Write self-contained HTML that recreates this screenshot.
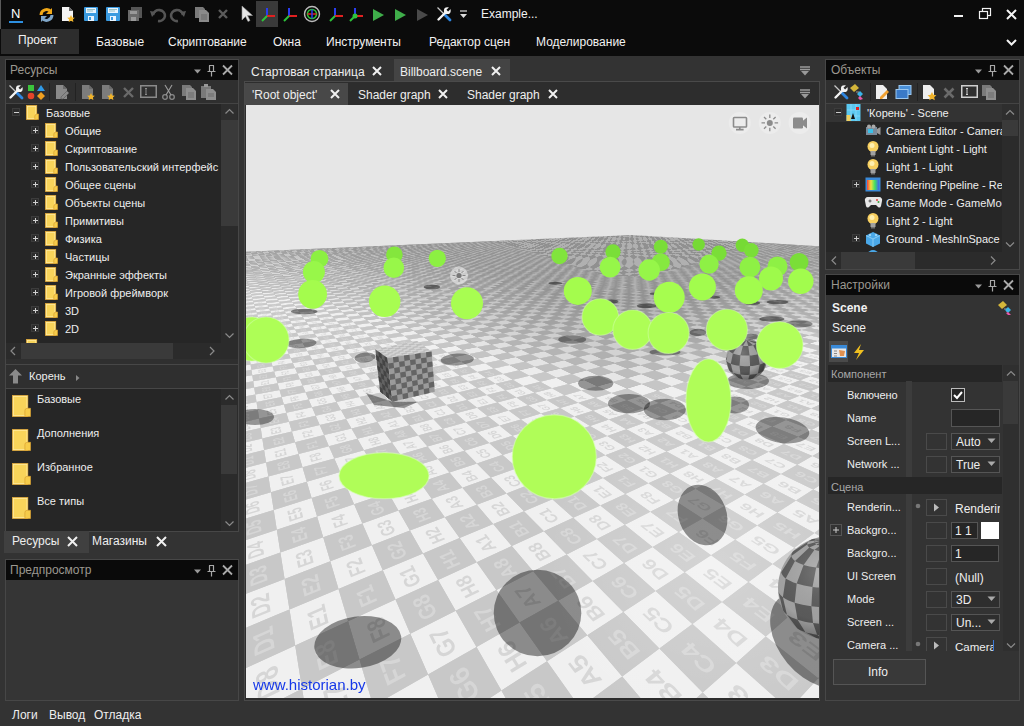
<!DOCTYPE html><html><head><meta charset="utf-8"><style>
*{margin:0;padding:0;box-sizing:border-box}
html,body{width:1024px;height:726px;overflow:hidden;background:#333;font-family:"Liberation Sans",sans-serif;font-size:12px;color:#e6e6e6}
.a{position:absolute}
.t{position:absolute;white-space:nowrap;line-height:14px}
svg{position:absolute;overflow:visible}
</style></head><body><div class="a" style="left:0;top:0;width:1024px;height:56px;background:#0b0b0b"></div><div class="a" style="left:0px;top:0px;width:1px;height:29px;background:#5a5a5a;"></div><div class="a" style="left:1px;top:29px;width:78px;height:25px;background:#2d2d2d;"></div><div class="t" style="left:96px;top:35px;font-size:12px;color:#f2f2f2;">Базовые</div><div class="t" style="left:168px;top:35px;font-size:12px;color:#f2f2f2;">Скриптование</div><div class="t" style="left:273px;top:35px;font-size:12px;color:#f2f2f2;">Окна</div><div class="t" style="left:326px;top:35px;font-size:12px;color:#f2f2f2;">Инструменты</div><div class="t" style="left:429px;top:35px;font-size:12px;color:#f2f2f2;">Редактор сцен</div><div class="t" style="left:536px;top:35px;font-size:12px;color:#f2f2f2;">Моделирование</div><div class="t" style="left:18px;top:33px;font-size:12px;color:#f2f2f2;">Проект</div><div class="t" style="left:481px;top:7px;font-size:12px;color:#f2f2f2;">Example...</div><div class="t" style="left:11px;top:7px;font-size:13px;color:#fff">N</div><div class="a" style="left:9px;top:21px;width:14px;height:2px;background:#2d8fe0;"></div><svg style="left:38px;top:6px" width="17" height="17" viewBox="0 0 17 17"><path d="M3 9a5.5 5.5 0 0 1 10-3" stroke="#f0a818" stroke-width="3" fill="none"/><path d="M14 2v6h-6z" fill="#f0a818"/><path d="M14 9a5.5 5.5 0 0 1-10 3" stroke="#7fa6c8" stroke-width="3" fill="none"/><path d="M3 16v-6h6z" fill="#7fa6c8"/></svg><svg style="left:60px;top:6px" width="16" height="16" viewBox="0 0 16 16"><path d="M2 1h7l4 4v10h-11z" fill="#f4f4f4"/><path d="M9 1v4h4" fill="#6a6a6a"/><path d="M11 9l1.2 2.4 2.6.3-1.9 1.8.5 2.5-2.4-1.3-2.4 1.3.5-2.5-1.9-1.8 2.6-.3z" fill="#f2b52b"/></svg><svg style="left:83px;top:6px" width="16" height="16" viewBox="0 0 16 16"><rect x="1" y="1" width="14" height="14" rx="1" fill="#3b9be0"/><rect x="3" y="2" width="10" height="5" fill="#e8f4ff"/><path d="M4 3.5h8M4 5h6" stroke="#7aa" stroke-width="0.7"/><rect x="5" y="10" width="6" height="5" fill="#e8f4ff"/><rect x="6" y="11" width="2" height="3" fill="#3b9be0"/></svg><svg style="left:105px;top:6px" width="16" height="16" viewBox="0 0 16 16"><rect x="1" y="1" width="14" height="14" rx="1" fill="#3b9be0"/><rect x="3" y="2" width="10" height="5" fill="#e8f4ff"/><path d="M4 3.5h8M4 5h6" stroke="#7aa" stroke-width="0.7"/><rect x="5" y="10" width="6" height="5" fill="#e8f4ff"/><rect x="6" y="11" width="2" height="3" fill="#3b9be0"/></svg><svg style="left:127px;top:6px" width="16" height="16" viewBox="0 0 16 16"><rect x="4" y="1" width="11" height="11" fill="#555"/><rect x="1" y="4" width="11" height="11" fill="#6a6a6a"/><rect x="3" y="5" width="7" height="3" fill="#999"/><rect x="4" y="11" width="5" height="4" fill="#999"/></svg><svg style="left:149px;top:6px" width="16" height="16" viewBox="0 0 16 16"><path d="M4 9a6 5.5 0 1 1 5 6" stroke="#555" stroke-width="2.6" fill="none"/><path d="M1 5l6 1-4 5z" fill="#555"/></svg><svg style="left:171px;top:6px" width="16" height="16" viewBox="0 0 16 16"><path d="M12 9a6 5.5 0 1 0 -5 6" stroke="#555" stroke-width="2.6" fill="none"/><path d="M15 5l-6 1 4 5z" fill="#555"/></svg><svg style="left:194px;top:6px" width="16" height="16" viewBox="0 0 16 16"><path d="M1 1h8l2 2v9h-10z" fill="#7a7a7a"/><path d="M5 4h7l3 3v9h-10z" fill="#8a8a8a"/><path d="M7 9h6M7 11h6M7 13h6" stroke="#666"/></svg><svg style="left:218px;top:9px" width="10" height="10" viewBox="0 0 10 10"><path d="M1 1L9 9M9 1L1 9" stroke="#5c5c5c" stroke-width="2.4"/></svg><svg style="left:240px;top:5px" width="14" height="18" viewBox="0 0 14 18"><path d="M2 1v14l3.5-3.5 2.5 5 2-1-2.5-5h5z" fill="#e6e6e6" stroke="#999" stroke-width="0.6"/></svg><div class="a" style="left:256px;top:1px;width:22px;height:26px;background:#3a3a3a;"></div><svg style="left:260px;top:6px" width="16" height="16" viewBox="0 0 16 16"><path d="M7 2v8" stroke="#2a3df0" stroke-width="2"/><path d="M7 10h8" stroke="#e02020" stroke-width="2"/><path d="M7 10l-5 5" stroke="#2ec43a" stroke-width="2"/></svg><svg style="left:282px;top:6px" width="16" height="16" viewBox="0 0 16 16"><path d="M7 2v8" stroke="#2a3df0" stroke-width="2"/><path d="M7 10h8" stroke="#e02020" stroke-width="2"/><path d="M7 10l-5 5" stroke="#2ec43a" stroke-width="2"/></svg><svg style="left:303px;top:5px" width="18" height="18" viewBox="0 0 18 18"><circle cx="9" cy="9" r="7.5" stroke="#bbb" stroke-width="1.4" fill="none"/><circle cx="9" cy="9" r="4.5" stroke="#2ec43a" stroke-width="1.6" fill="none"/><path d="M4.5 9h9" stroke="#e02020" stroke-width="1.5"/><path d="M9 4.5v9" stroke="#2a3df0" stroke-width="1.5"/></svg><svg style="left:328px;top:6px" width="16" height="16" viewBox="0 0 16 16"><path d="M7 2v8" stroke="#2a3df0" stroke-width="2"/><path d="M7 10h8" stroke="#e02020" stroke-width="2"/><path d="M7 10l-5 5" stroke="#2ec43a" stroke-width="2"/></svg><svg style="left:348px;top:6px" width="16" height="16" viewBox="0 0 16 16"><path d="M7 2v8" stroke="#2a3df0" stroke-width="2"/><path d="M7 10h8" stroke="#e02020" stroke-width="2"/><path d="M7 10l-5 5" stroke="#2ec43a" stroke-width="2"/><circle cx="7" cy="10" r="2.5" fill="#2ec43a"/></svg><svg style="left:371px;top:7px" width="14" height="16" viewBox="0 0 14 16"><path d="M2 2l11 6-11 6z" fill="#3fae4a"/></svg><svg style="left:393px;top:7px" width="14" height="16" viewBox="0 0 14 16"><path d="M2 2l11 6-11 6z" fill="#3fae4a"/></svg><svg style="left:415px;top:7px" width="14" height="16" viewBox="0 0 14 16"><path d="M2 2l11 6-11 6z" fill="#4a4a4a"/></svg><svg style="left:436px;top:6px" width="16" height="16" viewBox="0 0 16 16"><path d="M1.5 1.5L8 8" stroke="#c8c8c8" stroke-width="1.3"/><path d="M9 9L14 14" stroke="#2f86e0" stroke-width="2.8" stroke-linecap="round"/><path d="M2.5 13.5L9 7" stroke="#f4f4f4" stroke-width="2.4" stroke-linecap="round"/><circle cx="11.3" cy="4.7" r="3.4" fill="#f4f4f4"/><path d="M11.3 4.7L15.5 0.5" stroke="#0b0b0b" stroke-width="2.4"/></svg><svg style="left:459px;top:10px" width="9" height="9" viewBox="0 0 9 9"><path d="M1 1h7" stroke="#ddd" stroke-width="1.2"/><path d="M1 4h7l-3.5 4z" fill="#ddd"/></svg><div class="a" style="left:954px;top:15px;width:9px;height:2px;background:#f2f2f2;"></div><svg style="left:979px;top:8px" width="12" height="12" viewBox="0 0 12 12"><rect x="3.5" y="0.5" width="8" height="7" fill="none" stroke="#f2f2f2" stroke-width="1.2"/><rect x="0.5" y="3.5" width="8" height="7" fill="#0b0b0b" stroke="#f2f2f2" stroke-width="1.2"/></svg><svg style="left:1006px;top:9px" width="11" height="11" viewBox="0 0 11 11"><path d="M1 1L10 10M10 1L1 10" stroke="#f4f4f4" stroke-width="2"/></svg><svg style="left:1006px;top:39px" width="11" height="7" viewBox="0 0 11 7"><path d="M1 1l4.5 4.5L10 1" stroke="#f2f2f2" stroke-width="2" fill="none"/></svg><div class="a" style="left:5px;top:59px;width:234px;height:306px;border:1px solid #474747;background:#2f2f2f"></div><div class="a" style="left:6px;top:60px;width:232px;height:20px;background:#0a0a0a;"></div><div class="t" style="left:10px;top:63px;font-size:12px;color:#9c9890;">Ресурсы</div><svg style="left:192px;top:64px" width="44" height="14" viewBox="0 0 44 14"><path d="M2 5.5h7l-3.5 4z" fill="#9a9a9a"/><path d="M17 1.5h5M17.5 1.5v6M21.5 1.5v6M15.5 7.5h8M19.5 7.5v5" stroke="#a8a8a8" stroke-width="1.2" fill="none"/><path d="M31 1.5l9 9M40 1.5l-9 9" stroke="#aaaaaa" stroke-width="1.8"/></svg><div class="a" style="left:6px;top:103px;width:232px;height:1px;background:#444;"></div><svg style="left:8px;top:84px" width="16" height="16" viewBox="0 0 16 16"><path d="M1.5 1.5L8 8" stroke="#c8c8c8" stroke-width="1.3"/><path d="M9 9L14 14" stroke="#2f86e0" stroke-width="2.8" stroke-linecap="round"/><path d="M2.5 13.5L9 7" stroke="#f4f4f4" stroke-width="2.4" stroke-linecap="round"/><circle cx="11.3" cy="4.7" r="3.4" fill="#f4f4f4"/><path d="M11.3 4.7L15.5 0.5" stroke="#303030" stroke-width="2.4"/></svg><svg style="left:27px;top:84px" width="18" height="16" viewBox="0 0 18 16"><rect x="1" y="1" width="6" height="6" fill="#3cc43c"/><path d="M10 7l4-6 4 6z" fill="#2f9ae8"/><circle cx="4" cy="12" r="3.3" fill="#e5452a"/><path d="M14 8l4 4-4 4-4-4z" fill="#f0a020"/></svg><div class="a" style="left:49px;top:83px;width:1px;height:18px;background:#222;"></div><svg style="left:54px;top:84px" width="16" height="16" viewBox="0 0 16 16"><path d="M2 1h7l4 4v10h-11z" fill="#8a8a8a"/><path d="M9 1v4h4" fill="#6a6a6a"/><path d="M7 13l6-6 2 2-6 6h-2z" fill="#8a8a8a" stroke="#555" stroke-width="0.6"/></svg><div class="a" style="left:75px;top:83px;width:1px;height:18px;background:#222;"></div><svg style="left:80px;top:84px" width="16" height="16" viewBox="0 0 16 16"><path d="M2 1h7l4 4v10h-11z" fill="#7c7c7c"/><path d="M9 1v4h4" fill="#6a6a6a"/><path d="M11 9l1.2 2.4 2.6.3-1.9 1.8.5 2.5-2.4-1.3-2.4 1.3.5-2.5-1.9-1.8 2.6-.3z" fill="#f2b52b"/></svg><svg style="left:100px;top:84px" width="16" height="16" viewBox="0 0 16 16"><path d="M2 1h7l4 4v10h-11z" fill="#7c7c7c"/><path d="M9 1v4h4" fill="#6a6a6a"/><path d="M11 9l1.2 2.4 2.6.3-1.9 1.8.5 2.5-2.4-1.3-2.4 1.3.5-2.5-1.9-1.8 2.6-.3z" fill="#f2b52b"/></svg><svg style="left:123px;top:87px" width="11" height="11" viewBox="0 0 11 11"><path d="M1 1L10 10M10 1L1 10" stroke="#6a6a6a" stroke-width="2.4"/></svg><svg style="left:140px;top:85px" width="17" height="13" viewBox="0 0 17 13"><rect x="0.75" y="0.75" width="15.5" height="11.5" fill="none" stroke="#8a8a8a" stroke-width="1.5"/><path d="M5 3.5h2M6 3.5v6M5 9.5h2" stroke="#8a8a8a"/></svg><svg style="left:162px;top:84px" width="13" height="16" viewBox="0 0 13 16"><circle cx="3" cy="13" r="2.3" stroke="#888" fill="none" stroke-width="1.3"/><circle cx="10" cy="13" r="2.3" stroke="#888" fill="none" stroke-width="1.3"/><path d="M4 11L10 1M9 11L3 1" stroke="#999" stroke-width="1.2"/></svg><svg style="left:181px;top:84px" width="16" height="16" viewBox="0 0 16 16"><path d="M1 1h8l2 2v9h-10z" fill="#7a7a7a"/><path d="M5 4h7l3 3v9h-10z" fill="#8e8e8e"/><path d="M7 9h6M7 11h6M7 13h6" stroke="#6a6a6a"/></svg><svg style="left:200px;top:84px" width="16" height="16" viewBox="0 0 16 16"><rect x="1" y="2" width="10" height="12" fill="#7a7a7a"/><rect x="4" y="0" width="4" height="3" fill="#999"/><path d="M6 5h7l3 3v8h-10z" fill="#8e8e8e"/><path d="M8 10h6M8 12h6" stroke="#6a6a6a"/></svg><div class="a" style="left:6px;top:104px;width:215px;height:239px;background:#262626;"></div><div class="a" style="left:221px;top:104px;width:17px;height:239px;background:#2b2b2b;"></div><div class="a" style="left:221px;top:104px;width:16px;height:16px;background:#2e2e2e;"></div><div class="a" style="left:221px;top:120px;width:17px;height:106px;background:#3a3a3a;"></div><svg style="left:221px;top:103px" width="17" height="17" viewBox="0 0 17 17"><path d="M4.5 10.5l4-4 4 4" stroke="#8a8a8a" stroke-width="1.2" fill="none"/></svg><svg style="left:221px;top:327px" width="17" height="17" viewBox="0 0 17 17"><path d="M4.5 6.5l4 4 4-4" stroke="#8a8a8a" stroke-width="1.2" fill="none"/></svg><svg style="left:12px;top:108px" width="8" height="8" viewBox="0 0 8 8"><rect x="0.5" y="0.5" width="7" height="7" fill="#2c2c2c" stroke="#3c3c3c"/><path d="M2 4.5h5" stroke="#d0d0d0"/></svg><svg style="left:26px;top:105px" width="13" height="15" viewBox="0 0 13 15"><rect x="0.5" y="0.5" width="10.2" height="14" fill="#f8d45a" stroke="#d9a030" stroke-width="0.8"/><rect x="1.3" y="1.3" width="8.6" height="12.4" fill="none" stroke="#ffeaa0" stroke-width="0.9"/><path d="M8.8 14.5V11.3q0-2 2-2.3h1.6999999999999993V14.5z" fill="#f6cc4a" stroke="#d9a030" stroke-width="0.7"/></svg><div class="t" style="left:46px;top:106px;font-size:11px;color:#eeeeee;">Базовые</div><svg style="left:31px;top:126px" width="8" height="8" viewBox="0 0 8 8"><rect x="0.5" y="0.5" width="7" height="7" fill="#2c2c2c" stroke="#3c3c3c"/><path d="M2 4.5h5" stroke="#d0d0d0"/><path d="M4.5 2v5" stroke="#d0d0d0"/></svg><svg style="left:45px;top:123px" width="13" height="15" viewBox="0 0 13 15"><rect x="0.5" y="0.5" width="10.2" height="14" fill="#f8d45a" stroke="#d9a030" stroke-width="0.8"/><rect x="1.3" y="1.3" width="8.6" height="12.4" fill="none" stroke="#ffeaa0" stroke-width="0.9"/><path d="M8.8 14.5V11.3q0-2 2-2.3h1.6999999999999993V14.5z" fill="#f6cc4a" stroke="#d9a030" stroke-width="0.7"/></svg><div class="t" style="left:65px;top:124px;font-size:11px;color:#eeeeee;">Общие</div><svg style="left:31px;top:144px" width="8" height="8" viewBox="0 0 8 8"><rect x="0.5" y="0.5" width="7" height="7" fill="#2c2c2c" stroke="#3c3c3c"/><path d="M2 4.5h5" stroke="#d0d0d0"/><path d="M4.5 2v5" stroke="#d0d0d0"/></svg><svg style="left:45px;top:141px" width="13" height="15" viewBox="0 0 13 15"><rect x="0.5" y="0.5" width="10.2" height="14" fill="#f8d45a" stroke="#d9a030" stroke-width="0.8"/><rect x="1.3" y="1.3" width="8.6" height="12.4" fill="none" stroke="#ffeaa0" stroke-width="0.9"/><path d="M8.8 14.5V11.3q0-2 2-2.3h1.6999999999999993V14.5z" fill="#f6cc4a" stroke="#d9a030" stroke-width="0.7"/></svg><div class="t" style="left:65px;top:142px;font-size:11px;color:#eeeeee;">Скриптование</div><svg style="left:31px;top:162px" width="8" height="8" viewBox="0 0 8 8"><rect x="0.5" y="0.5" width="7" height="7" fill="#2c2c2c" stroke="#3c3c3c"/><path d="M2 4.5h5" stroke="#d0d0d0"/><path d="M4.5 2v5" stroke="#d0d0d0"/></svg><svg style="left:45px;top:159px" width="13" height="15" viewBox="0 0 13 15"><rect x="0.5" y="0.5" width="10.2" height="14" fill="#f8d45a" stroke="#d9a030" stroke-width="0.8"/><rect x="1.3" y="1.3" width="8.6" height="12.4" fill="none" stroke="#ffeaa0" stroke-width="0.9"/><path d="M8.8 14.5V11.3q0-2 2-2.3h1.6999999999999993V14.5z" fill="#f6cc4a" stroke="#d9a030" stroke-width="0.7"/></svg><div class="t" style="left:65px;top:160px;font-size:11px;color:#eeeeee;">Пользовательский интерфейс</div><svg style="left:31px;top:180px" width="8" height="8" viewBox="0 0 8 8"><rect x="0.5" y="0.5" width="7" height="7" fill="#2c2c2c" stroke="#3c3c3c"/><path d="M2 4.5h5" stroke="#d0d0d0"/><path d="M4.5 2v5" stroke="#d0d0d0"/></svg><svg style="left:45px;top:177px" width="13" height="15" viewBox="0 0 13 15"><rect x="0.5" y="0.5" width="10.2" height="14" fill="#f8d45a" stroke="#d9a030" stroke-width="0.8"/><rect x="1.3" y="1.3" width="8.6" height="12.4" fill="none" stroke="#ffeaa0" stroke-width="0.9"/><path d="M8.8 14.5V11.3q0-2 2-2.3h1.6999999999999993V14.5z" fill="#f6cc4a" stroke="#d9a030" stroke-width="0.7"/></svg><div class="t" style="left:65px;top:178px;font-size:11px;color:#eeeeee;">Общее сцены</div><svg style="left:31px;top:198px" width="8" height="8" viewBox="0 0 8 8"><rect x="0.5" y="0.5" width="7" height="7" fill="#2c2c2c" stroke="#3c3c3c"/><path d="M2 4.5h5" stroke="#d0d0d0"/><path d="M4.5 2v5" stroke="#d0d0d0"/></svg><svg style="left:45px;top:195px" width="13" height="15" viewBox="0 0 13 15"><rect x="0.5" y="0.5" width="10.2" height="14" fill="#f8d45a" stroke="#d9a030" stroke-width="0.8"/><rect x="1.3" y="1.3" width="8.6" height="12.4" fill="none" stroke="#ffeaa0" stroke-width="0.9"/><path d="M8.8 14.5V11.3q0-2 2-2.3h1.6999999999999993V14.5z" fill="#f6cc4a" stroke="#d9a030" stroke-width="0.7"/></svg><div class="t" style="left:65px;top:196px;font-size:11px;color:#eeeeee;">Объекты сцены</div><svg style="left:31px;top:216px" width="8" height="8" viewBox="0 0 8 8"><rect x="0.5" y="0.5" width="7" height="7" fill="#2c2c2c" stroke="#3c3c3c"/><path d="M2 4.5h5" stroke="#d0d0d0"/><path d="M4.5 2v5" stroke="#d0d0d0"/></svg><svg style="left:45px;top:213px" width="13" height="15" viewBox="0 0 13 15"><rect x="0.5" y="0.5" width="10.2" height="14" fill="#f8d45a" stroke="#d9a030" stroke-width="0.8"/><rect x="1.3" y="1.3" width="8.6" height="12.4" fill="none" stroke="#ffeaa0" stroke-width="0.9"/><path d="M8.8 14.5V11.3q0-2 2-2.3h1.6999999999999993V14.5z" fill="#f6cc4a" stroke="#d9a030" stroke-width="0.7"/></svg><div class="t" style="left:65px;top:214px;font-size:11px;color:#eeeeee;">Примитивы</div><svg style="left:31px;top:234px" width="8" height="8" viewBox="0 0 8 8"><rect x="0.5" y="0.5" width="7" height="7" fill="#2c2c2c" stroke="#3c3c3c"/><path d="M2 4.5h5" stroke="#d0d0d0"/><path d="M4.5 2v5" stroke="#d0d0d0"/></svg><svg style="left:45px;top:231px" width="13" height="15" viewBox="0 0 13 15"><rect x="0.5" y="0.5" width="10.2" height="14" fill="#f8d45a" stroke="#d9a030" stroke-width="0.8"/><rect x="1.3" y="1.3" width="8.6" height="12.4" fill="none" stroke="#ffeaa0" stroke-width="0.9"/><path d="M8.8 14.5V11.3q0-2 2-2.3h1.6999999999999993V14.5z" fill="#f6cc4a" stroke="#d9a030" stroke-width="0.7"/></svg><div class="t" style="left:65px;top:232px;font-size:11px;color:#eeeeee;">Физика</div><svg style="left:31px;top:252px" width="8" height="8" viewBox="0 0 8 8"><rect x="0.5" y="0.5" width="7" height="7" fill="#2c2c2c" stroke="#3c3c3c"/><path d="M2 4.5h5" stroke="#d0d0d0"/><path d="M4.5 2v5" stroke="#d0d0d0"/></svg><svg style="left:45px;top:249px" width="13" height="15" viewBox="0 0 13 15"><rect x="0.5" y="0.5" width="10.2" height="14" fill="#f8d45a" stroke="#d9a030" stroke-width="0.8"/><rect x="1.3" y="1.3" width="8.6" height="12.4" fill="none" stroke="#ffeaa0" stroke-width="0.9"/><path d="M8.8 14.5V11.3q0-2 2-2.3h1.6999999999999993V14.5z" fill="#f6cc4a" stroke="#d9a030" stroke-width="0.7"/></svg><div class="t" style="left:65px;top:250px;font-size:11px;color:#eeeeee;">Частицы</div><svg style="left:31px;top:270px" width="8" height="8" viewBox="0 0 8 8"><rect x="0.5" y="0.5" width="7" height="7" fill="#2c2c2c" stroke="#3c3c3c"/><path d="M2 4.5h5" stroke="#d0d0d0"/><path d="M4.5 2v5" stroke="#d0d0d0"/></svg><svg style="left:45px;top:267px" width="13" height="15" viewBox="0 0 13 15"><rect x="0.5" y="0.5" width="10.2" height="14" fill="#f8d45a" stroke="#d9a030" stroke-width="0.8"/><rect x="1.3" y="1.3" width="8.6" height="12.4" fill="none" stroke="#ffeaa0" stroke-width="0.9"/><path d="M8.8 14.5V11.3q0-2 2-2.3h1.6999999999999993V14.5z" fill="#f6cc4a" stroke="#d9a030" stroke-width="0.7"/></svg><div class="t" style="left:65px;top:268px;font-size:11px;color:#eeeeee;">Экранные эффекты</div><svg style="left:31px;top:288px" width="8" height="8" viewBox="0 0 8 8"><rect x="0.5" y="0.5" width="7" height="7" fill="#2c2c2c" stroke="#3c3c3c"/><path d="M2 4.5h5" stroke="#d0d0d0"/><path d="M4.5 2v5" stroke="#d0d0d0"/></svg><svg style="left:45px;top:285px" width="13" height="15" viewBox="0 0 13 15"><rect x="0.5" y="0.5" width="10.2" height="14" fill="#f8d45a" stroke="#d9a030" stroke-width="0.8"/><rect x="1.3" y="1.3" width="8.6" height="12.4" fill="none" stroke="#ffeaa0" stroke-width="0.9"/><path d="M8.8 14.5V11.3q0-2 2-2.3h1.6999999999999993V14.5z" fill="#f6cc4a" stroke="#d9a030" stroke-width="0.7"/></svg><div class="t" style="left:65px;top:286px;font-size:11px;color:#eeeeee;">Игровой фреймворк</div><svg style="left:31px;top:306px" width="8" height="8" viewBox="0 0 8 8"><rect x="0.5" y="0.5" width="7" height="7" fill="#2c2c2c" stroke="#3c3c3c"/><path d="M2 4.5h5" stroke="#d0d0d0"/><path d="M4.5 2v5" stroke="#d0d0d0"/></svg><svg style="left:45px;top:303px" width="13" height="15" viewBox="0 0 13 15"><rect x="0.5" y="0.5" width="10.2" height="14" fill="#f8d45a" stroke="#d9a030" stroke-width="0.8"/><rect x="1.3" y="1.3" width="8.6" height="12.4" fill="none" stroke="#ffeaa0" stroke-width="0.9"/><path d="M8.8 14.5V11.3q0-2 2-2.3h1.6999999999999993V14.5z" fill="#f6cc4a" stroke="#d9a030" stroke-width="0.7"/></svg><div class="t" style="left:65px;top:304px;font-size:11px;color:#eeeeee;">3D</div><svg style="left:31px;top:324px" width="8" height="8" viewBox="0 0 8 8"><rect x="0.5" y="0.5" width="7" height="7" fill="#2c2c2c" stroke="#3c3c3c"/><path d="M2 4.5h5" stroke="#d0d0d0"/><path d="M4.5 2v5" stroke="#d0d0d0"/></svg><svg style="left:45px;top:321px" width="13" height="15" viewBox="0 0 13 15"><rect x="0.5" y="0.5" width="10.2" height="14" fill="#f8d45a" stroke="#d9a030" stroke-width="0.8"/><rect x="1.3" y="1.3" width="8.6" height="12.4" fill="none" stroke="#ffeaa0" stroke-width="0.9"/><path d="M8.8 14.5V11.3q0-2 2-2.3h1.6999999999999993V14.5z" fill="#f6cc4a" stroke="#d9a030" stroke-width="0.7"/></svg><div class="t" style="left:65px;top:322px;font-size:11px;color:#eeeeee;">2D</div><svg style="left:26px;top:339px" width="13" height="15" viewBox="0 0 13 15"><rect x="0.5" y="0.5" width="10.2" height="14" fill="#f8d45a" stroke="#d9a030" stroke-width="0.8"/><rect x="1.3" y="1.3" width="8.6" height="12.4" fill="none" stroke="#ffeaa0" stroke-width="0.9"/><path d="M8.8 14.5V11.3q0-2 2-2.3h1.6999999999999993V14.5z" fill="#f6cc4a" stroke="#d9a030" stroke-width="0.7"/></svg><div class="a" style="left:6px;top:343px;width:215px;height:16px;background:#2b2b2b;"></div><div class="a" style="left:21px;top:343px;width:152px;height:16px;background:#3a3a3a;"></div><div class="a" style="left:221px;top:343px;width:17px;height:16px;background:#2b2b2b;"></div><svg style="left:5px;top:343px" width="16" height="16" viewBox="0 0 16 16"><path d="M10 4l-4 4 4 4" stroke="#8a8a8a" stroke-width="1.2" fill="none"/></svg><svg style="left:204px;top:343px" width="16" height="16" viewBox="0 0 16 16"><path d="M6 4l4 4-4 4" stroke="#8a8a8a" stroke-width="1.2" fill="none"/></svg><div class="a" style="left:6px;top:359px;width:232px;height:5px;background:#2f2f2f;"></div><div class="a" style="left:5px;top:364px;width:234px;height:168px;border:1px solid #474747;background:#262626"></div><div class="a" style="left:6px;top:365px;width:232px;height:23px;background:#2f2f2f;"></div><div class="a" style="left:6px;top:388px;width:232px;height:1px;background:#474747;"></div><svg style="left:8px;top:368px" width="15" height="16" viewBox="0 0 15 16"><path d="M7.5 1l6.5 6.5h-4v8h-5v-8h-4z" fill="#8a8a8a"/></svg><div class="t" style="left:29px;top:369px;font-size:11px;color:#eeeeee;">Корень</div><svg style="left:76px;top:375px" width="4" height="6" viewBox="0 0 4 6"><path d="M0 0l3.5 3L0 6z" fill="#888"/></svg><svg style="left:12px;top:395px" width="19" height="22" viewBox="0 0 19 22"><rect x="0.5" y="0.5" width="15.3" height="21" fill="#f8d45a" stroke="#d9a030" stroke-width="0.8"/><rect x="1.3" y="1.3" width="13.700000000000001" height="19.4" fill="none" stroke="#ffeaa0" stroke-width="0.9"/><path d="M12.9 21.5V15.6q0-2 2-2.3h3.5999999999999996V21.5z" fill="#f6cc4a" stroke="#d9a030" stroke-width="0.7"/></svg><div class="t" style="left:37px;top:392px;font-size:11px;color:#eeeeee;">Базовые</div><svg style="left:12px;top:429px" width="19" height="22" viewBox="0 0 19 22"><rect x="0.5" y="0.5" width="15.3" height="21" fill="#f8d45a" stroke="#d9a030" stroke-width="0.8"/><rect x="1.3" y="1.3" width="13.700000000000001" height="19.4" fill="none" stroke="#ffeaa0" stroke-width="0.9"/><path d="M12.9 21.5V15.6q0-2 2-2.3h3.5999999999999996V21.5z" fill="#f6cc4a" stroke="#d9a030" stroke-width="0.7"/></svg><div class="t" style="left:37px;top:426px;font-size:11px;color:#eeeeee;">Дополнения</div><svg style="left:12px;top:463px" width="19" height="22" viewBox="0 0 19 22"><rect x="0.5" y="0.5" width="15.3" height="21" fill="#f8d45a" stroke="#d9a030" stroke-width="0.8"/><rect x="1.3" y="1.3" width="13.700000000000001" height="19.4" fill="none" stroke="#ffeaa0" stroke-width="0.9"/><path d="M12.9 21.5V15.6q0-2 2-2.3h3.5999999999999996V21.5z" fill="#f6cc4a" stroke="#d9a030" stroke-width="0.7"/></svg><div class="t" style="left:37px;top:460px;font-size:11px;color:#eeeeee;">Избранное</div><svg style="left:12px;top:497px" width="19" height="22" viewBox="0 0 19 22"><rect x="0.5" y="0.5" width="15.3" height="21" fill="#f8d45a" stroke="#d9a030" stroke-width="0.8"/><rect x="1.3" y="1.3" width="13.700000000000001" height="19.4" fill="none" stroke="#ffeaa0" stroke-width="0.9"/><path d="M12.9 21.5V15.6q0-2 2-2.3h3.5999999999999996V21.5z" fill="#f6cc4a" stroke="#d9a030" stroke-width="0.7"/></svg><div class="t" style="left:37px;top:494px;font-size:11px;color:#eeeeee;">Все типы</div><div class="a" style="left:221px;top:389px;width:17px;height:142px;background:#2b2b2b;"></div><div class="a" style="left:221px;top:405px;width:16px;height:69px;background:#3a3a3a;"></div><svg style="left:221px;top:389px" width="17" height="17" viewBox="0 0 17 17"><path d="M4.5 10.5l4-4 4 4" stroke="#8a8a8a" stroke-width="1.2" fill="none"/></svg><svg style="left:221px;top:515px" width="17" height="17" viewBox="0 0 17 17"><path d="M4.5 6.5l4 4 4-4" stroke="#8a8a8a" stroke-width="1.2" fill="none"/></svg><div class="a" style="left:4px;top:531px;width:85px;height:22px;background:#404040;"></div><div class="t" style="left:12px;top:534px;font-size:12px;color:#eeeeee;">Ресурсы</div><svg style="left:67px;top:536px" width="11" height="11" viewBox="0 0 11 11"><path d="M1 1L10 10M10 1L1 10" stroke="#f0f0f0" stroke-width="2"/></svg><div class="t" style="left:92px;top:534px;font-size:12px;color:#eeeeee;">Магазины</div><svg style="left:156px;top:536px" width="11" height="11" viewBox="0 0 11 11"><path d="M1 1L10 10M10 1L1 10" stroke="#f0f0f0" stroke-width="2"/></svg><div class="a" style="left:5px;top:559px;width:234px;height:142px;border:1px solid #474747;background:#353535"></div><div class="a" style="left:6px;top:560px;width:232px;height:20px;background:#0a0a0a;"></div><div class="t" style="left:10px;top:563px;font-size:12px;color:#9c9890;">Предпросмотр</div><svg style="left:192px;top:564px" width="44" height="14" viewBox="0 0 44 14"><path d="M2 5.5h7l-3.5 4z" fill="#9a9a9a"/><path d="M17 1.5h5M17.5 1.5v6M21.5 1.5v6M15.5 7.5h8M19.5 7.5v5" stroke="#a8a8a8" stroke-width="1.2" fill="none"/><path d="M31 1.5l9 9M40 1.5l-9 9" stroke="#aaaaaa" stroke-width="1.8"/></svg><div class="t" style="left:12px;top:708px;font-size:12px;color:#eeeeee;">Логи</div><div class="t" style="left:49px;top:708px;font-size:12px;color:#eeeeee;">Вывод</div><div class="t" style="left:94px;top:708px;font-size:12px;color:#eeeeee;">Отладка</div><div class="a" style="left:244px;top:81px;width:576px;height:620px;border:1px solid #4a4a4a;background:#2d2d2d"></div><div class="a" style="left:394px;top:59px;width:116px;height:22px;background:#444"></div><div class="t" style="left:251px;top:65px;font-size:12px;color:#eee">Стартовая страница</div><div class="t" style="left:400px;top:65px;font-size:12px;color:#eee">Billboard.scene</div><div class="a" style="left:245px;top:83px;width:103px;height:22px;background:#484848"></div><div class="t" style="left:252px;top:88px;font-size:12px;color:#eee">'Root object'</div><div class="t" style="left:358px;top:88px;font-size:12px;color:#eee">Shader graph</div><div class="t" style="left:467px;top:88px;font-size:12px;color:#eee">Shader graph</div><svg style="left:372px;top:66px" width="10" height="10" viewBox="0 0 10 10"><path d="M1 1L9 9M9 1L1 9" stroke="#f0f0f0" stroke-width="2"/></svg><svg style="left:491px;top:66px" width="10" height="10" viewBox="0 0 10 10"><path d="M1 1L9 9M9 1L1 9" stroke="#f0f0f0" stroke-width="2"/></svg><svg style="left:330px;top:89px" width="10" height="10" viewBox="0 0 10 10"><path d="M1 1L9 9M9 1L1 9" stroke="#f0f0f0" stroke-width="2"/></svg><svg style="left:438px;top:89px" width="10" height="10" viewBox="0 0 10 10"><path d="M1 1L9 9M9 1L1 9" stroke="#f0f0f0" stroke-width="2"/></svg><svg style="left:548px;top:89px" width="10" height="10" viewBox="0 0 10 10"><path d="M1 1L9 9M9 1L1 9" stroke="#f0f0f0" stroke-width="2"/></svg><svg style="left:799px;top:66px" width="12" height="10" viewBox="0 0 12 10"><path d="M1 1h10M1 3.5h10" stroke="#9a9a9a" stroke-width="1.3"/><path d="M2 5h8l-4 4.5z" fill="#9a9a9a"/></svg><svg style="left:799px;top:89px" width="12" height="10" viewBox="0 0 12 10"><path d="M1 1h10M1 3.5h10" stroke="#9a9a9a" stroke-width="1.3"/><path d="M2 5h8l-4 4.5z" fill="#9a9a9a"/></svg><div class="a" style="left:246px;top:105px;width:573px;height:593px;background:#e6e6e6"></div><div class="a" style="left:0;top:0;width:1024px;height:726px;clip-path:polygon(246px 251.8px,632px 235px,819px 246.2px,819px 698px,246px 698px)"><div class="a" style="left:0;top:0;width:944px;height:864px;transform-origin:0 0;transform:matrix3d(47.1088276,7.76108809,0,0.0376315527,13.0621005,12.0627506,0,0.057860553,0,0,1,0,-343.713026,2458.35514,0,1);background:repeating-conic-gradient(#b0b0b0 0 25%,#909090 0 50%);background-size:16px 16px"></div></div><svg style="left:246px;top:105px;overflow:hidden" width="573" height="593" viewBox="246 105 573 593"><g style="font-family:'Liberation Sans';font-size:16px;font-weight:bold;fill:#d6d6d6" text-anchor="middle" dominant-baseline="central"><defs><clipPath id="fc"><polygon points="246,251.8 632,235 818,246.2 819,246.2 819,699 246,699"/></clipPath></defs><g clip-path="url(#fc)"><path fill="#c8c8c8" d="M238.1 782.6L310.5 741.5L302.1 688.7L236.8 721.9zM235.7 672.8L295.2 645.5L289.5 609.4L234.9 632.3zM234.1 598.3L284.6 578.9L280.4 552.6L233.5 569.3zM233.0 544.4L276.8 529.8L273.7 509.9L232.5 522.7zM232.1 503.6L270.9 492.3L268.4 476.6L231.7 486.7zM231.4 471.6L266.1 462.6L264.1 449.9L231.1 458.1zM230.9 445.9L262.3 438.5L260.7 428.1L230.6 434.8zM230.4 424.7L259.1 418.6L257.8 409.9L230.2 415.5zM230.0 407.1L256.5 401.9L255.3 394.5L229.9 399.3zM229.7 392.1L254.2 387.6L253.2 381.2L229.6 385.4zM229.4 379.2L252.3 375.3L251.4 369.8L229.3 373.4zM229.2 367.9L250.6 364.6L249.8 359.7L229.1 362.9zM229.0 358.1L249.1 355.1L248.4 350.8L228.9 353.7zM228.8 349.4L247.7 346.8L247.1 343.0L228.7 345.5zM228.6 341.7L246.5 339.3L246.0 335.9L228.5 338.2zM302.1 688.7L359.5 659.6L348.1 621.2L295.2 645.5zM289.5 609.4L338.5 588.9L330.3 561.2L284.6 578.9zM280.4 552.6L323.2 537.3L317.1 516.5L276.8 529.8zM273.7 509.9L311.6 498.1L306.8 481.8L270.9 492.3zM268.4 476.6L302.5 467.2L298.6 454.1L266.1 462.6zM264.1 449.9L295.1 442.3L291.9 431.6L262.3 438.5zM260.7 428.1L289.0 421.8L286.3 412.8L259.1 418.6zM257.8 409.9L283.9 404.5L281.6 396.9L256.5 401.9zM255.3 394.5L279.5 389.9L277.6 383.3L254.2 387.6zM253.2 381.2L275.8 377.3L274.1 371.6L252.3 375.3zM251.4 369.8L272.5 366.3L271.1 361.3L250.6 364.6zM249.8 359.7L269.7 356.7L268.4 352.3L249.1 355.1zM248.4 350.8L267.2 348.1L266.0 344.2L247.7 346.8zM247.1 343.0L264.9 340.5L263.9 337.0L246.5 339.3zM246.0 335.9L262.9 333.7L261.9 330.6L245.5 332.6zM245.0 329.5L261.1 327.6L260.2 324.7L244.5 326.6zM244.1 323.8L259.4 322.0L258.6 319.4L243.7 321.1zM243.2 318.6L257.9 316.9L257.2 314.6L242.9 316.1zM242.5 313.8L256.5 312.3L255.9 310.1L242.1 311.6zM241.8 309.4L255.3 308.0L254.7 306.0L241.5 307.4zM241.2 305.4L254.1 304.1L253.6 302.3L240.9 303.5zM240.6 301.7L253.0 300.5L252.5 298.8L240.3 299.9zM240.0 298.2L252.0 297.1L251.6 295.5L239.8 296.6zM239.5 295.0L251.1 294.0L250.7 292.5L239.3 293.5zM239.0 292.0L250.2 291.1L249.8 289.7L238.8 290.6zM373.2 705.8L428.1 674.6L410.3 633.7L359.5 659.6zM348.1 621.2L395.5 599.5L382.8 570.3L338.5 588.9zM330.3 561.2L371.9 545.2L362.4 523.4L323.2 537.3zM317.1 516.5L354.1 504.2L346.7 487.2L311.6 498.1zM306.8 481.8L340.2 472.1L334.3 458.5L302.5 467.2zM298.6 454.1L328.9 446.2L324.1 435.1L295.1 442.3zM291.9 431.6L319.7 425.0L315.7 415.8L289.0 421.8zM286.3 412.8L312.0 407.3L308.6 399.5L283.9 404.5zM281.6 396.9L305.5 392.2L302.6 385.5L279.5 389.9zM277.6 383.3L299.9 379.3L297.4 373.5L275.8 377.3zM274.1 371.6L295.0 368.1L292.8 363.0L272.5 366.3zM271.1 361.3L290.7 358.2L288.8 353.7L269.7 356.7zM268.4 352.3L287.0 349.5L285.2 345.5L267.2 348.1zM266.0 344.2L283.6 341.8L282.1 338.2L264.9 340.5zM263.9 337.0L280.6 334.8L279.2 331.6L262.9 333.7zM261.9 330.6L277.9 328.6L276.6 325.7L261.1 327.6zM260.2 324.7L275.4 322.9L274.3 320.3L259.4 322.0zM258.6 319.4L273.2 317.8L272.1 315.4L257.9 316.9zM257.2 314.6L271.1 313.0L270.2 310.8L256.5 312.3zM255.9 310.1L269.3 308.7L268.4 306.7L255.3 308.0zM254.7 306.0L267.5 304.8L266.7 302.9L254.1 304.1zM253.6 302.3L265.9 301.1L265.2 299.3L253.0 300.5zM252.5 298.8L264.5 297.7L263.8 296.1L252.0 297.1zM251.6 295.5L263.1 294.5L262.4 293.0L251.1 294.0zM449.6 724.1L501.4 690.6L476.5 647.1L428.1 674.6zM410.3 633.7L455.7 610.7L438.1 579.9L395.5 599.5zM382.8 570.3L423.0 553.5L409.9 530.6L371.9 545.2zM362.4 523.4L398.4 510.5L388.3 492.8L354.1 504.2zM346.7 487.2L379.3 477.1L371.3 463.0L340.2 472.1zM334.3 458.5L364.0 450.3L357.4 438.8L328.9 446.2zM324.1 435.1L351.5 428.4L346.0 418.9L319.7 425.0zM315.7 415.8L341.0 410.1L336.4 402.1L312.0 407.3zM308.6 399.5L332.2 394.6L328.2 387.8L305.5 392.2zM302.6 385.5L324.6 381.4L321.2 375.4L299.9 379.3zM297.4 373.5L318.0 369.9L315.1 364.7L295.0 368.1zM292.8 363.0L312.3 359.8L309.6 355.2L290.7 358.2zM288.8 353.7L307.2 350.9L304.9 346.9L287.0 349.5zM285.2 345.5L302.7 343.0L300.6 339.4L283.6 341.8zM282.1 338.2L298.6 335.9L296.8 332.7L280.6 334.8zM279.2 331.6L295.0 329.6L293.3 326.6L277.9 328.6zM276.6 325.7L291.7 323.8L290.2 321.1L275.4 322.9zM274.3 320.3L288.7 318.6L287.3 316.1L273.2 317.8zM272.1 315.4L286.0 313.8L284.7 311.6L271.1 313.0zM270.2 310.8L283.5 309.4L282.3 307.4L269.3 308.7zM268.4 306.7L281.2 305.4L280.1 303.5L267.5 304.8zM266.7 302.9L279.0 301.7L278.0 299.9L265.9 301.1zM265.2 299.3L277.1 298.2L276.1 296.6L264.5 297.7zM263.8 296.1L275.2 295.0L274.4 293.5L263.1 294.5zM245 252L251 252L251 252L245 252zM531.8 743.8L580.0 707.8L547.0 661.2L501.4 690.6zM476.5 647.1L519.5 622.6L496.4 590.0L455.7 610.7zM438.1 579.9L476.7 562.2L459.6 538.1L423.0 553.5zM409.9 530.6L444.8 517.2L431.7 498.7L398.4 510.5zM388.3 492.8L420.0 482.3L409.6 467.7L379.3 477.1zM371.3 463.0L400.3 454.5L391.9 442.6L364.0 450.3zM357.4 438.8L384.2 431.9L377.3 422.0L351.5 428.4zM346.0 418.9L370.9 413.0L365.0 404.7L341.0 410.1zM336.4 402.1L359.6 397.1L354.6 390.1L332.2 394.6zM328.2 387.8L349.9 383.5L345.6 377.4L324.6 381.4zM321.2 375.4L341.6 371.7L337.8 366.4L318.0 369.9zM315.1 364.7L334.3 361.4L330.9 356.7L312.3 359.8zM309.6 355.2L327.8 352.4L324.9 348.2L307.2 350.9zM304.9 346.9L322.1 344.3L319.5 340.6L302.7 343.0zM300.6 339.4L317.0 337.1L314.6 333.8L298.6 335.9zM296.8 332.7L312.4 330.6L310.3 327.6L295.0 329.6zM293.3 326.6L308.2 324.8L306.3 322.0L291.7 323.8zM290.2 321.1L304.5 319.4L302.7 317.0L288.7 318.6zM287.3 316.1L301.0 314.6L299.4 312.3L286.0 313.8zM284.7 311.6L297.9 310.1L296.4 308.0L283.5 309.4zM282.3 307.4L295.0 306.0L293.6 304.1L281.2 305.4zM280.1 303.5L292.3 302.3L291.0 300.5L279.0 301.7zM278.0 299.9L289.8 298.8L288.6 297.1L277.1 298.2zM251 253L257 253L257 253L251 253zM251 253L257 252L257 252L251 252zM251 252L256 252L256 251L250 251zM620.7 765.2L664.5 726.3L622.2 676.4L580.0 707.8zM547.0 661.2L587.3 635.2L558.1 600.7L519.5 622.6zM496.4 590.0L533.2 571.3L511.8 546.1L476.7 562.2zM459.6 538.1L493.2 524.1L476.8 504.8L444.8 517.2zM431.7 498.7L462.4 487.7L449.5 472.5L420.0 482.3zM409.6 467.7L437.9 458.9L427.5 446.6L400.3 454.5zM391.9 442.6L418.1 435.5L409.5 425.3L384.2 431.9zM377.3 422.0L401.6 416.0L394.4 407.5L370.9 413.0zM365.0 404.7L387.7 399.7L381.6 392.4L359.6 397.1zM354.6 390.1L375.9 385.7L370.6 379.4L349.9 383.5zM345.6 377.4L365.7 373.6L361.1 368.2L341.6 371.7zM337.8 366.4L356.8 363.1L352.7 358.3L334.3 361.4zM330.9 356.7L348.9 353.8L345.3 349.6L327.8 352.4zM324.9 348.2L341.9 345.6L338.7 341.8L322.1 344.3zM319.5 340.6L335.7 338.3L332.8 334.9L317.0 337.1zM314.6 333.8L330.1 331.7L327.5 328.6L312.4 330.6zM310.3 327.6L325.1 325.7L322.7 322.9L308.2 324.8zM306.3 322.0L320.5 320.3L318.4 317.8L304.5 319.4zM302.7 317.0L316.3 315.4L314.4 313.1L301.0 314.6zM299.4 312.3L312.5 310.9L310.7 308.7L297.9 310.1zM296.4 308.0L309.0 306.7L307.3 304.8L295.0 306.0zM293.6 304.1L305.7 302.9L304.2 301.1L292.3 302.3zM258 254L264 254L264 254L258 254zM258 254L264 253L263 253L257 253zM257 253L263 252L263 252L257 252zM717.0 788.3L755.6 746.3L702.7 692.6L664.5 726.3zM622.2 676.4L659.4 648.6L623.3 612.0L587.3 635.2zM558.1 600.7L592.7 581.0L566.6 554.4L533.2 571.3zM511.8 546.1L543.9 531.3L524.0 511.2L493.2 524.1zM476.8 504.8L506.5 493.4L490.9 477.6L462.4 487.7zM449.5 472.5L476.9 463.4L464.4 450.7L437.9 458.9zM427.5 446.6L453.0 439.2L442.7 428.7L418.1 435.5zM409.5 425.3L433.3 419.1L424.6 410.3L401.6 416.0zM394.4 407.5L416.7 402.3L409.3 394.8L387.7 399.7zM381.6 392.4L402.5 387.9L396.2 381.5L375.9 385.7zM370.6 379.4L390.4 375.6L384.9 370.0L365.7 373.6zM361.1 368.2L379.7 364.8L374.9 359.9L356.8 363.1zM352.7 358.3L370.4 355.3L366.2 351.0L348.9 353.8zM345.3 349.6L362.2 346.9L358.4 343.1L341.9 345.6zM338.7 341.8L354.8 339.4L351.4 336.0L335.7 338.3zM332.8 334.9L348.2 332.7L345.1 329.6L330.1 331.7zM327.5 328.6L342.2 326.7L339.4 323.9L325.1 325.7zM322.7 322.9L336.8 321.2L334.3 318.6L320.5 320.3zM318.4 317.8L331.9 316.2L329.5 313.8L316.3 315.4zM314.4 313.1L327.3 311.6L325.2 309.4L312.5 310.9zM310.7 308.7L323.2 307.4L321.2 305.4L309.0 306.7zM266 255L272 255L271 255L265 255zM265 255L271 254L270 254L264 254zM264 254L270 253L270 253L264 253zM702.7 692.6L736.2 662.9L692.4 623.9L659.4 648.6zM623.3 612.0L655.6 591.1L624.1 563.1L592.7 581.0zM566.6 554.4L596.9 538.9L573.2 517.8L543.9 531.3zM524.0 511.2L552.4 499.3L533.9 482.8L506.5 493.4zM490.9 477.6L517.4 468.1L502.6 454.9L476.9 463.4zM464.4 450.7L489.2 443.0L477.0 432.2L453.0 439.2zM442.7 428.7L465.9 422.3L455.8 413.3L433.3 419.1zM424.6 410.3L446.4 405.0L437.8 397.3L416.7 402.3zM409.3 394.8L429.9 390.2L422.5 383.7L402.5 387.9zM396.2 381.5L415.6 377.5L409.2 371.8L390.4 375.6zM384.9 370.0L403.3 366.5L397.7 361.5L379.7 364.8zM374.9 359.9L392.4 356.8L387.4 352.4L370.4 355.3zM366.2 351.0L382.8 348.3L378.4 344.4L362.2 346.9zM358.4 343.1L374.2 340.7L370.3 337.1L354.8 339.4zM351.4 336.0L366.5 333.8L363.0 330.7L348.2 332.7zM345.1 329.6L359.6 327.7L356.4 324.8L342.2 326.7zM339.4 323.9L353.3 322.1L350.4 319.5L336.8 321.2zM334.3 318.6L347.6 317.0L345.0 314.6L331.9 316.2zM329.5 313.8L342.4 312.3L340.0 310.1L327.3 311.6zM273 256L279 256L279 256L273 256zM272 256L278 255L278 255L272 255zM271 255L277 254L277 254L271 254zM789.0 709.9L818.2 678.2L765.8 636.6L736.2 662.9zM692.4 623.9L722.0 601.9L684.7 572.3L655.6 591.1zM624.1 563.1L652.6 546.9L624.8 524.8L596.9 538.9zM573.2 517.8L600.3 505.4L578.7 488.3L552.4 499.3zM533.9 482.8L559.4 473.0L542.1 459.3L517.4 468.1zM502.6 454.9L526.6 447.0L512.4 435.8L489.2 443.0zM477.0 432.2L499.6 425.6L487.8 416.3L465.9 422.3zM455.8 413.3L477.1 407.7L467.1 399.9L446.4 405.0zM437.8 397.3L458.0 392.6L449.5 385.8L429.9 390.2zM422.5 383.7L441.6 379.6L434.2 373.7L415.6 377.5zM409.2 371.8L427.3 368.3L420.9 363.2L403.3 366.5zM397.7 361.5L414.8 358.4L409.2 353.9L392.4 356.8zM387.4 352.4L403.8 349.7L398.8 345.7L382.8 348.3zM378.4 344.4L394.0 341.9L389.5 338.3L374.2 340.7zM370.3 337.1L385.2 334.9L381.2 331.7L366.5 333.8zM363.0 330.7L377.3 328.6L373.7 325.7L359.6 327.7zM356.4 324.8L370.2 323.0L366.8 320.3L353.3 322.1zM350.4 319.5L363.6 317.8L360.6 315.4L347.6 317.0zM280 257L286 256L285 256L279 256zM279 256L285 255L284 255L278 255zM881.8 728.6L905.9 694.5L843.9 650.2L818.2 678.2zM765.8 636.6L792.2 613.3L748.5 582.0L722.0 601.9zM684.7 572.3L711.1 555.3L678.7 532.1L652.6 546.9zM624.8 524.8L650.3 511.8L625.3 494.0L600.3 505.4zM578.7 488.3L603.0 478.1L583.1 463.8L559.4 473.0zM542.1 459.3L565.2 451.1L549.1 439.5L526.6 447.0zM512.4 435.8L534.3 429.0L520.9 419.4L499.6 425.6zM487.8 416.3L508.6 410.6L497.3 402.5L477.1 407.7zM467.1 399.9L486.8 395.0L477.1 388.1L458.0 392.6zM449.5 385.8L468.1 381.7L459.8 375.7L441.6 379.6zM434.2 373.7L451.9 370.1L444.6 364.9L427.3 368.3zM420.9 363.2L437.8 360.0L431.4 355.4L414.8 358.4zM409.2 353.9L425.3 351.1L419.6 347.0L403.8 349.7zM398.8 345.7L414.2 343.1L409.1 339.5L394.0 341.9zM389.5 338.3L404.3 336.0L399.7 332.8L385.2 334.9zM381.2 331.7L395.3 329.7L391.2 326.7L377.3 328.6zM288 258L294 257L294 257L287 257zM287 257L293 256L292 256L286 256zM843.9 650.2L866.7 625.3L815.9 592.3L792.2 613.3zM748.5 582.0L772.6 564.1L735.2 539.7L711.1 555.3zM678.7 532.1L702.5 518.5L673.9 499.9L650.3 511.8zM625.3 494.0L648.4 483.3L625.7 468.6L603.0 478.1zM583.1 463.8L605.3 455.3L586.9 443.3L565.2 451.1zM549.1 439.5L570.2 432.5L555.0 422.6L534.3 429.0zM520.9 419.4L541.0 413.5L528.2 405.2L508.6 410.6zM497.3 402.5L516.4 397.5L505.5 390.4L486.8 395.0zM477.1 388.1L495.4 383.8L485.9 377.7L468.1 381.7zM459.8 375.7L477.2 372.0L468.9 366.6L451.9 370.1zM444.6 364.9L461.2 361.6L454.0 356.9L437.8 360.0zM431.4 355.4L447.2 352.5L440.8 348.3L425.3 351.1zM419.6 347.0L434.8 344.4L429.1 340.7L414.2 343.1zM409.1 339.5L423.7 337.2L418.6 333.9L404.3 336.0zM296 259L303 259L302 258L296 258zM295 258L301 258L300 257L294 257zM815.9 592.3L837.3 573.3L794.4 547.8L772.6 564.1zM735.2 539.7L757.2 525.5L724.5 506.0L702.5 518.5zM673.9 499.9L695.6 488.8L669.9 473.5L648.4 483.3zM625.7 468.6L646.8 459.7L626.1 447.3L605.3 455.3zM586.9 443.3L607.2 436.1L590.1 425.9L570.2 432.5zM555.0 422.6L574.4 416.5L560.1 407.9L541.0 413.5zM528.2 405.2L546.8 400.0L534.6 392.8L516.4 397.5zM505.5 390.4L523.3 386.0L512.8 379.7L495.4 383.8zM485.9 377.7L503.0 373.9L493.8 368.4L477.2 372.0zM468.9 366.6L485.2 363.3L477.2 358.5L461.2 361.6zM454.0 356.9L469.6 354.0L462.5 349.7L447.2 352.5zM307 261L314 261L313 260L306 261zM305 260L312 260L311 259L304 260zM304 259L310 259L309 258L303 259zM794.4 547.8L814.4 532.9L777.4 512.5L757.2 525.5zM724.5 506.0L744.8 494.5L715.8 478.6L695.6 488.8zM669.9 473.5L689.9 464.3L666.6 451.4L646.8 459.7zM626.1 447.3L645.5 439.8L626.4 429.3L607.2 436.1zM590.1 425.9L608.9 419.6L592.9 410.8L574.4 416.5zM560.1 407.9L578.1 402.7L564.5 395.2L546.8 400.0zM534.6 392.8L552.0 388.2L540.3 381.8L523.3 386.0zM512.8 379.7L529.4 375.8L519.2 370.2L503.0 373.9zM493.8 368.4L509.7 365.0L500.8 360.1L485.2 363.3zM317 263L323 262L322 262L316 262zM315 262L321 261L320 261L314 261zM313 260L319 260L318 259L312 260zM856.7 556.2L874.3 540.6L832.7 519.2L814.4 532.9zM777.4 512.5L796.0 500.5L763.6 483.8L744.8 494.5zM715.8 478.6L734.6 469.0L708.6 455.7L689.9 464.3zM666.6 451.4L685.1 443.7L663.8 432.8L645.5 439.8zM626.4 429.3L644.4 422.8L626.6 413.7L608.9 419.6zM592.9 410.8L610.3 405.4L595.3 397.7L578.1 402.7zM564.5 395.2L581.4 390.6L568.5 384.0L552.0 388.2zM540.3 381.8L556.5 377.8L545.3 372.1L529.4 375.8zM327 264L334 264L332 263L326 264zM324 263L331 262L330 262L323 262zM322 262L329 261L328 261L321 261zM832.7 519.2L849.5 506.7L813.2 489.4L796.0 500.5zM763.6 483.8L781.0 473.9L752.1 460.1L734.6 469.0zM708.6 455.7L726.1 447.7L702.5 436.4L685.1 443.7zM663.8 432.8L681.0 426.1L661.4 416.8L644.4 422.8zM626.6 413.7L643.4 408.2L626.9 400.2L610.3 405.4zM595.3 397.7L611.6 392.9L597.4 386.2L581.4 390.6zM337 266L344 265L343 265L336 265zM335 264L342 264L340 263L334 264zM332 263L339 263L338 262L331 262zM813.2 489.4L829.2 479.0L797.2 464.7L781.0 473.9zM752.1 460.1L768.5 451.8L742.5 440.1L726.1 447.7zM702.5 436.4L718.8 429.6L697.3 419.9L681.0 426.1zM661.4 416.8L677.5 411.0L659.3 402.9L643.4 408.2zM626.9 400.2L642.6 395.4L627.1 388.4L611.6 392.9zM352 269L359 268L357 268L350 268zM349 267L356 267L354 266L347 267zM346 266L353 265L351 265L344 265zM797.2 464.7L812.4 456.1L783.8 444.0L768.5 451.8zM742.5 440.1L757.8 433.1L734.2 423.1L718.8 429.6zM697.3 419.9L712.6 414.0L692.7 405.6L677.5 411.0zM659.3 402.9L674.4 397.9L657.5 390.7L642.6 395.4zM368 272L375 272L373 271L366 271zM364 271L372 270L370 269L362 270zM361 269L368 269L366 268L359 268zM844.1 469.5L857.9 460.5L826.5 448.0L812.4 456.1zM783.8 444.0L798.2 436.7L772.3 426.4L757.8 433.1zM734.2 423.1L748.7 417.0L727.1 408.4L712.6 414.0zM692.7 405.6L707.2 400.4L688.8 393.1L674.4 397.9zM390 278L398 277L396 276L388 277zM386 276L394 275L391 275L384 275zM381 274L389 274L387 273L379 273zM377 272L385 272L383 271L375 272zM826.5 448.0L839.8 440.5L811.7 429.8L798.2 436.7zM772.3 426.4L786.0 420.1L762.5 411.3L748.7 417.0zM727.1 408.4L740.9 403.1L720.9 395.6L707.2 400.4zM688.8 393.1L702.4 388.6L685.3 382.1L671.7 386.3zM418 285L426 284L423 283L415 284zM412 283L420 282L417 281L409 281zM406 280L414 280L412 279L404 279zM401 278L409 278L406 277L398 277zM811.7 429.8L824.4 423.4L798.9 414.2L786.0 420.1zM762.5 411.3L775.5 405.8L753.9 398.1L740.9 403.1zM720.9 395.6L734.0 390.9L715.5 384.3L702.4 388.6zM524 321L535 320L528 317L518 319zM511 316L522 315L515 312L505 314zM499 312L509 310L503 308L493 309zM488 307L498 306L492 304L482 305zM477 304L487 302L482 301L472 302zM468 300L477 299L473 297L463 298zM459 297L468 296L464 294L455 295zM451 293L460 292L456 291L447 292zM443 291L452 290L448 288L439 289zM436 288L445 287L441 286L433 287zM798.9 414.2L811.1 408.6L787.8 400.6L775.5 405.8zM753.9 398.1L766.3 393.3L746.4 386.5L734.0 390.9zM715.5 384.3L727.9 380.1L710.6 374.2L698.3 378.1zM575 334L587 332L578 329L567 331zM836.5 417.3L847.8 411.5L822.7 403.3L811.1 408.6zM787.8 400.6L799.5 395.7L778.1 388.7L766.3 393.3zM746.4 386.5L758.2 382.3L739.7 376.2L727.9 380.1zM822.7 403.3L833.7 398.3L810.7 391.1L799.5 395.7zM778.1 388.7L789.3 384.4L769.5 378.2L758.2 382.3zM739.7 376.2L751.0 372.5L733.8 367.1L722.4 370.6zM810.7 391.1L821.3 386.6L800.1 380.3L789.3 384.4zM769.5 378.2L780.3 374.4L761.9 368.9L751.0 372.5zM800.1 380.3L810.3 376.3L790.6 370.7L780.3 374.4zM661 339L671 336L659 333L649 335zM831.4 382.4L841.0 378.4L820.1 372.6L810.3 376.3zM790.6 370.7L800.5 367.2L782.2 362.1L772.2 365.4zM820.1 372.6L829.4 369.0L810.0 363.8L800.5 367.2zM681 334L690 332L679 329L669 331zM810.0 363.8L819.0 360.6L800.9 355.9L791.7 359.0zM800.9 355.9L809.7 353.0L792.7 348.8L783.8 351.5zM699 330L708 328L697 325L688 327zM827.7 357.5L836.1 354.5L818.1 350.2L809.7 353.0zM818.1 350.2L826.3 347.5L809.4 343.6L801.2 346.1zM717 326L725 324L714 321L705 323zM834.1 344.9L841.7 342.4L825.0 338.7L817.4 341.1zM733 322L741 321L730 318L722 320zM759 312L766 310L754 308L748 310zM780 303L786 302L775 300L769 301zM792 301L797 299L787 298L781 299zM808 293L813 292L803 291L798 292zM818 291L823 291L813 289L808 290z"/><path fill="#f0f0f0" d="M236.8 721.9L302.1 688.7L295.2 645.5L235.7 672.8zM234.9 632.3L289.5 609.4L284.6 578.9L234.1 598.3zM233.5 569.3L280.4 552.6L276.8 529.8L233.0 544.4zM232.5 522.7L273.7 509.9L270.9 492.3L232.1 503.6zM231.7 486.7L268.4 476.6L266.1 462.6L231.4 471.6zM231.1 458.1L264.1 449.9L262.3 438.5L230.9 445.9zM230.6 434.8L260.7 428.1L259.1 418.6L230.4 424.7zM230.2 415.5L257.8 409.9L256.5 401.9L230.0 407.1zM229.9 399.3L255.3 394.5L254.2 387.6L229.7 392.1zM229.6 385.4L253.2 381.2L252.3 375.3L229.4 379.2zM229.3 373.4L251.4 369.8L250.6 364.6L229.2 367.9zM229.1 362.9L249.8 359.7L249.1 355.1L229.0 358.1zM228.9 353.7L248.4 350.8L247.7 346.8L228.8 349.4zM228.7 345.5L247.1 343.0L246.5 339.3L228.6 341.7zM228.5 338.2L246.0 335.9L245.5 332.6L228.5 334.8zM310.5 741.5L373.2 705.8L359.5 659.6L302.1 688.7zM295.2 645.5L348.1 621.2L338.5 588.9L289.5 609.4zM284.6 578.9L330.3 561.2L323.2 537.3L280.4 552.6zM276.8 529.8L317.1 516.5L311.6 498.1L273.7 509.9zM270.9 492.3L306.8 481.8L302.5 467.2L268.4 476.6zM266.1 462.6L298.6 454.1L295.1 442.3L264.1 449.9zM262.3 438.5L291.9 431.6L289.0 421.8L260.7 428.1zM259.1 418.6L286.3 412.8L283.9 404.5L257.8 409.9zM256.5 401.9L281.6 396.9L279.5 389.9L255.3 394.5zM254.2 387.6L277.6 383.3L275.8 377.3L253.2 381.2zM252.3 375.3L274.1 371.6L272.5 366.3L251.4 369.8zM250.6 364.6L271.1 361.3L269.7 356.7L249.8 359.7zM249.1 355.1L268.4 352.3L267.2 348.1L248.4 350.8zM247.7 346.8L266.0 344.2L264.9 340.5L247.1 343.0zM246.5 339.3L263.9 337.0L262.9 333.7L246.0 335.9zM245.5 332.6L261.9 330.6L261.1 327.6L245.0 329.5zM244.5 326.6L260.2 324.7L259.4 322.0L244.1 323.8zM243.7 321.1L258.6 319.4L257.9 316.9L243.2 318.6zM242.9 316.1L257.2 314.6L256.5 312.3L242.5 313.8zM242.1 311.6L255.9 310.1L255.3 308.0L241.8 309.4zM241.5 307.4L254.7 306.0L254.1 304.1L241.2 305.4zM240.9 303.5L253.6 302.3L253.0 300.5L240.6 301.7zM240.3 299.9L252.5 298.8L252.0 297.1L240.0 298.2zM239.8 296.6L251.6 295.5L251.1 294.0L239.5 295.0zM239.3 293.5L250.7 292.5L250.2 291.1L239.0 292.0zM390.0 762.6L449.6 724.1L428.1 674.6L373.2 705.8zM359.5 659.6L410.3 633.7L395.5 599.5L348.1 621.2zM338.5 588.9L382.8 570.3L371.9 545.2L330.3 561.2zM323.2 537.3L362.4 523.4L354.1 504.2L317.1 516.5zM311.6 498.1L346.7 487.2L340.2 472.1L306.8 481.8zM302.5 467.2L334.3 458.5L328.9 446.2L298.6 454.1zM295.1 442.3L324.1 435.1L319.7 425.0L291.9 431.6zM289.0 421.8L315.7 415.8L312.0 407.3L286.3 412.8zM283.9 404.5L308.6 399.5L305.5 392.2L281.6 396.9zM279.5 389.9L302.6 385.5L299.9 379.3L277.6 383.3zM275.8 377.3L297.4 373.5L295.0 368.1L274.1 371.6zM272.5 366.3L292.8 363.0L290.7 358.2L271.1 361.3zM269.7 356.7L288.8 353.7L287.0 349.5L268.4 352.3zM267.2 348.1L285.2 345.5L283.6 341.8L266.0 344.2zM264.9 340.5L282.1 338.2L280.6 334.8L263.9 337.0zM262.9 333.7L279.2 331.6L277.9 328.6L261.9 330.6zM261.1 327.6L276.6 325.7L275.4 322.9L260.2 324.7zM259.4 322.0L274.3 320.3L273.2 317.8L258.6 319.4zM257.9 316.9L272.1 315.4L271.1 313.0L257.2 314.6zM256.5 312.3L270.2 310.8L269.3 308.7L255.9 310.1zM255.3 308.0L268.4 306.7L267.5 304.8L254.7 306.0zM254.1 304.1L266.7 302.9L265.9 301.1L253.6 302.3zM253.0 300.5L265.2 299.3L264.5 297.7L252.5 298.8zM252.0 297.1L263.8 296.1L263.1 294.5L251.6 295.5zM251.1 294.0L262.4 293.0L261.8 291.6L250.7 292.5zM476.2 785.4L531.8 743.8L501.4 690.6L449.6 724.1zM428.1 674.6L476.5 647.1L455.7 610.7L410.3 633.7zM395.5 599.5L438.1 579.9L423.0 553.5L382.8 570.3zM371.9 545.2L409.9 530.6L398.4 510.5L362.4 523.4zM354.1 504.2L388.3 492.8L379.3 477.1L346.7 487.2zM340.2 472.1L371.3 463.0L364.0 450.3L334.3 458.5zM328.9 446.2L357.4 438.8L351.5 428.4L324.1 435.1zM319.7 425.0L346.0 418.9L341.0 410.1L315.7 415.8zM312.0 407.3L336.4 402.1L332.2 394.6L308.6 399.5zM305.5 392.2L328.2 387.8L324.6 381.4L302.6 385.5zM299.9 379.3L321.2 375.4L318.0 369.9L297.4 373.5zM295.0 368.1L315.1 364.7L312.3 359.8L292.8 363.0zM290.7 358.2L309.6 355.2L307.2 350.9L288.8 353.7zM287.0 349.5L304.9 346.9L302.7 343.0L285.2 345.5zM283.6 341.8L300.6 339.4L298.6 335.9L282.1 338.2zM280.6 334.8L296.8 332.7L295.0 329.6L279.2 331.6zM277.9 328.6L293.3 326.6L291.7 323.8L276.6 325.7zM275.4 322.9L290.2 321.1L288.7 318.6L274.3 320.3zM273.2 317.8L287.3 316.1L286.0 313.8L272.1 315.4zM271.1 313.0L284.7 311.6L283.5 309.4L270.2 310.8zM269.3 308.7L282.3 307.4L281.2 305.4L268.4 306.7zM267.5 304.8L280.1 303.5L279.0 301.7L266.7 302.9zM265.9 301.1L278.0 299.9L277.1 298.2L265.2 299.3zM264.5 297.7L276.1 296.6L275.2 295.0L263.8 296.1zM501.4 690.6L547.0 661.2L519.5 622.6L476.5 647.1zM455.7 610.7L496.4 590.0L476.7 562.2L438.1 579.9zM423.0 553.5L459.6 538.1L444.8 517.2L409.9 530.6zM398.4 510.5L431.7 498.7L420.0 482.3L388.3 492.8zM379.3 477.1L409.6 467.7L400.3 454.5L371.3 463.0zM364.0 450.3L391.9 442.6L384.2 431.9L357.4 438.8zM351.5 428.4L377.3 422.0L370.9 413.0L346.0 418.9zM341.0 410.1L365.0 404.7L359.6 397.1L336.4 402.1zM332.2 394.6L354.6 390.1L349.9 383.5L328.2 387.8zM324.6 381.4L345.6 377.4L341.6 371.7L321.2 375.4zM318.0 369.9L337.8 366.4L334.3 361.4L315.1 364.7zM312.3 359.8L330.9 356.7L327.8 352.4L309.6 355.2zM307.2 350.9L324.9 348.2L322.1 344.3L304.9 346.9zM302.7 343.0L319.5 340.6L317.0 337.1L300.6 339.4zM298.6 335.9L314.6 333.8L312.4 330.6L296.8 332.7zM295.0 329.6L310.3 327.6L308.2 324.8L293.3 326.6zM291.7 323.8L306.3 322.0L304.5 319.4L290.2 321.1zM288.7 318.6L302.7 317.0L301.0 314.6L287.3 316.1zM286.0 313.8L299.4 312.3L297.9 310.1L284.7 311.6zM283.5 309.4L296.4 308.0L295.0 306.0L282.3 307.4zM281.2 305.4L293.6 304.1L292.3 302.3L280.1 303.5zM279.0 301.7L291.0 300.5L289.8 298.8L278.0 299.9zM580.0 707.8L622.2 676.4L587.3 635.2L547.0 661.2zM519.5 622.6L558.1 600.7L533.2 571.3L496.4 590.0zM476.7 562.2L511.8 546.1L493.2 524.1L459.6 538.1zM444.8 517.2L476.8 504.8L462.4 487.7L431.7 498.7zM420.0 482.3L449.5 472.5L437.9 458.9L409.6 467.7zM400.3 454.5L427.5 446.6L418.1 435.5L391.9 442.6zM384.2 431.9L409.5 425.3L401.6 416.0L377.3 422.0zM370.9 413.0L394.4 407.5L387.7 399.7L365.0 404.7zM359.6 397.1L381.6 392.4L375.9 385.7L354.6 390.1zM349.9 383.5L370.6 379.4L365.7 373.6L345.6 377.4zM341.6 371.7L361.1 368.2L356.8 363.1L337.8 366.4zM334.3 361.4L352.7 358.3L348.9 353.8L330.9 356.7zM327.8 352.4L345.3 349.6L341.9 345.6L324.9 348.2zM322.1 344.3L338.7 341.8L335.7 338.3L319.5 340.6zM317.0 337.1L332.8 334.9L330.1 331.7L314.6 333.8zM312.4 330.6L327.5 328.6L325.1 325.7L310.3 327.6zM308.2 324.8L322.7 322.9L320.5 320.3L306.3 322.0zM304.5 319.4L318.4 317.8L316.3 315.4L302.7 317.0zM301.0 314.6L314.4 313.1L312.5 310.9L299.4 312.3zM297.9 310.1L310.7 308.7L309.0 306.7L296.4 308.0zM295.0 306.0L307.3 304.8L305.7 302.9L293.6 304.1zM664.5 726.3L702.7 692.6L659.4 648.6L622.2 676.4zM587.3 635.2L623.3 612.0L592.7 581.0L558.1 600.7zM533.2 571.3L566.6 554.4L543.9 531.3L511.8 546.1zM493.2 524.1L524.0 511.2L506.5 493.4L476.8 504.8zM462.4 487.7L490.9 477.6L476.9 463.4L449.5 472.5zM437.9 458.9L464.4 450.7L453.0 439.2L427.5 446.6zM418.1 435.5L442.7 428.7L433.3 419.1L409.5 425.3zM401.6 416.0L424.6 410.3L416.7 402.3L394.4 407.5zM387.7 399.7L409.3 394.8L402.5 387.9L381.6 392.4zM375.9 385.7L396.2 381.5L390.4 375.6L370.6 379.4zM365.7 373.6L384.9 370.0L379.7 364.8L361.1 368.2zM356.8 363.1L374.9 359.9L370.4 355.3L352.7 358.3zM348.9 353.8L366.2 351.0L362.2 346.9L345.3 349.6zM341.9 345.6L358.4 343.1L354.8 339.4L338.7 341.8zM335.7 338.3L351.4 336.0L348.2 332.7L332.8 334.9zM330.1 331.7L345.1 329.6L342.2 326.7L327.5 328.6zM325.1 325.7L339.4 323.9L336.8 321.2L322.7 322.9zM320.5 320.3L334.3 318.6L331.9 316.2L318.4 317.8zM316.3 315.4L329.5 313.8L327.3 311.6L314.4 313.1zM312.5 310.9L325.2 309.4L323.2 307.4L310.7 308.7zM309.0 306.7L321.2 305.4L319.4 303.5L307.3 304.8zM755.6 746.3L789.0 709.9L736.2 662.9L702.7 692.6zM659.4 648.6L692.4 623.9L655.6 591.1L623.3 612.0zM592.7 581.0L624.1 563.1L596.9 538.9L566.6 554.4zM543.9 531.3L573.2 517.8L552.4 499.3L524.0 511.2zM506.5 493.4L533.9 482.8L517.4 468.1L490.9 477.6zM476.9 463.4L502.6 454.9L489.2 443.0L464.4 450.7zM453.0 439.2L477.0 432.2L465.9 422.3L442.7 428.7zM433.3 419.1L455.8 413.3L446.4 405.0L424.6 410.3zM416.7 402.3L437.8 397.3L429.9 390.2L409.3 394.8zM402.5 387.9L422.5 383.7L415.6 377.5L396.2 381.5zM390.4 375.6L409.2 371.8L403.3 366.5L384.9 370.0zM379.7 364.8L397.7 361.5L392.4 356.8L374.9 359.9zM370.4 355.3L387.4 352.4L382.8 348.3L366.2 351.0zM362.2 346.9L378.4 344.4L374.2 340.7L358.4 343.1zM354.8 339.4L370.3 337.1L366.5 333.8L351.4 336.0zM348.2 332.7L363.0 330.7L359.6 327.7L345.1 329.6zM342.2 326.7L356.4 324.8L353.3 322.1L339.4 323.9zM336.8 321.2L350.4 319.5L347.6 317.0L334.3 318.6zM331.9 316.2L345.0 314.6L342.4 312.3L329.5 313.8zM854.0 767.8L881.8 728.6L818.2 678.2L789.0 709.9zM736.2 662.9L765.8 636.6L722.0 601.9L692.4 623.9zM655.6 591.1L684.7 572.3L652.6 546.9L624.1 563.1zM596.9 538.9L624.8 524.8L600.3 505.4L573.2 517.8zM552.4 499.3L578.7 488.3L559.4 473.0L533.9 482.8zM517.4 468.1L542.1 459.3L526.6 447.0L502.6 454.9zM489.2 443.0L512.4 435.8L499.6 425.6L477.0 432.2zM465.9 422.3L487.8 416.3L477.1 407.7L455.8 413.3zM446.4 405.0L467.1 399.9L458.0 392.6L437.8 397.3zM429.9 390.2L449.5 385.8L441.6 379.6L422.5 383.7zM415.6 377.5L434.2 373.7L427.3 368.3L409.2 371.8zM403.3 366.5L420.9 363.2L414.8 358.4L397.7 361.5zM392.4 356.8L409.2 353.9L403.8 349.7L387.4 352.4zM382.8 348.3L398.8 345.7L394.0 341.9L378.4 344.4zM374.2 340.7L389.5 338.3L385.2 334.9L370.3 337.1zM366.5 333.8L381.2 331.7L377.3 328.6L363.0 330.7zM359.6 327.7L373.7 325.7L370.2 323.0L356.4 324.8zM353.3 322.1L366.8 320.3L363.6 317.8L350.4 319.5zM818.2 678.2L843.9 650.2L792.2 613.3L765.8 636.6zM722.0 601.9L748.5 582.0L711.1 555.3L684.7 572.3zM652.6 546.9L678.7 532.1L650.3 511.8L624.8 524.8zM600.3 505.4L625.3 494.0L603.0 478.1L578.7 488.3zM559.4 473.0L583.1 463.8L565.2 451.1L542.1 459.3zM526.6 447.0L549.1 439.5L534.3 429.0L512.4 435.8zM499.6 425.6L520.9 419.4L508.6 410.6L487.8 416.3zM477.1 407.7L497.3 402.5L486.8 395.0L467.1 399.9zM458.0 392.6L477.1 388.1L468.1 381.7L449.5 385.8zM441.6 379.6L459.8 375.7L451.9 370.1L434.2 373.7zM427.3 368.3L444.6 364.9L437.8 360.0L420.9 363.2zM414.8 358.4L431.4 355.4L425.3 351.1L409.2 353.9zM403.8 349.7L419.6 347.0L414.2 343.1L398.8 345.7zM394.0 341.9L409.1 339.5L404.3 336.0L389.5 338.3zM385.2 334.9L399.7 332.8L395.3 329.7L381.2 331.7zM377.3 328.6L391.2 326.7L387.3 323.9L373.7 325.7zM792.2 613.3L815.9 592.3L772.6 564.1L748.5 582.0zM711.1 555.3L735.2 539.7L702.5 518.5L678.7 532.1zM650.3 511.8L673.9 499.9L648.4 483.3L625.3 494.0zM603.0 478.1L625.7 468.6L605.3 455.3L583.1 463.8zM565.2 451.1L586.9 443.3L570.2 432.5L549.1 439.5zM534.3 429.0L555.0 422.6L541.0 413.5L520.9 419.4zM508.6 410.6L528.2 405.2L516.4 397.5L497.3 402.5zM486.8 395.0L505.5 390.4L495.4 383.8L477.1 388.1zM468.1 381.7L485.9 377.7L477.2 372.0L459.8 375.7zM451.9 370.1L468.9 366.6L461.2 361.6L444.6 364.9zM437.8 360.0L454.0 356.9L447.2 352.5L431.4 355.4zM425.3 351.1L440.8 348.3L434.8 344.4L419.6 347.0zM414.2 343.1L429.1 340.7L423.7 337.2L409.1 339.5zM866.7 625.3L887.2 603.1L837.3 573.3L815.9 592.3zM772.6 564.1L794.4 547.8L757.2 525.5L735.2 539.7zM702.5 518.5L724.5 506.0L695.6 488.8L673.9 499.9zM648.4 483.3L669.9 473.5L646.8 459.7L625.7 468.6zM605.3 455.3L626.1 447.3L607.2 436.1L586.9 443.3zM570.2 432.5L590.1 425.9L574.4 416.5L555.0 422.6zM541.0 413.5L560.1 407.9L546.8 400.0L528.2 405.2zM516.4 397.5L534.6 392.8L523.3 386.0L505.5 390.4zM495.4 383.8L512.8 379.7L503.0 373.9L485.9 377.7zM477.2 372.0L493.8 368.4L485.2 363.3L468.9 366.6zM461.2 361.6L477.2 358.5L469.6 354.0L454.0 356.9zM447.2 352.5L462.5 349.7L455.8 345.7L440.8 348.3zM837.3 573.3L856.7 556.2L814.4 532.9L794.4 547.8zM757.2 525.5L777.4 512.5L744.8 494.5L724.5 506.0zM695.6 488.8L715.8 478.6L689.9 464.3L669.9 473.5zM646.8 459.7L666.6 451.4L645.5 439.8L626.1 447.3zM607.2 436.1L626.4 429.3L608.9 419.6L590.1 425.9zM574.4 416.5L592.9 410.8L578.1 402.7L560.1 407.9zM546.8 400.0L564.5 395.2L552.0 388.2L534.6 392.8zM523.3 386.0L540.3 381.8L529.4 375.8L512.8 379.7zM503.0 373.9L519.2 370.2L509.7 365.0L493.8 368.4zM814.4 532.9L832.7 519.2L796.0 500.5L777.4 512.5zM744.8 494.5L763.6 483.8L734.6 469.0L715.8 478.6zM689.9 464.3L708.6 455.7L685.1 443.7L666.6 451.4zM645.5 439.8L663.8 432.8L644.4 422.8L626.4 429.3zM608.9 419.6L626.6 413.7L610.3 405.4L592.9 410.8zM578.1 402.7L595.3 397.7L581.4 390.6L564.5 395.2zM552.0 388.2L568.5 384.0L556.5 377.8L540.3 381.8zM796.0 500.5L813.2 489.4L781.0 473.9L763.6 483.8zM734.6 469.0L752.1 460.1L726.1 447.7L708.6 455.7zM685.1 443.7L702.5 436.4L681.0 426.1L663.8 432.8zM644.4 422.8L661.4 416.8L643.4 408.2L626.6 413.7zM610.3 405.4L626.9 400.2L611.6 392.9L595.3 397.7zM581.4 390.6L597.4 386.2L584.2 379.9L568.5 384.0zM849.5 506.7L865.0 495.1L829.2 479.0L813.2 489.4zM781.0 473.9L797.2 464.7L768.5 451.8L752.1 460.1zM726.1 447.7L742.5 440.1L718.8 429.6L702.5 436.4zM681.0 426.1L697.3 419.9L677.5 411.0L661.4 416.8zM643.4 408.2L659.3 402.9L642.6 395.4L626.9 400.2zM611.6 392.9L627.1 388.4L612.7 382.0L597.4 386.2zM829.2 479.0L844.1 469.5L812.4 456.1L797.2 464.7zM768.5 451.8L783.8 444.0L757.8 433.1L742.5 440.1zM718.8 429.6L734.2 423.1L712.6 414.0L697.3 419.9zM677.5 411.0L692.7 405.6L674.4 397.9L659.3 402.9zM642.6 395.4L657.5 390.7L641.8 384.1L627.1 388.4zM812.4 456.1L826.5 448.0L798.2 436.7L783.8 444.0zM757.8 433.1L772.3 426.4L748.7 417.0L734.2 423.1zM712.6 414.0L727.1 408.4L707.2 400.4L692.7 405.6zM674.4 397.9L688.8 393.1L671.7 386.3L657.5 390.7zM798.2 436.7L811.7 429.8L786.0 420.1L772.3 426.4zM748.7 417.0L762.5 411.3L740.9 403.1L727.1 408.4zM707.2 400.4L720.9 395.6L702.4 388.6L688.8 393.1zM839.8 440.5L852.3 433.4L824.4 423.4L811.7 429.8zM786.0 420.1L798.9 414.2L775.5 405.8L762.5 411.3zM740.9 403.1L753.9 398.1L734.0 390.9L720.9 395.6zM702.4 388.6L715.5 384.3L698.3 378.1L685.3 382.1zM824.4 423.4L836.5 417.3L811.1 408.6L798.9 414.2zM775.5 405.8L787.8 400.6L766.3 393.3L753.9 398.1zM734.0 390.9L746.4 386.5L727.9 380.1L715.5 384.3zM811.1 408.6L822.7 403.3L799.5 395.7L787.8 400.6zM766.3 393.3L778.1 388.7L758.2 382.3L746.4 386.5zM727.9 380.1L739.7 376.2L722.4 370.6L710.6 374.2zM799.5 395.7L810.7 391.1L789.3 384.4L778.1 388.7zM758.2 382.3L769.5 378.2L751.0 372.5L739.7 376.2zM833.7 398.3L844.1 393.5L821.3 386.6L810.7 391.1zM789.3 384.4L800.1 380.3L780.3 374.4L769.5 378.2zM821.3 386.6L831.4 382.4L810.3 376.3L800.1 380.3zM780.3 374.4L790.6 370.7L772.2 365.4L761.9 368.9zM810.3 376.3L820.1 372.6L800.5 367.2L790.6 370.7zM800.5 367.2L810.0 363.8L791.7 359.0L782.2 362.1zM829.4 369.0L838.4 365.5L819.0 360.6L810.0 363.8zM819.0 360.6L827.7 357.5L809.7 353.0L800.9 355.9zM809.7 353.0L818.1 350.2L801.2 346.1L792.7 348.8zM836.1 354.5L844.1 351.6L826.3 347.5L818.1 350.2zM826.3 347.5L834.1 344.9L817.4 341.1L809.4 343.6z"/><path fill="#eeeeee" d="M238.8 290.6L249.8 289.7L249.4 288.4L238.6 289.3zM250.2 291.1L261.2 290.2L260.6 288.8L249.8 289.7zM263.1 294.5L274.4 293.5L273.5 292.0L262.4 293.0zM277.1 298.2L288.6 297.1L287.5 295.5L276.1 296.6zM292.3 302.3L304.2 301.1L302.7 299.3L291.0 300.5zM327.3 311.6L340.0 310.1L337.6 308.1L325.2 309.4zM347.6 317.0L360.6 315.4L357.7 313.1L345.0 314.6zM370.2 323.0L383.5 321.2L379.9 318.6L366.8 320.3zM404.3 336.0L418.6 333.9L413.7 330.7L399.7 332.8zM485.2 363.3L500.8 360.1L492.5 355.5L477.2 358.5zM751.0 372.5L761.9 368.9L744.6 363.7L733.8 367.1zM772.2 365.4L782.2 362.1L765.0 357.4L755.0 360.5zM791.7 359.0L800.9 355.9L783.8 351.5L774.6 354.4z"/><path fill="#c6c6c6" d="M238.6 289.3L249.4 288.4L249.1 287.1L238.4 287.9zM250.7 292.5L261.8 291.6L261.2 290.2L250.2 291.1zM276.1 296.6L287.5 295.5L286.4 294.0L275.2 295.0zM291.0 300.5L302.7 299.3L301.3 297.7L289.8 298.8zM257 252L262 252L262 251L256 252zM307.3 304.8L319.4 303.5L317.6 301.7L305.7 302.9zM263 253L269 253L269 252L263 252zM263 252L268 252L268 251L262 252zM262 251L268 251L267 251L262 251zM325.2 309.4L337.6 308.1L335.4 306.1L323.2 307.4zM270 254L276 253L276 253L270 253zM270 253L275 253L275 252L269 253zM269 252L274 252L274 251L268 252zM345.0 314.6L357.7 313.1L354.9 310.9L342.4 312.3zM278 255L284 254L283 254L277 254zM277 254L283 254L282 253L276 253zM276 253L282 253L281 252L275 253zM373.7 325.7L387.3 323.9L383.5 321.2L370.2 323.0zM285 256L292 256L291 255L285 255zM284 255L290 255L290 254L284 254zM283 254L289 254L289 253L283 254zM282 253L288 253L287 253L282 253zM399.7 332.8L413.7 330.7L409.1 327.7L395.3 329.7zM294 257L300 257L299 256L293 256zM292 256L298 256L298 255L292 256zM291 255L297 255L296 254L290 255zM290 254L296 254L295 253L289 254zM440.8 348.3L455.8 345.7L449.5 341.9L434.8 344.4zM302 258L308 258L307 257L301 258zM300 257L307 257L306 256L300 257zM299 256L305 256L304 255L298 256zM311 259L317 259L316 258L310 259zM309 258L315 258L315 257L308 258zM307 257L314 257L313 256L307 257zM320 261L327 260L326 260L319 260zM318 259L325 259L324 259L317 259zM316 258L323 258L322 258L315 258zM330 262L337 261L335 261L329 261zM328 261L334 260L333 260L327 260zM326 260L332 259L331 259L325 259zM343 265L350 264L348 263L342 264zM340 263L347 263L346 262L339 263zM338 262L344 262L343 261L337 261zM357 268L365 267L363 266L356 267zM354 266L361 266L360 265L353 265zM351 265L358 264L357 264L350 264zM348 263L355 263L354 262L347 263zM657.5 390.7L671.7 386.3L655.9 380.0L641.8 384.1zM373 271L381 270L379 270L372 270zM370 269L377 269L375 268L368 269zM366 268L373 267L371 267L365 267zM363 266L370 266L368 265L361 266zM396 276L404 276L401 275L394 275zM391 275L399 274L397 273L389 274zM387 273L394 272L392 271L385 272zM383 271L390 271L388 270L381 270zM379 270L386 269L384 268L377 269zM429 285L438 285L434 283L426 284zM423 283L431 282L428 281L420 282zM417 281L425 280L422 279L414 280zM412 279L419 278L417 277L409 278zM406 277L414 276L411 275L404 276zM401 275L409 274L406 273L399 274zM558 328L569 326L561 323L550 325zM542 322L553 320L546 318L535 320zM528 317L539 315L532 313L522 315zM515 312L525 311L519 309L509 310zM503 308L513 307L507 305L498 306zM492 304L502 303L497 301L487 302zM482 301L492 299L487 298L477 299zM473 297L482 296L477 294L468 296zM464 294L473 293L469 292L460 292zM456 291L465 290L461 289L452 290zM448 288L457 287L453 286L445 287zM596 335L607 333L598 330L587 332zM617 336L628 334L618 331L607 333zM639 337L649 335L638 332L628 334zM761.9 368.9L772.2 365.4L755.0 360.5L744.6 363.7zM782.2 362.1L791.7 359.0L774.6 354.4L765.0 357.4zM730 318L737 316L726 314L718 316zM745 315L752 313L741 311L733 312zM754 308L761 307L750 305L744 306zM767 305L774 304L763 302L757 304zM787 298L792 297L782 295L776 296zM798 296L803 294L793 293L787 294zM803 291L808 290L798 289L793 290zM813 289L818 288L808 287L803 288zM822 287L827 287L817 285L813 286zM826 284L830 283L821 282L817 282z"/><path fill="#ececec" d="M238.4 287.9L249.1 287.1L248.7 285.8L238.2 286.7zM261.8 291.6L272.7 290.6L271.9 289.3L261.2 290.2zM275.2 295.0L286.4 294.0L285.4 292.5L274.4 293.5zM289.8 298.8L301.3 297.7L300.0 296.1L288.6 297.1zM305.7 302.9L317.6 301.7L315.8 299.9L304.2 301.1zM323.2 307.4L335.4 306.1L333.2 304.1L321.2 305.4zM342.4 312.3L354.9 310.9L352.2 308.8L340.0 310.1zM363.6 317.8L376.5 316.2L373.2 313.8L360.6 315.4zM395.3 329.7L409.1 327.7L404.7 324.8L391.2 326.7zM434.8 344.4L449.5 341.9L443.5 338.4L429.1 340.7zM529.4 375.8L545.3 372.1L534.8 366.7L519.2 370.2zM671.7 386.3L685.3 382.1L669.4 376.1L655.9 380.0z"/><path fill="#c4c4c4" d="M238.2 286.7L248.7 285.8L248.3 284.6L238.0 285.4zM249.8 289.7L260.6 288.8L260.1 287.5L249.4 288.4zM262.4 293.0L273.5 292.0L272.7 290.6L261.8 291.6zM274.4 293.5L285.4 292.5L284.4 291.1L273.5 292.0zM288.6 297.1L300.0 296.1L298.6 294.5L287.5 295.5zM304.2 301.1L315.8 299.9L314.2 298.2L302.7 299.3zM321.2 305.4L333.2 304.1L331.1 302.3L319.4 303.5zM268 251L274 251L273 251L268 251zM340.0 310.1L352.2 308.8L349.7 306.7L337.6 308.1zM275 252L281 252L280 252L274 252zM274 251L280 251L279 251L274 251zM273 251L279 250L278 250L273 250zM366.8 320.3L379.9 318.6L376.5 316.2L363.6 317.8zM281 252L287 252L286 252L281 252zM280 252L286 251L285 251L280 251zM279 251L285 251L284 250L279 250zM391.2 326.7L404.7 324.8L400.5 322.1L387.3 323.9zM289 253L294 253L294 253L288 253zM287 253L293 252L292 252L287 252zM286 252L292 251L291 251L286 251zM429.1 340.7L443.5 338.4L437.8 335.0L423.7 337.2zM298 255L304 255L303 254L297 255zM296 254L302 254L301 254L296 254zM295 253L301 253L300 253L294 253zM294 253L299 252L299 252L293 252zM477.2 358.5L492.5 355.5L484.6 351.1L469.6 354.0zM306 256L312 256L311 255L305 256zM304 255L310 255L309 255L304 255zM303 254L309 254L308 254L302 254zM301 254L307 253L306 253L301 253zM519.2 370.2L534.8 366.7L525.0 361.7L509.7 365.0zM315 257L321 257L320 257L314 257zM313 256L319 256L318 256L312 256zM311 255L317 255L316 255L310 255zM309 255L315 254L314 254L309 254zM568.5 384.0L584.2 379.9L571.9 374.0L556.5 377.8zM324 259L330 258L329 258L323 258zM322 258L328 257L327 257L321 257zM320 257L326 256L325 256L319 256zM318 256L324 255L323 255L317 255zM597.4 386.2L612.7 382.0L599.3 375.9L584.2 379.9zM335 261L342 261L341 260L334 260zM333 260L339 259L338 259L332 259zM331 259L337 258L336 258L330 258zM329 258L335 257L334 257L328 257zM627.1 388.4L641.8 384.1L627.2 377.9L612.7 382.0zM346 262L352 262L351 261L344 262zM343 261L350 261L348 260L342 261zM341 260L347 260L346 259L339 259zM338 259L344 259L343 258L337 258zM360 265L366 265L365 264L358 264zM357 264L363 263L362 263L355 263zM354 262L360 262L359 261L352 262zM351 261L357 261L356 260L350 261zM375 268L382 268L380 267L373 267zM371 267L378 266L376 265L370 266zM368 265L375 265L373 264L366 265zM365 264L371 263L370 263L363 263zM397 273L404 272L402 272L394 272zM392 271L399 271L397 270L390 271zM388 270L395 269L393 268L386 269zM384 268L391 268L389 267L382 268zM380 267L387 266L385 266L378 266zM441 286L449 285L446 284L438 285zM434 283L443 283L439 281L431 282zM428 281L436 280L433 279L425 280zM422 279L430 278L427 277L419 278zM417 277L424 276L422 275L414 276zM411 275L419 274L416 274L409 274zM406 273L414 273L411 272L404 272zM402 272L409 271L406 270L399 271zM578 329L588 327L580 324L569 326zM561 323L571 321L564 319L553 320zM546 318L556 316L549 314L539 315zM497 301L506 300L501 298L492 299zM487 298L496 297L491 295L482 296zM477 294L486 293L482 292L473 293zM469 292L477 291L473 289L465 290zM461 289L469 288L465 287L457 287zM453 286L461 285L458 284L449 285zM446 284L454 283L451 282L443 283zM598 330L608 328L599 325L588 327zM638 332L648 330L638 327L628 329zM659 333L669 331L658 328L648 330zM679 329L688 327L677 324L668 326zM697 325L705 323L694 321L686 322zM714 321L722 320L710 317L702 319zM726 314L733 312L723 310L715 312zM741 311L748 310L737 307L730 309zM763 302L769 301L759 299L753 301zM775 300L781 299L771 297L765 298zM782 295L787 294L778 292L772 293zM793 293L798 292L788 291L783 291zM798 289L803 288L794 287L789 287zM808 287L813 286L803 285L799 286zM817 285L822 284L812 283L808 284zM821 282L825 281L816 280L812 281z"/><path fill="#eaeaea" d="M238.0 285.4L248.3 284.6L248.0 283.4L237.8 284.2zM249.4 288.4L260.1 287.5L259.5 286.2L249.1 287.1zM273.5 292.0L284.4 291.1L283.4 289.7L272.7 290.6zM287.5 295.5L298.6 294.5L297.4 293.0L286.4 294.0zM302.7 299.3L314.2 298.2L312.6 296.6L301.3 297.7zM319.4 303.5L331.1 302.3L329.1 300.5L317.6 301.7zM337.6 308.1L349.7 306.7L347.2 304.8L335.4 306.1zM387.3 323.9L400.5 322.1L396.5 319.5L383.5 321.2zM423.7 337.2L437.8 335.0L432.4 331.7L418.6 333.9zM469.6 354.0L484.6 351.1L477.2 347.1L462.5 349.7zM556.5 377.8L571.9 374.0L560.5 368.5L545.3 372.1zM832.4 336.4L839.5 334.2L823.9 331.0L816.7 333.1z"/><path fill="#c2c2c2" d="M237.8 284.2L248.0 283.4L247.6 282.3L237.6 283.1zM249.1 287.1L259.5 286.2L259.0 285.0L248.7 285.8zM261.2 290.2L271.9 289.3L271.2 287.9L260.6 288.8zM272.7 290.6L283.4 289.7L282.4 288.4L271.9 289.3zM286.4 294.0L297.4 293.0L296.1 291.6L285.4 292.5zM301.3 297.7L312.6 296.6L311.0 295.0L300.0 296.1zM317.6 301.7L329.1 300.5L327.2 298.8L315.8 299.9zM335.4 306.1L347.2 304.8L344.8 302.9L333.2 304.1zM360.6 315.4L373.2 313.8L370.1 311.6L357.7 313.1zM383.5 321.2L396.5 319.5L392.6 317.0L379.9 318.6zM285 251L291 251L290 250L285 251zM284 250L290 250L289 250L284 250zM418.6 333.9L432.4 331.7L427.2 328.7L413.7 330.7zM292 252L298 252L297 251L292 251zM291 251L297 251L296 250L291 251zM290 250L296 250L295 250L290 250zM462.5 349.7L477.2 347.1L470.2 343.2L455.8 345.7zM300 253L306 253L305 252L299 252zM299 252L304 252L304 251L298 252zM297 251L303 251L302 251L297 251zM296 250L301 250L301 250L296 250zM308 254L314 253L313 253L307 253zM306 253L312 253L311 252L306 253zM305 252L310 252L310 251L304 252zM304 251L309 251L308 251L303 251zM316 255L322 254L321 254L315 254zM314 254L320 254L319 253L314 253zM313 253L318 253L318 252L312 253zM311 252L317 252L316 252L310 252zM327 257L333 256L332 256L326 256zM325 256L331 255L330 255L324 255zM323 255L329 255L328 254L322 254zM321 254L327 254L326 253L320 254zM336 258L342 258L341 257L335 257zM334 257L340 257L339 256L333 256zM332 256L337 256L336 255L331 255zM330 255L335 255L334 254L329 255zM348 260L354 260L353 259L347 260zM346 259L352 259L350 258L344 259zM343 258L349 258L348 257L342 258zM341 257L347 257L346 256L340 257zM362 263L368 262L367 262L360 262zM359 261L365 261L363 261L357 261zM356 260L362 260L361 259L354 260zM353 259L359 259L358 258L352 259zM350 258L356 258L355 257L349 258zM685.3 382.1L698.3 378.1L682.2 372.3L669.4 376.1zM376 265L383 265L381 264L375 265zM373 264L380 264L378 263L371 263zM370 263L376 262L374 262L368 262zM367 262L373 261L371 261L365 261zM363 261L370 260L368 260L362 260zM397 270L404 269L402 269L395 269zM393 268L400 268L398 267L391 268zM389 267L396 267L394 266L387 266zM385 266L392 265L390 265L383 265zM381 264L388 264L386 263L380 264zM532 313L542 312L535 309L525 311zM519 309L529 307L523 305L513 307zM507 305L517 304L511 302L502 303zM439 281L447 281L444 280L436 280zM433 279L441 279L438 278L430 278zM427 277L435 277L432 276L424 276zM422 275L429 275L426 274L419 274zM416 274L424 273L421 272L414 273zM411 272L418 271L416 271L409 271zM406 270L413 270L411 269L404 269zM402 269L409 268L407 267L400 268zM580 324L590 322L582 320L571 321zM482 292L490 291L486 290L477 291zM473 289L482 288L477 287L469 288zM465 287L473 286L469 285L461 285zM458 284L466 283L462 282L454 283zM451 282L458 281L455 280L447 281zM444 280L452 279L448 278L441 279zM618 331L628 329L618 326L608 328zM658 328L668 326L657 323L648 325zM677 324L686 322L675 320L666 321zM694 321L702 319L692 316L683 318zM809.4 343.6L817.4 341.1L801.5 337.6L793.5 339.9zM710 317L718 316L708 313L700 315zM825.0 338.7L832.4 336.4L816.7 333.1L809.2 335.3zM737 307L744 306L733 304L726 305zM750 305L757 304L746 302L740 303zM759 299L765 298L755 297L749 298zM771 297L776 296L767 294L761 296zM778 292L783 291L773 290L768 291zM788 291L793 290L784 288L779 289zM794 287L799 286L789 284L785 285zM803 285L808 284L799 283L794 284zM812 283L817 282L808 281L803 282zM816 280L821 279L812 278L808 279zM825 278L829 278L820 277L816 277z"/><path fill="#e8e8e8" d="M237.6 283.1L247.6 282.3L247.3 281.2L237.4 281.9zM248.7 285.8L259.0 285.0L258.5 283.8L248.3 284.6zM260.6 288.8L271.2 287.9L270.4 286.7L260.1 287.5zM271.9 289.3L282.4 288.4L281.5 287.1L271.2 287.9zM285.4 292.5L296.1 291.6L295.0 290.2L284.4 291.1zM300.0 296.1L311.0 295.0L309.5 293.5L298.6 294.5zM315.8 299.9L327.2 298.8L325.3 297.1L314.2 298.2zM333.2 304.1L344.8 302.9L342.6 301.1L331.1 302.3zM357.7 313.1L370.1 311.6L367.1 309.5L354.9 310.9zM379.9 318.6L392.6 317.0L389.0 314.6L376.5 316.2zM413.7 330.7L427.2 328.7L422.3 325.8L409.1 327.7zM455.8 345.7L470.2 343.2L463.6 339.6L449.5 341.9zM509.7 365.0L525.0 361.7L515.8 357.0L500.8 360.1zM584.2 379.9L599.3 375.9L586.8 370.3L571.9 374.0zM641.8 384.1L655.9 380.0L641.2 374.1L627.2 377.9zM698.3 378.1L710.6 374.2L694.5 368.7L682.2 372.3zM722.4 370.6L733.8 367.1L717.6 362.0L706.3 365.3zM783.8 351.5L792.7 348.8L776.6 344.8L767.7 347.4zM801.2 346.1L809.4 343.6L793.5 339.9L785.2 342.3zM817.4 341.1L825.0 338.7L809.2 335.3L801.5 337.6z"/><path fill="#c0c0c0" d="M237.4 281.9L247.3 281.2L247.0 280.1L237.3 280.8zM248.3 284.6L258.5 283.8L258.0 282.7L248.0 283.4zM260.1 287.5L270.4 286.7L269.7 285.4L259.5 286.2zM271.2 287.9L281.5 287.1L280.6 285.8L270.4 286.7zM284.4 291.1L295.0 290.2L293.8 288.8L283.4 289.7zM298.6 294.5L309.5 293.5L308.1 292.0L297.4 293.0zM314.2 298.2L325.3 297.1L323.5 295.5L312.6 296.6zM331.1 302.3L342.6 301.1L340.4 299.3L329.1 300.5zM354.9 310.9L367.1 309.5L364.2 307.4L352.2 308.8zM376.5 316.2L389.0 314.6L385.5 312.3L373.2 313.8zM409.1 327.7L422.3 325.8L417.7 323.0L404.7 324.8zM449.5 341.9L463.6 339.6L457.3 336.1L443.5 338.4zM295 250L300 250L300 249L294 249zM500.8 360.1L515.8 357.0L507.2 352.6L492.5 355.5zM302 251L308 250L307 250L301 250zM301 250L306 250L305 249L300 250zM545.3 372.1L560.5 368.5L549.8 363.4L534.8 366.7zM310 251L315 251L314 251L309 251zM308 251L314 250L313 250L308 250zM307 250L312 250L311 249L306 250zM305 249L311 249L310 249L305 249zM319 253L325 253L324 252L318 253zM318 252L323 252L322 252L317 252zM316 252L321 251L320 251L315 251zM314 251L320 251L319 250L314 250zM313 250L318 250L317 249L312 250zM328 254L333 254L332 253L327 254zM326 253L331 253L330 253L325 253zM324 252L329 252L328 252L323 252zM322 252L328 251L327 251L321 251zM320 251L326 251L325 250L320 251zM339 256L344 256L343 255L337 256zM336 255L342 255L341 254L335 255zM334 254L340 254L339 254L333 254zM332 253L338 253L337 253L331 253zM330 253L336 252L335 252L329 252zM348 257L354 257L353 256L347 257zM346 256L351 256L350 255L344 256zM343 255L349 255L348 255L342 255zM341 254L347 254L345 254L340 254zM339 254L344 253L343 253L338 253zM361 259L367 259L365 259L359 259zM358 258L364 258L362 258L356 258zM355 257L361 257L360 257L354 257zM353 256L358 256L357 256L351 256zM350 255L356 255L355 255L349 255zM378 263L384 263L382 262L376 262zM374 262L381 261L379 261L373 261zM371 261L377 260L376 260L370 260zM368 260L374 259L373 259L367 259zM365 259L371 258L370 258L364 258zM362 258L368 257L367 257L361 257zM710.6 374.2L722.4 370.6L706.3 365.3L694.5 368.7zM398 267L404 267L402 266L396 267zM394 266L400 265L398 265L392 265zM390 265L396 264L394 263L388 264zM386 263L392 263L390 262L384 263zM382 262L389 262L387 261L381 261zM379 261L385 260L383 260L377 260zM376 260L382 259L380 259L374 259zM564 319L574 317L566 315L556 316zM549 314L559 312L552 310L542 312zM535 309L545 308L538 306L529 307zM523 305L532 304L526 302L517 304zM511 302L521 301L515 299L506 300zM501 298L510 297L505 296L496 297zM491 295L500 294L495 292L486 293zM438 278L445 277L442 276L435 277zM432 276L439 275L436 274L429 275zM426 274L433 273L431 272L424 273zM421 272L428 272L425 271L418 271zM416 271L423 270L420 269L413 270zM411 269L418 268L416 268L409 268zM407 267L413 267L411 266L404 267zM402 266L409 266L407 265L400 265zM398 265L405 264L403 264L396 264zM394 263L401 263L399 262L392 263zM733.8 367.1L744.6 363.7L728.4 358.9L717.6 362.0zM599 325L609 323L600 320L590 322zM582 320L592 318L583 315L574 317zM486 290L494 289L490 287L482 288zM477 287L485 286L481 285L473 286zM469 285L477 284L473 283L466 283zM462 282L470 281L466 280L458 281zM455 280L463 279L459 278L452 279zM448 278L456 277L453 276L445 277zM442 276L449 275L446 274L439 275zM436 274L443 274L440 273L433 273zM431 272L438 272L435 271L428 272zM425 271L432 270L430 269L423 270zM618 326L628 324L619 321L609 323zM755.0 360.5L765.0 357.4L748.8 352.9L738.8 355.8zM638 327L648 325L638 322L628 324zM774.6 354.4L783.8 351.5L767.7 347.4L758.4 350.1zM657 323L666 321L656 319L647 320zM792.7 348.8L801.2 346.1L785.2 342.3L776.6 344.8zM708 313L715 312L705 310L697 311zM723 310L730 309L719 307L712 308zM733 304L740 303L730 301L723 302zM746 302L753 301L743 299L736 300zM755 297L761 296L751 294L745 295zM767 294L772 293L763 292L757 293zM773 290L779 289L770 288L764 289zM784 288L789 287L780 286L775 287zM789 284L794 284L785 282L781 283zM799 283L803 282L795 281L790 282zM808 281L812 281L803 280L799 280zM803 280L808 279L799 278L795 278zM812 278L816 277L808 276L804 277zM820 277L824 276L816 275L812 276zM824 274L827 273L819 272L815 273z"/><path fill="#e6e6e6" d="M237.3 280.8L247.0 280.1L246.7 279.1L237.1 279.8zM248.0 283.4L258.0 282.7L257.5 281.6L247.6 282.3zM259.5 286.2L269.7 285.4L269.1 284.2L259.0 285.0zM270.4 286.7L280.6 285.8L279.8 284.6L269.7 285.4zM283.4 289.7L293.8 288.8L292.7 287.5L282.4 288.4zM297.4 293.0L308.1 292.0L306.7 290.6L296.1 291.6zM312.6 296.6L323.5 295.5L321.8 294.0L311.0 295.0zM329.1 300.5L340.4 299.3L338.3 297.7L327.2 298.8zM352.2 308.8L364.2 307.4L361.4 305.4L349.7 306.7zM373.2 313.8L385.5 312.3L382.1 310.2L370.1 311.6zM404.7 324.8L417.7 323.0L413.3 320.4L400.5 322.1zM443.5 338.4L457.3 336.1L451.4 332.8L437.8 335.0zM492.5 355.5L507.2 352.6L499.1 348.4L484.6 351.1zM612.7 382.0L627.2 377.9L613.6 372.2L599.3 375.9zM744.6 363.7L755.0 360.5L738.8 355.8L728.4 358.9zM765.0 357.4L774.6 354.4L758.4 350.1L748.8 352.9z"/><path fill="#bebebe" d="M237.1 279.8L246.7 279.1L246.4 278.1L236.9 278.7zM247.6 282.3L257.5 281.6L257.0 280.5L247.3 281.2zM259.0 285.0L269.1 284.2L268.4 283.1L258.5 283.8zM269.7 285.4L279.8 284.6L278.9 283.4L269.1 284.2zM282.4 288.4L292.7 287.5L291.6 286.2L281.5 287.1zM296.1 291.6L306.7 290.6L305.3 289.3L295.0 290.2zM311.0 295.0L321.8 294.0L320.1 292.5L309.5 293.5zM327.2 298.8L338.3 297.7L336.2 296.1L325.3 297.1zM349.7 306.7L361.4 305.4L358.7 303.5L347.2 304.8zM344.8 302.9L356.2 301.7L353.7 299.9L342.6 301.1zM370.1 311.6L382.1 310.2L378.9 308.1L367.1 309.5zM400.5 322.1L413.3 320.4L409.0 317.8L396.5 319.5zM437.8 335.0L451.4 332.8L445.7 329.7L432.4 331.7zM484.6 351.1L499.1 348.4L491.4 344.5L477.2 347.1zM571.9 374.0L586.8 370.3L575.1 365.1L560.5 368.5zM311 249L316 249L316 249L311 249zM319 250L324 250L323 250L318 250zM317 249L322 249L322 249L316 249zM316 249L321 249L320 248L315 248zM328 252L334 252L333 251L328 251zM327 251L332 251L331 250L326 251zM325 250L330 250L329 250L324 250zM323 250L328 249L327 249L322 249zM322 249L327 249L326 248L321 249zM655.9 380.0L669.4 376.1L654.5 370.5L641.2 374.1zM337 253L342 252L341 252L336 252zM335 252L340 252L339 251L334 252zM333 251L338 251L337 251L332 251zM331 250L336 250L335 250L330 250zM329 250L334 249L333 249L328 249zM348 255L353 254L352 254L347 254zM345 254L351 253L350 253L344 253zM343 253L349 253L348 252L342 252zM341 252L346 252L345 251L340 252zM339 251L344 251L343 251L338 251zM360 257L365 256L364 256L358 256zM357 256L363 255L361 255L356 255zM355 255L360 254L359 254L353 254zM352 254L358 254L356 253L351 253zM350 253L355 253L354 252L349 253zM348 252L353 252L352 252L346 252zM373 259L379 258L377 258L371 258zM370 258L375 257L374 257L368 257zM367 257L372 256L371 256L365 256zM364 256L370 255L368 255L363 255zM361 255L367 255L366 254L360 254zM359 254L364 254L363 253L358 254zM390 262L397 262L395 261L389 262zM387 261L393 261L391 260L385 260zM383 260L389 260L388 259L382 259zM380 259L386 259L384 258L379 258zM377 258L383 257L381 257L375 257zM374 257L380 257L378 256L372 256zM371 256L377 256L375 255L370 255zM566 315L576 313L568 311L559 312zM552 310L561 309L554 307L545 308zM538 306L548 305L541 303L532 304zM526 302L535 301L530 299L521 301zM515 299L524 298L518 296L510 297zM505 296L513 294L508 293L500 294zM495 292L503 292L499 290L490 291zM420 269L427 269L425 268L418 268zM416 268L422 267L420 267L413 267zM411 266L418 266L415 265L409 266zM407 265L413 265L411 264L405 264zM403 264L409 263L407 263L401 263zM399 262L405 262L403 261L397 262zM395 261L401 261L399 260L393 261zM391 260L397 260L395 259L389 260zM388 259L394 259L392 258L386 259zM600 320L610 319L601 316L592 318zM499 290L507 289L502 288L494 289zM490 287L498 287L493 285L485 286zM481 285L489 284L485 283L477 284zM473 283L481 282L477 281L470 281zM466 280L474 280L470 279L463 279zM459 278L467 278L463 277L456 277zM453 276L460 276L457 275L449 275zM446 274L453 274L450 273L443 274zM440 273L447 272L445 271L438 272zM435 271L442 271L439 270L432 270zM430 269L436 269L434 268L427 269zM425 268L431 267L429 267L422 267zM420 267L426 266L424 265L418 266zM415 265L422 265L419 264L413 265zM411 264L417 263L415 263L409 263zM619 321L628 320L619 317L610 319zM638 322L647 320L637 318L628 320zM675 320L683 318L673 316L665 317zM692 316L700 315L690 312L681 314zM705 310L712 308L702 306L695 307zM719 307L726 305L717 304L710 305zM730 301L736 300L727 298L720 299zM743 299L749 298L739 296L733 297zM751 294L757 293L748 291L742 292zM763 292L768 291L759 290L753 291zM770 288L775 287L766 286L761 287zM780 286L785 285L776 284L771 285zM785 282L790 282L782 281L777 281zM795 281L799 280L791 279L786 280zM799 278L804 277L795 276L791 277zM808 276L812 276L804 275L799 276zM816 275L820 275L812 274L808 274zM812 274L815 273L808 272L804 273zM819 272L823 272L815 271L811 272zM827 271L830 271L823 270L819 271zM823 270L826 269L818 269L815 269z"/><path fill="#e4e4e4" d="M236.9 278.7L246.4 278.1L246.1 277.1L236.8 277.7zM247.3 281.2L257.0 280.5L256.5 279.4L247.0 280.1zM258.5 283.8L268.4 283.1L267.7 281.9L258.0 282.7zM269.1 284.2L278.9 283.4L278.1 282.3L268.4 283.1zM281.5 287.1L291.6 286.2L290.6 285.0L280.6 285.8zM295.0 290.2L305.3 289.3L304.0 287.9L293.8 288.8zM309.5 293.5L320.1 292.5L318.5 291.1L308.1 292.0zM325.3 297.1L336.2 296.1L334.3 294.5L323.5 295.5zM347.2 304.8L358.7 303.5L356.2 301.7L344.8 302.9zM367.1 309.5L378.9 308.1L375.8 306.1L364.2 307.4zM396.5 319.5L409.0 317.8L405.0 315.4L392.6 317.0zM432.4 331.7L445.7 329.7L440.3 326.7L427.2 328.7zM477.2 347.1L491.4 344.5L484.1 340.8L470.2 343.2zM534.8 366.7L549.8 363.4L539.7 358.6L525.0 361.7zM669.4 376.1L682.2 372.3L667.2 367.0L654.5 370.5zM823.9 331.0L830.9 329.0L816.1 326.0L809.0 328.0z"/><path fill="#bcbcbc" d="M236.8 277.7L246.1 277.1L245.8 276.1L236.6 276.8zM247.0 280.1L256.5 279.4L256.1 278.4L246.7 279.1zM258.0 282.7L267.7 281.9L267.1 280.8L257.5 281.6zM257.0 280.5L266.5 279.8L265.9 278.7L256.5 279.4zM268.4 283.1L278.1 282.3L277.3 281.2L267.7 281.9zM280.6 285.8L290.6 285.0L289.6 283.8L279.8 284.6zM293.8 288.8L304.0 287.9L302.8 286.6L292.7 287.5zM308.1 292.0L318.5 291.1L317.0 289.7L306.7 290.6zM323.5 295.5L334.3 294.5L332.4 293.0L321.8 294.0zM340.4 299.3L351.4 298.2L349.1 296.6L338.3 297.7zM364.2 307.4L375.8 306.1L372.8 304.1L361.4 305.4zM392.6 317.0L405.0 315.4L401.1 313.1L389.0 314.6zM385.5 312.3L397.4 310.9L393.8 308.8L382.1 310.2zM427.2 328.7L440.3 326.7L435.2 323.9L422.3 325.8zM417.7 323.0L430.3 321.2L425.7 318.7L413.3 320.4zM470.2 343.2L484.1 340.8L477.2 337.2L463.6 339.6zM525.0 361.7L539.7 358.6L530.3 354.1L515.8 357.0zM599.3 375.9L613.6 372.2L600.9 366.8L586.8 370.3zM627.2 377.9L641.2 374.1L627.4 368.6L613.6 372.2zM327 249L332 249L332 248L327 249zM326 248L331 248L330 248L325 248zM337 251L342 250L341 250L336 250zM335 250L340 250L339 249L334 249zM333 249L338 249L337 249L332 249zM332 248L336 248L336 248L331 248zM682.2 372.3L694.5 368.7L679.5 363.6L667.2 367.0zM345 251L351 251L349 251L344 251zM343 251L348 250L347 250L342 250zM341 250L346 250L345 249L340 250zM339 249L344 249L343 249L338 249zM337 249L342 248L341 248L336 248zM336 248L340 248L340 247L335 248zM356 253L362 253L360 252L355 253zM354 252L359 252L358 252L353 252zM352 252L357 251L356 251L351 251zM349 251L355 251L353 250L348 250zM347 250L352 250L351 249L346 250zM345 249L350 249L349 249L344 249zM368 255L374 255L372 254L367 255zM366 254L371 254L370 253L364 254zM363 253L368 253L367 253L362 253zM360 252L366 252L364 252L359 252zM358 252L363 251L362 251L357 251zM356 251L361 251L360 250L355 251zM353 250L358 250L357 250L352 250zM384 258L390 258L388 257L383 257zM381 257L387 257L385 256L380 257zM378 256L384 256L382 255L377 256zM375 255L381 255L379 254L374 255zM372 254L378 254L376 254L371 254zM370 253L375 253L374 253L368 253zM367 253L372 252L371 252L366 252zM583 315L593 314L585 312L576 313zM568 311L578 310L570 307L561 309zM554 307L563 305L557 304L548 305zM541 303L550 302L544 300L535 301zM530 299L538 298L533 297L524 298zM518 296L527 295L522 293L513 294zM508 293L517 292L512 291L503 292zM407 263L413 262L411 262L405 262zM403 261L409 261L407 260L401 261zM399 260L405 260L403 259L397 260zM395 259L401 259L399 258L394 259zM392 258L398 258L396 257L390 258zM388 257L394 257L392 256L387 257zM385 256L391 256L389 255L384 256zM382 255L388 255L386 255L381 255zM379 254L385 254L383 254L378 254zM601 316L610 315L602 312L593 314zM512 291L520 290L515 288L507 289zM502 288L510 287L506 286L498 287zM493 285L501 285L497 283L489 284zM485 283L493 282L489 281L481 282zM477 281L485 280L481 279L474 280zM470 279L477 278L474 277L467 278zM463 277L470 276L467 275L460 276zM457 275L464 274L460 273L453 274zM450 273L457 272L454 272L447 272zM445 271L451 271L448 270L442 271zM439 270L446 269L443 268L436 269zM434 268L440 268L438 267L431 267zM429 267L435 266L433 266L426 266zM424 265L430 265L428 264L422 265zM419 264L426 264L423 263L417 263zM415 263L421 262L419 262L413 262zM411 262L417 261L415 261L409 261zM407 260L413 260L411 260L405 260zM403 259L409 259L407 258L401 259zM399 258L405 258L403 257L398 258zM396 257L401 257L400 256L394 257zM619 317L628 316L620 313L610 315zM467 275L474 274L471 274L464 274zM460 273L467 273L464 272L457 272zM454 272L461 271L458 270L451 271zM448 270L455 269L452 269L446 269zM443 268L449 268L447 267L440 268zM438 267L444 267L441 266L435 266zM433 266L439 265L436 264L430 265zM428 264L434 264L432 263L426 264zM637 318L646 316L637 314L628 316zM656 319L665 317L655 315L646 316zM673 316L681 314L672 312L664 313zM801.5 337.6L809.2 335.3L794.2 332.0L786.4 334.2zM690 312L697 311L687 309L680 310zM816.7 333.1L823.9 331.0L809.0 328.0L801.7 330.0zM702 306L710 305L700 303L693 304zM830.9 329.0L837.6 327.0L822.9 324.2L816.1 326.0zM717 304L723 302L714 301L707 302zM727 298L733 297L724 296L718 297zM739 296L745 295L736 293L730 294zM748 291L753 291L745 289L739 290zM759 290L764 289L755 287L750 288zM766 286L771 285L762 284L757 284zM776 284L781 283L772 282L767 283zM772 282L777 281L769 280L764 281zM782 281L786 280L778 279L773 280zM791 279L795 278L787 277L782 278zM787 277L791 277L783 276L779 276zM795 276L799 276L792 275L787 275zM804 275L808 274L800 273L796 274zM800 273L804 273L796 272L792 273zM808 272L811 272L804 271L800 271zM815 271L819 271L811 270L808 270zM811 270L815 269L807 268L804 269zM818 269L822 268L815 267L811 268zM826 268L829 267L822 266L818 267zM822 266L825 266L818 265L814 266z"/><path fill="#e2e2e2" d="M246.7 279.1L256.1 278.4L255.7 277.4L246.4 278.1zM257.5 281.6L267.1 280.8L266.5 279.8L257.0 280.5zM267.7 281.9L277.3 281.2L276.6 280.1L267.1 280.8zM279.8 284.6L289.6 283.8L288.6 282.7L278.9 283.4zM292.7 287.5L302.8 286.6L301.5 285.4L291.6 286.2zM306.7 290.6L317.0 289.7L315.5 288.4L305.3 289.3zM321.8 294.0L332.4 293.0L330.5 291.6L320.1 292.5zM342.6 301.1L353.7 299.9L351.4 298.2L340.4 299.3zM338.3 297.7L349.1 296.6L346.9 295.0L336.2 296.1zM361.4 305.4L372.8 304.1L370.0 302.3L358.7 303.5zM389.0 314.6L401.1 313.1L397.4 310.9L385.5 312.3zM422.3 325.8L435.2 323.9L430.3 321.2L417.7 323.0zM463.6 339.6L477.2 337.2L470.7 333.9L457.3 336.1zM515.8 357.0L530.3 354.1L521.4 349.8L507.2 352.6zM560.5 368.5L575.1 365.1L564.1 360.2L549.8 363.4zM694.5 368.7L706.3 365.3L691.2 360.4L679.5 363.6zM793.5 339.9L801.5 337.6L786.4 334.2L778.4 336.4zM809.2 335.3L816.7 333.1L801.7 330.0L794.2 332.0z"/><path fill="#bababa" d="M246.4 278.1L255.7 277.4L255.2 276.4L246.1 277.1zM256.1 278.4L265.3 277.7L264.8 276.8L255.7 277.4zM267.1 280.8L276.6 280.1L275.8 279.1L266.5 279.8zM278.9 283.4L288.6 282.7L287.7 281.5L278.1 282.3zM291.6 286.2L301.5 285.4L300.4 284.2L290.6 285.0zM305.3 289.3L315.5 288.4L314.0 287.1L304.0 287.9zM320.1 292.5L330.5 291.6L328.8 290.2L318.5 291.1zM336.2 296.1L346.9 295.0L344.7 293.5L334.3 294.5zM358.7 303.5L370.0 302.3L367.3 300.5L356.2 301.7zM353.7 299.9L364.6 298.8L362.1 297.1L351.4 298.2zM378.9 308.1L390.4 306.7L387.1 304.8L375.8 306.1zM409.0 317.8L421.2 316.2L417.0 313.9L405.0 315.4zM457.3 336.1L470.7 333.9L464.5 330.7L451.4 332.8zM445.7 329.7L458.6 327.7L453.0 324.9L440.3 326.7zM507.2 352.6L521.4 349.8L513.0 345.8L499.1 348.4zM549.8 363.4L564.1 360.2L553.8 355.6L539.7 358.6zM343 249L348 248L347 248L342 248zM341 248L346 248L345 247L340 248zM706.3 365.3L717.6 362.0L702.4 357.3L691.2 360.4zM351 249L356 249L355 249L350 249zM349 249L354 249L353 248L348 248zM347 248L352 248L351 248L346 248zM345 247L350 247L349 247L344 247zM364 252L370 252L368 251L363 251zM362 251L367 251L366 250L361 251zM360 250L365 250L363 250L358 250zM357 250L362 249L361 249L356 249zM355 249L360 249L359 248L354 249zM353 248L358 248L357 248L352 248zM351 248L356 247L355 247L350 247zM728.4 358.9L738.8 355.8L723.6 351.5L713.2 354.3zM376 254L382 253L380 253L375 253zM374 253L379 252L377 252L372 252zM371 252L376 252L375 251L370 252zM368 251L373 251L372 251L367 251zM366 250L371 250L370 250L365 250zM363 250L368 249L367 249L362 249zM361 249L366 249L365 248L360 249zM359 248L364 248L363 248L358 248zM585 312L594 310L587 308L578 310zM570 307L579 306L572 304L563 305zM557 304L566 302L559 301L550 302zM544 300L553 299L547 297L538 298zM533 297L541 296L535 294L527 295zM522 293L530 292L525 291L517 292zM392 256L398 256L396 256L391 256zM389 255L395 255L393 255L388 255zM386 255L391 254L390 254L385 254zM383 254L388 253L387 253L382 253zM380 253L385 253L384 252L379 252zM377 252L382 252L381 251L376 252zM375 251L380 251L378 251L373 251zM372 251L377 250L376 250L371 250zM370 250L374 250L373 249L368 249zM748.8 352.9L758.4 350.1L743.2 346.1L733.6 348.7zM602 312L611 311L603 309L594 310zM525 291L533 290L528 289L520 290zM515 288L523 287L518 286L510 287zM506 286L513 285L509 284L501 285zM497 283L504 283L500 281L493 282zM489 281L496 280L492 279L485 280zM481 279L488 278L485 277L477 278zM474 277L481 276L477 275L470 276zM423 263L429 263L427 262L421 262zM419 262L425 261L423 261L417 261zM415 261L421 260L419 260L413 260zM411 260L416 259L414 259L409 259zM407 258L413 258L411 258L405 258zM403 257L409 257L407 257L401 257zM400 256L405 256L403 256L398 256zM396 256L402 255L400 255L395 255zM393 255L398 254L397 254L391 254zM390 254L395 254L394 253L388 253zM387 253L392 253L390 252L385 253zM384 252L389 252L388 251L382 252zM620 313L628 312L620 310L611 311zM492 279L499 279L495 278L488 278zM485 277L492 277L488 276L481 276zM477 275L484 275L481 274L474 274zM471 274L477 273L474 272L467 273zM464 272L471 271L468 270L461 271zM458 270L465 270L462 269L455 269zM452 269L459 268L456 267L449 268zM447 267L453 267L450 266L444 267zM441 266L448 265L445 265L439 265zM436 264L443 264L440 263L434 264zM432 263L438 263L435 262L429 263zM427 262L433 262L431 261L425 261zM423 261L429 260L426 260L421 260zM419 260L424 259L422 259L416 259zM414 259L420 258L418 258L413 258zM411 258L416 257L414 257L409 257zM407 257L412 256L411 256L405 256zM403 256L409 255L407 255L402 255zM400 255L405 254L404 254L398 254zM767.7 347.4L776.6 344.8L761.4 341.1L752.5 343.5zM637 314L646 312L637 310L628 312zM655 315L664 313L654 311L646 312zM785.2 342.3L793.5 339.9L778.4 336.4L770.1 338.7zM672 312L680 310L670 308L662 310zM687 309L695 307L686 305L678 307zM700 303L707 302L698 300L691 301zM714 301L720 299L711 298L705 299zM724 296L730 294L721 293L715 294zM736 293L742 292L733 291L727 292zM745 289L750 288L741 287L736 288zM755 287L761 287L752 285L747 286zM752 285L757 284L749 283L744 284zM762 284L767 283L759 282L754 282zM769 280L773 280L765 278L761 279zM778 279L782 278L774 277L770 278zM774 277L779 276L771 276L767 276zM783 276L787 275L780 274L775 275zM792 275L796 274L788 273L784 274zM788 273L792 273L784 272L780 272zM796 272L800 271L792 271L788 271zM804 271L808 270L800 269L796 270zM800 269L804 269L797 268L793 269zM807 268L811 268L804 267L800 268zM804 267L807 267L800 266L797 266zM815 267L818 267L811 266L807 267zM811 266L814 266L807 265L804 266zM818 265L821 265L814 264L811 265zM824 264L828 264L821 263L817 264zM821 263L824 263L817 262L814 263z"/><path fill="#e0e0e0" d="M246.1 277.1L255.2 276.4L254.8 275.5L245.8 276.1zM256.5 279.4L265.9 278.7L265.3 277.7L256.1 278.4zM266.5 279.8L275.8 279.1L275.1 278.1L265.9 278.7zM278.1 282.3L287.7 281.5L286.7 280.5L277.3 281.2zM290.6 285.0L300.4 284.2L299.2 283.0L289.6 283.8zM304.0 287.9L314.0 287.1L312.6 285.8L302.8 286.6zM318.5 291.1L328.8 290.2L327.1 288.8L317.0 289.7zM334.3 294.5L344.7 293.5L342.7 292.0L332.4 293.0zM356.2 301.7L367.3 300.5L364.6 298.8L353.7 299.9zM382.1 310.2L393.8 308.8L390.4 306.7L378.9 308.1zM375.8 306.1L387.1 304.8L384.0 302.9L372.8 304.1zM413.3 320.4L425.7 318.7L421.2 316.2L409.0 317.8zM405.0 315.4L417.0 313.9L412.9 311.6L401.1 313.1zM451.4 332.8L464.5 330.7L458.6 327.7L445.7 329.7zM499.1 348.4L513.0 345.8L505.0 342.0L491.4 344.5zM586.8 370.3L600.9 366.8L589.0 361.8L575.1 365.1zM613.6 372.2L627.4 368.6L614.5 363.5L600.9 366.8zM641.2 374.1L654.5 370.5L640.6 365.2L627.4 368.6zM717.6 362.0L728.4 358.9L713.2 354.3L702.4 357.3zM738.8 355.8L748.8 352.9L733.6 348.7L723.6 351.5zM758.4 350.1L767.7 347.4L752.5 343.5L743.2 346.1zM776.6 344.8L785.2 342.3L770.1 338.7L761.4 341.1z"/><path fill="#b8b8b8" d="M245.8 276.1L254.8 275.5L254.4 274.6L245.5 275.2zM245.3 274.3L254.1 273.7L253.7 272.8L245.0 273.4zM255.2 276.4L264.2 275.8L263.7 274.9L254.8 275.5zM265.9 278.7L275.1 278.1L274.4 277.1L265.3 277.7zM277.3 281.2L286.7 280.5L285.9 279.4L276.6 280.1zM289.6 283.8L299.2 283.0L298.1 281.9L288.6 282.7zM287.7 281.5L297.0 280.8L296.0 279.8L286.7 280.5zM302.8 286.6L312.6 285.8L311.3 284.6L301.5 285.4zM300.4 284.2L309.9 283.4L308.6 282.3L299.2 283.0zM317.0 289.7L327.1 288.8L325.4 287.5L315.5 288.4zM314.0 287.1L323.8 286.2L322.3 285.0L312.6 285.8zM332.4 293.0L342.7 292.0L340.7 290.6L330.5 291.6zM349.1 296.6L359.6 295.5L357.3 294.0L346.9 295.0zM372.8 304.1L384.0 302.9L381.0 301.1L370.0 302.3zM401.1 313.1L412.9 311.6L409.0 309.5L397.4 310.9zM393.8 308.8L405.2 307.4L401.6 305.4L390.4 306.7zM435.2 323.9L447.7 322.1L442.6 319.5L430.3 321.2zM491.4 344.5L505.0 342.0L497.5 338.4L484.1 340.8zM654.5 370.5L667.2 367.0L653.2 361.9L640.6 365.2zM357 248L361 247L360 247L356 247zM355 247L359 247L358 247L354 247zM367 249L372 249L371 249L366 249zM365 248L370 248L368 248L364 248zM363 248L367 248L366 247L361 247zM360 247L365 247L364 247L359 247zM587 308L595 307L588 305L579 306zM572 304L581 303L574 301L566 302zM559 301L568 299L561 298L553 299zM547 297L555 296L549 294L541 296zM535 294L544 293L538 292L530 292zM381 251L386 251L385 251L380 251zM378 251L383 250L382 250L377 250zM376 250L381 250L379 249L374 250zM373 249L378 249L377 249L372 249zM371 249L376 248L374 248L370 248zM368 248L373 248L372 247L367 248zM366 247L371 247L370 247L365 247zM364 247L368 246L367 246L363 246zM603 309L612 307L604 305L595 307zM538 292L546 291L541 289L533 290zM528 289L535 288L530 287L523 287zM518 286L526 285L521 284L513 285zM509 284L516 283L512 282L504 283zM500 281L508 281L503 280L496 280zM397 254L402 254L400 253L395 254zM394 253L399 253L397 252L392 253zM390 252L396 252L394 252L389 252zM388 251L393 251L391 251L386 251zM385 251L390 250L388 250L383 250zM382 250L387 250L385 249L381 250zM379 249L384 249L383 249L378 249zM377 249L381 248L380 248L376 248zM374 248L379 248L378 247L373 248zM372 247L376 247L375 247L371 247zM370 247L374 247L373 246L368 246zM620 310L628 308L620 306L612 307zM512 282L519 281L515 280L508 281zM503 280L511 279L506 278L499 279zM495 278L502 277L499 276L492 277zM488 276L495 275L491 274L484 275zM481 274L488 273L484 272L477 273zM474 272L481 272L477 271L471 271zM468 270L474 270L471 269L465 270zM462 269L468 268L465 268L459 268zM456 267L462 267L459 266L453 267zM450 266L457 266L454 265L448 265zM445 265L451 264L449 264L443 264zM440 263L446 263L444 262L438 263zM435 262L441 262L439 261L433 262zM431 261L437 261L434 260L429 260zM426 260L432 260L430 259L424 259zM422 259L428 258L426 258L420 258zM418 258L424 257L422 257L416 257zM414 257L420 256L418 256L412 256zM411 256L416 256L414 255L409 255zM407 255L412 255L410 254L405 254zM404 254L409 254L407 253L402 254zM400 253L405 253L404 253L399 253zM397 252L402 252L401 252L396 252zM394 252L399 251L397 251L393 251zM391 251L396 251L394 250L390 250zM388 250L393 250L392 250L387 250zM385 249L390 249L389 249L384 249zM383 249L387 249L386 248L381 248zM637 310L645 309L637 307L628 308zM484 272L491 272L487 271L481 272zM477 271L484 270L481 269L474 270zM471 269L477 269L474 268L468 268zM465 268L471 267L468 266L462 267zM459 266L465 266L463 265L457 266zM454 265L460 264L457 264L451 264zM449 264L455 263L452 263L446 263zM444 262L449 262L447 261L441 262zM439 261L445 261L442 260L437 261zM434 260L440 260L438 259L432 260zM430 259L435 259L433 258L428 258zM426 258L431 258L429 257L424 257zM422 257L427 257L425 256L420 256zM418 256L423 256L421 255L416 256zM414 255L419 255L417 254L412 255zM410 254L416 254L414 253L409 254zM407 253L412 253L410 253L405 253zM404 253L409 252L407 252L402 252zM401 252L405 251L404 251L399 251zM654 311L662 310L653 307L645 309zM447 261L453 261L450 260L445 261zM442 260L448 260L445 259L440 260zM438 259L443 259L441 258L435 259zM433 258L439 258L437 257L431 258zM670 308L678 307L669 305L661 306zM686 305L693 304L684 302L676 304zM809.0 328.0L816.1 326.0L802.0 323.2L794.9 325.1zM822.9 324.2L829.5 322.3L815.5 319.7L808.9 321.4zM698 300L705 299L696 297L689 298zM711 298L718 297L709 295L702 296zM721 293L727 292L719 291L713 291zM733 291L739 290L730 289L725 290zM730 289L736 288L728 287L722 287zM741 287L747 286L738 285L733 286zM738 285L744 284L736 283L730 284zM749 283L754 282L746 281L741 282zM759 282L764 281L756 280L751 281zM756 280L761 279L753 278L748 279zM765 278L770 278L762 277L757 277zM762 277L767 276L759 275L754 276zM771 276L775 275L768 274L763 275zM780 274L784 274L776 273L772 273zM776 273L780 272L773 271L769 272zM784 272L788 271L781 270L777 271zM781 270L785 270L778 269L774 269zM792 271L796 270L789 269L785 270zM789 269L793 269L786 268L782 268zM797 268L800 268L793 267L789 267zM793 267L797 266L790 266L786 266zM800 266L804 266L797 265L794 265zM807 265L811 265L804 264L801 264zM804 264L807 264L801 263L797 263zM814 264L817 264L811 263L807 264zM811 263L814 263L807 262L804 262zM817 262L820 262L814 261L811 262zM814 261L817 261L810 260L807 261zM823 261L827 261L820 260L817 261zM820 260L823 260L817 260L814 260zM823 259L826 258L819 258L816 258z"/><path fill="#dedede" d="M245.5 275.2L254.4 274.6L254.1 273.7L245.3 274.3zM255.7 277.4L264.8 276.8L264.2 275.8L255.2 276.4zM254.8 275.5L263.7 274.9L263.2 274.0L254.4 274.6zM265.3 277.7L274.4 277.1L273.7 276.1L264.8 276.8zM276.6 280.1L285.9 279.4L285.0 278.4L275.8 279.1zM288.6 282.7L298.1 281.9L297.0 280.8L287.7 281.5zM301.5 285.4L311.3 284.6L309.9 283.4L300.4 284.2zM315.5 288.4L325.4 287.5L323.8 286.2L314.0 287.1zM330.5 291.6L340.7 290.6L338.8 289.2L328.8 290.2zM351.4 298.2L362.1 297.1L359.6 295.5L349.1 296.6zM346.9 295.0L357.3 294.0L355.0 292.5L344.7 293.5zM370.0 302.3L381.0 301.1L378.1 299.3L367.3 300.5zM397.4 310.9L409.0 309.5L405.2 307.4L393.8 308.8zM440.3 326.7L453.0 324.9L447.7 322.1L435.2 323.9zM430.3 321.2L442.6 319.5L437.7 317.0L425.7 318.7zM484.1 340.8L497.5 338.4L490.4 335.0L477.2 337.2zM539.7 358.6L553.8 355.6L544.1 351.2L530.3 354.1zM816.1 326.0L822.9 324.2L808.9 321.4L802.0 323.2zM829.5 322.3L835.9 320.6L822.0 318.0L815.5 319.7z"/><path fill="#dcdcdc" d="M245.0 273.4L253.7 272.8L253.3 272.0L244.7 272.6zM244.5 271.7L253.0 271.2L252.6 270.4L244.3 270.9zM254.1 273.7L262.7 273.1L262.2 272.3L253.7 272.8zM264.2 275.8L273.1 275.2L272.4 274.3L263.7 274.9zM275.1 278.1L284.1 277.4L283.3 276.4L274.4 277.1zM286.7 280.5L296.0 279.8L295.0 278.7L285.9 279.4zM299.2 283.0L308.6 282.3L307.4 281.2L298.1 281.9zM312.6 285.8L322.3 285.0L320.8 283.8L311.3 284.6zM327.1 288.8L336.9 287.9L335.1 286.6L325.4 287.5zM342.7 292.0L352.8 291.1L350.6 289.7L340.7 290.6zM364.6 298.8L375.3 297.7L372.5 296.1L362.1 297.1zM390.4 306.7L401.6 305.4L398.2 303.5L387.1 304.8zM384.0 302.9L394.9 301.7L391.7 299.9L381.0 301.1zM421.2 316.2L433.1 314.6L428.6 312.4L417.0 313.9zM470.7 333.9L483.7 331.8L477.3 328.7L464.5 330.7zM521.4 349.8L535.0 347.1L526.4 343.3L513.0 345.8zM667.2 367.0L679.5 363.6L665.3 358.8L653.2 361.9zM786.4 334.2L794.2 332.0L780.0 328.9L772.2 331.0zM801.7 330.0L809.0 328.0L794.9 325.1L787.5 327.0z"/><path fill="#b6b6b6" d="M244.7 272.6L253.3 272.0L253.0 271.2L244.5 271.7zM254.4 274.6L263.2 274.0L262.7 273.1L254.1 273.7zM264.8 276.8L273.7 276.1L273.1 275.2L264.2 275.8zM263.7 274.9L272.4 274.3L271.8 273.4L263.2 274.0zM275.8 279.1L285.0 278.4L284.1 277.4L275.1 278.1zM274.4 277.1L283.3 276.4L282.5 275.5L273.7 276.1zM285.9 279.4L295.0 278.7L294.0 277.7L285.0 278.4zM298.1 281.9L307.4 281.2L306.2 280.1L297.0 280.8zM311.3 284.6L320.8 283.8L319.3 282.7L309.9 283.4zM328.8 290.2L338.8 289.2L336.9 287.9L327.1 288.8zM325.4 287.5L335.1 286.6L333.4 285.4L323.8 286.2zM344.7 293.5L355.0 292.5L352.8 291.1L342.7 292.0zM340.7 290.6L350.6 289.7L348.6 288.4L338.8 289.2zM367.3 300.5L378.1 299.3L375.3 297.7L364.6 298.8zM362.1 297.1L372.5 296.1L369.9 294.5L359.6 295.5zM387.1 304.8L398.2 303.5L394.9 301.7L384.0 302.9zM425.7 318.7L437.7 317.0L433.1 314.6L421.2 316.2zM417.0 313.9L428.6 312.4L424.4 310.2L412.9 311.6zM477.2 337.2L490.4 335.0L483.7 331.8L470.7 333.9zM464.5 330.7L477.3 328.7L471.2 325.8L458.6 327.7zM530.3 354.1L544.1 351.2L535.0 347.1L521.4 349.8zM575.1 365.1L589.0 361.8L577.9 357.1L564.1 360.2zM600.9 366.8L614.5 363.5L602.4 358.7L589.0 361.8zM627.4 368.6L640.6 365.2L627.5 360.3L614.5 363.5zM679.5 363.6L691.2 360.4L677.0 355.7L665.3 358.8zM588 305L597 304L589 302L581 303zM574 301L582 300L576 298L568 299zM561 298L569 297L563 295L555 296zM549 294L557 293L552 292L544 293zM604 305L612 304L605 302L597 304zM589 302L598 301L591 299L582 300zM576 298L584 297L577 296L569 297zM563 295L571 294L565 292L557 293zM552 292L559 291L554 290L546 291zM541 289L548 288L543 287L535 288zM530 287L538 286L533 285L526 285zM521 284L528 283L524 282L516 283zM380 248L385 248L384 248L379 248zM378 247L382 247L381 247L376 247zM375 247L380 247L379 246L374 247zM373 246L377 246L376 246L372 246zM620 306L628 305L621 303L612 304zM533 285L540 284L535 283L528 283zM524 282L531 281L526 280L519 281zM515 280L522 279L518 278L511 279zM506 278L513 277L509 276L502 277zM499 276L505 275L502 274L495 275zM491 274L498 274L494 273L488 273zM397 251L402 251L401 250L396 251zM394 250L399 250L398 250L393 250zM392 250L396 249L395 249L390 249zM389 249L393 249L392 248L387 249zM386 248L391 248L389 248L385 248zM384 248L388 247L387 247L382 247zM381 247L386 247L384 246L380 247zM379 246L383 246L382 246L377 246zM637 307L645 305L636 304L628 305zM509 276L516 276L512 275L505 275zM502 274L508 274L504 273L498 274zM494 273L501 272L497 271L491 272zM487 271L494 270L490 270L484 270zM481 269L487 269L484 268L477 269zM474 268L480 267L477 267L471 267zM468 266L474 266L471 265L465 266zM463 265L469 265L466 264L460 264zM457 264L463 263L460 263L455 263zM452 263L458 262L455 262L449 262zM429 257L434 257L432 256L427 257zM425 256L430 256L428 255L423 256zM421 255L426 255L424 254L419 255zM417 254L423 254L421 254L416 254zM414 253L419 253L417 253L412 253zM410 253L415 252L414 252L409 252zM407 252L412 252L410 251L405 251zM404 251L409 251L407 250L402 251zM401 250L406 250L404 250L399 250zM398 250L403 249L401 249L396 249zM395 249L400 249L398 248L393 249zM392 248L397 248L395 248L391 248zM389 248L394 247L393 247L388 247zM387 247L391 247L390 246L386 247zM384 246L389 246L387 246L383 246zM382 246L386 246L385 245L381 246zM778.4 336.4L786.4 334.2L772.2 331.0L764.1 333.1zM653 307L661 306L653 304L645 305zM490 270L496 269L493 268L487 269zM484 268L490 268L487 267L480 267zM477 267L483 266L480 266L474 266zM471 265L477 265L474 264L469 265zM466 264L472 264L469 263L463 263zM460 263L466 262L463 262L458 262zM455 262L461 261L458 261L453 261zM450 260L456 260L453 260L448 260zM445 259L451 259L449 258L443 259zM441 258L446 258L444 257L439 258zM437 257L442 257L440 256L434 257zM432 256L438 256L436 256L430 256zM428 255L434 255L432 255L426 255zM424 254L430 254L428 254L423 254zM421 254L426 253L424 253L419 253zM417 253L422 253L420 252L415 252zM414 252L419 252L417 251L412 252zM410 251L415 251L414 251L409 251zM407 250L412 250L410 250L406 250zM404 250L409 250L407 249L403 249zM401 249L406 249L404 248L400 249zM398 248L403 248L401 248L397 248zM395 248L400 248L398 247L394 247zM393 247L397 247L396 247L391 247zM653 304L660 303L652 301L644 302zM463 262L469 261L466 261L461 261zM458 261L464 260L461 260L456 260zM453 260L459 259L456 259L451 259zM449 258L454 258L452 258L446 258zM444 257L449 257L447 257L442 257zM440 256L445 256L443 256L438 256zM436 256L441 255L439 255L434 255zM432 255L437 254L435 254L430 254zM428 254L433 253L431 253L426 253zM424 253L429 253L427 252L422 253zM420 252L425 252L423 251L419 252zM417 251L422 251L420 251L415 251zM414 251L418 250L417 250L412 250zM794.2 332.0L801.7 330.0L787.5 327.0L780.0 328.9zM669 305L676 304L668 302L660 303zM668 302L675 301L667 299L659 300zM684 302L691 301L682 299L675 301zM682 299L689 298L681 297L674 298zM696 297L702 296L694 294L687 296zM709 295L715 294L707 292L700 293zM707 292L713 291L704 290L698 291zM719 291L725 290L716 288L710 289zM716 288L722 287L714 286L708 287zM728 287L733 286L725 284L720 285zM736 283L741 282L733 281L728 282zM746 281L751 281L743 280L738 280zM743 280L748 279L740 278L736 279zM753 278L757 277L750 277L745 277zM750 277L754 276L747 275L742 276zM759 275L763 275L756 274L752 274zM756 274L760 273L753 272L749 273zM768 274L772 273L765 273L760 273zM765 273L769 272L762 271L758 272zM773 271L777 271L770 270L766 271zM770 270L774 269L767 269L763 269zM778 269L782 268L775 268L771 268zM775 268L779 267L772 267L768 267zM786 268L789 267L783 267L779 267zM783 267L786 266L780 266L776 266zM790 266L794 265L787 265L783 265zM787 265L790 264L784 264L780 264zM797 265L801 264L794 264L790 264zM794 264L797 263L791 263L787 263zM791 263L794 262L788 262L784 262zM801 263L804 262L798 262L794 262zM798 262L801 261L794 261L791 261zM807 262L811 262L804 261L801 261zM804 261L807 261L801 260L798 261zM801 260L804 260L798 259L795 260zM810 260L814 260L807 259L804 260zM807 259L810 259L804 258L801 259zM817 260L820 259L813 259L810 259zM813 259L816 258L810 258L807 258zM810 258L813 257L807 257L804 257zM819 258L822 258L816 257L813 257zM816 257L819 257L813 256L810 257zM825 257L828 257L822 256L819 257zM822 256L825 256L819 256L816 256zM819 256L821 255L816 255L813 255zM824 255L827 255L821 254L818 255z"/><path fill="#b4b4b4" d="M244.3 270.9L252.6 270.4L252.3 269.6L244.0 270.1zM244 269L252 269L252 268L244 269zM253.7 272.8L262.2 272.3L261.7 271.4L253.3 272.0zM253 271L261 271L261 270L253 270zM262.7 273.1L271.2 272.5L270.6 271.7L262.2 272.3zM273.1 275.2L281.8 274.6L281.0 273.7L272.4 274.3zM284.1 277.4L293.0 276.7L292.1 275.8L283.3 276.4zM283 275L291 275L290 274L282 275zM296.0 279.8L305.0 279.1L303.9 278.0L295.0 278.7zM294 278L303 277L302 276L293 277zM308.6 282.3L317.9 281.5L316.5 280.4L307.4 281.2zM306 280L315 279L314 278L305 279zM322.3 285.0L331.7 284.2L330.1 283.0L320.8 283.8zM336.9 287.9L346.6 287.1L344.7 285.8L335.1 286.6zM357.3 294.0L367.4 293.0L365.0 291.5L355.0 292.5zM353 291L363 290L360 289L351 290zM381.0 301.1L391.7 299.9L388.6 298.2L378.1 299.3zM375 298L386 297L383 295L373 296zM409.0 309.5L420.3 308.1L416.4 306.1L405.2 307.4zM402 305L413 304L409 302L398 304zM453.0 324.9L465.3 323.0L459.8 320.4L447.7 322.1zM443 320L455 318L449 315L438 317zM513.0 345.8L526.4 343.3L518.2 339.6L505.0 342.0zM498 338L510 336L503 333L490 335zM554 356L567 353L557 348L544 351zM702.4 357.3L713.2 354.3L698.9 350.0L688.2 352.8zM723.6 351.5L733.6 348.7L719.3 344.7L709.3 347.3zM743.2 346.1L752.5 343.5L738.1 339.8L728.9 342.2zM761.4 341.1L770.1 338.7L755.7 335.3L747.1 337.5zM605 302L613 301L606 299L598 301zM591 299L599 298L592 296L584 297zM577 296L585 294L579 293L571 294zM565 292L573 292L567 290L559 291zM554 290L561 289L556 287L548 288zM543 287L550 286L545 285L538 286zM621 303L629 302L621 300L613 301zM606 299L614 298L606 297L599 298zM592 296L600 295L593 293L585 294zM579 293L587 292L580 291L573 292zM567 290L574 289L569 288L561 289zM556 287L563 287L558 285L550 286zM545 285L553 284L548 283L540 284zM535 283L543 282L538 281L531 281zM526 280L533 280L529 279L522 279zM518 278L524 278L520 277L513 277zM636 304L644 302L636 301L629 302zM621 300L629 299L621 297L614 298zM606 297L614 296L607 294L600 295zM593 293L600 292L594 291L587 292zM580 291L588 290L582 288L574 289zM569 288L576 287L570 286L563 287zM558 285L565 285L560 283L553 284zM548 283L555 282L550 281L543 282zM538 281L545 280L540 279L533 280zM529 279L536 278L531 277L524 278zM520 277L527 276L523 275L516 276zM512 275L519 274L515 273L508 274zM504 273L511 272L507 272L501 272zM497 271L503 271L500 270L494 270zM390 246L394 246L393 246L389 246zM387 246L392 246L390 245L386 246zM636 301L644 299L636 298L629 299zM621 297L629 296L621 294L614 296zM607 294L614 293L608 292L600 292zM594 291L601 290L595 289L588 290zM582 288L589 287L583 286L576 287zM570 286L577 285L572 284L565 285zM560 283L567 283L561 281L555 282zM550 281L556 280L552 279L545 280zM540 279L547 278L542 277L536 278zM531 277L538 276L533 275L527 276zM523 275L529 274L525 274L519 274zM515 273L521 273L517 272L511 272zM507 272L513 271L510 270L503 271zM500 270L506 269L503 269L496 269zM493 268L499 268L496 267L490 268zM487 267L493 266L489 266L483 266zM480 266L486 265L483 264L477 265zM474 264L480 264L477 263L472 264zM469 263L475 263L472 262L466 262zM410 250L415 250L413 249L409 250zM407 249L412 249L410 249L406 249zM404 248L409 248L407 248L403 248zM401 248L406 248L404 247L400 248zM398 247L403 247L401 247L397 247zM396 247L400 246L399 246L394 246zM393 246L397 246L396 245L392 246zM390 245L395 245L393 245L389 245zM652 301L659 300L651 298L644 299zM636 298L643 297L636 295L629 296zM621 294L629 293L622 292L614 293zM608 292L615 291L608 289L601 290zM595 289L602 288L596 287L589 287zM583 286L590 285L584 284L577 285zM572 284L579 283L573 282L567 283zM561 281L568 281L563 280L556 280zM552 279L558 279L553 278L547 278zM542 277L549 277L544 276L538 276zM533 275L540 275L536 274L529 274zM525 274L531 273L527 272L521 273zM517 272L523 271L520 270L513 271zM510 270L516 270L512 269L506 269zM503 269L509 268L505 267L499 268zM496 267L502 267L498 266L493 266zM489 266L495 265L492 265L486 265zM483 264L489 264L486 263L480 264zM477 263L483 263L480 262L475 263zM472 262L477 262L475 261L469 261zM466 261L472 260L469 260L464 260zM461 260L467 259L464 259L459 259zM456 259L462 258L459 258L454 258zM452 258L457 257L455 257L449 257zM447 257L452 256L450 256L445 256zM443 256L448 255L446 255L441 255zM439 255L444 254L442 254L437 254zM435 254L440 254L438 253L433 253zM431 253L436 253L434 252L429 253zM427 252L432 252L430 252L425 252zM423 251L428 251L426 251L422 251zM420 251L425 250L423 250L418 250zM417 250L421 250L420 249L415 250zM413 249L418 249L416 249L412 249zM410 249L415 248L413 248L409 248zM407 248L412 248L410 247L406 248zM404 247L409 247L407 247L403 247zM401 247L406 246L404 246L400 246zM399 246L403 246L402 246L397 246zM396 245L400 245L399 245L395 245zM651 298L658 297L651 296L643 297zM636 295L643 294L636 292L629 293zM622 292L629 291L622 290L615 291zM608 289L615 288L609 287L602 288zM596 287L603 286L597 285L590 285zM584 284L591 283L585 282L579 283zM573 282L580 281L575 280L568 281zM563 280L570 279L565 278L558 279zM553 278L560 277L555 276L549 277zM544 276L551 275L546 274L540 275zM536 274L542 273L538 272L531 273zM527 272L534 272L530 271L523 271zM520 270L526 270L522 269L516 270zM512 269L518 268L515 268L509 268zM505 267L511 267L508 266L502 267zM498 266L504 266L501 265L495 265zM492 265L498 264L495 264L489 264zM486 263L492 263L489 262L483 263zM480 262L486 262L483 261L477 262zM475 261L480 261L477 260L472 260zM469 260L475 259L472 259L467 259zM464 259L470 258L467 258L462 258zM459 258L465 257L462 257L457 257zM455 257L460 256L458 256L452 256zM450 256L455 256L453 255L448 255zM446 255L451 255L449 254L444 254zM442 254L447 254L445 253L440 254zM438 253L443 253L441 252L436 253zM434 252L439 252L437 252L432 252zM430 252L435 251L433 251L428 251zM426 251L431 251L429 250L425 250zM423 250L428 250L426 249L421 250zM420 249L424 249L423 249L418 249zM416 249L421 248L419 248L415 248zM413 248L418 248L416 247L412 248zM410 247L415 247L413 247L409 247zM407 247L412 247L410 246L406 246zM404 246L409 246L407 246L403 246zM402 246L406 245L405 245L400 245zM399 245L403 245L402 245L398 245zM667 299L674 298L665 296L658 297zM651 296L658 294L650 293L643 294zM636 292L643 292L636 290L629 291zM622 290L629 289L622 287L615 288zM609 287L616 286L610 285L603 286zM597 285L604 284L598 283L591 283zM585 282L592 281L587 280L580 281zM575 280L581 279L576 278L570 279zM565 278L571 277L566 276L560 277zM555 276L561 275L557 274L551 275zM546 274L552 274L548 273L542 273zM538 272L544 272L540 271L534 272zM530 271L536 270L532 269L526 270zM522 269L528 269L524 268L518 268zM515 268L520 267L517 266L511 267zM508 266L513 266L510 265L504 266zM501 265L507 264L503 264L498 264zM495 264L500 263L497 263L492 263zM489 262L494 262L491 261L486 262zM483 261L488 261L486 260L480 261zM477 260L483 260L480 259L475 259zM472 259L477 259L475 258L470 258zM467 258L472 258L470 257L465 257zM462 257L467 257L465 256L460 256zM458 256L463 256L460 255L455 256zM453 255L458 255L456 254L451 255zM449 254L454 254L452 253L447 254zM445 253L449 253L447 253L443 253zM441 252L445 252L443 252L439 252zM437 252L441 251L440 251L435 251zM433 251L438 251L436 250L431 251zM429 250L434 250L432 250L428 250zM426 249L430 249L429 249L424 249zM423 249L427 249L425 248L421 248zM419 248L424 248L422 248L418 248zM416 247L421 247L419 247L415 247zM413 247L417 247L416 246L412 247zM410 246L414 246L413 246L409 246zM407 246L412 245L410 245L406 245zM405 245L409 245L407 245L403 245zM665 296L672 295L664 293L658 294zM650 293L657 292L649 291L643 292zM636 290L642 289L635 288L629 289zM622 287L629 287L622 285L616 286zM610 285L616 284L610 283L604 284zM598 283L604 282L598 281L592 281zM587 280L593 280L588 279L581 279zM576 278L582 278L577 277L571 277zM566 276L572 276L568 275L561 275zM557 274L563 274L558 273L552 274zM548 273L554 272L550 271L544 272zM540 271L546 270L542 270L536 270zM532 269L538 269L534 268L528 269zM524 268L530 267L526 267L520 267zM517 266L523 266L519 265L513 266zM510 265L516 265L512 264L507 264zM503 264L509 263L506 263L500 263zM497 263L503 262L500 262L494 262zM491 261L497 261L494 260L488 261zM486 260L491 260L488 259L483 260zM480 259L485 259L483 258L477 259zM475 258L480 258L477 257L472 258zM470 257L475 257L472 256L467 257zM465 256L470 256L468 255L463 256zM460 255L465 255L463 254L458 255zM456 254L461 254L459 254L454 254zM452 253L456 253L454 253L449 253zM447 253L452 252L450 252L445 252zM443 252L448 252L446 251L441 251zM440 251L444 251L442 250L438 251zM436 250L440 250L439 250L434 250zM432 250L437 249L435 249L430 249zM429 249L433 249L431 248L427 249zM425 248L430 248L428 248L424 248zM422 248L426 247L425 247L421 247zM419 247L423 247L422 246L417 247zM416 246L420 246L419 246L414 246zM413 246L417 246L416 245L412 245zM410 245L414 245L413 245L409 245zM407 245L411 244L410 244L406 244zM681 297L687 296L679 294L672 295zM664 293L671 292L663 291L657 292zM649 291L656 290L649 288L642 289zM635 288L642 287L635 286L629 287zM622 285L629 284L623 283L616 284zM610 283L616 282L611 281L604 282zM598 281L605 280L599 279L593 280zM588 279L594 278L589 277L582 278zM577 277L584 276L579 275L572 276zM568 275L574 274L569 273L563 274zM558 273L564 272L560 272L554 272zM550 271L556 271L551 270L546 270zM542 270L547 269L543 268L538 269zM534 268L539 268L536 267L530 267zM526 267L532 266L528 266L523 266zM519 265L525 265L521 264L516 265zM512 264L518 264L515 263L509 263zM506 263L511 262L508 262L503 262zM500 262L505 261L502 261L497 261zM494 260L499 260L496 259L491 260zM488 259L493 259L491 258L485 259zM483 258L488 258L485 257L480 258zM477 257L483 257L480 256L475 257zM472 256L477 256L475 255L470 256zM468 255L473 255L470 255L465 255zM463 254L468 254L466 254L461 254zM459 254L463 253L461 253L456 253zM454 253L459 252L457 252L452 252zM450 252L455 252L453 251L448 252zM446 251L451 251L449 251L444 251zM442 250L447 250L445 250L440 250zM439 250L443 249L441 249L437 249zM435 249L439 249L438 248L433 249zM431 248L436 248L434 248L430 248zM428 248L432 247L431 247L426 247zM425 247L429 247L428 247L423 247zM422 246L426 246L424 246L420 246zM419 246L423 246L421 245L417 246zM416 245L420 245L418 245L414 245zM413 245L417 245L416 244L411 244zM816 320L822 318L809 316L802 317zM679 294L686 293L678 292L671 292zM663 291L670 290L663 289L656 290zM649 288L655 287L648 286L642 287zM635 286L642 285L635 284L629 284zM623 283L629 283L623 281L616 282zM611 281L617 280L611 279L605 280zM599 279L605 278L600 277L594 278zM589 277L595 276L590 275L584 276zM579 275L585 274L580 274L574 274zM569 273L575 273L570 272L564 272zM560 272L566 271L562 270L556 271zM551 270L557 269L553 269L547 269zM543 268L549 268L545 267L539 268zM536 267L541 266L537 266L532 266zM528 266L534 265L530 264L525 265zM521 264L527 264L523 263L518 264zM515 263L520 263L517 262L511 262zM508 262L513 261L510 261L505 261zM502 261L507 260L504 260L499 260zM496 259L501 259L498 259L493 259zM491 258L496 258L493 258L488 258zM485 257L490 257L488 257L483 257zM480 256L485 256L482 256L477 256zM475 255L480 255L477 255L473 255zM470 255L475 254L473 254L468 254zM466 254L470 253L468 253L463 253zM461 253L466 253L464 252L459 252zM457 252L462 252L459 251L455 252zM453 251L457 251L455 251L451 251zM449 251L453 250L451 250L447 250zM445 250L449 250L448 249L443 249zM441 249L446 249L444 249L439 249zM438 248L442 248L440 248L436 248zM434 248L439 248L437 247L432 247zM431 247L435 247L433 247L429 247zM428 247L432 246L430 246L426 246zM424 246L429 246L427 245L423 246zM421 245L425 245L424 245L420 245zM418 245L422 245L421 244L417 245zM416 244L420 244L418 244L414 244zM694 294L700 293L692 292L686 293zM678 292L684 291L676 289L670 290zM663 289L669 288L662 287L655 287zM648 286L655 285L648 284L642 285zM635 284L641 283L635 282L629 283zM623 281L629 281L623 280L617 280zM611 279L617 279L611 278L605 278zM600 277L606 277L601 276L595 276zM590 275L596 275L590 274L585 274zM580 274L586 273L581 272L575 273zM570 272L576 271L572 270L566 271zM562 270L567 270L563 269L557 269zM553 269L559 268L555 267L549 268zM545 267L551 267L547 266L541 266zM537 266L543 265L539 265L534 265zM530 264L536 264L532 263L527 264zM523 263L529 263L525 262L520 263zM517 262L522 262L519 261L513 261zM510 261L516 260L512 260L507 260zM504 260L509 259L506 259L501 259zM498 259L504 258L501 258L496 258zM493 258L498 257L495 257L490 257zM488 257L492 256L490 256L485 256zM482 256L487 255L485 255L480 255zM477 255L482 254L480 254L475 254zM473 254L477 254L475 253L470 253zM468 253L473 253L471 252L466 253zM464 252L468 252L466 252L462 252zM459 251L464 251L462 251L457 251zM455 251L460 250L458 250L453 250zM451 250L456 250L454 249L449 250zM448 249L452 249L450 249L446 249zM444 249L448 248L446 248L442 248zM440 248L445 248L443 247L439 248zM437 247L441 247L439 247L435 247zM433 247L438 246L436 246L432 246zM430 246L434 246L433 246L429 246zM427 245L431 245L430 245L425 245zM424 245L428 245L427 244L422 245zM421 244L425 244L424 244L420 244zM828.3 316.4L834.4 314.8L821.2 312.5L815.0 314.0zM692 292L698 291L690 290L684 291zM676 289L683 288L675 287L669 288zM662 287L668 286L661 284L655 285zM648 284L654 283L647 282L641 283zM635 282L641 281L635 280L629 281zM623 280L629 279L623 278L617 279zM611 278L617 277L612 276L606 277zM601 276L607 275L601 274L596 275zM590 274L596 273L591 272L586 273zM581 272L587 272L582 271L576 271zM572 270L577 270L573 269L567 270zM563 269L569 268L564 268L559 268zM555 267L560 267L556 266L551 267zM547 266L552 266L548 265L543 265zM539 265L545 264L541 264L536 264zM532 263L537 263L534 262L529 263zM525 262L530 262L527 261L522 262zM519 261L524 261L521 260L516 260zM512 260L518 259L514 259L509 259zM506 259L511 258L509 258L504 258zM501 258L506 257L503 257L498 257zM495 257L500 256L497 256L492 256zM490 256L495 255L492 255L487 255zM485 255L490 255L487 254L482 254zM480 254L485 254L482 253L477 254zM475 253L480 253L477 252L473 253zM471 252L475 252L473 252L468 252zM466 252L471 251L469 251L464 251zM462 251L466 251L464 250L460 250zM458 250L462 250L460 249L456 250zM454 249L458 249L456 249L452 249zM450 249L454 248L453 248L448 248zM446 248L451 248L449 247L445 248zM443 247L447 247L445 247L441 247zM439 247L444 247L442 246L438 246zM436 246L440 246L438 246L434 246zM433 246L437 245L435 245L431 245zM430 245L434 245L432 245L428 245zM427 244L431 244L429 244L425 244zM424 244L428 244L426 243L422 244zM690 290L696 289L689 287L683 288zM675 287L681 286L674 285L668 286zM661 284L667 284L660 283L654 283zM647 282L653 281L647 280L641 281zM635 280L641 279L635 278L629 279zM623 278L629 277L623 276L617 277zM612 276L618 275L612 274L607 275zM591 272L597 272L592 271L587 272zM582 271L587 270L583 269L577 270zM573 269L578 269L574 268L569 268zM564 268L570 267L566 266L560 267zM556 266L562 266L558 265L552 266zM548 265L554 264L550 264L545 264zM541 264L546 263L543 263L537 263zM534 262L539 262L536 261L530 262zM527 261L532 261L529 260L524 261zM521 260L526 260L523 259L518 259zM514 259L519 259L516 258L511 258zM509 258L513 258L511 257L506 257zM503 257L508 257L505 256L500 256zM497 256L502 256L499 255L495 255zM492 255L497 255L494 254L490 255zM487 254L492 254L489 253L485 254zM482 253L487 253L484 253L480 253zM477 252L482 252L480 252L475 252zM473 252L477 251L475 251L471 251zM469 251L473 251L471 250L466 251zM464 250L469 250L467 250L462 250zM460 249L465 249L463 249L458 249zM456 249L461 249L459 248L454 248zM453 248L457 248L455 248L451 248zM449 247L453 247L451 247L447 247zM445 247L449 247L448 246L444 247zM442 246L446 246L444 246L440 246zM438 246L443 245L441 245L437 245zM435 245L439 245L438 245L434 245zM432 245L436 244L434 244L431 244zM429 244L433 244L431 244L428 244zM704 290L710 289L702 288L696 289zM689 287L695 287L687 285L681 286zM674 285L680 284L673 283L667 284zM660 283L666 282L659 281L653 281zM647 280L653 280L647 279L641 279zM635 278L641 278L635 277L629 277zM574 268L579 267L575 267L570 267zM566 266L571 266L567 265L562 266zM558 265L563 265L559 264L554 264zM550 264L555 263L551 263L546 263zM543 263L548 262L544 262L539 262zM536 261L541 261L537 260L532 261zM529 260L534 260L531 259L526 260zM523 259L528 259L524 258L519 259zM516 258L521 258L518 257L513 258zM511 257L515 257L513 256L508 257zM505 256L510 256L507 255L502 256zM499 255L504 255L502 254L497 255zM494 254L499 254L496 254L492 254zM489 253L494 253L491 253L487 253zM484 253L489 252L487 252L482 252zM480 252L484 252L482 251L477 251zM475 251L480 251L477 250L473 251zM471 250L475 250L473 250L469 250zM467 250L471 249L469 249L465 249zM463 249L467 249L465 248L461 249zM459 248L463 248L461 248L457 248zM455 248L459 247L457 247L453 247zM451 247L455 247L454 246L449 247zM448 246L452 246L450 246L446 246zM444 246L448 246L447 245L443 245zM441 245L445 245L443 245L439 245zM438 245L442 244L440 244L436 244zM434 244L438 244L437 244L433 244zM431 244L435 243L434 243L430 243zM702 288L708 287L700 286L695 287zM687 285L693 284L686 283L680 284zM673 283L679 282L672 281L666 282zM659 281L665 280L659 279L653 280zM647 279L652 278L646 277L641 278zM567 265L572 265L568 264L563 265zM559 264L564 264L560 263L555 263zM551 263L557 262L553 262L548 262zM544 262L549 261L546 261L541 261zM537 260L542 260L539 259L534 260zM531 259L536 259L532 258L528 259zM524 258L529 258L526 257L521 258zM518 257L523 257L520 256L515 257zM513 256L517 256L514 255L510 256zM507 255L512 255L509 255L504 255zM502 254L506 254L504 254L499 254zM496 254L501 253L498 253L494 253zM491 253L496 252L493 252L489 252zM487 252L491 252L489 251L484 252zM482 251L486 251L484 250L480 251zM477 250L482 250L480 250L475 250zM473 250L477 249L475 249L471 249zM469 249L473 249L471 248L467 249zM465 248L469 248L467 248L463 248zM461 248L465 247L463 247L459 247zM457 247L461 247L459 246L455 247zM454 246L458 246L456 246L452 246zM450 246L454 246L452 245L448 246zM447 245L451 245L449 245L445 245zM443 245L447 245L446 244L442 244zM440 244L444 244L442 244L438 244zM437 244L441 243L439 243L435 243zM700 286L706 285L699 284L693 284zM686 283L691 283L684 281L679 282zM672 281L677 280L671 279L665 280zM659 279L664 278L658 277L652 278zM646 277L652 276L646 275L640 276zM560 263L565 262L562 262L557 262zM553 262L558 261L554 261L549 261zM546 261L551 260L547 260L542 260zM539 259L544 259L541 259L536 259zM532 258L537 258L534 258L529 258zM526 257L531 257L528 257L523 257zM520 256L525 256L522 256L517 256zM514 255L519 255L516 255L512 255zM509 255L513 254L511 254L506 254zM504 254L508 253L505 253L501 253zM498 253L503 253L500 252L496 252zM493 252L498 252L495 251L491 252zM489 251L493 251L491 251L486 251zM484 250L488 250L486 250L482 250zM480 250L484 250L482 249L477 249zM475 249L480 249L477 249L473 249zM471 248L475 248L473 248L469 248zM467 248L471 248L469 247L465 247zM463 247L467 247L465 247L461 247zM459 246L464 246L462 246L458 246zM456 246L460 246L458 245L454 246zM452 245L456 245L455 245L451 245zM449 245L453 245L451 244L447 245zM446 244L449 244L448 244L444 244zM442 244L446 244L445 243L441 243zM439 243L443 243L441 243L438 243zM714 286L720 285L712 284L706 285zM699 284L704 283L697 282L691 283zM684 281L690 281L683 280L677 280zM671 279L676 279L670 278L664 278zM658 277L663 277L657 276L652 276zM554 261L559 260L556 260L551 260zM547 260L552 259L549 259L544 259zM541 259L545 258L542 258L537 258zM534 258L539 257L536 257L531 257zM528 257L533 256L530 256L525 256zM522 256L527 255L524 255L519 255zM516 255L521 254L518 254L513 254zM511 254L515 254L513 253L508 253zM505 253L510 253L507 252L503 253zM500 252L505 252L502 251L498 252zM495 251L500 251L497 251L493 251zM491 251L495 250L493 250L488 250zM486 250L490 250L488 249L484 250zM482 249L486 249L484 249L480 249zM477 249L482 248L480 248L475 248zM473 248L477 248L475 247L471 248zM469 247L473 247L471 247L467 247zM465 247L469 246L468 246L464 246zM462 246L466 246L464 246L460 246zM458 245L462 245L460 245L456 245zM455 245L458 245L457 244L453 245zM451 244L455 244L453 244L449 244zM448 244L452 244L450 243L446 244zM445 243L448 243L447 243L443 243zM712 284L717 283L710 282L704 283zM697 282L702 281L695 280L690 281zM683 280L688 279L682 278L676 279zM670 278L675 277L669 276L663 277zM657 276L663 275L657 274L651 275zM549 259L553 258L550 258L545 258zM542 258L547 257L544 257L539 257zM536 257L540 256L537 256L533 256zM530 256L534 255L531 255L527 255zM524 255L528 255L525 254L521 254zM518 254L523 254L520 253L515 254zM513 253L517 253L514 252L510 253zM507 252L512 252L509 252L505 252zM502 251L507 251L504 251L500 251zM497 251L502 250L499 250L495 250zM493 250L497 250L495 249L490 250zM488 249L492 249L490 249L486 249zM484 249L488 248L486 248L482 248zM480 248L484 248L482 247L477 248zM475 247L479 247L477 247L473 247zM471 247L475 246L473 246L469 246zM468 246L472 246L470 246L466 246zM464 246L468 245L466 245L462 245zM460 245L464 245L462 244L458 245zM457 244L461 244L459 244L455 244zM453 244L457 244L455 243L452 244zM450 243L454 243L452 243L448 243zM447 243L450 243L449 242L445 243zM725 284L730 284L723 283L717 283zM710 282L715 281L708 280L702 281zM695 280L701 279L694 278L688 279zM682 278L687 277L680 276L675 277zM669 276L674 275L668 274L663 275zM544 257L548 257L545 256L540 256zM537 256L542 256L539 255L534 255zM531 255L536 255L533 254L528 255zM525 254L530 254L527 253L523 254zM520 253L524 253L521 253L517 253zM514 252L519 252L516 252L512 252zM509 252L514 251L511 251L507 251zM504 251L508 251L506 250L502 250zM499 250L504 250L501 250L497 250zM495 249L499 249L497 249L492 249zM490 249L494 248L492 248L488 248zM486 248L490 248L488 248L484 248zM482 247L486 247L484 247L479 247zM477 247L481 247L479 246L475 246zM473 246L477 246L475 246L472 246zM470 246L474 245L472 245L468 245zM466 245L470 245L468 245L464 245zM462 244L466 244L464 244L461 244zM459 244L463 244L461 244L457 244zM455 243L459 243L457 243L454 243zM452 243L456 243L454 243L450 243zM723 283L728 282L720 281L715 281zM708 280L713 280L706 279L701 279zM694 278L699 278L692 277L687 277zM680 276L686 276L679 275L674 275zM668 274L673 274L667 273L662 273zM539 255L543 255L540 254L536 255zM533 254L537 254L534 253L530 254zM527 253L531 253L529 253L524 253zM521 253L526 252L523 252L519 252zM516 252L520 251L518 251L514 251zM511 251L515 251L513 250L508 251zM506 250L510 250L508 250L504 250zM501 250L505 249L503 249L499 249zM497 249L501 249L498 248L494 248zM492 248L496 248L494 248L490 248zM488 248L492 247L490 247L486 247zM484 247L487 247L485 246L481 247zM479 246L483 246L481 246L477 246zM475 246L479 245L477 245L474 245zM472 245L476 245L474 245L470 245zM468 245L472 244L470 244L466 244zM464 244L468 244L466 244L463 244zM461 244L465 243L463 243L459 243zM457 243L461 243L460 243L456 243zM454 243L458 242L456 242L453 242zM720 281L725 280L718 279L713 280zM706 279L711 278L704 277L699 278zM692 277L697 276L691 275L686 276zM679 275L684 274L678 273L673 274zM667 273L672 272L666 271L661 272zM534 253L539 253L536 253L531 253zM529 253L533 252L530 252L526 252zM523 252L527 252L525 251L520 251zM518 251L522 251L519 250L515 251zM513 250L517 250L514 250L510 250zM508 250L512 249L509 249L505 249zM503 249L507 249L505 248L501 249zM498 248L502 248L500 248L496 248zM494 248L498 247L496 247L492 247zM490 247L494 247L491 246L487 247zM485 246L489 246L487 246L483 246zM481 246L485 246L483 245L479 245zM477 245L481 245L479 245L476 245zM474 245L477 244L476 244L472 244zM470 244L474 244L472 244L468 244zM466 244L470 243L468 243L465 243zM463 243L467 243L465 243L461 243zM460 243L463 242L462 242L458 242zM733 281L738 280L731 279L725 280zM718 279L723 278L716 277L711 278zM704 277L709 276L702 275L697 276zM691 275L696 274L689 273L684 274zM678 273L683 273L677 272L672 272zM530 252L534 252L532 251L527 252zM525 251L529 251L526 251L522 251zM519 250L524 250L521 250L517 250zM514 250L518 249L516 249L512 249zM509 249L514 249L511 248L507 249zM505 248L509 248L506 248L502 248zM500 248L504 247L502 247L498 247zM496 247L500 247L497 247L494 247zM491 246L495 246L493 246L489 246zM487 246L491 246L489 245L485 246zM483 245L487 245L485 245L481 245zM479 245L483 245L481 244L477 244zM476 244L479 244L477 244L474 244zM472 244L476 243L474 243L470 243zM468 243L472 243L470 243L467 243zM465 243L469 242L467 242L463 242zM462 242L465 242L463 242L460 242zM731 279L736 279L728 278L723 278zM716 277L721 277L714 276L709 276zM702 275L707 275L701 274L696 274zM689 273L694 273L688 272L683 273zM677 272L682 271L676 270L671 271zM526 251L530 250L528 250L524 250zM521 250L525 250L523 249L518 249zM516 249L520 249L518 249L514 249zM511 248L515 248L513 248L509 248zM506 248L510 248L508 247L504 247zM502 247L506 247L504 247L500 247zM497 247L501 246L499 246L495 246zM493 246L497 246L495 245L491 246zM489 245L493 245L491 245L487 245zM485 245L489 245L487 244L483 245zM481 244L485 244L483 244L479 244zM477 244L481 244L479 243L476 243zM474 243L477 243L476 243L472 243zM470 243L474 243L472 242L469 242zM467 242L470 242L469 242L465 242zM728 278L733 277L726 276L721 277zM714 276L719 275L712 274L707 275zM701 274L706 273L699 272L694 273zM688 272L693 271L687 271L682 271zM676 270L681 270L675 269L670 270zM523 249L527 249L524 249L520 249zM518 249L522 248L519 248L515 248zM513 248L517 248L514 247L510 248zM508 247L512 247L510 247L506 247zM504 247L507 246L505 246L501 246zM499 246L503 246L501 246L497 246zM495 245L499 245L497 245L493 245zM491 245L495 245L493 244L489 245zM487 244L491 244L489 244L485 244zM483 244L487 244L485 243L481 244zM479 243L483 243L481 243L477 243zM476 243L479 243L477 242L474 243zM472 242L476 242L474 242L470 242zM469 242L472 242L471 241L467 242zM740 278L745 277L738 276L733 277zM726 276L731 275L724 274L719 275zM712 274L717 273L710 273L706 273zM699 272L704 272L698 271L693 271zM687 271L692 270L686 269L681 270zM514 247L518 247L516 247L512 247zM510 247L514 247L511 246L507 246zM505 246L509 246L507 246L503 246zM501 246L505 245L503 245L499 245zM497 245L500 245L498 245L495 245zM493 244L496 244L494 244L491 244zM489 244L492 244L490 243L487 244zM485 243L488 243L487 243L483 243zM481 243L485 243L483 242L479 243zM477 242L481 242L479 242L476 242zM474 242L477 242L476 242L472 242zM738 276L742 276L735 275L731 275zM724 274L728 274L722 273L717 273zM710 273L715 272L709 271L704 272zM698 271L702 270L696 270L692 270zM686 269L690 269L685 268L680 269zM511 246L515 246L513 246L509 246zM507 246L511 245L508 245L505 245zM503 245L506 245L504 245L500 245zM498 245L502 244L500 244L496 244zM494 244L498 244L496 244L492 244zM490 243L494 243L492 243L488 243zM487 243L490 243L488 243L485 243zM483 242L486 242L485 242L481 242zM479 242L483 242L481 242L477 242zM476 242L479 241L477 241L474 241zM735 275L740 274L733 273L728 274zM722 273L726 272L720 271L715 272zM709 271L713 271L707 270L702 270zM696 270L701 269L695 268L690 269zM685 268L689 268L683 267L679 267zM504 245L508 244L506 244L502 244zM500 244L504 244L502 244L498 244zM496 244L500 243L498 243L494 243zM492 243L496 243L494 243L490 243zM488 243L492 242L490 242L486 242zM485 242L488 242L486 242L483 242zM481 242L484 241L483 241L479 241zM747 275L752 274L744 273L740 274zM733 273L738 273L731 272L726 272zM720 271L724 271L718 270L713 271zM707 270L711 269L705 269L701 269zM695 268L699 268L694 267L689 268zM502 244L505 243L503 243L500 243zM498 243L501 243L499 243L496 243zM494 243L497 242L495 242L492 242zM490 242L493 242L491 242L488 242zM486 242L490 242L488 241L484 241zM483 241L486 241L484 241L481 241zM744 273L749 273L742 272L738 273zM731 272L735 271L729 270L724 271zM718 270L722 270L716 269L711 269zM705 269L710 268L704 267L699 268zM694 267L698 267L692 266L688 266zM495 242L499 242L497 242L493 242zM491 242L495 242L493 241L490 242zM488 241L491 241L489 241L486 241zM742 272L746 271L740 271L735 271zM729 270L733 270L727 269L722 270zM716 269L720 268L714 268L710 268zM704 267L708 267L702 266L698 267zM692 266L697 265L691 265L687 265zM489 241L493 241L491 241L488 241zM753 272L758 272L751 271L746 271zM740 271L744 270L737 269L733 270zM727 269L731 268L725 268L720 268zM714 268L718 267L712 266L708 267zM702 266L707 266L701 265L697 265zM751 271L755 270L748 270L744 270zM737 269L741 269L735 268L731 268zM725 268L729 267L723 267L718 267zM712 266L717 266L711 265L707 266zM701 265L705 264L700 264L695 264zM762 271L766 271L759 270L755 270zM748 270L752 269L746 268L741 269zM735 268L739 267L733 267L729 267zM723 267L727 266L721 265L717 266zM711 265L715 265L709 264L705 264zM700 264L704 263L698 263L694 263zM759 270L763 269L756 268L752 269zM746 268L750 268L743 267L739 267zM733 267L737 266L731 266L727 266zM721 265L725 265L719 264L715 265zM709 264L713 264L708 263L704 263zM698 263L702 262L697 262L693 262zM756 268L760 268L754 267L750 268zM743 267L747 267L741 266L737 266zM731 266L735 265L729 264L725 265zM719 264L723 264L717 263L713 264zM708 263L712 263L706 262L702 262zM767 269L771 268L764 267L760 268zM754 267L758 267L751 266L747 267zM741 266L745 265L739 265L735 265zM729 264L733 264L727 263L723 264zM717 263L721 263L716 262L712 263zM706 262L710 262L705 261L701 261zM764 267L768 267L762 266L758 267zM751 266L755 266L749 265L745 265zM739 265L743 264L737 264L733 264zM727 263L731 263L725 262L721 263zM716 262L720 262L714 261L710 262zM705 261L709 261L704 260L700 260zM762 266L765 266L759 265L755 266zM749 265L753 264L747 264L743 264zM737 264L741 263L735 263L731 263zM725 262L729 262L724 261L720 262zM714 261L718 261L713 260L709 261zM772 267L776 266L769 265L765 266zM759 265L763 265L757 264L753 264zM747 264L750 263L744 263L741 263zM735 263L739 262L733 262L729 262zM724 261L727 261L722 260L718 261zM713 260L716 260L711 259L707 260zM769 265L773 265L767 264L763 265zM757 264L760 264L754 263L750 263zM744 263L748 262L742 262L739 262zM733 262L737 261L731 261L727 261zM722 260L726 260L720 259L716 260zM711 259L715 259L710 258L706 259zM780 266L783 265L777 264L773 265zM767 264L770 264L764 263L760 264zM754 263L758 263L752 262L748 262zM742 262L746 261L740 261L737 261zM731 261L735 260L729 260L726 260zM720 259L724 259L719 259L715 259zM710 258L714 258L708 258L705 258zM777 264L780 264L774 263L770 264zM764 263L768 263L761 262L758 263zM752 262L756 262L750 261L746 261zM740 261L744 260L738 260L735 260zM729 260L733 259L728 259L724 259zM719 259L722 258L717 258L714 258zM774 263L777 263L771 262L768 263zM761 262L765 262L759 261L756 262zM750 261L753 261L748 260L744 260zM738 260L742 259L736 259L733 259zM728 259L731 258L726 258L722 258zM717 258L721 257L716 257L712 257zM784 264L787 263L781 263L777 263zM771 262L775 262L769 261L765 262zM759 261L763 261L757 260L753 261zM748 260L751 260L745 259L742 259zM736 259L740 259L735 258L731 258zM726 258L729 257L724 257L721 257zM716 257L719 257L714 256L711 256zM781 263L784 262L778 261L775 262zM769 261L772 261L766 260L763 261zM757 260L760 260L755 259L751 260zM745 259L749 259L743 258L740 259zM735 258L738 258L733 257L729 257zM724 257L728 257L723 256L719 257zM778 261L782 261L775 261L772 261zM766 260L770 260L764 259L760 260zM755 259L758 259L752 258L749 259zM743 258L747 258L742 257L738 258zM733 257L736 257L731 256L728 257zM723 256L726 256L721 255L718 256zM788 262L791 261L785 261L782 261zM775 261L779 260L773 260L770 260zM764 259L767 259L761 259L758 259zM752 258L756 258L750 257L747 258zM742 257L745 257L740 256L736 257zM731 256L735 256L729 256L726 256zM721 255L725 255L720 255L716 255zM785 261L788 260L782 260L779 260zM773 260L776 259L770 259L767 259zM761 259L765 258L759 258L756 258zM750 257L754 257L748 257L745 257zM740 256L743 256L738 256L735 256zM729 256L733 255L728 255L725 255zM794 261L798 261L792 260L788 260zM782 260L785 259L779 259L776 259zM770 259L774 258L768 258L765 258zM759 258L762 257L757 257L754 257zM748 257L752 256L746 256L743 256zM738 256L741 255L736 255L733 255zM728 255L731 254L726 254L723 254zM792 260L795 260L789 259L785 259zM779 259L783 258L777 258L774 258zM768 258L771 257L766 257L762 257zM757 257L760 256L755 256L752 256zM746 256L750 256L744 255L741 255zM736 255L739 255L734 254L731 254zM726 254L730 254L725 253L722 254zM789 259L792 259L786 258L783 258zM777 258L780 258L774 257L771 257zM766 257L769 257L763 256L760 256zM755 256L758 256L753 255L750 256zM744 255L748 255L743 254L739 255zM734 254L738 254L733 253L730 254zM725 253L728 253L723 253L720 253zM798 259L801 259L795 258L792 259zM786 258L789 258L783 257L780 258zM774 257L778 257L772 256L769 257zM763 256L767 256L761 255L758 256zM753 255L756 255L751 254L748 255zM743 254L746 254L741 254L738 254zM733 253L736 253L731 253L728 253zM795 258L798 258L792 257L789 258zM783 257L786 257L781 256L778 257zM772 256L775 256L770 255L767 256zM761 255L764 255L759 255L756 255zM751 254L754 254L749 254L746 254zM741 254L744 253L739 253L736 253zM731 253L734 252L730 252L727 252zM804 258L807 258L801 258L798 258zM792 257L795 257L789 257L786 257zM781 256L784 256L778 256L775 256zM770 255L773 255L767 255L764 255zM759 255L762 254L757 254L754 254zM749 254L752 253L747 253L744 253zM739 253L742 253L737 252L734 252zM730 252L733 252L728 251L725 252zM801 258L804 257L798 257L795 257zM789 257L793 256L787 256L784 256zM778 256L781 255L776 255L773 255zM767 255L771 254L765 254L762 254zM757 254L760 254L755 253L752 253zM747 253L750 253L745 252L742 253zM737 252L741 252L736 251L733 252zM798 257L801 256L796 256L793 256zM787 256L790 255L784 255L781 255zM776 255L779 255L774 254L771 254zM765 254L768 254L763 253L760 254zM755 253L758 253L753 252L750 253zM745 252L748 252L744 252L741 252zM736 251L739 251L734 251L731 251zM807 257L810 257L804 256L801 256zM796 256L798 256L793 255L790 255zM784 255L787 255L782 254L779 255zM774 254L777 254L771 253L768 254zM763 253L766 253L761 253L758 253zM753 252L756 252L751 252L748 252zM744 252L747 251L742 251L739 251zM734 251L737 251L733 250L730 250zM804 256L807 256L801 255L798 256zM793 255L796 255L790 254L787 255zM782 254L785 254L779 254L777 254zM771 253L774 253L769 253L766 253zM761 253L764 252L759 252L756 252zM751 252L754 251L750 251L747 251zM742 251L745 251L740 250L737 251zM813 256L816 256L810 255L807 256zM801 255L804 255L799 255L796 255zM790 254L793 254L788 254L785 254zM779 254L782 253L777 253L774 253zM769 253L772 252L767 252L764 252zM759 252L762 252L757 251L754 251zM750 251L752 251L748 250L745 251zM740 250L743 250L739 250L736 250zM810 255L813 255L807 255L804 255zM799 255L801 254L796 254L793 254zM788 254L791 253L785 253L782 253zM777 253L780 253L775 252L772 252zM767 252L770 252L765 251L762 252zM757 251L760 251L755 251L752 251zM748 250L751 250L746 250L743 250zM739 250L742 249L737 249L734 249zM807 255L810 254L804 254L801 254zM796 254L799 253L793 253L791 253zM785 253L788 253L783 252L780 253zM775 252L778 252L773 251L770 252zM765 251L768 251L763 251L760 251zM755 251L758 250L754 250L751 250zM746 250L749 250L744 249L742 249zM737 249L740 249L736 249L733 249zM816 255L818 255L813 254L810 254zM804 254L807 254L802 253L799 253zM793 253L796 253L791 252L788 253zM783 252L786 252L781 252L778 252zM773 251L776 251L771 251L768 251zM763 251L766 250L761 250L758 250zM754 250L756 250L752 249L749 250zM744 249L747 249L743 249L740 249zM813 254L815 254L810 253L807 254zM802 253L804 253L799 253L796 253zM791 252L794 252L788 252L786 252zM781 252L783 251L778 251L776 251zM771 251L773 251L769 250L766 250zM761 250L764 250L759 249L756 250zM752 249L755 249L750 249L747 249zM743 249L746 248L741 248L738 248zM821 254L824 254L818 253L815 254zM810 253L813 253L807 253L804 253zM799 253L802 252L796 252L794 252zM788 252L791 251L786 251L783 251zM778 251L781 251L776 250L773 251zM769 250L771 250L767 250L764 250zM759 249L762 249L757 249L755 249zM750 249L753 249L748 248L746 248zM741 248L744 248L740 248L737 248zM818 253L821 253L815 253L813 253zM807 253L810 252L804 252L802 252zM796 252L799 252L794 251L791 251zM786 251L789 251L784 250L781 251zM776 250L779 250L774 250L771 250zM767 250L769 249L765 249L762 249zM757 249L760 249L756 248L753 249zM748 248L751 248L747 248L744 248zM815 253L818 252L812 252L810 252zM804 252L807 252L802 251L799 252zM794 251L797 251L791 251L789 251zM784 250L786 250L782 250L779 250zM774 250L777 249L772 249L769 249zM765 249L767 249L763 248L760 249zM756 248L758 248L754 248L751 248zM747 248L749 247L745 247L743 247zM823 253L826 253L820 252L818 252zM812 252L815 252L810 251L807 252zM802 251L804 251L799 251L797 251zM791 251L794 250L789 250L786 250zM782 250L784 250L779 249L777 249zM772 249L775 249L770 248L767 249zM763 248L765 248L761 248L758 248zM754 248L757 248L752 247L749 247zM745 247L748 247L744 247L741 247zM820 252L823 252L818 252L815 252zM810 251L812 251L807 251L804 251zM799 251L802 250L797 250L794 250zM789 250L792 250L787 249L784 250zM779 249L782 249L777 249L775 249zM770 248L773 248L768 248L765 248zM761 248L764 248L759 247L757 248zM752 247L755 247L751 247L748 247zM818 252L820 251L815 251L812 251zM807 251L810 251L804 250L802 250zM797 250L799 250L794 249L792 250zM787 249L789 249L785 249L782 249zM777 249L780 248L775 248L773 248zM768 248L771 248L766 247L764 248zM759 247L762 247L757 247L755 247zM751 247L753 246L749 246L746 246zM815 251L817 251L812 250L810 251zM804 250L807 250L802 250L799 250zM794 249L797 249L792 249L789 249zM785 249L787 248L783 248L780 248zM775 248L778 248L773 247L771 248zM766 247L769 247L764 247L762 247zM757 247L760 247L756 246L753 246zM749 246L752 246L747 246L745 246zM823 251L825 251L820 250L817 251zM812 250L815 250L810 250L807 250zM802 250L804 249L799 249L797 249zM792 249L795 249L790 248L787 248zM783 248L785 248L780 248L778 248zM773 247L776 247L771 247L769 247zM764 247L767 247L763 246L760 247zM756 246L758 246L754 246L752 246zM820 250L822 250L817 250L815 250zM810 250L812 249L807 249L804 249zM799 249L802 249L797 248L795 249zM790 248L792 248L788 248L785 248zM780 248L783 247L778 247L776 247zM771 247L774 247L770 246L767 247zM763 246L765 246L761 246L758 246zM754 246L757 246L753 245L750 245zM817 250L820 249L814 249L812 249zM807 249L809 249L804 248L802 249zM797 248L800 248L795 248L792 248zM788 248L790 247L785 247L783 247zM778 247L781 247L776 247L774 247zM770 246L772 246L768 246L765 246zM761 246L763 246L759 245L757 246zM753 245L755 245L751 245L748 245zM814 249L817 249L812 249L809 249zM804 248L807 248L802 248L800 248zM795 248L797 248L793 247L790 247zM785 247L788 247L783 247L781 247zM776 247L779 246L775 246L772 246zM768 246L770 246L766 245L763 246zM759 245L762 245L758 245L755 245zM822 249L824 249L819 249L817 249zM812 249L814 248L809 248L807 248zM802 248L805 248L800 247L797 248zM793 247L795 247L790 247L788 247zM783 247L786 246L781 246L779 246zM775 246L777 246L773 246L770 246zM766 245L768 245L764 245L762 245zM758 245L760 245L756 244L753 245zM819 249L822 248L817 248L814 248zM809 248L812 248L807 247L805 248zM800 247L802 247L797 247L795 247zM790 247L793 246L788 246L786 246zM781 246L784 246L779 246L777 246zM773 246L775 245L771 245L768 245zM764 245L767 245L762 244L760 245zM756 244L758 244L754 244L752 244zM817 248L819 248L814 248L812 248zM807 247L809 247L805 247L802 247zM797 247L800 247L795 246L793 246zM788 246L791 246L786 246L784 246zM779 246L782 245L777 245L775 245zM771 245L773 245L769 245L767 245zM762 244L765 244L761 244L758 244zM814 248L816 247L812 247L809 247zM805 247L807 247L802 246L800 247zM795 246L798 246L793 246L791 246zM786 246L789 245L784 245L782 245zM777 245L780 245L776 245L773 245zM769 245L771 244L767 244L765 244zM761 244L763 244L759 244L757 244zM821 248L824 247L819 247L816 247zM812 247L814 247L809 246L807 247zM802 246L805 246L800 246L798 246zM793 246L795 246L791 245L789 245zM784 245L787 245L782 245L780 245zM776 245L778 244L774 244L771 244zM767 244L770 244L766 244L763 244zM759 244L762 243L758 243L755 243zM819 247L821 247L816 247L814 247zM809 246L812 246L807 246L805 246zM800 246L802 246L798 245L795 246zM791 245L793 245L789 245L787 245zM782 245L785 245L780 244L778 244zM774 244L776 244L772 244L770 244zM766 244L768 243L764 243L762 243zM816 247L819 246L814 246L812 246zM807 246L809 246L805 245L802 246zM798 245L800 245L796 245L793 245zM789 245L791 245L787 244L785 245zM780 244L783 244L778 244L776 244zM772 244L774 244L770 243L768 243zM764 243L766 243L762 243L760 243zM823 247L826 246L821 246L819 246zM814 246L816 246L811 246L809 246zM805 245L807 245L802 245L800 245zM796 245L798 245L794 244L791 245zM787 244L789 244L785 244L783 244zM778 244L781 244L777 243L774 244zM770 243L773 243L769 243L766 243zM762 243L765 243L761 242L758 243zM821 246L823 246L818 246L816 246zM811 246L814 245L809 245L807 245zM802 245L805 245L800 245L798 245zM794 244L796 244L791 244L789 244zM785 244L787 244L783 243L781 244zM777 243L779 243L775 243L773 243zM769 243L771 243L767 242L765 243zM818 246L821 245L816 245L814 245zM809 245L811 245L807 245L805 245zM800 245L802 244L798 244L796 244zM791 244L794 244L789 244L787 244zM783 243L785 243L781 243L779 243zM775 243L777 243L773 242L771 243zM767 242L769 242L765 242L763 242zM816 245L818 245L814 245L811 245zM807 245L809 244L805 244L802 244zM798 244L800 244L796 244L794 244zM789 244L792 243L788 243L785 243zM781 243L783 243L779 243L777 243zM773 242L775 242L771 242L769 242zM765 242L768 242L764 242L761 242zM823 245L825 245L820 245L818 245zM814 245L816 244L811 244L809 244zM805 244L807 244L802 244L800 244zM796 244L798 243L794 243L792 243zM788 243L790 243L786 243L783 243zM779 243L782 242L778 242L775 242zM771 242L774 242L770 242L768 242z"/><path fill="#dadada" d="M244.0 270.1L252.3 269.6L251.9 268.8L243.8 269.3zM253.3 272.0L261.7 271.4L261.3 270.6L253.0 271.2zM263.2 274.0L271.8 273.4L271.2 272.5L262.7 273.1zM273.7 276.1L282.5 275.5L281.8 274.6L273.1 275.2zM272 274L281 274L280 273L272 273zM285.0 278.4L294.0 277.7L293.0 276.7L284.1 277.4zM283 276L292 276L291 275L283 275zM297.0 280.8L306.2 280.1L305.0 279.1L296.0 279.8zM295.0 278.7L303.9 278.0L302.8 277.1L294.0 277.7zM309.9 283.4L319.3 282.7L317.9 281.5L308.6 282.3zM307 281L317 280L315 279L306 280zM323.8 286.2L333.4 285.4L331.7 284.2L322.3 285.0zM321 284L330 283L329 282L319 283zM338.8 289.2L348.6 288.4L346.6 287.1L336.9 287.9zM359.6 295.5L369.9 294.5L367.4 293.0L357.3 294.0zM355.0 292.5L365.0 291.5L362.6 290.1L352.8 291.1zM378.1 299.3L388.6 298.2L385.6 296.6L375.3 297.7zM412.9 311.6L424.4 310.2L420.3 308.1L409.0 309.5zM405.2 307.4L416.4 306.1L412.6 304.1L401.6 305.4zM458.6 327.7L471.2 325.8L465.3 323.0L453.0 324.9zM447.7 322.1L459.8 320.4L454.5 317.8L442.6 319.5zM505.0 342.0L518.2 339.6L510.5 336.1L497.5 338.4zM564.1 360.2L577.9 357.1L567.3 352.7L553.8 355.6zM589 362L602 359L591 354L578 357zM640.6 365.2L653.2 361.9L640.0 357.2L627.5 360.3zM691.2 360.4L702.4 357.3L688.2 352.8L677.0 355.7zM713.2 354.3L723.6 351.5L709.3 347.3L698.9 350.0zM733.6 348.7L743.2 346.1L728.9 342.2L719.3 344.7zM752.5 343.5L761.4 341.1L747.1 337.5L738.1 339.8zM770.1 338.7L778.4 336.4L764.1 333.1L755.7 335.3zM822.0 318.0L828.3 316.4L815.0 314.0L808.7 315.6z"/><path fill="#d8d8d8" d="M244 269L252 268L251 267L243 268zM253 270L261 270L260 269L252 270zM252 269L260 268L260 268L252 268zM262 272L271 272L270 271L262 271zM261 271L269 270L269 269L261 270zM271 273L280 272L279 271L271 272zM282 275L290 274L289 273L281 274zM293 277L302 276L301 275L292 276zM305 279L314 278L313 277L304 278zM318 282L327 281L325 280L317 280zM335 287L345 286L343 285L333 285zM332 284L341 283L339 282L330 283zM351 290L360 289L358 287L349 288zM347 287L356 286L354 285L345 286zM373 296L383 295L380 293L370 295zM367 293L377 292L375 291L365 292zM398 304L409 302L405 301L395 302zM392 300L402 299L399 297L389 298zM438 317L449 315L445 313L433 315zM429 312L440 311L436 309L424 310zM490 335L503 333L496 330L484 332zM477 329L490 327L483 324L471 326zM544 351L557 348L548 345L535 347zM615 363L628 360L615 356L602 359zM795 325L802 323L789 321L781 322zM809 321L816 320L802 317L795 319z"/><path fill="#b2b2b2" d="M243 268L251 267L251 267L243 267zM252 270L260 269L260 268L252 269zM252 268L260 268L259 267L251 267zM262 271L270 271L269 270L261 271zM261 270L269 269L268 269L260 269zM272 273L280 273L280 272L271 273zM271 272L279 271L278 270L270 271zM281 274L289 273L289 272L280 273zM292 276L301 275L300 274L291 275zM304 278L313 277L311 276L303 277zM319 283L329 282L327 281L318 282zM317 280L325 280L324 279L315 279zM333 285L343 285L341 283L332 284zM330 283L339 282L338 281L329 282zM349 288L358 287L356 286L347 287zM345 286L354 285L352 284L343 285zM370 295L380 293L377 292L367 293zM365 292L375 291L372 289L363 290zM395 302L405 301L402 299L392 300zM389 298L399 297L396 296L386 297zM433 315L445 313L440 311L429 312zM424 310L436 309L431 307L420 308zM484 332L496 330L490 327L477 329zM471 326L483 324L477 321L465 323zM535 347L548 345L539 341L526 343zM578 357L591 354L580 350L567 353zM653 362L665 359L652 354L640 357zM788 327L795 325L781 322L774 324zM802 323L809 321L795 319L789 321z"/><path fill="#d6d6d6" d="M243 267L251 267L251 266L243 266zM243 266L250 265L250 265L243 265zM251 267L259 267L259 266L251 267zM260 269L268 269L268 268L260 268zM260 268L267 267L267 266L259 267zM270 271L278 270L278 270L269 270zM269 269L277 269L276 268L268 269zM280 273L289 272L288 271L280 272zM279 271L287 271L286 270L278 270zM291 275L300 274L299 273L290 274zM289 273L298 273L297 272L289 272zM303 277L311 276L310 275L302 276zM301 275L309 275L308 274L300 274zM315 279L324 279L323 278L314 278zM313 277L321 277L320 276L311 276zM329 282L338 281L336 280L327 281zM325 280L334 279L333 278L324 279zM343 285L352 284L350 283L341 283zM363 290L372 289L370 288L360 289zM358 287L368 287L365 285L356 286zM386 297L396 296L393 294L383 295zM380 293L390 293L387 291L377 292zM420 308L431 307L427 305L416 306zM413 304L423 303L419 301L409 302zM465 323L477 321L472 319L460 320zM455 318L466 316L461 314L449 315zM526 343L539 341L531 337L518 340zM567 353L580 350L570 346L557 348zM665 359L677 356L664 351L652 354zM747 338L756 335L742 332L733 334zM764 333L772 331L759 328L751 330zM780 329L788 327L774 324L766 326zM815 314L821 312L809 310L802 312zM827 311L833 310L820 307L815 309z"/><path fill="#b0b0b0" d="M243 266L251 266L250 265L243 266zM243 265L250 265L250 264L242 264zM251 267L259 266L258 266L251 266zM260 268L268 268L267 267L260 268zM259 267L267 266L266 266L259 266zM269 270L278 270L277 269L269 269zM268 269L276 268L276 267L268 268zM280 272L288 271L287 271L279 271zM278 270L286 270L285 269L278 270zM290 274L299 273L298 273L289 273zM289 272L297 272L296 271L288 271zM302 276L310 275L309 275L301 275zM300 274L308 274L307 273L299 273zM314 278L323 278L321 277L313 277zM311 276L320 276L319 275L310 275zM327 281L336 280L334 279L325 280zM324 279L333 278L331 277L323 278zM341 283L350 283L348 282L339 282zM360 289L370 288L368 287L358 287zM356 286L365 285L363 284L354 285zM383 295L393 294L390 293L380 293zM377 292L387 291L384 290L375 291zM416 306L427 305L423 303L413 304zM409 302L419 301L416 299L405 301zM402 299L412 298L409 296L399 297zM460 320L472 319L466 316L455 318zM449 315L461 314L456 312L445 313zM440 311L451 309L446 307L436 309zM518 340L531 337L523 334L510 336zM602 359L615 356L604 351L591 354zM628 360L640 357L628 353L615 356zM677 356L688 353L675 349L664 351zM699 350L709 347L696 343L685 346zM738 340L747 338L733 334L725 336zM756 335L764 333L751 330L742 332zM772 331L780 329L766 326L759 328zM809 316L815 314L802 312L796 313zM821 312L827 311L815 309L809 310z"/><path fill="#d4d4d4" d="M242 264L250 264L250 263L242 264zM242 263L249 263L249 262L242 263zM251 266L258 266L258 265L250 265zM250 265L258 264L257 264L250 264zM259 266L266 266L266 265L258 266zM268 268L276 267L275 267L267 267zM278 270L285 269L285 268L277 269zM276 268L284 268L283 267L276 267zM288 271L296 271L295 270L287 271zM286 270L294 269L293 269L285 269zM299 273L307 273L306 272L298 273zM297 272L305 271L304 270L296 271zM310 275L319 275L317 274L309 275zM308 274L316 273L315 272L307 273zM323 278L331 277L330 276L321 277zM339 282L348 282L346 280L338 281zM336 280L345 279L343 278L334 279zM354 285L363 284L361 283L352 284zM350 283L359 282L357 281L348 282zM375 291L384 290L382 288L372 289zM370 288L379 287L377 286L368 287zM405 301L416 299L412 298L402 299zM399 297L409 296L406 294L396 296zM393 294L403 293L399 292L390 293zM445 313L456 312L451 309L440 311zM436 309L446 307L442 305L431 307zM427 305L438 304L434 302L423 303zM510 336L523 334L515 331L503 333zM496 330L508 328L502 325L490 327zM591 354L604 351L593 347L580 350zM640 357L652 354L640 350L628 353zM688 353L699 350L685 346L675 349zM709 347L719 345L706 341L696 343zM729 342L738 340L725 336L715 339zM789 321L795 319L783 316L776 318zM802 317L809 316L796 313L789 315z"/><path fill="#aeaeae" d="M242 264L250 263L249 263L242 263zM242 263L249 262L249 262L242 262zM250 265L258 265L258 264L250 265zM250 264L257 264L257 263L250 263zM258 266L266 265L265 264L258 265zM258 264L265 264L265 263L257 264zM267 267L275 267L274 266L267 266zM266 266L274 265L273 265L266 265zM277 269L285 268L284 268L276 268zM276 267L283 267L283 266L275 267zM287 271L295 270L294 269L286 270zM285 269L293 269L292 268L285 268zM298 273L306 272L305 271L297 272zM296 271L304 270L303 270L295 270zM309 275L317 274L316 273L308 274zM307 273L315 272L314 271L306 272zM321 277L330 276L328 275L320 276zM319 275L327 274L326 273L317 274zM338 281L346 280L345 279L336 280zM334 279L343 278L341 277L333 278zM331 277L340 276L338 275L330 276zM352 284L361 283L359 282L350 283zM348 282L357 281L355 280L346 280zM372 289L382 288L379 287L370 288zM368 287L377 286L374 285L365 285zM396 296L406 294L403 293L393 294zM390 293L399 292L397 290L387 291zM431 307L442 305L438 304L427 305zM423 303L434 302L430 300L419 301zM416 299L426 298L422 297L412 298zM503 333L515 331L508 328L496 330zM490 327L502 325L495 322L483 324zM477 321L489 320L483 317L472 319zM557 348L570 346L561 342L548 345zM652 354L664 351L651 347L640 350zM719 345L729 342L715 339L706 341zM781 322L789 321L776 318L769 320zM795 319L802 317L789 315L783 316zM815 309L820 307L808 305L803 307zM826 306L832 305L820 303L814 304z"/><path fill="#d2d2d2" d="M242 262L249 262L249 261L241 261zM250 263L257 263L257 262L249 263zM249 262L256 262L256 261L249 262zM258 265L265 264L265 264L258 264zM257 264L265 263L264 263L257 263zM267 266L274 266L274 265L266 266zM266 265L273 265L273 264L265 264zM275 267L283 266L282 265L274 266zM285 268L292 268L292 267L284 268zM295 270L303 270L302 269L294 269zM306 272L314 271L313 271L305 271zM320 276L328 275L327 274L319 275zM317 274L326 273L324 273L316 273zM333 278L341 277L340 276L331 277zM330 276L338 275L336 275L328 275zM346 280L355 280L353 279L345 279zM343 278L351 278L350 277L341 277zM365 285L374 285L372 283L363 284zM361 283L370 282L368 281L359 282zM387 291L397 290L394 289L384 290zM382 288L391 287L388 286L379 287zM419 301L430 300L426 298L416 299zM412 298L422 297L419 295L409 296zM483 324L495 322L489 320L477 321zM472 319L483 317L477 315L466 316zM461 314L472 312L467 310L456 312zM451 309L462 308L457 306L446 307zM548 345L561 342L552 338L539 341zM531 337L543 335L535 332L523 334zM615 356L628 353L616 349L604 351zM664 351L675 349L662 345L651 347zM759 328L766 326L754 323L746 325zM774 324L781 322L769 320L761 321zM809 310L815 309L803 307L796 308zM820 307L826 306L814 304L808 305z"/><path fill="#acacac" d="M241 261L249 261L248 260L241 261zM241 260L248 260L248 259L241 260zM249 263L257 262L256 262L249 262zM249 262L256 261L256 261L249 261zM257 263L264 263L264 262L257 262zM256 262L263 261L263 261L256 261zM265 264L273 264L272 263L265 264zM265 263L272 263L271 262L264 263zM274 266L282 265L281 265L274 265zM273 265L281 264L280 264L273 264zM284 268L292 267L291 266L283 267zM283 266L290 266L289 265L282 265zM294 269L302 269L301 268L293 269zM292 268L300 267L299 267L292 267zM305 271L313 271L312 270L304 270zM303 270L311 269L309 268L302 269zM316 273L324 273L323 272L315 272zM314 271L322 271L320 270L313 271zM328 275L336 275L335 274L327 274zM326 273L334 273L332 272L324 273zM345 279L353 279L351 278L343 278zM341 277L350 277L348 276L340 276zM363 284L372 283L370 282L361 283zM359 282L368 281L366 280L357 281zM355 280L364 279L362 278L353 279zM384 290L394 289L391 287L382 288zM379 287L388 286L386 285L377 286zM374 285L383 284L381 283L372 283zM409 296L419 295L415 293L406 294zM403 293L412 292L409 291L399 292zM397 290L406 289L403 288L394 289zM466 316L477 315L472 312L461 314zM456 312L467 310L462 308L451 309zM446 307L457 306L452 304L442 305zM438 304L448 302L444 301L434 302zM539 341L552 338L543 335L531 337zM523 334L535 332L527 329L515 331zM580 350L593 347L583 343L570 346zM604 351L616 349L605 345L593 347zM628 353L640 350L628 346L616 349zM675 349L685 346L673 342L662 345zM733 334L742 332L729 329L721 331zM751 330L759 328L746 325L738 327zM766 326L774 324L761 321L754 323zM789 315L796 313L784 311L777 312zM802 312L809 310L796 308L790 310z"/><path fill="#d0d0d0" d="M241 261L248 260L248 260L241 260zM241 260L248 259L248 259L241 259zM249 261L256 261L255 260L248 260zM248 260L255 260L255 259L248 259zM257 262L264 262L263 261L256 262zM256 261L263 261L262 260L256 261zM265 264L272 263L272 263L265 263zM264 263L271 262L271 262L264 262zM274 265L281 265L281 264L273 265zM273 264L280 264L279 263L272 263zM283 267L291 266L290 266L283 266zM282 265L289 265L289 264L281 265zM293 269L301 268L300 267L292 268zM292 267L299 267L298 266L291 266zM304 270L312 270L311 269L303 270zM302 269L309 268L308 268L301 268zM315 272L323 272L322 271L314 271zM313 271L320 270L319 269L312 270zM327 274L335 274L334 273L326 273zM324 273L332 272L331 271L323 272zM340 276L348 276L346 275L338 275zM336 275L345 274L343 273L335 274zM357 281L366 280L364 279L355 280zM353 279L362 278L360 277L351 278zM377 286L386 285L383 284L374 285zM372 283L381 283L379 282L370 282zM406 294L415 293L412 292L403 293zM399 292L409 291L406 289L397 290zM394 289L403 288L400 287L391 287zM442 305L452 304L448 302L438 304zM434 302L444 301L440 299L430 300zM426 298L436 297L432 296L422 297zM515 331L527 329L520 326L508 328zM502 325L513 323L506 320L495 322zM570 346L583 343L573 340L561 342zM685 346L696 343L683 340L673 342zM706 341L715 339L702 335L693 337zM725 336L733 334L721 331L712 333zM742 332L751 330L738 327L729 329zM783 316L789 315L777 312L770 314zM796 313L802 312L790 310L784 311zM814 304L820 303L808 301L803 302zM825 302L831 301L819 299L814 300z"/><path fill="#aaaaaa" d="M241 259L248 259L247 258L241 259zM240 258L247 258L247 257L240 258zM248 260L255 260L255 260L248 260zM248 259L255 259L254 258L248 259zM247 258L254 258L254 257L247 258zM256 261L262 260L262 260L255 260zM255 260L262 259L261 259L255 259zM264 262L271 262L270 261L263 261zM263 261L270 260L269 260L262 260zM272 263L279 263L279 262L272 263zM271 262L278 262L278 261L271 262zM281 265L289 264L288 264L281 264zM280 264L287 263L286 263L279 263zM291 266L298 266L297 265L290 266zM289 265L297 265L296 264L289 264zM288 264L295 263L294 263L287 263zM301 268L308 268L307 267L300 267zM299 267L306 266L306 265L298 266zM297 265L305 265L304 264L297 265zM312 270L319 269L318 269L311 269zM309 268L317 268L316 267L308 268zM323 272L331 271L329 270L322 271zM320 270L328 270L327 269L319 269zM338 275L346 275L345 274L336 275zM335 274L343 273L341 272L334 273zM332 272L340 271L338 271L331 271zM351 278L360 277L358 276L350 277zM348 276L356 275L354 274L346 275zM370 282L379 282L376 280L368 281zM366 280L374 279L372 278L364 279zM362 278L370 277L368 276L360 277zM391 287L400 287L397 285L388 286zM386 285L395 284L392 283L383 284zM381 283L389 282L387 281L379 282zM430 300L440 299L436 297L426 298zM422 297L432 296L428 294L419 295zM415 293L425 293L421 291L412 292zM409 291L418 290L415 288L406 289zM508 328L520 326L513 323L502 325zM495 322L506 320L500 318L489 320zM483 317L494 315L488 313L477 315zM472 312L483 311L477 309L467 310zM462 308L472 307L467 305L457 306zM561 342L573 340L564 336L552 338zM696 343L706 341L693 337L683 340zM715 339L725 336L712 333L702 335zM761 321L769 320L756 317L749 319zM776 318L783 316L770 314L763 316zM796 308L803 307L791 305L785 306zM808 305L814 304L803 302L797 304zM820 303L825 302L814 300L808 301z"/><path fill="#cecece" d="M241 259L247 258L247 258L240 258zM240 258L247 257L247 257L240 257zM240 257L247 256L246 256L240 256zM248 259L254 258L254 258L247 258zM247 258L254 257L253 257L247 257zM255 260L262 260L262 259L255 260zM255 259L261 259L261 258L254 258zM263 261L270 261L270 260L263 261zM262 260L269 260L269 259L262 260zM272 263L279 262L278 262L271 262zM271 262L278 261L277 261L270 261zM281 264L288 264L287 263L280 264zM279 263L286 263L286 262L279 262zM278 262L285 261L284 261L278 261zM290 266L297 265L297 265L289 265zM289 264L296 264L295 263L288 264zM287 263L294 263L293 262L286 263zM300 267L307 267L306 266L299 267zM298 266L306 265L305 265L297 265zM297 265L304 264L303 264L296 264zM311 269L318 269L317 268L309 268zM308 268L316 267L315 266L307 267zM306 266L314 266L313 265L306 265zM322 271L329 270L328 270L320 270zM319 269L327 269L326 268L318 269zM334 273L341 272L340 271L332 272zM331 271L338 271L337 270L329 270zM350 277L358 276L356 275L348 276zM346 275L354 274L352 273L345 274zM343 273L351 272L349 272L341 272zM368 281L376 280L374 279L366 280zM364 279L372 278L370 277L362 278zM360 277L368 276L366 275L358 276zM388 286L397 285L395 284L386 285zM383 284L392 283L389 282L381 283zM379 282L387 281L385 280L376 280zM419 295L428 294L425 293L415 293zM412 292L421 291L418 290L409 291zM406 289L415 288L412 287L403 288zM489 320L500 318L494 315L483 317zM477 315L488 313L483 311L472 312zM467 310L477 309L472 307L462 308zM457 306L467 305L463 303L452 304zM448 302L458 301L454 299L444 301zM552 338L564 336L555 333L543 335zM593 347L605 345L595 341L583 343zM616 349L628 346L617 342L605 345zM640 350L651 347L639 343L628 346zM754 323L761 321L749 319L741 321zM769 320L776 318L763 316L756 317zM790 310L796 308L785 306L779 307zM803 307L808 305L797 304L791 305zM819 299L824 298L813 296L808 297zM830 297L835 296L824 294L819 295z"/><path fill="#a8a8a8" d="M240 257L247 257L247 256L240 257zM240 256L246 256L246 255L240 256zM247 257L253 257L253 256L247 257zM247 256L253 256L253 256L246 256zM254 258L261 258L261 258L254 258zM254 257L260 257L260 257L253 257zM262 260L269 259L268 259L262 259zM261 259L268 258L268 258L261 258zM261 258L267 257L267 257L260 257zM270 261L277 261L277 260L270 260zM269 260L276 259L275 259L269 259zM268 259L275 258L274 258L268 258zM279 262L286 262L285 261L278 262zM278 261L284 261L284 260L277 261zM277 260L283 260L283 259L276 259zM286 263L293 262L293 262L286 262zM285 261L292 261L291 260L284 261zM296 264L303 264L302 263L295 263zM294 263L301 262L300 262L293 262zM307 267L315 266L314 266L306 266zM306 265L313 265L312 264L305 265zM304 264L311 264L310 263L303 264zM318 269L326 268L324 267L317 268zM316 267L323 267L322 266L315 266zM314 266L321 265L320 265L313 265zM329 270L337 270L336 269L328 270zM327 269L334 268L333 268L326 268zM324 267L332 267L330 266L323 267zM345 274L352 273L351 272L343 273zM341 272L349 272L348 271L340 271zM338 271L346 270L344 269L337 270zM358 276L366 275L364 275L356 275zM354 274L362 274L360 273L352 273zM351 272L358 272L357 271L349 272zM376 280L385 280L382 279L374 279zM372 278L380 278L378 277L370 277zM368 276L376 276L374 275L366 275zM403 288L412 287L409 286L400 287zM397 285L406 285L403 283L395 284zM392 283L401 282L398 281L389 282zM387 281L395 280L393 279L385 280zM452 304L463 303L458 301L448 302zM444 301L454 299L449 298L440 299zM436 297L445 296L441 294L432 296zM428 294L438 293L434 292L425 293zM421 291L431 290L427 289L418 290zM543 335L555 333L547 330L535 332zM527 329L539 327L531 324L520 326zM513 323L524 321L518 319L506 320zM500 318L511 316L505 314L494 315zM583 343L595 341L585 337L573 340zM605 345L617 342L606 339L595 341zM628 346L639 343L628 340L617 342zM651 347L662 345L650 341L639 343zM673 342L683 340L671 336L661 339zM712 333L721 331L708 328L699 330zM729 329L738 327L725 324L717 326zM746 325L754 323L741 321L733 322zM770 314L777 312L766 310L759 312zM784 311L790 310L779 307L772 309zM803 302L808 301L797 299L792 301zM814 300L819 299L808 297L803 298zM824 298L830 297L819 295L813 296zM829 293L833 292L823 291L818 291z"/><path fill="#cccccc" d="M240 256L246 255L246 255L240 255zM247 257L253 256L253 256L247 256zM246 256L253 256L252 255L246 255zM254 258L261 258L260 257L254 257zM253 257L260 257L260 256L253 256zM262 259L268 259L268 258L261 259zM261 258L268 258L267 257L261 258zM260 257L267 257L266 256L260 257zM270 260L277 260L276 259L269 260zM269 259L275 259L275 258L268 259zM268 258L274 258L274 257L268 258zM277 261L284 260L283 260L277 260zM276 259L283 259L282 259L275 259zM286 262L293 262L292 261L285 261zM284 261L291 260L291 260L284 260zM295 263L302 263L301 262L294 263zM293 262L300 262L299 261L293 262zM305 265L312 264L311 264L304 264zM303 264L310 263L309 263L302 263zM317 268L324 267L323 267L316 267zM315 266L322 266L321 265L314 266zM313 265L320 265L319 264L312 264zM328 270L336 269L334 268L327 269zM326 268L333 268L332 267L324 267zM323 267L330 266L329 265L322 266zM340 271L348 271L346 270L338 271zM337 270L344 269L343 269L336 269zM356 275L364 275L362 274L354 274zM352 273L360 273L358 272L351 272zM349 272L357 271L355 270L348 271zM374 279L382 279L380 278L372 278zM370 277L378 277L376 276L368 276zM366 275L374 275L372 274L364 275zM400 287L409 286L406 285L397 285zM395 284L403 283L401 282L392 283zM389 282L398 281L395 280L387 281zM385 280L393 279L390 278L382 279zM440 299L449 298L445 296L436 297zM432 296L441 294L438 293L428 294zM425 293L434 292L431 290L421 291zM418 290L427 289L424 287L415 288zM412 287L421 286L418 285L409 286zM535 332L547 330L539 327L527 329zM520 326L531 324L524 321L513 323zM506 320L518 319L511 316L500 318zM494 315L505 314L499 312L488 313zM483 311L493 309L488 307L477 309zM573 340L585 337L575 334L564 336zM662 345L673 342L661 339L650 341zM683 340L693 337L681 334L671 336zM702 335L712 333L699 330L690 332zM721 331L729 329L717 326L708 328zM738 327L746 325L733 322L725 324zM763 316L770 314L759 312L752 313zM777 312L784 311L772 309L766 310zM797 304L803 302L792 301L786 302zM808 301L814 300L803 298L797 299zM824 294L829 293L818 291L813 292z"/><path fill="#a6a6a6" d="M246 255L252 255L252 255L246 255zM246 255L252 254L252 254L246 254zM245 254L251 253L251 253L245 253zM253 256L260 256L259 256L253 256zM253 256L259 255L259 255L252 255zM252 255L258 254L258 254L252 254zM260 257L266 256L266 256L260 256zM259 256L266 255L265 255L259 255zM268 258L274 257L274 257L267 257zM267 257L273 256L273 256L266 256zM266 256L272 256L272 255L266 255zM275 259L282 259L281 258L275 258zM274 258L281 258L280 257L274 257zM274 257L280 257L279 256L273 256zM284 260L291 260L290 259L283 260zM283 259L289 259L289 258L282 259zM281 258L288 258L287 257L281 258zM293 262L299 261L299 261L292 261zM291 260L298 260L297 259L291 260zM290 259L296 259L296 258L289 259zM302 263L309 263L308 262L301 262zM300 262L307 261L306 261L299 261zM299 261L305 260L304 260L298 260zM312 264L319 264L318 263L311 264zM310 263L317 263L316 262L309 263zM308 262L315 262L314 261L307 261zM322 266L329 265L328 265L321 265zM320 265L327 264L326 264L319 264zM318 263L324 263L323 262L317 263zM336 269L343 269L342 268L334 268zM333 268L340 267L339 266L332 267zM330 266L337 266L336 265L329 265zM348 271L355 270L353 270L346 270zM344 269L352 269L350 268L343 269zM342 268L349 267L347 267L340 267zM364 275L372 274L370 273L362 274zM360 273L368 272L366 271L358 272zM357 271L364 271L362 270L355 270zM382 279L390 278L388 277L380 278zM378 277L386 276L384 275L376 276zM374 275L381 274L379 273L372 274zM415 288L424 287L421 286L412 287zM409 286L418 285L415 284L406 285zM403 283L412 283L409 281L401 282zM398 281L406 280L404 279L395 280zM393 279L401 278L398 277L390 278zM488 313L499 312L493 309L483 311zM477 309L488 307L482 305L472 307zM467 305L477 304L472 302L463 303zM458 301L468 300L463 298L454 299zM449 298L459 297L455 295L445 296zM441 294L451 293L447 292L438 293zM434 292L443 291L439 289L431 290zM427 289L436 288L433 287L424 287zM564 336L575 334L567 331L555 333zM547 330L558 328L550 325L539 327zM650 341L661 339L649 335L639 337zM693 337L702 335L690 332L681 334zM741 321L749 319L737 316L730 318zM756 317L763 316L752 313L745 315zM779 307L785 306L774 304L767 305zM791 305L797 304L786 302L780 303zM808 297L813 296L803 294L798 296zM819 295L824 294L813 292L808 293z"/><path fill="#cacaca" d="M246 255L252 255L252 254L246 255zM246 254L252 254L251 253L245 254zM245 253L251 253L251 253L245 253zM253 256L259 256L259 255L253 256zM252 255L259 255L258 254L252 255zM252 254L258 254L258 254L252 254zM260 256L266 256L266 255L259 256zM259 255L265 255L265 255L259 255zM267 257L274 257L273 256L267 257zM266 256L273 256L272 256L266 256zM275 258L281 258L281 258L274 258zM274 257L280 257L280 257L274 257zM283 260L290 259L289 259L283 259zM282 259L289 258L288 258L281 258zM281 258L287 257L287 257L280 257zM292 261L299 261L298 260L291 260zM291 260L297 259L296 259L290 259zM289 259L296 258L295 258L289 258zM301 262L308 262L307 261L300 262zM299 261L306 261L305 260L299 261zM298 260L304 260L304 259L297 259zM311 264L318 263L317 263L310 263zM309 263L316 262L315 262L308 262zM321 265L328 265L327 264L320 265zM319 264L326 264L324 263L318 263zM334 268L342 268L340 267L333 268zM332 267L339 266L337 266L330 266zM329 265L336 265L335 264L328 265zM346 270L353 270L352 269L344 269zM343 269L350 268L349 267L342 268zM340 267L347 267L346 266L339 266zM362 274L370 273L368 272L360 273zM358 272L366 271L364 271L357 271zM355 270L362 270L361 269L353 270zM380 278L388 277L386 276L378 277zM376 276L384 275L381 274L374 275zM372 274L379 273L377 272L370 273zM406 285L415 284L412 283L403 283zM401 282L409 281L406 280L398 281zM395 280L404 279L401 278L393 279zM472 307L482 305L477 304L467 305zM463 303L472 302L468 300L458 301zM454 299L463 298L459 297L449 298zM445 296L455 295L451 293L441 294zM438 293L447 292L443 291L434 292zM431 290L439 289L436 288L427 289zM424 287L433 287L429 285L421 286zM555 333L567 331L558 328L547 330zM539 327L550 325L542 322L531 324zM595 341L606 339L596 335L585 337zM617 342L628 340L617 336L606 339zM639 343L650 341L639 337L628 340zM749 319L756 317L745 315L737 316zM772 309L779 307L767 305L761 307zM785 306L791 305L780 303L774 304zM803 298L808 297L798 296L792 297zM813 296L819 295L808 293L803 294zM828 290L832 289L822 287L818 288z"/><path fill="#a4a4a4" d="M245 253L251 253L251 252L245 252zM245 252L251 252L250 251L244 252zM252 254L258 254L257 253L251 253zM251 253L257 253L257 252L251 253zM251 252L257 252L256 252L251 252zM259 255L265 255L264 254L258 254zM258 254L264 254L264 253L258 254zM257 253L263 253L263 252L257 253zM257 252L263 252L262 252L257 252zM265 255L271 255L271 254L265 255zM264 254L270 254L270 253L264 254zM264 253L270 253L269 253L263 253zM273 256L279 256L278 255L272 256zM272 255L278 255L277 254L271 255zM271 254L277 254L276 253L270 254zM280 257L287 257L286 256L280 257zM279 256L285 256L285 255L279 256zM278 255L284 255L284 254L278 255zM289 258L295 258L294 257L288 258zM287 257L294 257L293 256L287 257zM286 256L292 256L292 256L285 256zM297 259L304 259L303 259L296 259zM296 258L302 258L301 258L295 258zM294 257L300 257L300 257L294 257zM306 261L313 260L312 260L305 260zM304 260L311 259L310 259L304 259zM303 259L309 258L308 258L302 258zM316 262L322 262L321 261L315 262zM314 261L320 261L319 260L313 260zM312 260L318 259L317 259L311 259zM328 265L335 264L334 264L327 264zM326 264L332 263L331 262L324 263zM323 262L330 262L329 261L322 262zM321 261L328 261L327 260L320 261zM339 266L346 266L344 265L337 266zM336 265L343 265L342 264L335 264zM334 264L340 263L339 263L332 263zM353 270L361 269L359 268L352 269zM350 268L357 268L356 267L349 267zM347 267L354 266L353 265L346 266zM344 265L351 265L350 264L343 265zM370 273L377 272L375 272L368 272zM366 271L373 271L372 270L364 271zM362 270L370 269L368 269L361 269zM359 268L366 268L365 267L357 268zM388 277L396 276L394 275L386 276zM384 275L391 275L389 274L381 274zM379 273L387 273L385 272L377 272zM375 272L383 271L381 270L373 271zM421 286L429 285L426 284L418 285zM415 284L423 283L420 282L412 283zM409 281L417 281L414 280L406 280zM404 279L412 279L409 278L401 278zM398 277L406 277L404 276L396 276zM531 324L542 322L535 320L524 321zM518 319L528 317L522 315L511 316zM505 314L515 312L509 310L499 312zM493 309L503 308L498 306L488 307zM482 305L492 304L487 302L477 304zM472 302L482 301L477 299L468 300zM463 298L473 297L468 296L459 297zM455 295L464 294L460 292L451 293zM447 292L456 291L452 290L443 291zM439 289L448 288L445 287L436 288zM433 287L441 286L438 285L429 285zM585 337L596 335L587 332L575 334zM567 331L578 329L569 326L558 328zM606 339L617 336L607 333L596 335zM628 340L639 337L628 334L617 336zM671 336L681 334L669 331L659 333zM690 332L699 330L688 327L679 329zM708 328L717 326L705 323L697 325zM725 324L733 322L722 320L714 321zM752 313L759 312L748 310L741 311zM766 310L772 309L761 307L754 308zM786 302L792 301L781 299L775 300zM797 299L803 298L792 297L787 298zM803 294L808 293L798 292L793 293zM813 292L818 291L808 290L803 291zM823 291L828 290L818 288L813 289zM827 287L831 286L822 284L817 285z"/><path fill="#a2a2a2" d="M256 252L262 251L262 251L256 251zM263 252L269 252L268 252L263 252zM262 252L268 251L268 251L262 251zM270 253L276 253L275 253L270 253zM269 253L275 252L274 252L269 252zM268 252L274 251L274 251L268 251zM277 254L283 254L283 254L277 254zM276 253L282 253L282 253L276 253zM275 253L281 252L281 252L275 252zM285 255L291 255L290 255L284 255zM284 254L290 254L289 254L283 254zM283 254L289 253L288 253L282 253zM282 253L287 253L287 252L281 252zM293 256L299 256L298 256L292 256zM292 256L298 255L297 255L291 255zM290 255L296 254L296 254L290 254zM289 254L295 253L294 253L289 253zM301 258L307 257L307 257L300 257zM300 257L306 256L305 256L299 256zM298 256L304 255L304 255L298 255zM297 255L303 254L302 254L296 254zM310 259L316 258L315 258L309 258zM308 258L315 257L314 257L307 257zM307 257L313 256L312 256L306 256zM319 260L326 260L325 259L318 259zM317 259L324 259L323 258L316 258zM315 258L322 258L321 257L315 257zM331 262L338 262L337 261L330 262zM329 261L335 261L334 260L328 261zM327 260L333 260L332 259L326 260zM325 259L331 259L330 258L324 259zM342 264L348 263L347 263L340 263zM339 263L346 262L344 262L338 262zM337 261L343 261L342 261L335 261zM334 260L341 260L339 259L333 260zM356 267L363 266L361 266L354 266zM353 265L360 265L358 264L351 265zM350 264L357 264L355 263L348 263zM347 263L354 262L352 262L346 262zM372 270L379 270L377 269L370 269zM368 269L375 268L373 267L366 268zM365 267L371 267L370 266L363 266zM361 266L368 265L366 265L360 265zM394 275L401 275L399 274L391 275zM389 274L397 273L394 272L387 273zM385 272L392 271L390 271L383 271zM381 270L388 270L386 269L379 270zM377 269L384 268L382 268L375 268zM426 284L434 283L431 282L423 283zM420 282L428 281L425 280L417 281zM414 280L422 279L419 278L412 279zM409 278L417 277L414 276L406 277zM404 276L411 275L409 274L401 275zM399 274L406 273L404 272L397 273zM550 325L561 323L553 320L542 322zM535 320L546 318L539 315L528 317zM522 315L532 313L525 311L515 312zM509 310L519 309L513 307L503 308zM498 306L507 305L502 303L492 304zM487 302L497 301L492 299L482 301zM477 299L487 298L482 296L473 297zM468 296L477 294L473 293L464 294zM460 292L469 292L465 290L456 291zM452 290L461 289L457 287L448 288zM445 287L453 286L449 285L441 286zM438 285L446 284L443 283L434 283zM431 282L439 281L436 280L428 281zM587 332L598 330L588 327L578 329zM649 335L659 333L648 330L638 332zM722 320L730 318L718 316L710 317zM737 316L745 315L733 312L726 314zM761 307L767 305L757 304L750 305zM774 304L780 303L769 301L763 302zM781 299L787 298L776 296L771 297zM792 297L798 296L787 294L782 295zM798 292L803 291L793 290L788 291zM808 290L813 289L803 288L798 289zM818 288L822 287L813 286L808 287zM822 284L826 284L817 282L812 283z"/><path fill="#a0a0a0" d="M268 251L273 251L273 250L267 251zM274 252L280 252L280 251L274 251zM274 251L279 251L279 250L273 251zM281 252L286 252L286 251L280 252zM280 251L285 251L285 251L279 251zM279 250L284 250L284 250L278 250zM288 253L294 253L293 252L287 253zM287 252L292 252L292 251L286 252zM286 251L291 251L291 251L285 251zM285 251L290 250L290 250L284 250zM296 254L301 254L301 253L295 253zM294 253L300 253L299 252L294 253zM293 252L299 252L298 252L292 252zM292 251L297 251L297 251L291 251zM305 256L311 255L310 255L304 255zM304 255L309 255L309 254L303 254zM302 254L308 254L307 253L301 254zM301 253L306 253L306 253L300 253zM314 257L320 257L319 256L313 256zM312 256L318 256L317 255L311 255zM310 255L316 255L315 254L309 255zM309 254L314 254L314 253L308 254zM323 258L329 258L328 257L322 258zM321 257L327 257L326 256L320 257zM319 256L325 256L324 255L318 256zM317 255L323 255L322 254L316 255zM332 259L338 259L337 258L331 259zM330 258L336 258L335 257L329 258zM328 257L334 257L333 256L327 257zM326 256L332 256L331 255L325 256zM344 262L351 261L350 261L343 261zM342 261L348 260L347 260L341 260zM339 259L346 259L344 259L338 259zM337 258L343 258L342 258L336 258zM358 264L365 264L363 263L357 264zM355 263L362 263L360 262L354 262zM352 262L359 261L357 261L351 261zM350 261L356 260L354 260L348 260zM347 260L353 259L352 259L346 259zM373 267L380 267L378 266L371 267zM370 266L376 265L375 265L368 265zM366 265L373 264L371 263L365 264zM363 263L370 263L368 262L362 263zM360 262L367 262L365 261L359 261zM394 272L402 272L399 271L392 271zM390 271L397 270L395 269L388 270zM386 269L393 268L391 268L384 268zM382 268L389 267L387 266L380 267zM378 266L385 266L383 265L376 265zM375 265L381 264L380 264L373 264zM425 280L433 279L430 278L422 279zM419 278L427 277L424 276L417 277zM414 276L422 275L419 274L411 275zM409 274L416 274L414 273L406 273zM404 272L411 272L409 271L402 272zM399 271L406 270L404 269L397 270zM395 269L402 269L400 268L393 268zM569 326L580 324L571 321L561 323zM553 320L564 319L556 316L546 318zM539 315L549 314L542 312L532 313zM525 311L535 309L529 307L519 309zM513 307L523 305L517 304L507 305zM502 303L511 302L506 300L497 301zM492 299L501 298L496 297L487 298zM482 296L491 295L486 293L477 294zM473 293L482 292L477 291L469 292zM465 290L473 289L469 288L461 289zM457 287L465 287L461 285L453 286zM449 285L458 284L454 283L446 284zM443 283L451 282L447 281L439 281zM436 280L444 280L441 279L433 279zM430 278L438 278L435 277L427 277zM607 333L618 331L608 328L598 330zM628 334L638 332L628 329L618 331zM648 330L658 328L648 325L638 327zM669 331L679 329L668 326L658 328zM688 327L697 325L686 322L677 324zM705 323L714 321L702 319L694 321zM718 316L726 314L715 312L708 313zM733 312L741 311L730 309L723 310zM748 310L754 308L744 306L737 307zM757 304L763 302L753 301L746 302zM769 301L775 300L765 298L759 299zM776 296L782 295L772 293L767 294zM787 294L793 293L783 291L778 292zM793 290L798 289L789 287L784 288zM803 288L808 287L799 286L794 287zM813 286L817 285L808 284L803 285zM817 282L821 282L812 281L808 281zM825 281L830 280L821 279L816 280z"/><path fill="#9e9e9e" d="M291 251L296 250L296 250L290 250zM290 250L295 250L294 249L289 250zM299 252L305 252L304 252L299 252zM298 252L304 251L303 251L297 251zM297 251L302 251L301 250L296 250zM296 250L301 250L300 250L295 250zM307 253L313 253L312 253L306 253zM306 253L311 252L310 252L305 252zM304 252L310 251L309 251L304 251zM303 251L308 251L308 250L302 251zM301 250L307 250L306 250L301 250zM315 254L321 254L320 254L314 254zM314 253L319 253L318 253L313 253zM312 253L318 252L317 252L311 252zM310 252L316 252L315 251L310 251zM309 251L314 251L314 250L308 251zM324 255L330 255L329 255L323 255zM322 254L328 254L327 254L321 254zM320 254L326 253L325 253L319 253zM318 253L324 252L323 252L318 252zM335 257L341 257L340 257L334 257zM333 256L339 256L337 256L332 256zM331 255L336 255L335 255L330 255zM329 255L334 254L333 254L328 254zM327 254L332 253L331 253L326 253zM344 259L350 258L349 258L343 258zM342 258L348 257L347 257L341 257zM340 257L346 256L344 256L339 256zM337 256L343 255L342 255L336 255zM335 255L341 254L340 254L334 254zM357 261L363 261L362 260L356 260zM354 260L361 259L359 259L353 259zM352 259L358 258L356 258L350 258zM349 258L355 257L354 257L348 257zM347 257L353 256L351 256L346 256zM371 263L378 263L376 262L370 263zM368 262L374 262L373 261L367 262zM365 261L371 261L370 260L363 261zM362 260L368 260L367 259L361 259zM359 259L365 259L364 258L358 258zM391 268L398 267L396 267L389 267zM387 266L394 266L392 265L385 266zM383 265L390 265L388 264L381 264zM380 264L386 263L384 263L378 263zM376 262L382 262L381 261L374 262zM373 261L379 261L377 260L371 261zM424 276L432 276L429 275L422 275zM419 274L426 274L424 273L416 274zM414 273L421 272L418 271L411 272zM409 271L416 271L413 270L406 270zM404 269L411 269L409 268L402 269zM400 268L407 267L404 267L398 267zM396 267L402 266L400 265L394 266zM392 265L398 265L396 264L390 265zM588 327L599 325L590 322L580 324zM571 321L582 320L574 317L564 319zM556 316L566 315L559 312L549 314zM542 312L552 310L545 308L535 309zM529 307L538 306L532 304L523 305zM517 304L526 302L521 301L511 302zM506 300L515 299L510 297L501 298zM496 297L505 296L500 294L491 295zM486 293L495 292L490 291L482 292zM477 291L486 290L482 288L473 289zM469 288L477 287L473 286L465 287zM461 285L469 285L466 283L458 284zM454 283L462 282L458 281L451 282zM447 281L455 280L452 279L444 280zM441 279L448 278L445 277L438 278zM435 277L442 276L439 275L432 276zM429 275L436 274L433 273L426 274zM424 273L431 272L428 272L421 272zM418 271L425 271L423 270L416 271zM608 328L618 326L609 323L599 325zM628 329L638 327L628 324L618 326zM668 326L677 324L666 321L657 323zM686 322L694 321L683 318L675 320zM702 319L710 317L700 315L692 316zM730 309L737 307L726 305L719 307zM744 306L750 305L740 303L733 304zM753 301L759 299L749 298L743 299zM765 298L771 297L761 296L755 297zM772 293L778 292L768 291L763 292zM783 291L788 291L779 289L773 290zM789 287L794 287L785 285L780 286zM799 286L803 285L794 284L789 284zM808 284L812 283L803 282L799 283zM803 282L808 281L799 280L795 281zM812 281L816 280L808 279L803 280zM821 279L825 278L816 277L812 278zM816 277L820 277L812 276L808 276zM824 276L828 276L820 275L816 275z"/><path fill="#9c9c9c" d="M300 250L305 249L305 249L300 249zM308 250L313 250L312 250L307 250zM306 250L311 249L311 249L305 249zM317 252L322 252L321 251L316 252zM315 251L320 251L320 251L314 251zM314 250L319 250L318 250L313 250zM312 250L317 249L316 249L311 249zM311 249L316 249L315 248L310 249zM325 253L330 253L329 252L324 252zM323 252L328 252L328 251L322 252zM321 251L327 251L326 251L320 251zM320 251L325 250L324 250L319 250zM318 250L323 250L322 249L317 249zM333 254L339 254L338 253L332 253zM331 253L337 253L336 252L330 253zM329 252L335 252L334 252L328 252zM328 251L333 251L332 251L327 251zM326 251L331 250L330 250L325 250zM344 256L350 255L349 255L343 255zM342 255L348 255L347 254L341 254zM340 254L345 254L344 253L339 254zM338 253L343 253L342 252L337 253zM336 252L341 252L340 252L335 252zM334 252L339 251L338 251L333 251zM356 258L362 258L361 257L355 257zM354 257L360 257L358 256L353 256zM351 256L357 256L356 255L350 255zM349 255L355 255L353 254L348 255zM347 254L352 254L351 253L345 254zM344 253L350 253L349 253L343 253zM370 260L376 260L374 259L368 260zM367 259L373 259L371 258L365 259zM364 258L370 258L368 257L362 258zM361 257L367 257L365 256L360 257zM358 256L364 256L363 255L357 256zM356 255L361 255L360 254L355 255zM388 264L394 263L392 263L386 263zM384 263L390 262L389 262L382 262zM381 261L387 261L385 260L379 261zM377 260L383 260L382 259L376 260zM374 259L380 259L379 258L373 259zM371 258L377 258L375 257L370 258zM368 257L374 257L372 256L367 257zM413 270L420 269L418 268L411 269zM409 268L416 268L413 267L407 267zM404 267L411 266L409 266L402 266zM400 265L407 265L405 264L398 265zM396 264L403 264L401 263L394 263zM392 263L399 262L397 262L390 262zM389 262L395 261L393 261L387 261zM385 260L391 260L389 260L383 260zM382 259L388 259L386 259L380 259zM590 322L600 320L592 318L582 320zM574 317L583 315L576 313L566 315zM559 312L568 311L561 309L552 310zM545 308L554 307L548 305L538 306zM532 304L541 303L535 301L526 302zM521 301L530 299L524 298L515 299zM510 297L518 296L513 294L505 296zM500 294L508 293L503 292L495 292zM490 291L499 290L494 289L486 290zM482 288L490 287L485 286L477 287zM473 286L481 285L477 284L469 285zM466 283L473 283L470 281L462 282zM458 281L466 280L463 279L455 280zM452 279L459 278L456 277L448 278zM445 277L453 276L449 275L442 276zM439 275L446 274L443 274L436 274zM433 273L440 273L438 272L431 272zM428 272L435 271L432 270L425 271zM423 270L430 269L427 269L420 269zM418 268L425 268L422 267L416 268zM413 267L420 267L418 266L411 266zM409 266L415 265L413 265L407 265zM405 264L411 264L409 263L403 264zM609 323L619 321L610 319L600 320zM628 324L638 322L628 320L619 321zM648 325L657 323L647 320L638 322zM666 321L675 320L665 317L656 319zM683 318L692 316L681 314L673 316zM700 315L708 313L697 311L690 312zM715 312L723 310L712 308L705 310zM726 305L733 304L723 302L717 304zM740 303L746 302L736 300L730 301zM749 298L755 297L745 295L739 296zM761 296L767 294L757 293L751 294zM768 291L773 290L764 289L759 290zM779 289L784 288L775 287L770 288zM775 287L780 286L771 285L766 286zM785 285L789 284L781 283L776 284zM794 284L799 283L790 282L785 282zM790 282L795 281L786 280L782 281zM799 280L803 280L795 278L791 279zM808 279L812 278L804 277L799 278zM804 277L808 276L799 276L795 276zM812 276L816 275L808 274L804 275zM820 275L824 274L815 273L812 274zM823 272L827 271L819 271L815 271z"/><path fill="#9a9a9a" d="M316 249L322 249L321 249L316 249zM324 250L329 250L328 249L323 250zM322 249L327 249L327 249L322 249zM321 249L326 248L325 248L320 248zM332 251L337 251L336 250L331 250zM330 250L335 250L334 249L329 250zM328 249L333 249L332 249L327 249zM327 249L332 248L331 248L326 248zM342 252L348 252L346 252L341 252zM340 252L345 251L344 251L339 251zM338 251L343 251L342 250L337 251zM336 250L341 250L340 250L335 250zM334 249L339 249L338 249L333 249zM332 249L337 249L336 248L332 248zM331 248L336 248L335 248L330 248zM353 254L359 254L358 254L352 254zM351 253L356 253L355 253L350 253zM349 253L354 252L353 252L348 252zM346 252L352 252L351 251L345 251zM344 251L349 251L348 250L343 251zM342 250L347 250L346 250L341 250zM340 250L345 249L344 249L339 249zM365 256L371 256L370 255L364 256zM363 255L368 255L367 255L361 255zM360 254L366 254L364 254L359 254zM358 254L363 253L362 253L356 253zM355 253L360 252L359 252L354 252zM353 252L358 252L357 251L352 252zM351 251L356 251L355 251L349 251zM379 258L384 258L383 257L377 258zM375 257L381 257L380 257L374 257zM372 256L378 256L377 256L371 256zM370 255L375 255L374 255L368 255zM367 255L372 254L371 254L366 254zM364 254L370 253L368 253L363 253zM362 253L367 253L366 252L360 252zM401 263L407 263L405 262L399 262zM397 262L403 261L401 261L395 261zM393 261L399 260L397 260L391 260zM389 260L395 259L394 259L388 259zM386 259L392 258L390 258L384 258zM383 257L388 257L387 257L381 257zM380 257L385 256L384 256L378 256zM377 256L382 255L381 255L375 255zM374 255L379 254L378 254L372 254zM592 318L601 316L593 314L583 315zM576 313L585 312L578 310L568 311zM561 309L570 307L563 305L554 307zM548 305L557 304L550 302L541 303zM535 301L544 300L538 298L530 299zM524 298L533 297L527 295L518 296zM513 294L522 293L517 292L508 293zM503 292L512 291L507 289L499 290zM494 289L502 288L498 287L490 287zM485 286L493 285L489 284L481 285zM477 284L485 283L481 282L473 283zM470 281L477 281L474 280L466 280zM463 279L470 279L467 278L459 278zM456 277L463 277L460 276L453 276zM449 275L457 275L453 274L446 274zM443 274L450 273L447 272L440 273zM438 272L445 271L442 271L435 271zM432 270L439 270L436 269L430 269zM427 269L434 268L431 267L425 268zM422 267L429 267L426 266L420 267zM418 266L424 265L422 265L415 265zM413 265L419 264L417 263L411 264zM409 263L415 263L413 262L407 263zM405 262L411 262L409 261L403 261zM401 261L407 260L405 260L399 260zM397 260L403 259L401 259L395 259zM394 259L399 258L398 258L392 258zM390 258L396 257L394 257L388 257zM610 319L619 317L610 315L601 316zM489 284L497 283L493 282L485 283zM481 282L489 281L485 280L477 281zM474 280L481 279L477 278L470 279zM467 278L474 277L470 276L463 277zM460 276L467 275L464 274L457 275zM453 274L460 273L457 272L450 273zM447 272L454 272L451 271L445 271zM442 271L448 270L446 269L439 270zM436 269L443 268L440 268L434 268zM431 267L438 267L435 266L429 267zM426 266L433 266L430 265L424 265zM422 265L428 264L426 264L419 264zM417 263L423 263L421 262L415 263zM413 262L419 262L417 261L411 262zM628 320L637 318L628 316L619 317zM647 320L656 319L646 316L637 318zM665 317L673 316L664 313L655 315zM681 314L690 312L680 310L672 312zM697 311L705 310L695 307L687 309zM712 308L719 307L710 305L702 306zM723 302L730 301L720 299L714 301zM736 300L743 299L733 297L727 298zM733 297L739 296L730 294L724 296zM745 295L751 294L742 292L736 293zM757 293L763 292L753 291L748 291zM753 291L759 290L750 288L745 289zM764 289L770 288L761 287L755 287zM771 285L776 284L767 283L762 284zM781 283L785 282L777 281L772 282zM786 280L791 279L782 278L778 279zM795 278L799 278L791 277L787 277zM791 277L795 276L787 275L783 276zM799 276L804 275L796 274L792 275zM808 274L812 274L804 273L800 273zM804 273L808 272L800 271L796 272zM815 273L819 272L811 272L808 272zM811 272L815 271L808 270L804 271zM819 271L823 270L815 269L811 270zM826 269L830 269L822 268L818 269zM822 268L826 268L818 267L815 267z"/><path fill="#989898" d="M338 249L343 249L342 248L337 249zM336 248L341 248L340 248L336 248zM348 250L353 250L352 250L347 250zM346 250L351 249L350 249L345 249zM344 249L349 249L348 248L343 249zM342 248L347 248L346 248L341 248zM340 248L345 247L344 247L340 247zM359 252L364 252L363 251L358 252zM357 251L362 251L361 251L356 251zM355 251L360 250L358 250L353 250zM352 250L357 250L356 249L351 249zM350 249L355 249L354 249L349 249zM348 248L353 248L352 248L347 248zM346 248L351 248L350 247L345 247zM371 254L376 254L375 253L370 253zM368 253L374 253L372 252L367 253zM366 252L371 252L370 252L364 252zM363 251L368 251L367 251L362 251zM361 251L366 250L365 250L360 250zM358 250L363 250L362 249L357 250zM356 249L361 249L360 249L355 249zM354 249L359 248L358 248L353 248zM387 257L392 256L391 256L385 256zM384 256L389 255L388 255L382 255zM381 255L386 255L385 254L379 254zM378 254L383 254L382 253L376 254zM375 253L380 253L379 252L374 253zM372 252L377 252L376 252L371 252zM370 252L375 251L373 251L368 251zM367 251L372 251L371 250L366 250zM365 250L370 250L368 249L363 250zM593 314L602 312L594 310L585 312zM578 310L587 308L579 306L570 307zM563 305L572 304L566 302L557 304zM550 302L559 301L553 299L544 300zM538 298L547 297L541 296L533 297zM527 295L535 294L530 292L522 293zM517 292L525 291L520 290L512 291zM507 289L515 288L510 287L502 288zM498 287L506 286L501 285L493 285zM409 261L415 261L413 260L407 260zM405 260L411 260L409 259L403 259zM401 259L407 258L405 258L399 258zM398 258L403 257L401 257L396 257zM394 257L400 256L398 256L392 256zM391 256L396 256L395 255L389 255zM388 255L393 255L391 254L386 255zM385 254L390 254L388 253L383 254zM382 253L387 253L385 253L380 253zM379 252L384 252L382 252L377 252zM376 252L381 251L380 251L375 251zM610 315L620 313L611 311L602 312zM510 287L518 286L513 285L506 286zM501 285L509 284L504 283L497 283zM493 282L500 281L496 280L489 281zM485 280L492 279L488 278L481 279zM477 278L485 277L481 276L474 277zM470 276L477 275L474 274L467 275zM464 274L471 274L467 273L460 273zM457 272L464 272L461 271L454 272zM451 271L458 270L455 269L448 270zM446 269L452 269L449 268L443 268zM440 268L447 267L444 267L438 267zM435 266L441 266L439 265L433 266zM430 265L436 264L434 264L428 264zM426 264L432 263L429 263L423 263zM421 262L427 262L425 261L419 262zM417 261L423 261L421 260L415 261zM413 260L419 260L416 259L411 260zM409 259L414 259L413 258L407 258zM405 258L411 258L409 257L403 257zM401 257L407 257L405 256L400 256zM398 256L403 256L402 255L396 256zM395 255L400 255L398 254L393 255zM391 254L397 254L395 254L390 254zM628 316L637 314L628 312L620 313zM474 274L481 274L477 273L471 274zM467 273L474 272L471 271L464 272zM461 271L468 270L465 270L458 270zM455 269L462 269L459 268L452 269zM449 268L456 267L453 267L447 267zM444 267L450 266L448 265L441 266zM439 265L445 265L443 264L436 264zM434 264L440 263L438 263L432 263zM429 263L435 262L433 262L427 262zM425 261L431 261L429 260L423 261zM421 260L426 260L424 259L419 260zM416 259L422 259L420 258L414 259zM646 316L655 315L646 312L637 314zM664 313L672 312L662 310L654 311zM680 310L687 309L678 307L670 308zM695 307L702 306L693 304L686 305zM710 305L717 304L707 302L700 303zM707 302L714 301L705 299L698 300zM720 299L727 298L718 297L711 298zM730 294L736 293L727 292L721 293zM742 292L748 291L739 290L733 291zM750 288L755 287L747 286L741 287zM761 287L766 286L757 284L752 285zM757 284L762 284L754 282L749 283zM767 283L772 282L764 281L759 282zM777 281L782 281L773 280L769 280zM773 280L778 279L770 278L765 278zM782 278L787 277L779 276L774 277zM779 276L783 276L775 275L771 276zM787 275L792 275L784 274L780 274zM796 274L800 273L792 273L788 273zM792 273L796 272L788 271L784 272zM800 271L804 271L796 270L792 271zM808 270L811 270L804 269L800 269zM804 269L807 268L800 268L797 268zM815 269L818 269L811 268L807 268zM811 268L815 267L807 267L804 267zM818 267L822 266L814 266L811 266zM814 266L818 265L811 265L807 265zM825 266L828 266L821 265L818 265zM821 265L824 264L817 264L814 264zM824 263L827 262L820 262L817 262z"/><path fill="#969696" d="M352 248L357 248L356 247L351 248zM350 247L355 247L354 247L349 247zM362 249L367 249L366 249L361 249zM360 249L365 248L364 248L359 248zM358 248L363 248L361 247L357 248zM356 247L360 247L359 247L355 247zM373 251L378 251L377 250L372 251zM371 250L376 250L374 250L370 250zM368 249L373 249L372 249L367 249zM366 249L371 249L370 248L365 248zM364 248L368 248L367 248L363 248zM361 247L366 247L365 247L360 247zM359 247L364 247L363 246L358 247zM594 310L603 309L595 307L587 308zM579 306L588 305L581 303L572 304zM566 302L574 301L568 299L559 301zM553 299L561 298L555 296L547 297zM541 296L549 294L544 293L535 294zM530 292L538 292L533 290L525 291zM520 290L528 289L523 287L515 288zM388 253L394 253L392 253L387 253zM385 253L390 252L389 252L384 252zM382 252L388 251L386 251L381 251zM380 251L385 251L383 250L378 251zM377 250L382 250L381 250L376 250zM374 250L379 249L378 249L373 249zM372 249L377 249L376 248L371 249zM370 248L374 248L373 248L368 248zM367 248L372 247L371 247L366 247zM365 247L370 247L368 246L364 247zM611 311L620 310L612 307L603 309zM533 290L541 289L535 288L528 289zM523 287L530 287L526 285L518 286zM513 285L521 284L516 283L509 284zM504 283L512 282L508 281L500 281zM496 280L503 280L499 279L492 279zM488 278L495 278L492 277L485 277zM481 276L488 276L484 275L477 275zM413 258L418 258L416 257L411 258zM409 257L414 257L412 256L407 257zM405 256L411 256L409 255L403 256zM402 255L407 255L405 254L400 255zM398 254L404 254L402 254L397 254zM395 254L400 253L399 253L394 253zM392 253L397 252L396 252L390 252zM389 252L394 252L393 251L388 251zM386 251L391 251L390 250L385 251zM383 250L388 250L387 250L382 250zM381 250L385 249L384 249L379 249zM378 249L383 249L381 248L377 249zM376 248L380 248L379 248L374 248zM628 312L637 310L628 308L620 310zM508 281L515 280L511 279L503 280zM499 279L506 278L502 277L495 278zM492 277L499 276L495 275L488 276zM484 275L491 274L488 273L481 274zM477 273L484 272L481 272L474 272zM471 271L477 271L474 270L468 270zM465 270L471 269L468 268L462 269zM459 268L465 268L462 267L456 267zM453 267L459 266L457 266L450 266zM448 265L454 265L451 264L445 265zM443 264L449 264L446 263L440 263zM438 263L444 262L441 262L435 262zM433 262L439 261L437 261L431 261zM429 260L434 260L432 260L426 260zM424 259L430 259L428 258L422 259zM420 258L426 258L424 257L418 258zM416 257L422 257L420 256L414 257zM412 256L418 256L416 256L411 256zM409 255L414 255L412 255L407 255zM405 254L410 254L409 254L404 254zM402 254L407 253L405 253L400 253zM399 253L404 253L402 252L397 252zM396 252L401 252L399 251L394 252zM393 251L397 251L396 251L391 251zM390 250L394 250L393 250L388 250zM646 312L654 311L645 309L637 310zM474 270L481 269L477 269L471 269zM468 268L474 268L471 267L465 268zM462 267L468 266L465 266L459 266zM457 266L463 265L460 264L454 265zM451 264L457 264L455 263L449 264zM446 263L452 263L449 262L444 262zM441 262L447 261L445 261L439 261zM437 261L442 260L440 260L434 260zM432 260L438 259L435 259L430 259zM428 258L433 258L431 258L426 258zM424 257L429 257L427 257L422 257zM420 256L425 256L423 256L418 256zM416 256L421 255L419 255L414 255zM412 255L417 254L416 254L410 254zM409 254L414 253L412 253L407 253zM662 310L670 308L661 306L653 307zM678 307L686 305L676 304L669 305zM693 304L700 303L691 301L684 302zM705 299L711 298L702 296L696 297zM718 297L724 296L715 294L709 295zM715 294L721 293L713 291L707 292zM727 292L733 291L725 290L719 291zM739 290L745 289L736 288L730 289zM736 288L741 287L733 286L728 287zM747 286L752 285L744 284L738 285zM744 284L749 283L741 282L736 283zM754 282L759 282L751 281L746 281zM764 281L769 280L761 279L756 280zM761 279L765 278L757 277L753 278zM770 278L774 277L767 276L762 277zM767 276L771 276L763 275L759 275zM775 275L780 274L772 273L768 274zM784 274L788 273L780 272L776 273zM780 272L784 272L777 271L773 271zM788 271L792 271L785 270L781 270zM785 270L789 269L782 268L778 269zM796 270L800 269L793 269L789 269zM793 269L797 268L789 267L786 268zM800 268L804 267L797 266L793 267zM797 266L800 266L794 265L790 266zM807 267L811 266L804 266L800 266zM804 266L807 265L801 264L797 265zM811 265L814 264L807 264L804 264zM807 264L811 263L804 262L801 263zM817 264L821 263L814 263L811 263zM814 263L817 262L811 262L807 262zM820 262L823 261L817 261L814 261zM817 261L820 260L814 260L810 260zM823 260L826 260L820 259L817 260z"/><path fill="#949494" d="M595 307L604 305L597 304L588 305zM581 303L589 302L582 300L574 301zM568 299L576 298L569 297L561 298zM555 296L563 295L557 293L549 294zM544 293L552 292L546 291L538 292zM373 248L378 247L376 247L372 247zM371 247L375 247L374 247L370 247zM368 246L373 246L372 246L367 246zM612 307L620 306L612 304L604 305zM597 304L605 302L598 301L589 302zM582 300L591 299L584 297L576 298zM569 297L577 296L571 294L563 295zM557 293L565 292L559 291L552 292zM546 291L554 290L548 288L541 289zM535 288L543 287L538 286L530 287zM526 285L533 285L528 283L521 284zM516 283L524 282L519 281L512 282zM387 250L392 250L390 249L385 249zM384 249L389 249L387 249L383 249zM381 248L386 248L385 248L380 248zM379 248L384 248L382 247L378 247zM376 247L381 247L380 247L375 247zM374 247L379 246L377 246L373 246zM628 308L637 307L628 305L620 306zM528 283L535 283L531 281L524 282zM519 281L526 280L522 279L515 280zM511 279L518 278L513 277L506 278zM502 277L509 276L505 275L499 276zM495 275L502 274L498 274L491 274zM488 273L494 273L491 272L484 272zM481 272L487 271L484 270L477 271zM405 253L410 253L409 252L404 253zM402 252L407 252L405 251L401 252zM399 251L404 251L402 251L397 251zM396 251L401 250L399 250L394 250zM393 250L398 250L396 249L392 250zM390 249L395 249L393 249L389 249zM387 249L392 248L391 248L386 248zM385 248L389 248L388 247L384 248zM382 247L387 247L386 247L381 247zM380 247L384 246L383 246L379 246zM377 246L382 246L381 246L376 246zM645 309L653 307L645 305L637 307zM505 275L512 275L508 274L502 274zM498 274L504 273L501 272L494 273zM491 272L497 271L494 270L487 271zM484 270L490 270L487 269L481 269zM477 269L484 268L480 267L474 268zM471 267L477 267L474 266L468 266zM465 266L471 265L469 265L463 265zM460 264L466 264L463 263L457 264zM455 263L460 263L458 262L452 263zM449 262L455 262L453 261L447 261zM445 261L450 260L448 260L442 260zM440 260L445 259L443 259L438 259zM435 259L441 258L439 258L433 258zM431 258L437 257L434 257L429 257zM427 257L432 256L430 256L425 256zM423 256L428 255L426 255L421 255zM419 255L424 254L423 254L417 254zM416 254L421 254L419 253L414 253zM412 253L417 253L415 252L410 253zM409 252L414 252L412 252L407 252zM405 251L410 251L409 251L404 251zM402 251L407 250L406 250L401 250zM399 250L404 250L403 249L398 250zM396 249L401 249L400 249L395 249zM393 249L398 248L397 248L392 248zM391 248L395 248L394 247L389 248zM388 247L393 247L391 247L387 247zM386 247L390 246L389 246L384 246zM383 246L387 246L386 246L382 246zM645 305L653 304L644 302L636 304zM487 269L493 268L490 268L484 268zM480 267L487 267L483 266L477 267zM474 266L480 266L477 265L471 265zM469 265L474 264L472 264L466 264zM463 263L469 263L466 262L460 263zM458 262L463 262L461 261L455 262zM453 261L458 261L456 260L450 260zM448 260L453 260L451 259L445 259zM443 259L449 258L446 258L441 258zM439 258L444 257L442 257L437 257zM434 257L440 256L438 256L432 256zM430 256L436 256L434 255L428 255zM426 255L432 255L430 254L424 254zM423 254L428 254L426 253L421 254zM419 253L424 253L422 253L417 253zM415 252L420 252L419 252L414 252zM412 252L417 251L415 251L410 251zM409 251L414 251L412 250L407 250zM406 250L410 250L409 250L404 250zM403 249L407 249L406 249L401 249zM400 249L404 248L403 248L398 248zM397 248L401 248L400 248L395 248zM394 247L398 247L397 247L393 247zM661 306L669 305L660 303L653 304zM461 261L466 261L464 260L458 261zM456 260L461 260L459 259L453 260zM451 259L456 259L454 258L449 258zM446 258L452 258L449 257L444 257zM442 257L447 257L445 256L440 256zM438 256L443 256L441 255L436 256zM434 255L439 255L437 254L432 255zM430 254L435 254L433 253L428 254zM426 253L431 253L429 253L424 253zM422 253L427 252L425 252L420 252zM419 252L423 251L422 251L417 251zM415 251L420 251L418 250L414 251zM676 304L684 302L675 301L668 302zM675 301L682 299L674 298L667 299zM691 301L698 300L689 298L682 299zM689 298L696 297L687 296L681 297zM702 296L709 295L700 293L694 294zM713 291L719 291L710 289L704 290zM725 290L730 289L722 287L716 288zM722 287L728 287L720 285L714 286zM733 286L738 285L730 284L725 284zM730 284L736 283L728 282L723 283zM741 282L746 281L738 280L733 281zM751 281L756 280L748 279L743 280zM748 279L753 278L745 277L740 278zM757 277L762 277L754 276L750 277zM754 276L759 275L752 274L747 275zM763 275L768 274L760 273L756 274zM760 273L765 273L758 272L753 272zM772 273L776 273L769 272L765 273zM769 272L773 271L766 271L762 271zM766 271L770 270L763 269L759 270zM777 271L781 270L774 269L770 270zM774 269L778 269L771 268L767 269zM782 268L786 268L779 267L775 268zM779 267L783 267L776 266L772 267zM789 267L793 267L786 266L783 267zM786 266L790 266L783 265L780 266zM783 265L787 265L780 264L777 264zM794 265L797 265L790 264L787 265zM790 264L794 264L787 263L784 264zM801 264L804 264L797 263L794 264zM797 263L801 263L794 262L791 263zM794 262L798 262L791 261L788 262zM804 262L807 262L801 261L798 262zM801 261L804 261L798 261L794 261zM811 262L814 261L807 261L804 261zM807 261L810 260L804 260L801 260zM804 260L807 259L801 259L798 259zM814 260L817 260L810 259L807 259zM810 259L813 259L807 258L804 258zM820 259L823 259L816 258L813 259zM816 258L819 258L813 257L810 258zM813 257L816 257L810 257L807 257zM822 258L825 257L819 257L816 257zM819 257L822 256L816 256L813 256zM825 256L827 256L821 255L819 256zM821 255L824 255L818 255L816 255z"/><path fill="#929292" d="M612 304L621 303L613 301L605 302zM598 301L606 299L599 298L591 299zM584 297L592 296L585 294L577 296zM571 294L579 293L573 292L565 292zM559 291L567 290L561 289L554 290zM548 288L556 287L550 286L543 287zM538 286L545 285L540 284L533 285zM628 305L636 304L629 302L621 303zM613 301L621 300L614 298L606 299zM599 298L606 297L600 295L592 296zM585 294L593 293L587 292L579 293zM573 292L580 291L574 289L567 290zM561 289L569 288L563 287L556 287zM550 286L558 285L553 284L545 285zM540 284L548 283L543 282L535 283zM531 281L538 281L533 280L526 280zM522 279L529 279L524 278L518 278zM513 277L520 277L516 276L509 276zM629 302L636 301L629 299L621 300zM614 298L621 297L614 296L606 297zM600 295L607 294L600 292L593 293zM587 292L594 291L588 290L580 291zM574 289L582 288L576 287L569 288zM563 287L570 286L565 285L558 285zM553 284L560 283L555 282L548 283zM543 282L550 281L545 280L538 281zM533 280L540 279L536 278L529 279zM524 278L531 277L527 276L520 277zM516 276L523 275L519 274L512 275zM508 274L515 273L511 272L504 273zM501 272L507 272L503 271L497 271zM494 270L500 270L496 269L490 270zM391 247L396 247L394 246L390 246zM389 246L393 246L392 246L387 246zM386 246L390 245L389 245L385 245zM644 302L652 301L644 299L636 301zM629 299L636 298L629 296L621 297zM614 296L621 294L614 293L607 294zM600 292L608 292L601 290L594 291zM588 290L595 289L589 287L582 288zM576 287L583 286L577 285L570 286zM565 285L572 284L567 283L560 283zM555 282L561 281L556 280L550 281zM545 280L552 279L547 278L540 279zM536 278L542 277L538 276L531 277zM527 276L533 275L529 274L523 275zM519 274L525 274L521 273L515 273zM511 272L517 272L513 271L507 272zM503 271L510 270L506 269L500 270zM496 269L503 269L499 268L493 268zM490 268L496 267L493 266L487 267zM483 266L489 266L486 265L480 266zM477 265L483 264L480 264L474 264zM472 264L477 263L475 263L469 263zM466 262L472 262L469 261L463 262zM412 250L417 250L415 250L410 250zM409 250L413 249L412 249L407 249zM406 249L410 249L409 248L404 248zM403 248L407 248L406 248L401 248zM400 248L404 247L403 247L398 247zM397 247L401 247L400 246L396 247zM394 246L399 246L397 246L393 246zM392 246L396 245L395 245L390 245zM660 303L668 302L659 300L652 301zM644 299L651 298L643 297L636 298zM629 296L636 295L629 293L621 294zM614 293L622 292L615 291L608 292zM601 290L608 289L602 288L595 289zM589 287L596 287L590 285L583 286zM577 285L584 284L579 283L572 284zM567 283L573 282L568 281L561 281zM556 280L563 280L558 279L552 279zM547 278L553 278L549 277L542 277zM538 276L544 276L540 275L533 275zM529 274L536 274L531 273L525 274zM521 273L527 272L523 271L517 272zM513 271L520 270L516 270L510 270zM506 269L512 269L509 268L503 269zM499 268L505 267L502 267L496 267zM493 266L498 266L495 265L489 266zM486 265L492 265L489 264L483 264zM480 264L486 263L483 263L477 263zM475 263L480 262L477 262L472 262zM469 261L475 261L472 260L466 261zM464 260L469 260L467 259L461 260zM459 259L464 259L462 258L456 259zM454 258L459 258L457 257L452 258zM449 257L455 257L452 256L447 257zM445 256L450 256L448 255L443 256zM441 255L446 255L444 254L439 255zM437 254L442 254L440 254L435 254zM433 253L438 253L436 253L431 253zM429 253L434 252L432 252L427 252zM425 252L430 252L428 251L423 251zM422 251L426 251L425 250L420 251zM418 250L423 250L421 250L417 250zM415 250L420 249L418 249L413 249zM412 249L416 249L415 248L410 249zM409 248L413 248L412 248L407 248zM406 248L410 247L409 247L404 247zM403 247L407 247L406 246L401 247zM400 246L404 246L403 246L399 246zM397 246L402 246L400 245L396 245zM395 245L399 245L398 245L393 245zM659 300L667 299L658 297L651 298zM643 297L651 296L643 294L636 295zM629 293L636 292L629 291L622 292zM615 291L622 290L615 288L608 289zM602 288L609 287L603 286L596 287zM590 285L597 285L591 283L584 284zM579 283L585 282L580 281L573 282zM568 281L575 280L570 279L563 280zM558 279L565 278L560 277L553 278zM549 277L555 276L551 275L544 276zM540 275L546 274L542 273L536 274zM531 273L538 272L534 272L527 272zM523 271L530 271L526 270L520 270zM516 270L522 269L518 268L512 269zM509 268L515 268L511 267L505 267zM502 267L508 266L504 266L498 266zM495 265L501 265L498 264L492 265zM489 264L495 264L492 263L486 263zM483 263L489 262L486 262L480 262zM477 262L483 261L480 261L475 261zM472 260L477 260L475 259L469 260zM467 259L472 259L470 258L464 259zM462 258L467 258L465 257L459 258zM457 257L462 257L460 256L455 257zM452 256L458 256L455 256L450 256zM448 255L453 255L451 255L446 255zM444 254L449 254L447 254L442 254zM440 254L445 253L443 253L438 253zM436 253L441 252L439 252L434 252zM432 252L437 252L435 251L430 252zM428 251L433 251L431 251L426 251zM425 250L429 250L428 250L423 250zM421 250L426 249L424 249L420 249zM418 249L423 249L421 248L416 249zM415 248L419 248L418 248L413 248zM412 248L416 247L415 247L410 247zM409 247L413 247L412 247L407 247zM406 246L410 246L409 246L404 246zM403 246L407 246L406 245L402 246zM400 245L405 245L403 245L399 245zM658 297L665 296L658 294L651 296zM643 294L650 293L643 292L636 292zM629 291L636 290L629 289L622 290zM615 288L622 287L616 286L609 287zM603 286L610 285L604 284L597 285zM591 283L598 283L592 281L585 282zM580 281L587 280L581 279L575 280zM570 279L576 278L571 277L565 278zM560 277L566 276L561 275L555 276zM551 275L557 274L552 274L546 274zM542 273L548 273L544 272L538 272zM534 272L540 271L536 270L530 271zM526 270L532 269L528 269L522 269zM518 268L524 268L520 267L515 268zM511 267L517 266L513 266L508 266zM504 266L510 265L507 264L501 265zM498 264L503 264L500 263L495 264zM492 263L497 263L494 262L489 262zM486 262L491 261L488 261L483 261zM480 261L486 260L483 260L477 260zM475 259L480 259L477 259L472 259zM470 258L475 258L472 258L467 258zM465 257L470 257L467 257L462 257zM460 256L465 256L463 256L458 256zM455 256L460 255L458 255L453 255zM451 255L456 254L454 254L449 254zM447 254L452 253L449 253L445 253zM443 253L447 253L445 252L441 252zM439 252L443 252L441 251L437 252zM435 251L440 251L438 251L433 251zM431 251L436 250L434 250L429 250zM428 250L432 250L430 249L426 249zM424 249L429 249L427 249L423 249zM421 248L425 248L424 248L419 248zM418 248L422 248L421 247L416 247zM415 247L419 247L417 247L413 247zM412 247L416 246L414 246L410 246zM409 246L413 246L412 245L407 246zM406 245L410 245L409 245L405 245zM403 245L407 245L406 244L402 245zM674 298L681 297L672 295L665 296zM658 294L664 293L657 292L650 293zM643 292L649 291L642 289L636 290zM629 289L635 288L629 287L622 287zM616 286L622 285L616 284L610 285zM604 284L610 283L604 282L598 283zM592 281L598 281L593 280L587 280zM581 279L588 279L582 278L576 278zM571 277L577 277L572 276L566 276zM561 275L568 275L563 274L557 274zM552 274L558 273L554 272L548 273zM544 272L550 271L546 270L540 271zM536 270L542 270L538 269L532 269zM528 269L534 268L530 267L524 268zM520 267L526 267L523 266L517 266zM513 266L519 265L516 265L510 265zM507 264L512 264L509 263L503 264zM500 263L506 263L503 262L497 263zM494 262L500 262L497 261L491 261zM488 261L494 260L491 260L486 260zM483 260L488 259L485 259L480 259zM477 259L483 258L480 258L475 258zM472 258L477 257L475 257L470 257zM467 257L472 256L470 256L465 256zM463 256L468 255L465 255L460 255zM458 255L463 254L461 254L456 254zM454 254L459 254L456 253L452 253zM449 253L454 253L452 252L447 253zM445 252L450 252L448 252L443 252zM441 251L446 251L444 251L440 251zM438 251L442 250L440 250L436 250zM434 250L439 250L437 249L432 250zM430 249L435 249L433 249L429 249zM427 249L431 248L430 248L425 248zM424 248L428 248L426 247L422 248zM421 247L425 247L423 247L419 247zM417 247L422 246L420 246L416 246zM414 246L419 246L417 246L413 246zM412 245L416 245L414 245L410 245zM409 245L413 245L411 244L407 245zM672 295L679 294L671 292L664 293zM657 292L663 291L656 290L649 291zM642 289L649 288L642 287L635 288zM629 287L635 286L629 284L622 285zM616 284L623 283L616 282L610 283zM604 282L611 281L605 280L598 281zM593 280L599 279L594 278L588 279zM582 278L589 277L584 276L577 277zM572 276L579 275L574 274L568 275zM563 274L569 273L564 272L558 273zM554 272L560 272L556 271L550 271zM546 270L551 270L547 269L542 270zM538 269L543 268L539 268L534 268zM530 267L536 267L532 266L526 267zM523 266L528 266L525 265L519 265zM516 265L521 264L518 264L512 264zM509 263L515 263L511 262L506 263zM503 262L508 262L505 261L500 262zM497 261L502 261L499 260L494 260zM491 260L496 259L493 259L488 259zM485 259L491 258L488 258L483 258zM480 258L485 257L483 257L477 257zM475 257L480 256L477 256L472 256zM470 256L475 255L473 255L468 255zM465 255L470 255L468 254L463 254zM461 254L466 254L463 253L459 254zM456 253L461 253L459 252L454 253zM452 252L457 252L455 252L450 252zM448 252L453 251L451 251L446 251zM444 251L449 251L447 250L442 250zM440 250L445 250L443 249L439 250zM437 249L441 249L439 249L435 249zM433 249L438 248L436 248L431 248zM430 248L434 248L432 247L428 248zM426 247L431 247L429 247L425 247zM423 247L428 247L426 246L422 246zM420 246L424 246L423 246L419 246zM417 246L421 245L420 245L416 245zM414 245L418 245L417 245L413 245zM411 244L416 244L414 244L410 244zM687 296L694 294L686 293L679 294zM671 292L678 292L670 290L663 291zM656 290L663 289L655 287L649 288zM642 287L648 286L642 285L635 286zM629 284L635 284L629 283L623 283zM616 282L623 281L617 280L611 281zM605 280L611 279L605 278L599 279zM594 278L600 277L595 276L589 277zM584 276L590 275L585 274L579 275zM574 274L580 274L575 273L569 273zM564 272L570 272L566 271L560 272zM556 271L562 270L557 269L551 270zM547 269L553 269L549 268L543 268zM539 268L545 267L541 266L536 267zM532 266L537 266L534 265L528 266zM525 265L530 264L527 264L521 264zM518 264L523 263L520 263L515 263zM511 262L517 262L513 261L508 262zM505 261L510 261L507 260L502 261zM499 260L504 260L501 259L496 259zM493 259L498 259L496 258L491 258zM488 258L493 258L490 257L485 257zM483 257L488 257L485 256L480 256zM477 256L482 256L480 255L475 255zM473 255L477 255L475 254L470 255zM468 254L473 254L470 253L466 254zM463 253L468 253L466 253L461 253zM459 252L464 252L462 252L457 252zM455 252L459 251L457 251L453 251zM451 251L455 251L453 250L449 251zM447 250L451 250L449 250L445 250zM443 249L448 249L446 249L441 249zM439 249L444 249L442 248L438 248zM436 248L440 248L439 248L434 248zM432 247L437 247L435 247L431 247zM429 247L433 247L432 246L428 247zM426 246L430 246L429 246L424 246zM423 246L427 245L425 245L421 245zM420 245L424 245L422 245L418 245zM417 245L421 244L420 244L416 244zM686 293L692 292L684 291L678 292zM670 290L676 289L669 288L663 289zM655 287L662 287L655 285L648 286zM642 285L648 284L641 283L635 284zM629 283L635 282L629 281L623 281zM617 280L623 280L617 279L611 279zM605 278L611 278L606 277L600 277zM595 276L601 276L596 275L590 275zM585 274L590 274L586 273L580 274zM575 273L581 272L576 271L570 272zM566 271L572 270L567 270L562 270zM557 269L563 269L559 268L553 269zM549 268L555 267L551 267L545 267zM541 266L547 266L543 265L537 266zM534 265L539 265L536 264L530 264zM527 264L532 263L529 263L523 263zM520 263L525 262L522 262L517 262zM513 261L519 261L516 260L510 261zM507 260L512 260L509 259L504 260zM501 259L506 259L504 258L498 259zM496 258L501 258L498 257L493 258zM490 257L495 257L492 256L488 257zM485 256L490 256L487 255L482 256zM480 255L485 255L482 254L477 255zM475 254L480 254L477 254L473 254zM470 253L475 253L473 253L468 253zM466 253L471 252L468 252L464 252zM462 252L466 252L464 251L459 251zM457 251L462 251L460 250L455 251zM453 250L458 250L456 250L451 250zM449 250L454 249L452 249L448 249zM446 249L450 249L448 248L444 249zM442 248L446 248L445 248L440 248zM439 248L443 247L441 247L437 247zM435 247L439 247L438 246L433 247zM432 246L436 246L434 246L430 246zM429 246L433 246L431 245L427 245zM425 245L430 245L428 245L424 245zM422 245L427 244L425 244L421 244zM420 244L424 244L422 244L418 244zM700 293L707 292L698 291L692 292zM684 291L690 290L683 288L676 289zM669 288L675 287L668 286L662 287zM655 285L661 284L654 283L648 284zM641 283L647 282L641 281L635 282zM629 281L635 280L629 279L623 280zM617 279L623 278L617 277L611 278zM606 277L612 276L607 275L601 276zM596 275L601 274L596 273L590 274zM586 273L591 272L587 272L581 272zM576 271L582 271L577 270L572 270zM567 270L573 269L569 268L563 269zM559 268L564 268L560 267L555 267zM551 267L556 266L552 266L547 266zM543 265L548 265L545 264L539 265zM536 264L541 264L537 263L532 263zM529 263L534 262L530 262L525 262zM522 262L527 261L524 261L519 261zM516 260L521 260L518 259L512 260zM509 259L514 259L511 258L506 259zM504 258L509 258L506 257L501 258zM498 257L503 257L500 256L495 257zM492 256L497 256L495 255L490 256zM487 255L492 255L490 255L485 255zM482 254L487 254L485 254L480 254zM477 254L482 253L480 253L475 253zM473 253L477 252L475 252L471 252zM468 252L473 252L471 251L466 252zM464 251L469 251L466 251L462 251zM460 250L464 250L462 250L458 250zM456 250L460 249L458 249L454 249zM452 249L456 249L454 248L450 249zM448 248L453 248L451 248L446 248zM445 248L449 247L447 247L443 247zM441 247L445 247L444 247L439 247zM438 246L442 246L440 246L436 246zM434 246L438 246L437 245L433 246zM431 245L435 245L434 245L430 245zM428 245L432 245L431 244L427 244zM425 244L429 244L428 244L424 244zM698 291L704 290L696 289L690 290zM683 288L689 287L681 286L675 287zM668 286L674 285L667 284L661 284zM654 283L660 283L653 281L647 282zM641 281L647 280L641 279L635 280zM629 279L635 278L629 277L623 278zM617 277L623 276L618 275L612 276zM596 273L602 273L597 272L591 272zM587 272L592 271L587 270L582 271zM577 270L583 269L578 269L573 269zM569 268L574 268L570 267L564 268zM560 267L566 266L562 266L556 266zM552 266L558 265L554 264L548 265zM545 264L550 264L546 263L541 264zM537 263L543 263L539 262L534 262zM530 262L536 261L532 261L527 261zM524 261L529 260L526 260L521 260zM518 259L523 259L519 259L514 259zM511 258L516 258L513 258L509 258zM506 257L511 257L508 257L503 257zM500 256L505 256L502 256L497 256zM495 255L499 255L497 255L492 255zM490 255L494 254L492 254L487 254zM485 254L489 253L487 253L482 253zM480 253L484 253L482 252L477 252zM475 252L480 252L477 251L473 252zM471 251L475 251L473 251L469 251zM466 251L471 250L469 250L464 250zM462 250L467 250L465 249L460 249zM458 249L463 249L461 249L456 249zM454 248L459 248L457 248L453 248zM451 248L455 248L453 247L449 247zM447 247L451 247L449 247L445 247zM444 247L448 246L446 246L442 246zM440 246L444 246L443 245L438 246zM437 245L441 245L439 245L435 245zM434 245L438 245L436 244L432 245zM431 244L434 244L433 244L429 244zM428 244L431 244L430 243L426 243zM696 289L702 288L695 287L689 287zM681 286L687 285L680 284L674 285zM667 284L673 283L666 282L660 283zM653 281L659 281L653 280L647 280zM641 279L647 279L641 278L635 278zM629 277L635 277L629 276L623 276zM578 269L584 268L579 267L574 268zM570 267L575 267L571 266L566 266zM562 266L567 265L563 265L558 265zM554 264L559 264L555 263L550 264zM546 263L551 263L548 262L543 263zM539 262L544 262L541 261L536 261zM532 261L537 260L534 260L529 260zM526 260L531 259L528 259L523 259zM519 259L524 258L521 258L516 258zM513 258L518 257L515 257L511 257zM508 257L513 256L510 256L505 256zM502 256L507 255L504 255L499 255zM497 255L502 254L499 254L494 254zM492 254L496 254L494 253L489 253zM487 253L491 253L489 252L484 253zM482 252L487 252L484 252L480 252zM477 251L482 251L480 251L475 251zM473 251L477 250L475 250L471 250zM469 250L473 250L471 249L467 250zM465 249L469 249L467 249L463 249zM461 249L465 248L463 248L459 248zM457 248L461 248L459 247L455 248zM453 247L457 247L455 247L451 247zM449 247L454 246L452 246L448 246zM446 246L450 246L448 246L444 246zM443 245L447 245L445 245L441 245zM439 245L443 245L442 244L438 245zM436 244L440 244L438 244L434 244zM433 244L437 244L435 243L431 244zM710 289L716 288L708 287L702 288zM695 287L700 286L693 284L687 285zM680 284L686 283L679 282L673 283zM666 282L672 281L665 280L659 281zM653 280L659 279L652 278L647 279zM641 278L646 277L640 276L635 277zM571 266L576 265L572 265L567 265zM563 265L568 264L564 264L559 264zM555 263L560 263L557 262L551 263zM548 262L553 262L549 261L544 262zM541 261L546 261L542 260L537 260zM534 260L539 259L536 259L531 259zM528 259L532 258L529 258L524 258zM521 258L526 257L523 257L518 257zM515 257L520 256L517 256L513 256zM510 256L514 255L512 255L507 255zM504 255L509 255L506 254L502 254zM499 254L504 254L501 253L496 254zM494 253L498 253L496 252L491 253zM489 252L493 252L491 252L487 252zM484 252L489 251L486 251L482 251zM480 251L484 250L482 250L477 250zM475 250L480 250L477 249L473 250zM471 249L475 249L473 249L469 249zM467 249L471 248L469 248L465 248zM463 248L467 248L465 247L461 248zM459 247L463 247L461 247L457 247zM455 247L459 246L458 246L454 246zM452 246L456 246L454 246L450 246zM448 246L452 245L451 245L447 245zM445 245L449 245L447 245L443 245zM442 244L446 244L444 244L440 244zM438 244L442 244L441 243L437 244zM435 243L439 243L438 243L434 243zM708 287L714 286L706 285L700 286zM693 284L699 284L691 283L686 283zM679 282L684 281L677 280L672 281zM665 280L671 279L664 278L659 279zM652 278L658 277L652 276L646 277zM564 264L569 263L565 262L560 263zM557 262L562 262L558 261L553 262zM549 261L554 261L551 260L546 261zM542 260L547 260L544 259L539 259zM536 259L541 259L537 258L532 258zM529 258L534 258L531 257L526 257zM523 257L528 257L525 256L520 256zM517 256L522 256L519 255L514 255zM512 255L516 255L513 254L509 255zM506 254L511 254L508 253L504 254zM501 253L505 253L503 253L498 253zM496 252L500 252L498 252L493 252zM491 252L495 251L493 251L489 251zM486 251L491 251L488 250L484 250zM482 250L486 250L484 250L480 250zM477 249L482 249L480 249L475 249zM473 249L477 249L475 248L471 248zM469 248L473 248L471 248L467 248zM465 247L469 247L467 247L463 247zM461 247L465 247L464 246L459 246zM458 246L462 246L460 246L456 246zM454 246L458 245L456 245L452 245zM451 245L455 245L453 245L449 245zM447 245L451 244L449 244L446 244zM444 244L448 244L446 244L442 244zM441 243L445 243L443 243L439 243zM706 285L712 284L704 283L699 284zM691 283L697 282L690 281L684 281zM677 280L683 280L676 279L671 279zM664 278L670 278L663 277L658 277zM652 276L657 276L651 275L646 275zM558 261L563 261L559 260L554 261zM551 260L556 260L552 259L547 260zM544 259L549 259L545 258L541 259zM537 258L542 258L539 257L534 258zM531 257L536 257L533 256L528 257zM525 256L530 256L527 255L522 256zM519 255L524 255L521 254L516 255zM513 254L518 254L515 254L511 254zM508 253L513 253L510 253L505 253zM503 253L507 252L505 252L500 252zM498 252L502 251L500 251L495 251zM493 251L497 251L495 250L491 251zM488 250L493 250L490 250L486 250zM484 250L488 249L486 249L482 249zM480 249L484 249L482 248L477 249zM475 248L480 248L477 248L473 248zM471 248L475 247L473 247L469 247zM467 247L471 247L469 246L465 247zM464 246L468 246L466 246L462 246zM460 246L464 246L462 245L458 245zM456 245L460 245L458 245L455 245zM453 245L457 244L455 244L451 244zM449 244L453 244L452 244L448 244zM446 244L450 243L448 243L445 243zM443 243L447 243L445 243L441 243zM720 285L725 284L717 283L712 284zM704 283L710 282L702 281L697 282zM690 281L695 280L688 279L683 280zM676 279L682 278L675 277L670 278zM663 277L669 276L663 275L657 276zM552 259L557 259L553 258L549 259zM545 258L550 258L547 257L542 258zM539 257L544 257L540 256L536 257zM533 256L537 256L534 255L530 256zM527 255L531 255L528 255L524 255zM521 254L525 254L523 254L518 254zM515 254L520 253L517 253L513 253zM510 253L514 252L512 252L507 252zM505 252L509 252L507 251L502 251zM500 251L504 251L502 250L497 251zM495 250L499 250L497 250L493 250zM490 250L495 249L492 249L488 249zM486 249L490 249L488 248L484 249zM482 248L486 248L484 248L480 248zM477 248L482 247L479 247L475 247zM473 247L477 247L475 246L471 247zM469 246L473 246L472 246L468 246zM466 246L470 246L468 245L464 246zM462 245L466 245L464 245L460 245zM458 245L462 244L461 244L457 244zM455 244L459 244L457 244L453 244zM452 244L455 243L454 243L450 243zM448 243L452 243L450 243L447 243zM717 283L723 283L715 281L710 282zM702 281L708 280L701 279L695 280zM688 279L694 278L687 277L682 278zM675 277L680 276L674 275L669 276zM663 275L668 274L662 273L657 274zM547 257L551 257L548 257L544 257zM540 256L545 256L542 256L537 256zM534 255L539 255L536 255L531 255zM528 255L533 254L530 254L525 254zM523 254L527 253L524 253L520 253zM517 253L521 253L519 252L514 252zM512 252L516 252L514 251L509 252zM507 251L511 251L508 251L504 251zM502 250L506 250L504 250L499 250zM497 250L501 250L499 249L495 249zM492 249L497 249L494 248L490 249zM488 248L492 248L490 248L486 248zM484 248L488 248L486 247L482 247zM479 247L484 247L481 247L477 247zM475 246L479 246L477 246L473 246zM472 246L475 246L474 245L470 246zM468 245L472 245L470 245L466 245zM464 245L468 245L466 244L462 244zM461 244L464 244L463 244L459 244zM457 244L461 244L459 243L455 243zM454 243L457 243L456 243L452 243zM450 243L454 243L453 242L449 242zM715 281L720 281L713 280L708 280zM701 279L706 279L699 278L694 278zM687 277L692 277L686 276L680 276zM674 275L679 275L673 274L668 274zM662 273L667 273L661 272L656 273zM542 256L546 255L543 255L539 255zM536 255L540 254L537 254L533 254zM530 254L534 253L531 253L527 253zM524 253L529 253L526 252L521 253zM519 252L523 252L520 251L516 252zM514 251L518 251L515 251L511 251zM508 251L513 250L510 250L506 250zM504 250L508 250L505 249L501 250zM499 249L503 249L501 249L497 249zM494 248L498 248L496 248L492 248zM490 248L494 248L492 247L488 248zM486 247L490 247L487 247L484 247zM481 247L485 246L483 246L479 246zM477 246L481 246L479 245L475 246zM474 245L477 245L476 245L472 245zM470 245L474 245L472 244L468 245zM466 244L470 244L468 244L464 244zM463 244L466 244L465 243L461 244zM459 243L463 243L461 243L457 243zM456 243L460 243L458 242L454 243zM728 282L733 281L725 280L720 281zM713 280L718 279L711 278L706 279zM699 278L704 277L697 276L692 277zM686 276L691 275L684 274L679 275zM673 274L678 273L672 272L667 273zM537 254L542 254L539 253L534 253zM531 253L536 253L533 252L529 253zM526 252L530 252L527 252L523 252zM520 251L525 251L522 251L518 251zM515 251L519 250L517 250L513 250zM510 250L514 250L512 249L508 250zM505 249L509 249L507 249L503 249zM501 249L505 248L502 248L498 248zM496 248L500 248L498 247L494 248zM492 247L496 247L494 247L490 247zM487 247L491 246L489 246L485 246zM483 246L487 246L485 246L481 246zM479 245L483 245L481 245L477 245zM476 245L479 245L477 244L474 245zM472 244L476 244L474 244L470 244zM468 244L472 244L470 243L466 244zM465 243L468 243L467 243L463 243zM461 243L465 243L463 242L460 243zM458 242L462 242L460 242L456 242zM725 280L731 279L723 278L718 279zM711 278L716 277L709 276L704 277zM697 276L702 275L696 274L691 275zM684 274L689 273L683 273L678 273zM672 272L677 272L671 271L666 271zM527 252L532 251L529 251L525 251zM522 251L526 251L524 250L519 250zM517 250L521 250L518 249L514 250zM512 249L516 249L514 249L509 249zM507 249L511 248L509 248L505 248zM502 248L506 248L504 247L500 248zM498 247L502 247L500 247L496 247zM494 247L497 247L495 246L491 246zM489 246L493 246L491 246L487 246zM485 246L489 245L487 245L483 245zM481 245L485 245L483 245L479 245zM477 244L481 244L479 244L476 244zM474 244L477 244L476 243L472 244zM470 243L474 243L472 243L468 243zM467 243L470 243L469 242L465 243zM463 242L467 242L465 242L462 242zM738 280L743 280L736 279L731 279zM723 278L728 278L721 277L716 277zM709 276L714 276L707 275L702 275zM696 274L701 274L694 273L689 273zM683 273L688 272L682 271L677 272zM524 250L528 250L525 250L521 250zM518 249L523 249L520 249L516 249zM514 249L518 249L515 248L511 248zM509 248L513 248L510 248L506 248zM504 247L508 247L506 247L502 247zM500 247L504 247L501 246L497 247zM495 246L499 246L497 246L493 246zM491 246L495 245L493 245L489 245zM487 245L491 245L489 245L485 245zM483 245L487 244L485 244L481 244zM479 244L483 244L481 244L477 244zM476 243L479 243L477 243L474 243zM472 243L476 243L474 243L470 243zM469 242L472 242L470 242L467 242zM465 242L469 242L467 242L463 242zM736 279L740 278L733 277L728 278zM721 277L726 276L719 275L714 276zM707 275L712 274L706 273L701 274zM694 273L699 272L693 271L688 272zM682 271L687 271L681 270L676 270zM520 249L524 249L522 248L518 249zM515 248L519 248L517 248L513 248zM510 248L514 247L512 247L508 247zM506 247L510 247L507 246L504 247zM501 246L505 246L503 246L499 246zM497 246L501 246L499 245L495 245zM493 245L497 245L495 245L491 245zM489 245L493 244L491 244L487 244zM485 244L489 244L487 244L483 244zM481 244L485 243L483 243L479 243zM477 243L481 243L479 243L476 243zM474 243L477 242L476 242L472 242zM470 242L474 242L472 242L469 242zM733 277L738 276L731 275L726 276zM719 275L724 274L717 273L712 274zM706 273L710 273L704 272L699 272zM693 271L698 271L692 270L687 271zM681 270L686 269L680 269L675 269zM517 248L521 247L518 247L514 247zM512 247L516 247L514 247L510 247zM507 246L511 246L509 246L505 246zM503 246L507 246L505 245L501 246zM499 245L503 245L500 245L497 245zM495 245L498 245L496 244L493 244zM491 244L494 244L492 244L489 244zM487 244L490 243L488 243L485 243zM483 243L487 243L485 243L481 243zM479 243L483 242L481 242L477 242zM476 242L479 242L477 242L474 242zM472 242L476 242L474 241L471 241zM745 277L750 277L742 276L738 276zM731 275L735 275L728 274L724 274zM717 273L722 273L715 272L710 273zM704 272L709 271L702 270L698 271zM692 270L696 270L690 269L686 269zM509 246L513 246L511 245L507 246zM505 245L508 245L506 245L503 245zM500 245L504 245L502 244L498 245zM496 244L500 244L498 244L494 244zM492 244L496 244L494 243L490 243zM488 243L492 243L490 243L487 243zM485 243L488 243L486 242L483 242zM481 242L485 242L483 242L479 242zM477 242L481 242L479 241L476 242zM742 276L747 275L740 274L735 275zM728 274L733 273L726 272L722 273zM715 272L720 271L713 271L709 271zM702 270L707 270L701 269L696 270zM690 269L695 268L689 268L685 268zM506 245L510 245L508 244L504 245zM502 244L506 244L504 244L500 244zM498 244L502 244L500 243L496 244zM494 243L498 243L496 243L492 243zM490 243L494 243L492 242L488 243zM486 242L490 242L488 242L485 242zM483 242L486 242L484 241L481 242zM479 241L483 241L481 241L477 241zM740 274L744 273L738 273L733 273zM726 272L731 272L724 271L720 271zM713 271L718 270L711 269L707 270zM701 269L705 269L699 268L695 268zM689 268L694 267L688 266L683 267zM500 243L503 243L501 243L498 243zM496 243L499 243L497 242L494 243zM492 242L495 242L493 242L490 242zM488 242L491 242L490 242L486 242zM484 241L488 241L486 241L483 241zM752 274L756 274L749 273L744 273zM738 273L742 272L735 271L731 272zM724 271L729 270L722 270L718 270zM711 269L716 269L710 268L705 269zM699 268L704 267L698 267L694 267zM688 266L692 266L687 265L682 266zM493 242L497 242L495 242L491 242zM490 242L493 241L491 241L488 241zM486 241L489 241L488 241L484 241zM749 273L753 272L746 271L742 272zM735 271L740 271L733 270L729 270zM722 270L727 269L720 268L716 269zM710 268L714 268L708 267L704 267zM698 267L702 266L697 265L692 266zM746 271L751 271L744 270L740 271zM733 270L737 269L731 268L727 269zM720 268L725 268L718 267L714 268zM708 267L712 266L707 266L702 266zM697 265L701 265L695 264L691 265zM758 272L762 271L755 270L751 271zM744 270L748 270L741 269L737 269zM731 268L735 268L729 267L725 268zM718 267L723 267L717 266L712 266zM707 266L711 265L705 264L701 265zM695 264L700 264L694 263L690 264zM755 270L759 270L752 269L748 270zM741 269L746 268L739 267L735 268zM729 267L733 267L727 266L723 267zM717 266L721 265L715 265L711 265zM705 264L709 264L704 263L700 264zM752 269L756 268L750 268L746 268zM739 267L743 267L737 266L733 267zM727 266L731 266L725 265L721 265zM715 265L719 264L713 264L709 264zM704 263L708 263L702 262L698 263zM763 269L767 269L760 268L756 268zM750 268L754 267L747 267L743 267zM737 266L741 266L735 265L731 266zM725 265L729 264L723 264L719 264zM713 264L717 263L712 263L708 263zM702 262L706 262L701 261L697 262zM760 268L764 267L758 267L754 267zM747 267L751 266L745 265L741 266zM735 265L739 265L733 264L729 264zM723 264L727 263L721 263L717 263zM712 263L716 262L710 262L706 262zM701 261L705 261L700 260L696 261zM771 268L775 268L768 267L764 267zM758 267L762 266L755 266L751 266zM745 265L749 265L743 264L739 265zM733 264L737 264L731 263L727 263zM721 263L725 262L720 262L716 262zM710 262L714 261L709 261L705 261zM768 267L772 267L765 266L762 266zM755 266L759 265L753 264L749 265zM743 264L747 264L741 263L737 264zM731 263L735 263L729 262L725 262zM720 262L724 261L718 261L714 261zM709 261L713 260L707 260L704 260zM765 266L769 265L763 265L759 265zM753 264L757 264L750 263L747 264zM741 263L744 263L739 262L735 263zM729 262L733 262L727 261L724 261zM718 261L722 260L716 260L713 260zM707 260L711 259L706 259L702 259zM776 266L780 266L773 265L769 265zM763 265L767 264L760 264L757 264zM750 263L754 263L748 262L744 263zM739 262L742 262L737 261L733 262zM727 261L731 261L726 260L722 260zM716 260L720 259L715 259L711 259zM773 265L777 264L770 264L767 264zM760 264L764 263L758 263L754 263zM748 262L752 262L746 261L742 262zM737 261L740 261L735 260L731 261zM726 260L729 260L724 259L720 259zM715 259L719 259L714 258L710 258zM770 264L774 263L768 263L764 263zM758 263L761 262L756 262L752 262zM746 261L750 261L744 260L740 261zM735 260L738 260L733 259L729 260zM724 259L728 259L722 258L719 259zM714 258L717 258L712 257L708 258zM780 264L784 264L777 263L774 263zM768 263L771 262L765 262L761 262zM756 262L759 261L753 261L750 261zM744 260L748 260L742 259L738 260zM733 259L736 259L731 258L728 259zM722 258L726 258L721 257L717 258zM777 263L781 263L775 262L771 262zM765 262L769 261L763 261L759 261zM753 261L757 260L751 260L748 260zM742 259L745 259L740 259L736 259zM731 258L735 258L729 257L726 258zM721 257L724 257L719 257L716 257zM787 263L791 263L784 262L781 263zM775 262L778 261L772 261L769 261zM763 261L766 260L760 260L757 260zM751 260L755 259L749 259L745 259zM740 259L743 258L738 258L735 258zM729 257L733 257L728 257L724 257zM719 257L723 256L718 256L714 256zM784 262L788 262L782 261L778 261zM772 261L775 261L770 260L766 260zM760 260L764 259L758 259L755 259zM749 259L752 258L747 258L743 258zM738 258L742 257L736 257L733 257zM728 257L731 256L726 256L723 256zM718 256L721 255L716 255L713 255zM782 261L785 261L779 260L775 261zM770 260L773 260L767 259L764 259zM758 259L761 259L756 258L752 258zM747 258L750 257L745 257L742 257zM736 257L740 256L735 256L731 256zM726 256L729 256L725 255L721 255zM791 261L794 261L788 260L785 261zM779 260L782 260L776 259L773 260zM767 259L770 259L765 258L761 259zM756 258L759 258L754 257L750 257zM745 257L748 257L743 256L740 256zM735 256L738 256L733 255L729 256zM725 255L728 255L723 254L720 255zM788 260L792 260L785 259L782 260zM776 259L779 259L774 258L770 259zM765 258L768 258L762 257L759 258zM754 257L757 257L752 256L748 257zM743 256L746 256L741 255L738 256zM733 255L736 255L731 254L728 255zM723 254L726 254L722 254L718 254zM798 261L801 260L795 260L792 260zM785 259L789 259L783 258L779 259zM774 258L777 258L771 257L768 258zM762 257L766 257L760 256L757 257zM752 256L755 256L750 256L746 256zM741 255L744 255L739 255L736 255zM731 254L734 254L730 254L726 254zM795 260L798 259L792 259L789 259zM783 258L786 258L780 258L777 258zM771 257L774 257L769 257L766 257zM760 256L763 256L758 256L755 256zM750 256L753 255L748 255L744 255zM739 255L743 254L738 254L734 254zM730 254L733 253L728 253L725 253zM792 259L795 258L789 258L786 258zM780 258L783 257L778 257L774 257zM769 257L772 256L767 256L763 256zM758 256L761 255L756 255L753 255zM748 255L751 254L746 254L743 254zM738 254L741 254L736 253L733 253zM728 253L731 253L727 252L723 253zM801 259L804 258L798 258L795 258zM789 258L792 257L786 257L783 257zM778 257L781 256L775 256L772 256zM767 256L770 255L764 255L761 255zM756 255L759 255L754 254L751 254zM746 254L749 254L744 253L741 254zM736 253L739 253L734 252L731 253zM798 258L801 258L795 257L792 257zM786 257L789 257L784 256L781 256zM775 256L778 256L773 255L770 255zM764 255L767 255L762 254L759 255zM754 254L757 254L752 253L749 254zM744 253L747 253L742 253L739 253zM734 252L737 252L733 252L730 252zM807 258L810 258L804 257L801 258zM795 257L798 257L793 256L789 257zM784 256L787 256L781 255L778 256zM773 255L776 255L771 254L767 255zM762 254L765 254L760 254L757 254zM752 253L755 253L750 253L747 253zM742 253L745 252L741 252L737 252zM733 252L736 251L731 251L728 251zM804 257L807 257L801 256L798 257zM793 256L796 256L790 255L787 256zM781 255L784 255L779 255L776 255zM771 254L774 254L768 254L765 254zM760 254L763 253L758 253L755 253zM750 253L753 252L748 252L745 252zM741 252L744 252L739 251L736 251zM731 251L734 251L730 250L727 251zM801 256L804 256L798 256L796 256zM790 255L793 255L787 255L784 255zM779 255L782 254L777 254L774 254zM768 254L771 253L766 253L763 253zM758 253L761 253L756 252L753 252zM748 252L751 252L747 251L744 252zM739 251L742 251L737 251L734 251zM810 257L813 256L807 256L804 256zM798 256L801 255L796 255L793 255zM787 255L790 254L785 254L782 254zM777 254L779 254L774 253L771 253zM766 253L769 253L764 252L761 253zM756 252L759 252L754 251L751 252zM747 251L750 251L745 251L742 251zM737 251L740 250L736 250L733 250zM807 256L810 255L804 255L801 255zM796 255L799 255L793 254L790 254zM785 254L788 254L782 253L779 254zM774 253L777 253L772 252L769 253zM764 252L767 252L762 252L759 252zM754 251L757 251L752 251L750 251zM745 251L748 250L743 250L740 250zM736 250L739 250L734 249L731 250zM816 256L819 256L813 255L810 255zM804 255L807 255L801 254L799 255zM793 254L796 254L791 253L788 254zM782 253L785 253L780 253L777 253zM772 252L775 252L770 252L767 252zM762 252L765 251L760 251L757 251zM752 251L755 251L751 250L748 250zM743 250L746 250L742 249L739 250zM813 255L816 255L810 254L807 255zM801 254L804 254L799 253L796 254zM791 253L793 253L788 253L785 253zM780 253L783 252L778 252L775 252zM770 252L773 251L768 251L765 251zM760 251L763 251L758 250L755 251zM751 250L754 250L749 250L746 250zM742 249L744 249L740 249L737 249zM810 254L813 254L807 254L804 254zM799 253L802 253L796 253L793 253zM788 253L791 252L786 252L783 252zM778 252L781 252L776 251L773 251zM768 251L771 251L766 250L763 251zM758 250L761 250L756 250L754 250zM749 250L752 249L747 249L744 249zM740 249L743 249L738 248L736 249zM818 255L821 254L815 254L813 254zM807 254L810 253L804 253L802 253zM796 253L799 253L794 252L791 252zM786 252L788 252L783 251L781 252zM776 251L778 251L773 251L771 251zM766 250L769 250L764 250L761 250zM756 250L759 249L755 249L752 249zM747 249L750 249L746 248L743 249zM815 254L818 253L813 253L810 253zM804 253L807 253L802 252L799 253zM794 252L796 252L791 251L788 252zM783 251L786 251L781 251L778 251zM773 251L776 250L771 250L769 250zM764 250L767 250L762 249L759 249zM755 249L757 249L753 249L750 249zM746 248L748 248L744 248L741 248zM824 254L826 254L821 253L818 253zM813 253L815 253L810 252L807 253zM802 252L804 252L799 252L796 252zM791 251L794 251L789 251L786 251zM781 251L784 250L779 250L776 250zM771 250L774 250L769 249L767 250zM762 249L765 249L760 249L757 249zM753 249L756 248L751 248L748 248zM744 248L747 248L743 247L740 248zM821 253L823 253L818 252L815 253zM810 252L812 252L807 252L804 252zM799 252L802 251L797 251L794 251zM789 251L791 251L786 250L784 250zM779 250L782 250L777 249L774 250zM769 249L772 249L767 249L765 249zM760 249L763 248L758 248L756 248zM751 248L754 248L749 247L747 248zM818 252L820 252L815 252L812 252zM807 252L810 251L804 251L802 251zM797 251L799 251L794 250L791 251zM786 250L789 250L784 250L782 250zM777 249L779 249L775 249L772 249zM767 249L770 248L765 248L763 248zM758 248L761 248L757 248L754 248zM749 247L752 247L748 247L745 247zM815 252L818 252L812 251L810 251zM804 251L807 251L802 250L799 251zM794 250L797 250L792 250L789 250zM784 250L787 249L782 249L779 249zM775 249L777 249L773 248L770 248zM765 248L768 248L764 248L761 248zM757 248L759 247L755 247L752 247zM748 247L751 247L746 246L744 247zM823 252L826 252L820 251L818 252zM812 251L815 251L810 251L807 251zM802 250L804 250L799 250L797 250zM792 250L794 249L789 249L787 249zM782 249L785 249L780 248L777 249zM773 248L775 248L771 248L768 248zM764 248L766 247L762 247L759 247zM755 247L757 247L753 246L751 247zM746 246L749 246L745 246L742 246zM820 251L823 251L817 251L815 251zM810 251L812 250L807 250L804 250zM799 250L802 250L797 249L794 249zM789 249L792 249L787 248L785 249zM780 248L783 248L778 248L775 248zM771 248L773 247L769 247L766 247zM762 247L764 247L760 247L757 247zM753 246L756 246L752 246L749 246zM817 251L820 250L815 250L812 250zM807 250L810 250L804 249L802 250zM797 249L799 249L795 249L792 249zM787 248L790 248L785 248L783 248zM778 248L780 248L776 247L773 247zM769 247L771 247L767 247L764 247zM760 247L763 246L758 246L756 246zM752 246L754 246L750 245L747 246zM815 250L817 250L812 249L810 250zM804 249L807 249L802 249L799 249zM795 249L797 248L792 248L790 248zM785 248L788 248L783 247L780 248zM776 247L778 247L774 247L771 247zM767 247L770 246L765 246L763 246zM758 246L761 246L757 246L754 246zM750 245L753 245L748 245L746 245zM822 250L825 250L820 249L817 250zM812 249L814 249L809 249L807 249zM802 249L804 248L800 248L797 248zM792 248L795 248L790 247L788 248zM783 247L785 247L781 247L778 247zM774 247L776 247L772 246L770 246zM765 246L768 246L763 246L761 246zM757 246L759 245L755 245L753 245zM820 249L822 249L817 249L814 249zM809 249L812 249L807 248L804 248zM800 248L802 248L797 248L795 248zM790 247L793 247L788 247L785 247zM781 247L783 247L779 246L776 247zM772 246L775 246L770 246L768 246zM763 246L766 245L762 245L759 245zM755 245L758 245L753 245L751 245zM817 249L819 249L814 248L812 249zM807 248L809 248L805 248L802 248zM797 248L800 247L795 247L793 247zM788 247L790 247L786 246L783 247zM779 246L781 246L777 246L775 246zM770 246L773 246L768 245L766 245zM762 245L764 245L760 245L758 245zM753 245L756 244L752 244L749 244zM814 248L817 248L812 248L809 248zM805 248L807 247L802 247L800 247zM795 247L797 247L793 246L790 247zM786 246L788 246L784 246L781 246zM777 246L779 246L775 245L773 246zM768 245L771 245L767 245L764 245zM760 245L762 244L758 244L756 244zM822 248L824 248L819 248L817 248zM812 248L814 248L809 247L807 247zM802 247L805 247L800 247L797 247zM793 246L795 246L791 246L788 246zM784 246L786 246L782 245L779 246zM775 245L777 245L773 245L771 245zM767 245L769 245L765 244L762 244zM758 244L761 244L757 244L754 244zM819 248L821 248L816 247L814 248zM809 247L812 247L807 247L805 247zM800 247L802 246L798 246L795 246zM791 246L793 246L789 245L786 246zM782 245L784 245L780 245L777 245zM773 245L776 245L771 244L769 245zM765 244L767 244L763 244L761 244zM757 244L759 244L755 243L753 243zM816 247L819 247L814 247L812 247zM807 247L809 246L805 246L802 246zM798 246L800 246L795 246L793 246zM789 245L791 245L787 245L784 245zM780 245L782 245L778 244L776 245zM771 244L774 244L770 244L767 244zM763 244L766 244L762 243L759 244zM824 247L826 247L821 247L819 247zM814 247L816 247L812 246L809 246zM805 246L807 246L802 246L800 246zM795 246L798 245L793 245L791 245zM787 245L789 245L785 245L782 245zM778 244L780 244L776 244L774 244zM770 244L772 244L768 243L766 244zM762 243L764 243L760 243L758 243zM821 247L823 247L819 246L816 247zM812 246L814 246L809 246L807 246zM802 246L805 245L800 245L798 245zM793 245L796 245L791 245L789 245zM785 245L787 244L783 244L780 244zM776 244L778 244L774 244L772 244zM768 243L770 243L766 243L764 243zM760 243L762 243L758 243L756 243zM819 246L821 246L816 246L814 246zM809 246L811 246L807 245L805 245zM800 245L802 245L798 245L796 245zM791 245L794 244L789 244L787 244zM783 244L785 244L781 244L778 244zM774 244L777 243L773 243L770 243zM766 243L769 243L765 243L762 243zM816 246L818 246L814 245L811 246zM807 245L809 245L805 245L802 245zM798 245L800 245L796 244L794 244zM789 244L791 244L787 244L785 244zM781 244L783 243L779 243L777 243zM773 243L775 243L771 243L769 243zM765 243L767 242L763 242L761 242zM823 246L825 246L821 245L818 246zM814 245L816 245L811 245L809 245zM805 245L807 245L802 244L800 245zM796 244L798 244L794 244L791 244zM787 244L789 244L785 243L783 243zM779 243L781 243L777 243L775 243zM771 243L773 242L769 242L767 242zM763 242L765 242L761 242L759 242zM821 245L823 245L818 245L816 245zM811 245L814 245L809 244L807 245zM802 244L805 244L800 244L798 244zM794 244L796 244L792 243L789 244zM785 243L788 243L783 243L781 243zM777 243L779 243L775 242L773 242zM769 242L771 242L768 242L765 242zM818 245L820 245L816 244L814 245zM809 244L811 244L807 244L805 244zM800 244L802 244L798 243L796 244zM792 243L794 243L790 243L788 243zM783 243L786 243L782 242L779 243zM775 242L778 242L774 242L771 242zM768 242L770 242L766 241L764 242z"/><text transform="matrix(-0.155 -1.770 2.142 -1.156 271.8 735.1)">D7</text><text transform="matrix(-0.126 -1.440 1.942 -0.941 267.3 683.6)">D8</text><text transform="matrix(-0.105 -1.195 1.775 -0.781 263.6 641.2)">D1</text><text transform="matrix(-0.088 -1.008 1.635 -0.659 260.5 605.8)">D2</text><text transform="matrix(-0.075 -0.861 1.515 -0.563 257.9 575.8)">D3</text><text transform="matrix(-0.065 -0.744 1.412 -0.487 255.6 550.0)">D4</text><text transform="matrix(-0.057 -0.650 1.322 -0.425 253.7 527.5)">D5</text><text transform="matrix(-0.050 -0.572 1.243 -0.375 251.9 507.9)">D6</text><text transform="matrix(-0.044 -0.508 1.172 -0.333 250.4 490.5)">D7</text><text transform="matrix(-0.040 -0.453 1.109 -0.297 249.1 475.0)">D8</text><text transform="matrix(-0.036 -0.407 1.053 -0.267 247.8 461.1)">D1</text><text transform="matrix(-0.032 -0.368 1.002 -0.242 246.8 448.6)">D2</text><text transform="matrix(-0.029 -0.334 0.956 -0.220 245.8 437.3)">D3</text><text transform="matrix(-0.027 -0.305 0.914 -0.200 244.9 427.0)">D4</text><text transform="matrix(-0.024 -0.279 0.875 -0.184 244.0 417.6)">D5</text><text transform="matrix(-0.022 -0.257 0.839 -0.169 243.3 409.0)">D6</text><text transform="matrix(-0.021 -0.237 0.807 -0.156 242.6 401.0)">D7</text><text transform="matrix(-0.019 -0.219 0.776 -0.144 242.0 393.7)">D8</text><text transform="matrix(-0.018 -0.203 0.748 -0.134 241.4 386.9)">D1</text><text transform="matrix(-0.017 -0.189 0.722 -0.125 240.8 380.6)">D2</text><text transform="matrix(-0.015 -0.176 0.698 -0.116 240.3 374.7)">D3</text><text transform="matrix(-0.014 -0.165 0.675 -0.109 239.8 369.2)">D4</text><text transform="matrix(-0.014 -0.154 0.654 -0.102 239.4 364.0)">D5</text><text transform="matrix(-0.013 -0.145 0.634 -0.096 238.9 359.2)">D6</text><text transform="matrix(-0.012 -0.136 0.615 -0.090 238.5 354.7)">D7</text><text transform="matrix(-0.011 -0.129 0.597 -0.085 238.2 350.4)">D8</text><text transform="matrix(-0.011 -0.121 0.580 -0.080 237.8 346.4)">D1</text><text transform="matrix(-0.010 -0.115 0.565 -0.076 237.5 342.6)">D2</text><text transform="matrix(-0.010 -0.109 0.550 -0.072 237.2 339.0)">D3</text><text transform="matrix(-0.009 -0.103 0.535 -0.068 236.9 335.5)">D4</text><text transform="matrix(-0.347 -1.544 1.869 -1.009 336.4 700.2)">E7</text><text transform="matrix(-0.286 -1.273 1.716 -0.832 326.2 655.0)">E8</text><text transform="matrix(-0.240 -1.068 1.586 -0.698 317.7 617.4)">E1</text><text transform="matrix(-0.204 -0.908 1.474 -0.594 310.6 585.6)">E2</text><text transform="matrix(-0.176 -0.782 1.377 -0.512 304.5 558.5)">E3</text><text transform="matrix(-0.153 -0.680 1.291 -0.446 299.2 534.9)">E4</text><text transform="matrix(-0.134 -0.597 1.216 -0.391 294.6 514.4)">E5</text><text transform="matrix(-0.119 -0.529 1.149 -0.346 290.5 496.2)">E6</text><text transform="matrix(-0.106 -0.471 1.088 -0.309 286.9 480.1)">E7</text><text transform="matrix(-0.095 -0.423 1.034 -0.277 283.6 465.7)">E8</text><text transform="matrix(-0.086 -0.381 0.985 -0.250 280.7 452.8)">E1</text><text transform="matrix(-0.078 -0.345 0.941 -0.227 278.1 441.1)">E2</text><text transform="matrix(-0.071 -0.315 0.900 -0.207 275.7 430.5)">E3</text><text transform="matrix(-0.065 -0.288 0.862 -0.189 273.5 420.8)">E4</text><text transform="matrix(-0.059 -0.264 0.828 -0.174 271.5 411.9)">E5</text><text transform="matrix(-0.055 -0.243 0.796 -0.160 269.7 403.7)">E6</text><text transform="matrix(-0.051 -0.225 0.767 -0.148 268.0 396.1)">E7</text><text transform="matrix(-0.047 -0.208 0.739 -0.137 266.4 389.2)">E8</text><text transform="matrix(-0.044 -0.194 0.714 -0.128 264.9 382.7)">E1</text><text transform="matrix(-0.041 -0.181 0.690 -0.119 263.6 376.6)">E2</text><text transform="matrix(-0.038 -0.169 0.668 -0.111 262.3 371.0)">E3</text><text transform="matrix(-0.036 -0.158 0.647 -0.104 261.1 365.7)">E4</text><text transform="matrix(-0.033 -0.148 0.627 -0.098 260.0 360.8)">E5</text><text transform="matrix(-0.031 -0.139 0.609 -0.092 259.0 356.2)">E6</text><text transform="matrix(-0.030 -0.131 0.592 -0.087 258.0 351.8)">E7</text><text transform="matrix(-0.028 -0.124 0.575 -0.082 257.1 347.7)">E8</text><text transform="matrix(-0.026 -0.117 0.560 -0.077 256.2 343.8)">E1</text><text transform="matrix(-0.025 -0.111 0.545 -0.073 255.4 340.2)">E2</text><text transform="matrix(-0.024 -0.105 0.531 -0.069 254.6 336.7)">E3</text><text transform="matrix(-0.022 -0.100 0.518 -0.066 253.8 333.4)">E4</text><text transform="matrix(-0.021 -0.095 0.505 -0.063 253.1 330.3)">E5</text><text transform="matrix(-0.020 -0.090 0.493 -0.060 252.5 327.3)">E6</text><text transform="matrix(-0.019 -0.086 0.481 -0.057 251.8 324.4)">E7</text><text transform="matrix(-0.018 -0.082 0.471 -0.054 251.2 321.7)">E8</text><text transform="matrix(-0.018 -0.078 0.460 -0.052 250.6 319.1)">E1</text><text transform="matrix(-0.017 -0.075 0.450 -0.050 250.1 316.7)">E2</text><text transform="matrix(-0.016 -0.072 0.441 -0.048 249.6 314.3)">E3</text><text transform="matrix(-0.015 -0.069 0.431 -0.046 249.1 312.1)">E4</text><text transform="matrix(-0.015 -0.066 0.423 -0.044 248.6 309.9)">E5</text><text transform="matrix(-0.014 -0.063 0.414 -0.042 248.1 307.8)">E6</text><text transform="matrix(-0.014 -0.061 0.406 -0.040 247.6 305.8)">E7</text><text transform="matrix(-0.013 -0.058 0.398 -0.039 247.2 303.9)">E8</text><text transform="matrix(-0.013 -0.056 0.391 -0.037 246.8 302.1)">E1</text><text transform="matrix(-0.012 -0.054 0.383 -0.036 246.4 300.3)">E2</text><text transform="matrix(-0.012 -0.052 0.376 -0.035 246.0 298.6)">E3</text><text transform="matrix(-0.601 -1.659 1.781 -1.084 410.5 718.1)">F6</text><text transform="matrix(-0.492 -1.358 1.645 -0.888 392.9 669.7)">F7</text><text transform="matrix(-0.411 -1.133 1.528 -0.741 378.4 629.7)">F8</text><text transform="matrix(-0.348 -0.959 1.426 -0.628 366.2 596.1)">F1</text><text transform="matrix(-0.298 -0.823 1.336 -0.538 355.9 567.4)">F2</text><text transform="matrix(-0.259 -0.713 1.256 -0.467 346.9 542.7)">F3</text><text transform="matrix(-0.226 -0.624 1.185 -0.409 339.1 521.2)">F4</text><text transform="matrix(-0.200 -0.551 1.122 -0.361 332.2 502.2)">F5</text><text transform="matrix(-0.178 -0.490 1.065 -0.321 326.2 485.5)">F6</text><text transform="matrix(-0.159 -0.438 1.013 -0.288 320.7 470.5)">F7</text><text transform="matrix(-0.143 -0.395 0.967 -0.259 315.9 457.1)">F8</text><text transform="matrix(-0.129 -0.357 0.924 -0.235 311.5 445.0)">F1</text><text transform="matrix(-0.118 -0.325 0.885 -0.213 307.5 434.0)">F2</text><text transform="matrix(-0.108 -0.297 0.849 -0.195 303.9 424.0)">F3</text><text transform="matrix(-0.099 -0.272 0.815 -0.179 300.5 414.8)">F4</text><text transform="matrix(-0.091 -0.250 0.785 -0.165 297.5 406.4)">F5</text><text transform="matrix(-0.084 -0.231 0.756 -0.152 294.7 398.7)">F6</text><text transform="matrix(-0.078 -0.214 0.730 -0.141 292.1 391.5)">F7</text><text transform="matrix(-0.072 -0.199 0.705 -0.131 289.7 384.8)">F8</text><text transform="matrix(-0.067 -0.185 0.682 -0.122 287.4 378.7)">F1</text><text transform="matrix(-0.063 -0.173 0.660 -0.114 285.3 372.9)">F2</text><text transform="matrix(-0.059 -0.161 0.640 -0.107 283.4 367.5)">F3</text><text transform="matrix(-0.055 -0.151 0.621 -0.100 281.6 362.5)">F4</text><text transform="matrix(-0.052 -0.142 0.603 -0.094 279.8 357.7)">F5</text><text transform="matrix(-0.049 -0.134 0.586 -0.088 278.2 353.3)">F6</text><text transform="matrix(-0.046 -0.126 0.569 -0.083 276.7 349.1)">F7</text><text transform="matrix(-0.043 -0.119 0.554 -0.079 275.3 345.1)">F8</text><text transform="matrix(-0.041 -0.113 0.540 -0.075 273.9 341.4)">F1</text><text transform="matrix(-0.039 -0.107 0.526 -0.071 272.6 337.8)">F2</text><text transform="matrix(-0.037 -0.101 0.513 -0.067 271.4 334.5)">F3</text><text transform="matrix(-0.035 -0.096 0.501 -0.064 270.3 331.3)">F4</text><text transform="matrix(-0.033 -0.092 0.489 -0.061 269.2 328.3)">F5</text><text transform="matrix(-0.032 -0.087 0.478 -0.058 268.1 325.4)">F6</text><text transform="matrix(-0.030 -0.083 0.467 -0.055 267.1 322.6)">F7</text><text transform="matrix(-0.029 -0.079 0.457 -0.053 266.2 320.0)">F8</text><text transform="matrix(-0.028 -0.076 0.447 -0.050 265.3 317.5)">F1</text><text transform="matrix(-0.026 -0.073 0.437 -0.048 264.4 315.1)">F2</text><text transform="matrix(-0.025 -0.070 0.428 -0.046 263.6 312.8)">F3</text><text transform="matrix(-0.024 -0.067 0.420 -0.044 262.8 310.6)">F4</text><text transform="matrix(-0.023 -0.064 0.411 -0.042 262.0 308.5)">F5</text><text transform="matrix(-0.022 -0.061 0.403 -0.041 261.3 306.5)">F6</text><text transform="matrix(-0.021 -0.059 0.396 -0.039 260.6 304.6)">F7</text><text transform="matrix(-0.021 -0.057 0.388 -0.038 259.9 302.7)">F8</text><text transform="matrix(-0.894 -1.787 1.674 -1.167 490.3 737.4)">G5</text><text transform="matrix(-0.727 -1.453 1.561 -0.949 464.3 685.4)">G6</text><text transform="matrix(-0.602 -1.205 1.459 -0.788 442.9 642.7)">G7</text><text transform="matrix(-0.508 -1.015 1.369 -0.664 425.1 607.1)">G8</text><text transform="matrix(-0.433 -0.867 1.288 -0.567 410.0 576.8)">G1</text><text transform="matrix(-0.374 -0.749 1.216 -0.490 397.0 550.8)">G2</text><text transform="matrix(-0.327 -0.653 1.151 -0.428 385.7 528.3)">G3</text><text transform="matrix(-0.288 -0.575 1.092 -0.377 375.8 508.5)">G4</text><text transform="matrix(-0.255 -0.510 1.039 -0.334 367.1 491.0)">G5</text><text transform="matrix(-0.228 -0.455 0.990 -0.299 359.3 475.5)">G6</text><text transform="matrix(-0.205 -0.409 0.946 -0.268 352.3 461.6)">G7</text><text transform="matrix(-0.185 -0.370 0.905 -0.243 346.0 449.0)">G8</text><text transform="matrix(-0.168 -0.335 0.868 -0.220 340.4 437.7)">G1</text><text transform="matrix(-0.153 -0.306 0.833 -0.201 335.2 427.3)">G2</text><text transform="matrix(-0.140 -0.280 0.802 -0.184 330.5 417.9)">G3</text><text transform="matrix(-0.129 -0.257 0.772 -0.169 326.1 409.2)">G4</text><text transform="matrix(-0.119 -0.237 0.745 -0.156 322.2 401.2)">G5</text><text transform="matrix(-0.110 -0.220 0.719 -0.145 318.5 393.9)">G6</text><text transform="matrix(-0.102 -0.204 0.695 -0.134 315.1 387.1)">G7</text><text transform="matrix(-0.095 -0.189 0.673 -0.125 311.9 380.7)">G8</text><text transform="matrix(-0.088 -0.177 0.652 -0.116 308.9 374.8)">G1</text><text transform="matrix(-0.083 -0.165 0.632 -0.109 306.2 369.3)">G2</text><text transform="matrix(-0.077 -0.155 0.613 -0.102 303.6 364.1)">G3</text><text transform="matrix(-0.073 -0.145 0.596 -0.096 301.2 359.3)">G4</text><text transform="matrix(-0.068 -0.137 0.579 -0.090 298.9 354.8)">G5</text><text transform="matrix(-0.064 -0.129 0.563 -0.085 296.8 350.5)">G6</text><text transform="matrix(-0.061 -0.122 0.549 -0.080 294.7 346.4)">G7</text><text transform="matrix(-0.057 -0.115 0.534 -0.076 292.8 342.6)">G8</text><text transform="matrix(-0.054 -0.109 0.521 -0.072 291.0 339.0)">G1</text><text transform="matrix(-0.052 -0.103 0.508 -0.068 289.3 335.6)">G2</text><text transform="matrix(-0.049 -0.098 0.496 -0.065 287.7 332.4)">G3</text><text transform="matrix(-0.047 -0.093 0.485 -0.062 286.2 329.3)">G4</text><text transform="matrix(-0.044 -0.089 0.474 -0.059 284.7 326.3)">G5</text><text transform="matrix(-0.042 -0.085 0.463 -0.056 283.3 323.5)">G6</text><text transform="matrix(-0.040 -0.081 0.453 -0.054 282.0 320.9)">G7</text><text transform="matrix(-0.039 -0.077 0.443 -0.051 280.7 318.3)">G8</text><text transform="matrix(-0.037 -0.074 0.434 -0.049 279.5 315.9)">G1</text><text transform="matrix(-0.035 -0.071 0.425 -0.047 278.3 313.6)">G2</text><text transform="matrix(-0.034 -0.068 0.417 -0.045 277.2 311.3)">G3</text><text transform="matrix(-0.032 -0.065 0.408 -0.043 276.1 309.2)">G4</text><text transform="matrix(-0.031 -0.062 0.400 -0.041 275.1 307.2)">G5</text><text transform="matrix(-0.030 -0.060 0.393 -0.040 274.1 305.2)">G6</text><text transform="matrix(-0.994 -1.558 1.459 -1.018 540.7 702.2)">H5</text><text transform="matrix(-0.819 -1.283 1.379 -0.839 511.6 656.6)">H6</text><text transform="matrix(-0.686 -1.075 1.303 -0.703 487.4 618.7)">H7</text><text transform="matrix(-0.583 -0.914 1.234 -0.598 467.0 586.7)">H8</text><text transform="matrix(-0.502 -0.787 1.170 -0.515 449.6 559.4)">H1</text><text transform="matrix(-0.436 -0.684 1.112 -0.448 434.5 535.7)">H2</text><text transform="matrix(-0.383 -0.600 1.058 -0.393 421.3 515.0)">H3</text><text transform="matrix(-0.339 -0.531 1.009 -0.348 409.7 496.8)">H4</text><text transform="matrix(-0.302 -0.473 0.964 -0.310 399.3 480.6)">H5</text><text transform="matrix(-0.271 -0.424 0.923 -0.278 390.1 466.2)">H6</text><text transform="matrix(-0.244 -0.383 0.885 -0.251 381.8 453.2)">H7</text><text transform="matrix(-0.221 -0.347 0.850 -0.228 374.3 441.4)">H8</text><text transform="matrix(-0.201 -0.316 0.817 -0.207 367.5 430.8)">H1</text><text transform="matrix(-0.184 -0.289 0.787 -0.190 361.3 421.0)">H2</text><text transform="matrix(-0.169 -0.265 0.758 -0.174 355.6 412.1)">H3</text><text transform="matrix(-0.156 -0.244 0.732 -0.161 350.4 403.9)">H4</text><text transform="matrix(-0.144 -0.225 0.708 -0.148 345.6 396.3)">H5</text><text transform="matrix(-0.133 -0.209 0.685 -0.138 341.1 389.3)">H6</text><text transform="matrix(-0.124 -0.194 0.663 -0.128 337.0 382.8)">H7</text><text transform="matrix(-0.115 -0.181 0.643 -0.119 333.1 376.8)">H8</text><text transform="matrix(-0.108 -0.169 0.624 -0.111 329.5 371.1)">H1</text><text transform="matrix(-0.101 -0.158 0.605 -0.104 326.1 365.9)">H2</text><text transform="matrix(-0.095 -0.148 0.588 -0.098 323.0 360.9)">H3</text><text transform="matrix(-0.089 -0.140 0.572 -0.092 320.0 356.3)">H4</text><text transform="matrix(-0.084 -0.131 0.557 -0.087 317.2 351.9)">H5</text><text transform="matrix(-0.079 -0.124 0.543 -0.082 314.6 347.8)">H6</text><text transform="matrix(-0.075 -0.117 0.529 -0.077 312.1 343.9)">H7</text><text transform="matrix(-0.071 -0.111 0.516 -0.073 309.8 340.2)">H8</text><text transform="matrix(-0.067 -0.105 0.503 -0.070 307.6 336.7)">H1</text><text transform="matrix(-0.064 -0.100 0.491 -0.066 305.4 333.4)">H2</text><text transform="matrix(-0.060 -0.095 0.480 -0.063 303.4 330.3)">H3</text><text transform="matrix(-0.058 -0.090 0.469 -0.060 301.5 327.3)">H4</text><text transform="matrix(-0.055 -0.086 0.459 -0.057 299.7 324.5)">H5</text><text transform="matrix(-0.052 -0.082 0.449 -0.054 298.0 321.8)">H6</text><text transform="matrix(-0.050 -0.078 0.440 -0.052 296.4 319.2)">H7</text><text transform="matrix(-0.048 -0.075 0.430 -0.050 294.8 316.7)">H8</text><text transform="matrix(-0.046 -0.072 0.422 -0.048 293.3 314.3)">H1</text><text transform="matrix(-0.044 -0.069 0.413 -0.046 291.8 312.1)">H2</text><text transform="matrix(-0.042 -0.066 0.405 -0.044 290.4 309.9)">H3</text><text transform="matrix(-1.299 -1.674 1.339 -1.094 622.7 720.3)">A4</text><text transform="matrix(-1.063 -1.370 1.284 -0.895 584.8 671.4)">A5</text><text transform="matrix(-0.885 -1.142 1.227 -0.746 553.5 631.1)">A6</text><text transform="matrix(-0.749 -0.966 1.171 -0.632 527.3 597.2)">A7</text><text transform="matrix(-0.642 -0.828 1.118 -0.542 504.9 568.4)">A8</text><text transform="matrix(-0.556 -0.717 1.067 -0.470 485.6 543.5)">A1</text><text transform="matrix(-0.487 -0.628 1.020 -0.411 468.8 521.9)">A2</text><text transform="matrix(-0.430 -0.554 0.976 -0.363 454.1 502.8)">A3</text><text transform="matrix(-0.382 -0.492 0.935 -0.323 441.0 486.0)">A4</text><text transform="matrix(-0.342 -0.440 0.898 -0.289 429.4 471.0)">A5</text><text transform="matrix(-0.307 -0.396 0.862 -0.260 418.9 457.5)">A6</text><text transform="matrix(-0.278 -0.359 0.829 -0.235 409.5 445.3)">A7</text><text transform="matrix(-0.253 -0.326 0.799 -0.214 400.9 434.3)">A8</text><text transform="matrix(-0.231 -0.298 0.770 -0.196 393.1 424.3)">A1</text><text transform="matrix(-0.212 -0.273 0.744 -0.179 386.0 415.1)">A2</text><text transform="matrix(-0.195 -0.251 0.719 -0.165 379.4 406.6)">A3</text><text transform="matrix(-0.180 -0.232 0.695 -0.152 373.4 398.8)">A4</text><text transform="matrix(-0.166 -0.214 0.673 -0.141 367.8 391.7)">A5</text><text transform="matrix(-0.154 -0.199 0.652 -0.131 362.7 385.0)">A6</text><text transform="matrix(-0.144 -0.185 0.633 -0.122 357.9 378.8)">A7</text><text transform="matrix(-0.134 -0.173 0.615 -0.114 353.4 373.0)">A8</text><text transform="matrix(-0.126 -0.162 0.597 -0.107 349.2 367.6)">A1</text><text transform="matrix(-0.118 -0.152 0.581 -0.100 345.3 362.6)">A2</text><text transform="matrix(-0.111 -0.143 0.565 -0.094 341.6 357.8)">A3</text><text transform="matrix(-0.104 -0.134 0.550 -0.089 338.1 353.4)">A4</text><text transform="matrix(-0.098 -0.126 0.536 -0.084 334.9 349.2)">A5</text><text transform="matrix(-0.093 -0.119 0.523 -0.079 331.8 345.2)">A6</text><text transform="matrix(-0.088 -0.113 0.510 -0.075 328.9 341.4)">A7</text><text transform="matrix(-0.083 -0.107 0.498 -0.071 326.1 337.9)">A8</text><text transform="matrix(-0.079 -0.102 0.486 -0.067 323.5 334.5)">A1</text><text transform="matrix(-0.075 -0.096 0.475 -0.064 321.0 331.3)">A2</text><text transform="matrix(-0.071 -0.092 0.465 -0.061 318.7 328.3)">A3</text><text transform="matrix(-0.068 -0.087 0.455 -0.058 316.4 325.4)">A4</text><text transform="matrix(-0.065 -0.083 0.445 -0.055 314.3 322.7)">A5</text><text transform="matrix(-0.062 -0.080 0.436 -0.053 312.3 320.0)">A6</text><text transform="matrix(-0.059 -0.076 0.427 -0.050 310.3 317.5)">A7</text><text transform="matrix(-0.056 -0.073 0.418 -0.048 308.5 315.1)">A8</text><text transform="matrix(-0.054 -0.070 0.410 -0.046 306.7 312.8)">A1</text><text transform="matrix(-1.648 -1.805 1.195 -1.179 711.1 739.8)">B3</text><text transform="matrix(-1.339 -1.466 1.172 -0.958 663.1 687.3)">B4</text><text transform="matrix(-1.109 -1.214 1.138 -0.794 623.8 644.2)">B5</text><text transform="matrix(-0.934 -1.022 1.099 -0.669 591.0 608.3)">B6</text><text transform="matrix(-0.797 -0.872 1.058 -0.571 563.2 577.8)">B7</text><text transform="matrix(-0.688 -0.753 1.017 -0.493 539.3 551.7)">B8</text><text transform="matrix(-0.600 -0.657 0.977 -0.430 518.6 529.0)">B1</text><text transform="matrix(-0.528 -0.578 0.939 -0.379 500.4 509.1)">B2</text><text transform="matrix(-0.468 -0.512 0.904 -0.336 484.4 491.6)">B3</text><text transform="matrix(-0.418 -0.457 0.870 -0.300 470.1 476.0)">B4</text><text transform="matrix(-0.375 -0.411 0.838 -0.270 457.3 462.0)">B5</text><text transform="matrix(-0.339 -0.371 0.807 -0.244 445.8 449.4)">B6</text><text transform="matrix(-0.308 -0.337 0.779 -0.221 435.4 438.0)">B7</text><text transform="matrix(-0.280 -0.307 0.753 -0.202 425.9 427.6)">B8</text><text transform="matrix(-0.257 -0.281 0.728 -0.185 417.3 418.1)">B1</text><text transform="matrix(-0.236 -0.258 0.704 -0.170 409.3 409.4)">B2</text><text transform="matrix(-0.217 -0.238 0.682 -0.157 402.0 401.4)">B3</text><text transform="matrix(-0.201 -0.220 0.661 -0.145 395.3 394.1)">B4</text><text transform="matrix(-0.187 -0.204 0.641 -0.135 389.0 387.2)">B5</text><text transform="matrix(-0.174 -0.190 0.623 -0.125 383.2 380.9)">B6</text><text transform="matrix(-0.162 -0.177 0.605 -0.117 377.8 374.9)">B7</text><text transform="matrix(-0.151 -0.166 0.588 -0.109 372.8 369.4)">B8</text><text transform="matrix(-0.142 -0.155 0.572 -0.102 368.0 364.2)">B1</text><text transform="matrix(-0.133 -0.146 0.557 -0.096 363.6 359.4)">B2</text><text transform="matrix(-0.125 -0.137 0.543 -0.090 359.5 354.8)">B3</text><text transform="matrix(-0.118 -0.129 0.530 -0.085 355.5 350.5)">B4</text><text transform="matrix(-0.111 -0.122 0.517 -0.081 351.8 346.5)">B5</text><text transform="matrix(-0.105 -0.115 0.504 -0.076 348.3 342.7)">B6</text><text transform="matrix(-0.100 -0.109 0.492 -0.072 345.0 339.1)">B7</text><text transform="matrix(-0.094 -0.103 0.481 -0.068 341.9 335.6)">B8</text><text transform="matrix(-0.090 -0.098 0.470 -0.065 338.9 332.4)">B1</text><text transform="matrix(-0.085 -0.093 0.460 -0.062 336.1 329.3)">B2</text><text transform="matrix(-0.081 -0.089 0.450 -0.059 333.4 326.4)">B3</text><text transform="matrix(-0.077 -0.085 0.441 -0.056 330.9 323.6)">B4</text><text transform="matrix(-0.074 -0.081 0.432 -0.054 328.4 320.9)">B5</text><text transform="matrix(-0.071 -0.077 0.423 -0.051 326.1 318.4)">B6</text><text transform="matrix(-1.653 -1.572 1.041 -1.027 747.1 704.3)">C3</text><text transform="matrix(-1.360 -1.294 1.035 -0.846 698.7 658.3)">C4</text><text transform="matrix(-1.139 -1.083 1.016 -0.708 658.5 620.1)">C5</text><text transform="matrix(-0.968 -0.920 0.990 -0.602 624.6 587.8)">C6</text><text transform="matrix(-0.832 -0.792 0.960 -0.518 595.7 560.3)">C7</text><text transform="matrix(-0.724 -0.688 0.929 -0.451 570.7 536.5)">C8</text><text transform="matrix(-0.635 -0.604 0.898 -0.395 548.8 515.7)">C1</text><text transform="matrix(-0.561 -0.534 0.868 -0.350 529.5 497.4)">C2</text><text transform="matrix(-0.500 -0.475 0.839 -0.312 512.4 481.1)">C3</text><text transform="matrix(-0.448 -0.426 0.810 -0.280 497.2 466.6)">C4</text><text transform="matrix(-0.404 -0.384 0.783 -0.252 483.5 453.6)">C5</text><text transform="matrix(-0.366 -0.348 0.758 -0.229 471.0 441.8)">C6</text><text transform="matrix(-0.333 -0.317 0.733 -0.208 459.8 431.1)">C7</text><text transform="matrix(-0.305 -0.290 0.710 -0.190 449.5 421.3)">C8</text><text transform="matrix(-0.279 -0.266 0.688 -0.175 440.1 412.3)">C1</text><text transform="matrix(-0.257 -0.245 0.668 -0.161 431.4 404.1)">C2</text><text transform="matrix(-0.238 -0.226 0.648 -0.149 423.5 396.5)">C3</text><text transform="matrix(-0.220 -0.210 0.629 -0.138 416.1 389.5)">C4</text><text transform="matrix(-0.205 -0.195 0.612 -0.128 409.2 383.0)">C5</text><text transform="matrix(-0.191 -0.181 0.595 -0.120 402.9 376.9)">C6</text><text transform="matrix(-0.178 -0.169 0.579 -0.112 396.9 371.3)">C7</text><text transform="matrix(-0.167 -0.159 0.564 -0.105 391.3 366.0)">C8</text><text transform="matrix(-0.156 -0.149 0.549 -0.098 386.1 361.0)">C1</text><text transform="matrix(-0.147 -0.140 0.536 -0.092 381.2 356.4)">C2</text><text transform="matrix(-0.138 -0.132 0.522 -0.087 376.6 352.0)">C3</text><text transform="matrix(-0.131 -0.124 0.510 -0.082 372.3 347.8)">C4</text><text transform="matrix(-0.123 -0.117 0.498 -0.078 368.2 344.0)">C5</text><text transform="matrix(-0.117 -0.111 0.487 -0.073 364.3 340.3)">C6</text><text transform="matrix(-0.111 -0.105 0.476 -0.070 360.7 336.8)">C7</text><text transform="matrix(-0.105 -0.100 0.465 -0.066 357.2 333.5)">C8</text><text transform="matrix(-0.100 -0.095 0.455 -0.063 353.9 330.3)">C1</text><text transform="matrix(-0.095 -0.090 0.446 -0.060 350.7 327.3)">C2</text><text transform="matrix(-0.091 -0.086 0.436 -0.057 347.7 324.5)">C3</text><text transform="matrix(-2.011 -1.690 0.887 -1.104 837.2 722.5)">D2</text><text transform="matrix(-1.643 -1.382 0.915 -0.903 778.5 673.2)">D3</text><text transform="matrix(-1.368 -1.150 0.920 -0.752 730.2 632.5)">D4</text><text transform="matrix(-1.157 -0.973 0.912 -0.636 689.6 598.4)">D5</text><text transform="matrix(-0.991 -0.833 0.896 -0.545 655.0 569.4)">D6</text><text transform="matrix(-0.858 -0.722 0.876 -0.473 625.3 544.3)">D7</text><text transform="matrix(-0.751 -0.631 0.853 -0.413 599.4 522.6)">D8</text><text transform="matrix(-0.662 -0.557 0.829 -0.365 576.6 503.4)">D1</text><text transform="matrix(-0.588 -0.495 0.804 -0.324 556.5 486.5)">D2</text><text transform="matrix(-0.526 -0.442 0.780 -0.290 538.5 471.4)">D3</text><text transform="matrix(-0.473 -0.398 0.757 -0.261 522.4 457.9)">D4</text><text transform="matrix(-0.428 -0.360 0.734 -0.236 507.9 445.7)">D5</text><text transform="matrix(-0.389 -0.327 0.712 -0.215 494.7 434.6)">D6</text><text transform="matrix(-0.355 -0.299 0.691 -0.196 482.8 424.5)">D7</text><text transform="matrix(-0.326 -0.274 0.671 -0.180 471.8 415.3)">D8</text><text transform="matrix(-0.299 -0.252 0.652 -0.166 461.7 406.8)">D1</text><text transform="matrix(-0.276 -0.232 0.634 -0.153 452.4 399.0)">D2</text><text transform="matrix(-0.256 -0.215 0.616 -0.142 443.9 391.8)">D3</text><text transform="matrix(-0.238 -0.200 0.600 -0.132 435.9 385.1)">D4</text><text transform="matrix(-0.221 -0.186 0.584 -0.122 428.5 378.9)">D5</text><text transform="matrix(-0.206 -0.173 0.569 -0.114 421.6 373.1)">D6</text><text transform="matrix(-0.193 -0.162 0.554 -0.107 415.2 367.7)">D7</text><text transform="matrix(-0.181 -0.152 0.541 -0.100 409.2 362.7)">D8</text><text transform="matrix(-0.170 -0.143 0.527 -0.094 403.5 357.9)">D1</text><text transform="matrix(-0.160 -0.134 0.515 -0.089 398.2 353.4)">D2</text><text transform="matrix(-0.151 -0.127 0.503 -0.084 393.2 349.2)">D3</text><text transform="matrix(-0.142 -0.120 0.491 -0.079 388.4 345.3)">D4</text><text transform="matrix(-0.135 -0.113 0.480 -0.075 384.0 341.5)">D5</text><text transform="matrix(-0.128 -0.107 0.470 -0.071 379.8 337.9)">D6</text><text transform="matrix(-0.121 -0.102 0.460 -0.067 375.7 334.6)">D7</text><text transform="matrix(-1.963 -1.479 0.776 -0.966 863.9 689.2)">E2</text><text transform="matrix(-1.625 -1.224 0.811 -0.800 806.3 645.8)">E3</text><text transform="matrix(-1.367 -1.029 0.824 -0.673 758.3 609.6)">E4</text><text transform="matrix(-1.166 -0.878 0.824 -0.575 717.5 578.9)">E5</text><text transform="matrix(-1.006 -0.758 0.815 -0.496 682.6 552.6)">E6</text><text transform="matrix(-0.877 -0.661 0.802 -0.433 652.3 529.8)">E7</text><text transform="matrix(-0.771 -0.581 0.785 -0.381 625.8 509.8)">E8</text><text transform="matrix(-0.684 -0.515 0.767 -0.338 602.3 492.1)">E1</text><text transform="matrix(-0.610 -0.459 0.748 -0.301 581.5 476.4)">E2</text><text transform="matrix(-0.548 -0.413 0.728 -0.271 562.9 462.4)">E3</text><text transform="matrix(-0.495 -0.373 0.709 -0.245 546.1 449.7)">E4</text><text transform="matrix(-0.449 -0.338 0.690 -0.222 530.9 438.3)">E5</text><text transform="matrix(-0.409 -0.308 0.671 -0.202 517.1 427.9)">E6</text><text transform="matrix(-0.374 -0.282 0.653 -0.185 504.4 418.4)">E7</text><text transform="matrix(-0.344 -0.259 0.636 -0.170 492.9 409.7)">E8</text><text transform="matrix(-0.317 -0.239 0.619 -0.157 482.2 401.6)">E1</text><text transform="matrix(-0.293 -0.221 0.603 -0.145 472.4 394.2)">E2</text><text transform="matrix(-0.272 -0.205 0.587 -0.135 463.3 387.4)">E3</text><text transform="matrix(-0.253 -0.190 0.572 -0.125 454.8 381.0)">E4</text><text transform="matrix(-0.236 -0.178 0.558 -0.117 446.9 375.1)">E5</text><text transform="matrix(-0.220 -0.166 0.544 -0.109 439.6 369.5)">E6</text><text transform="matrix(-0.206 -0.155 0.531 -0.103 432.7 364.3)">E7</text><text transform="matrix(-0.194 -0.146 0.519 -0.096 426.2 359.5)">E8</text><text transform="matrix(-0.182 -0.137 0.507 -0.091 420.2 354.9)">E1</text><text transform="matrix(-0.172 -0.129 0.495 -0.085 414.5 350.6)">E2</text><text transform="matrix(-0.162 -0.122 0.484 -0.081 409.1 346.6)">E3</text><text transform="matrix(-0.153 -0.115 0.474 -0.076 404.0 342.7)">E4</text><text transform="matrix(-1.600 -1.091 0.723 -0.714 831.0 621.4)">F3</text><text transform="matrix(-1.358 -0.927 0.742 -0.606 783.5 589.0)">F4</text><text transform="matrix(-1.168 -0.797 0.748 -0.521 742.9 561.2)">F5</text><text transform="matrix(-1.014 -0.692 0.745 -0.453 707.7 537.3)">F6</text><text transform="matrix(-0.890 -0.607 0.737 -0.398 677.1 516.4)">F7</text><text transform="matrix(-0.786 -0.536 0.725 -0.352 650.1 498.0)">F8</text><text transform="matrix(-0.700 -0.478 0.712 -0.313 626.2 481.6)">F1</text><text transform="matrix(-0.627 -0.428 0.697 -0.281 604.8 467.1)">F2</text><text transform="matrix(-0.565 -0.386 0.681 -0.253 585.6 453.9)">F3</text><text transform="matrix(-0.512 -0.349 0.665 -0.229 568.2 442.1)">F4</text><text transform="matrix(-0.466 -0.318 0.649 -0.209 552.5 431.4)">F5</text><text transform="matrix(-0.426 -0.291 0.633 -0.191 538.1 421.5)">F6</text><text transform="matrix(-0.391 -0.267 0.618 -0.175 524.9 412.6)">F7</text><text transform="matrix(-0.360 -0.246 0.603 -0.161 512.8 404.3)">F8</text><text transform="matrix(-0.332 -0.227 0.588 -0.149 501.7 396.7)">F1</text><text transform="matrix(-0.308 -0.210 0.574 -0.138 491.3 389.7)">F2</text><text transform="matrix(-0.286 -0.195 0.560 -0.129 481.8 383.1)">F3</text><text transform="matrix(-0.267 -0.182 0.547 -0.120 472.8 377.0)">F4</text><text transform="matrix(-0.249 -0.170 0.534 -0.112 464.5 371.4)">F5</text><text transform="matrix(-0.233 -0.159 0.522 -0.105 456.8 366.1)">F6</text><text transform="matrix(-0.219 -0.149 0.510 -0.098 449.5 361.1)">F7</text><text transform="matrix(-0.205 -0.140 0.499 -0.093 442.6 356.4)">F8</text><text transform="matrix(-1.571 -0.979 0.649 -0.641 853.2 599.6)">G3</text><text transform="matrix(-1.345 -0.839 0.672 -0.549 806.3 570.3)">G4</text><text transform="matrix(-1.165 -0.726 0.681 -0.475 765.9 545.2)">G5</text><text transform="matrix(-1.018 -0.635 0.683 -0.416 730.8 523.3)">G6</text><text transform="matrix(-0.897 -0.559 0.679 -0.367 699.9 504.1)">G7</text><text transform="matrix(-0.797 -0.497 0.672 -0.326 672.6 487.1)">G8</text><text transform="matrix(-0.713 -0.444 0.662 -0.291 648.3 471.9)">G1</text><text transform="matrix(-0.641 -0.400 0.651 -0.262 626.5 458.3)">G2</text><text transform="matrix(-0.580 -0.361 0.638 -0.237 606.8 446.0)">G3</text><text transform="matrix(-0.527 -0.328 0.625 -0.216 589.0 434.9)">G4</text><text transform="matrix(-0.481 -0.300 0.612 -0.197 572.8 424.8)">G5</text><text transform="matrix(-0.440 -0.275 0.598 -0.181 557.9 415.6)">G6</text><text transform="matrix(-0.405 -0.253 0.585 -0.166 544.3 407.1)">G7</text><text transform="matrix(-0.374 -0.233 0.572 -0.153 531.8 399.2)">G8</text><text transform="matrix(-0.346 -0.216 0.559 -0.142 520.2 392.0)">G1</text><text transform="matrix(-0.321 -0.200 0.547 -0.132 509.4 385.3)">G2</text><text transform="matrix(-0.299 -0.186 0.535 -0.123 499.4 379.1)">G3</text><text transform="matrix(-0.279 -0.174 0.523 -0.115 490.1 373.3)">G4</text><text transform="matrix(-1.328 -0.762 0.611 -0.499 826.9 553.5)">H4</text><text transform="matrix(-1.157 -0.664 0.624 -0.435 786.9 530.5)">H5</text><text transform="matrix(-1.018 -0.584 0.629 -0.383 751.9 510.4)">H6</text><text transform="matrix(-0.902 -0.517 0.629 -0.339 721.0 492.7)">H7</text><text transform="matrix(-0.804 -0.462 0.624 -0.303 693.5 476.9)">H8</text><text transform="matrix(-0.722 -0.414 0.618 -0.272 668.9 462.8)">H1</text><text transform="matrix(-0.652 -0.374 0.609 -0.245 646.8 450.1)">H2</text><text transform="matrix(-0.591 -0.339 0.599 -0.223 626.8 438.6)">H3</text><text transform="matrix(-0.539 -0.309 0.589 -0.203 608.6 428.2)">H4</text><text transform="matrix(-0.493 -0.283 0.578 -0.186 592.0 418.6)">H5</text><text transform="matrix(-0.453 -0.260 0.566 -0.171 576.7 409.9)">H6</text><text transform="matrix(-0.417 -0.239 0.555 -0.158 562.7 401.8)">H7</text><text transform="matrix(-0.386 -0.221 0.544 -0.146 549.8 394.4)">H8</text><text transform="matrix(-0.358 -0.205 0.533 -0.135 537.8 387.5)">H1</text><text transform="matrix(-1.309 -0.696 0.558 -0.456 845.7 538.1)">A4</text><text transform="matrix(-1.148 -0.610 0.573 -0.400 806.2 517.1)">A5</text><text transform="matrix(-1.014 -0.539 0.581 -0.353 771.4 498.6)">A6</text><text transform="matrix(-0.903 -0.480 0.583 -0.315 740.5 482.1)">A7</text><text transform="matrix(-0.809 -0.430 0.582 -0.282 713.0 467.5)">A8</text><text transform="matrix(-0.728 -0.387 0.577 -0.254 688.2 454.3)">A1</text><text transform="matrix(-0.660 -0.351 0.571 -0.230 665.8 442.4)">A2</text><text transform="matrix(-0.600 -0.319 0.564 -0.210 645.5 431.7)">A3</text><text transform="matrix(-0.549 -0.292 0.555 -0.192 627.0 421.8)">A4</text><text transform="matrix(-0.503 -0.267 0.546 -0.176 610.1 412.8)">A5</text><text transform="matrix(-0.463 -0.246 0.537 -0.162 594.5 404.5)">A6</text><text transform="matrix(-0.428 -0.227 0.527 -0.150 580.2 396.9)">A7</text><text transform="matrix(-1.136 -0.562 0.528 -0.368 823.9 504.7)">B5</text><text transform="matrix(-1.008 -0.499 0.538 -0.327 789.4 487.6)">B6</text><text transform="matrix(-0.901 -0.446 0.542 -0.293 758.7 472.4)">B7</text><text transform="matrix(-0.810 -0.401 0.543 -0.263 731.1 458.7)">B8</text><text transform="matrix(-0.733 -0.363 0.541 -0.238 706.2 446.4)">B1</text><text transform="matrix(-0.666 -0.330 0.537 -0.216 683.7 435.2)">B2</text><text transform="matrix(-0.607 -0.301 0.532 -0.198 663.2 425.1)">B3</text><text transform="matrix(-0.556 -0.275 0.525 -0.181 644.5 415.8)">B4</text><text transform="matrix(-0.512 -0.253 0.518 -0.167 627.2 407.3)">B5</text><text transform="matrix(-0.472 -0.234 0.510 -0.154 611.4 399.4)">B6</text><text transform="matrix(-1.122 -0.520 0.489 -0.341 840.3 493.2)">C5</text><text transform="matrix(-1.001 -0.464 0.500 -0.304 806.2 477.4)">C6</text><text transform="matrix(-0.898 -0.416 0.506 -0.273 775.6 463.2)">C7</text><text transform="matrix(-0.810 -0.375 0.508 -0.246 748.1 450.5)">C8</text><text transform="matrix(-0.735 -0.341 0.508 -0.224 723.2 439.0)">C1</text><text transform="matrix(-0.670 -0.310 0.506 -0.204 700.5 428.5)">C2</text><text transform="matrix(-0.613 -0.284 0.502 -0.187 679.9 418.9)">C3</text><text transform="matrix(-0.563 -0.261 0.497 -0.171 660.9 410.1)">C4</text><text transform="matrix(-0.518 -0.240 0.491 -0.158 643.5 402.0)">C5</text><text transform="matrix(-0.992 -0.432 0.465 -0.283 821.7 467.9)">D6</text><text transform="matrix(-0.893 -0.389 0.473 -0.255 791.4 454.7)">D7</text><text transform="matrix(-0.809 -0.352 0.477 -0.231 763.9 442.8)">D8</text><text transform="matrix(-0.736 -0.320 0.478 -0.210 739.1 432.0)">D1</text><text transform="matrix(-0.672 -0.293 0.477 -0.192 716.4 422.1)">D2</text><text transform="matrix(-0.616 -0.268 0.475 -0.176 695.6 413.0)">D3</text><text transform="matrix(-0.567 -0.247 0.471 -0.162 676.5 404.7)">D4</text><text transform="matrix(-0.524 -0.228 0.466 -0.150 658.9 397.1)">D5</text><text transform="matrix(-0.982 -0.403 0.435 -0.264 836.2 459.1)">E6</text><text transform="matrix(-0.887 -0.364 0.443 -0.239 806.1 446.8)">E7</text><text transform="matrix(-0.806 -0.331 0.448 -0.217 778.8 435.6)">E8</text><text transform="matrix(-0.735 -0.302 0.450 -0.198 754.0 425.4)">E1</text><text transform="matrix(-0.673 -0.276 0.451 -0.182 731.3 416.0)">E2</text><text transform="matrix(-0.619 -0.254 0.450 -0.167 710.5 407.5)">E3</text><text transform="matrix(-0.571 -0.234 0.447 -0.154 691.3 399.6)">E4</text><text transform="matrix(-0.880 -0.342 0.416 -0.224 820.0 439.3)">F7</text><text transform="matrix(-0.802 -0.311 0.422 -0.205 792.9 428.8)">F8</text><text transform="matrix(-0.733 -0.285 0.425 -0.187 768.1 419.1)">F1</text><text transform="matrix(-0.673 -0.261 0.427 -0.172 745.5 410.3)">F2</text><text transform="matrix(-0.620 -0.241 0.426 -0.159 724.6 402.2)">F3</text><text transform="matrix(-0.573 -0.223 0.425 -0.147 705.4 394.8)">F4</text><text transform="matrix(-0.872 -0.321 0.391 -0.211 833.0 432.3)">G7</text><text transform="matrix(-0.797 -0.294 0.398 -0.193 806.1 422.3)">G8</text><text transform="matrix(-0.731 -0.269 0.402 -0.177 781.5 413.3)">G1</text><text transform="matrix(-0.672 -0.248 0.404 -0.163 758.9 404.9)">G2</text><text transform="matrix(-0.621 -0.229 0.405 -0.151 738.0 397.3)">G3</text><text transform="matrix(-0.575 -0.212 0.404 -0.140 718.8 390.2)">G4</text><text transform="matrix(-0.791 -0.277 0.376 -0.182 818.6 416.3)">H8</text><text transform="matrix(-0.727 -0.255 0.381 -0.168 794.1 407.7)">H1</text><text transform="matrix(-0.671 -0.235 0.384 -0.155 771.6 399.8)">H2</text><text transform="matrix(-0.620 -0.218 0.385 -0.143 750.8 392.5)">H3</text><text transform="matrix(-0.576 -0.202 0.385 -0.133 731.5 385.8)">H4</text><text transform="matrix(-0.785 -0.262 0.356 -0.173 830.4 410.6)">A8</text><text transform="matrix(-0.723 -0.242 0.361 -0.159 806.1 402.5)">A1</text><text transform="matrix(-0.668 -0.223 0.365 -0.147 783.7 395.0)">A2</text><text transform="matrix(-0.619 -0.207 0.367 -0.136 762.9 388.0)">A3</text><text transform="matrix(-0.576 -0.192 0.367 -0.127 743.6 381.6)">A4</text><text transform="matrix(-0.718 -0.229 0.343 -0.151 817.4 397.5)">B1</text><text transform="matrix(-0.665 -0.212 0.347 -0.140 795.1 390.3)">B2</text><text transform="matrix(-0.618 -0.197 0.350 -0.130 774.4 383.7)">B3</text><text transform="matrix(-0.575 -0.184 0.351 -0.121 755.2 377.6)">B4</text><text transform="matrix(-0.713 -0.218 0.326 -0.144 828.2 392.7)">C1</text><text transform="matrix(-0.662 -0.202 0.331 -0.133 806.1 385.9)">C2</text><text transform="matrix(-0.616 -0.188 0.334 -0.124 785.5 379.6)">C3</text><text transform="matrix(-0.574 -0.176 0.335 -0.116 766.3 373.8)">C4</text><text transform="matrix(-0.658 -0.193 0.315 -0.127 816.5 381.7)">D2</text><text transform="matrix(-0.613 -0.180 0.319 -0.119 796.0 375.7)">D3</text><text transform="matrix(-0.573 -0.168 0.321 -0.111 776.9 370.1)">D4</text><text transform="matrix(-0.654 -0.184 0.301 -0.121 826.4 377.7)">E2</text><text transform="matrix(-0.610 -0.172 0.305 -0.113 806.0 372.0)">E3</text><text transform="matrix(-0.571 -0.161 0.307 -0.106 787.0 366.6)">E4</text><text transform="matrix(-0.607 -0.165 0.292 -0.109 815.7 368.4)">F3</text><text transform="matrix(-0.569 -0.154 0.295 -0.102 796.7 363.3)">F4</text><text transform="matrix(-0.603 -0.158 0.280 -0.104 824.9 365.0)">G3</text><text transform="matrix(-0.566 -0.148 0.283 -0.098 806.0 360.1)">G4</text><text transform="matrix(-0.563 -0.142 0.272 -0.094 815.0 357.0)">H4</text><text transform="matrix(-0.560 -0.136 0.261 -0.090 823.6 354.0)">A4</text><text transform="matrix(-0.557 -0.131 0.251 -0.087 831.8 351.2)">B4</text><radialGradient id="spec" cx="720" cy="560" r="190" gradientUnits="userSpaceOnUse"><stop offset="0" stop-color="#fff" stop-opacity="0.22"/><stop offset="1" stop-color="#fff" stop-opacity="0"/></radialGradient><rect x="520" y="360" width="300" height="340" fill="url(#spec)"/></g></g><defs><filter id="soft" x="-10%" y="-10%" width="120%" height="120%"><feGaussianBlur stdDeviation="0.6"/></filter><pattern id="chk" width="8" height="8" patternUnits="userSpaceOnUse"><rect width="8" height="8" fill="#9a9a9a"/><rect width="4" height="4" fill="#6a6a6a"/><rect x="4" y="4" width="4" height="4" fill="#6a6a6a"/></pattern><pattern id="chk2" width="6" height="6" patternUnits="userSpaceOnUse" patternTransform="rotate(-8)"><rect width="6" height="6" fill="#8c8c8c"/><rect width="3" height="3" fill="#5c5c5c"/><rect x="3" y="3" width="3" height="3" fill="#5c5c5c"/></pattern><radialGradient id="sph" cx="0.4" cy="0.35" r="0.75"><stop offset="0" stop-color="#fff" stop-opacity="0.15"/><stop offset="0.6" stop-color="#000" stop-opacity="0.05"/><stop offset="1" stop-color="#000" stop-opacity="0.5"/></radialGradient></defs><g fill="#000"><ellipse cx="304.2" cy="311.5" rx="13.3" ry="2.8" fill-opacity="0.45"/><ellipse cx="365" cy="357.5" rx="10.5" ry="5" fill-opacity="0.38" transform="rotate(-5 365 357.5)"/><ellipse cx="301.5" cy="343.4" rx="15" ry="4.7" fill-opacity="0.38" transform="rotate(-3 301.5 343.4)"/><ellipse cx="431.8" cy="287.1" rx="8.3" ry="2.5" fill-opacity="0.45"/><ellipse cx="457.3" cy="359.5" rx="16.6" ry="6" fill-opacity="0.38" transform="rotate(-3 457.3 359.5)"/><ellipse cx="555.3" cy="283.3" rx="7" ry="1.5" fill-opacity="0.45"/><ellipse cx="611.5" cy="301.5" rx="7" ry="2" fill-opacity="0.45"/><ellipse cx="646.7" cy="305.8" rx="10" ry="2.3" fill-opacity="0.45"/><ellipse cx="653.7" cy="293.7" rx="4" ry="1.2" fill-opacity="0.45"/><ellipse cx="714.2" cy="297.3" rx="6" ry="1.5" fill-opacity="0.45"/><ellipse cx="752.2" cy="303" rx="8" ry="2" fill-opacity="0.45"/><ellipse cx="777.5" cy="302.1" rx="11" ry="2.2" fill-opacity="0.45"/><ellipse cx="771.8" cy="319" rx="12.6" ry="2.8" fill-opacity="0.45"/><ellipse cx="798.6" cy="324" rx="14" ry="3.4" fill-opacity="0.38"/><ellipse cx="697.9" cy="332.5" rx="8.4" ry="3.7" fill-opacity="0.38"/><ellipse cx="572.2" cy="339.5" rx="14" ry="4.2" fill-opacity="0.38"/><ellipse cx="665" cy="352.2" rx="15.5" ry="3.4" fill-opacity="0.38"/><ellipse cx="595.7" cy="383.3" rx="17.6" ry="7.5" fill-opacity="0.38"/><ellipse cx="748" cy="381" rx="21" ry="8" fill-opacity="0.38"/><ellipse cx="750.8" cy="336.7" rx="8" ry="3" fill-opacity="0.38"/><ellipse cx="629" cy="403.6" rx="21" ry="9.6" fill-opacity="0.38"/><ellipse cx="664.8" cy="409.5" rx="21" ry="10.8" fill-opacity="0.38"/><ellipse cx="735" cy="405" rx="14" ry="8.5" fill-opacity="0.38"/><ellipse cx="782.4" cy="430.2" rx="27" ry="12.8" fill-opacity="0.38" transform="rotate(8 782.4 430.2)"/><ellipse cx="702.5" cy="515" rx="24" ry="31" fill-opacity="0.42" transform="rotate(-20 702.5 515)"/><ellipse cx="815" cy="640" rx="55" ry="36" fill-opacity="0.42" transform="rotate(50 815 640)"/><ellipse cx="255" cy="417" rx="19" ry="8" fill-opacity="0.38"/><ellipse cx="357.8" cy="642.3" rx="43.8" ry="25.8" fill-opacity="0.42" transform="rotate(-8 357.8 642.3)"/><ellipse cx="537.5" cy="613" rx="43.8" ry="43.3" fill-opacity="0.42"/></g><polygon points="375.3,349.3 417,341 431.5,351.5 387.4,358.1" fill="#d6d6d6"/><path fill="#bdbdbd" d="M376.8 350.4L382.1 349.4L383.6 350.5L378.3 351.5zM379.8 352.6L385.2 351.6L386.7 352.8L381.4 353.7zM382.9 354.8L388.3 353.9L389.8 355.0L384.4 355.9zM385.9 357.0L391.4 356.1L392.9 357.3L387.4 358.1zM380.5 348.3L385.7 347.2L387.3 348.4L382.1 349.4zM383.6 350.5L388.9 349.5L390.5 350.7L385.2 351.6zM386.7 352.8L392.1 351.8L393.7 353.0L388.3 353.9zM389.8 355.0L395.2 354.1L396.8 355.3L391.4 356.1zM387.3 348.4L392.6 347.4L394.2 348.5L388.9 349.5zM390.5 350.7L395.8 349.7L397.4 350.9L392.1 351.8zM393.7 353.0L399.1 352.1L400.7 353.3L395.2 354.1zM396.8 355.3L402.3 354.4L403.9 355.6L398.4 356.5zM390.9 346.2L396.1 345.1L397.8 346.4L392.6 347.4zM394.2 348.5L399.5 347.6L401.1 348.8L395.8 349.7zM397.4 350.9L402.8 350.0L404.5 351.2L399.1 352.1zM400.7 353.3L406.1 352.4L407.8 353.6L402.3 354.4zM397.8 346.4L403.1 345.3L404.8 346.6L399.5 347.6zM401.1 348.8L406.5 347.8L408.2 349.0L402.8 350.0zM404.5 351.2L409.9 350.3L411.6 351.5L406.1 352.4zM407.8 353.6L413.3 352.7L415.0 354.0L409.4 354.8zM401.4 344.1L406.6 343.1L408.3 344.3L403.1 345.3zM404.8 346.6L410.0 345.6L411.8 346.9L406.5 347.8zM408.2 349.0L413.5 348.1L415.3 349.4L409.9 350.3zM411.6 351.5L417.0 350.6L418.7 351.9L413.3 352.7zM408.3 344.3L413.6 343.3L415.3 344.6L410.0 345.6zM411.8 346.9L417.1 345.9L418.9 347.2L413.5 348.1zM415.3 349.4L420.7 348.5L422.4 349.8L417.0 350.6zM418.7 351.9L424.2 351.0L426.0 352.3L420.5 353.1zM411.8 342.0L417.0 341.0L418.8 342.3L413.6 343.3zM415.3 344.6L420.6 343.6L422.4 344.9L417.1 345.9zM418.9 347.2L424.2 346.2L426.1 347.6L420.7 348.5zM422.4 349.8L427.9 348.9L429.7 350.2L424.2 351.0z"/><polygon points="375.3,349.3 387.4,358.1 392.4,401.7 380.2,391.7" fill="#626262"/><path fill="#444444" d="M375.9 354.6L378.9 356.8L379.6 362.2L376.5 359.9zM377.1 365.2L380.2 367.5L380.8 372.9L377.8 370.5zM378.4 375.8L381.4 378.2L382.0 383.5L379.0 381.1zM379.6 386.4L382.6 388.9L383.2 394.2L380.2 391.7zM378.3 351.5L381.4 353.7L382.0 359.1L378.9 356.8zM379.6 362.2L382.6 364.5L383.2 369.8L380.2 367.5zM380.8 372.9L383.8 375.2L384.4 380.6L381.4 378.2zM382.0 383.5L385.1 385.9L385.7 391.3L382.6 388.9zM382.0 359.1L385.0 361.3L385.6 366.7L382.6 364.5zM383.2 369.8L386.2 372.1L386.9 377.6L383.8 375.2zM384.4 380.6L387.5 383.0L388.1 388.4L385.1 385.9zM385.7 391.3L388.7 393.8L389.3 399.2L386.3 396.7zM384.4 355.9L387.4 358.1L388.0 363.6L385.0 361.3zM385.6 366.7L388.6 369.0L389.3 374.4L386.2 372.1zM386.9 377.6L389.9 379.9L390.5 385.4L387.5 383.0zM388.1 388.4L391.1 390.8L391.8 396.2L388.7 393.8z"/><polygon points="387.4,358.1 431.5,351.5 434.8,391.7 392.4,401.7" fill="#9a9a9a"/><path fill="#646464" d="M388.0 363.6L393.5 362.7L394.1 368.1L388.6 369.0zM389.3 374.4L394.7 373.5L395.3 378.9L389.9 379.9zM390.5 385.4L395.9 384.3L396.5 389.7L391.1 390.8zM391.8 396.2L397.1 395.1L397.7 400.4L392.4 401.7zM392.9 357.3L398.4 356.5L399.0 361.8L393.5 362.7zM394.1 368.1L399.6 367.1L400.1 372.5L394.7 373.5zM395.3 378.9L400.7 377.8L401.3 383.2L395.9 384.3zM396.5 389.7L401.9 388.5L402.4 393.9L397.1 395.1zM399.0 361.8L404.5 360.9L405.0 366.2L399.6 367.1zM400.1 372.5L405.6 371.5L406.1 376.8L400.7 377.8zM401.3 383.2L406.7 382.1L407.2 387.4L401.9 388.5zM402.4 393.9L407.8 392.7L408.3 397.9L403.0 399.2zM403.9 355.6L409.4 354.8L410.0 360.0L404.5 360.9zM405.0 366.2L410.5 365.3L411.0 370.5L405.6 371.5zM406.1 376.8L411.5 375.8L412.0 381.0L406.7 382.1zM407.2 387.4L412.6 386.2L413.1 391.5L407.8 392.7zM410.0 360.0L415.5 359.2L415.9 364.3L410.5 365.3zM411.0 370.5L416.4 369.5L416.9 374.7L411.5 375.8zM412.0 381.0L417.4 379.9L417.9 385.1L412.6 386.2zM413.1 391.5L418.4 390.3L418.9 395.4L413.6 396.7zM415.0 354.0L420.5 353.1L420.9 358.3L415.5 359.2zM415.9 364.3L421.4 363.4L421.9 368.5L416.4 369.5zM416.9 374.7L422.3 373.7L422.8 378.8L417.4 379.9zM417.9 385.1L423.3 383.9L423.7 389.1L418.4 390.3zM420.9 358.3L426.4 357.4L426.9 362.5L421.4 363.4zM421.9 368.5L427.3 367.6L427.7 372.6L422.3 373.7zM422.8 378.8L428.2 377.7L428.6 382.8L423.3 383.9zM423.7 389.1L429.1 387.9L429.5 392.9L424.2 394.2zM426.0 352.3L431.5 351.5L431.9 356.5L426.4 357.4zM426.9 362.5L432.3 361.6L432.7 366.6L427.3 367.6zM427.7 372.6L433.1 371.6L433.6 376.6L428.2 377.7zM428.6 382.8L434.0 381.6L434.4 386.7L429.1 387.9z"/><polygon points="366,393 392.4,401.7 418.3,401.7 404,408 374,405" fill="#000" fill-opacity="0.4"/><circle cx="746.5" cy="359.2" r="20.5" fill="#a4a4a4"/><path fill="#5c5c5c" d="M738.6 378.1L739.6 378.5L740.6 378.8L741.8 379.0L743.0 379.2L740.4 374.5L738.3 374.2L736.3 373.8L734.5 373.3L732.9 372.7zM748.3 379.3L749.6 379.2L750.8 379.1L752.0 378.8L753.1 378.6L757.9 373.5L756.0 374.0L754.0 374.3L751.8 374.6L749.6 374.8zM729.0 369.9L729.6 370.7L730.4 371.4L731.5 372.1L732.9 372.7L730.8 363.7L729.2 363.0L727.9 362.2L726.9 361.3L726.3 360.4zM740.4 374.5L742.7 374.8L745.0 374.9L747.3 374.9L749.6 374.8L750.1 366.1L747.4 366.2L744.7 366.2L742.1 366.0L739.5 365.8zM757.9 373.5L759.6 372.9L761.0 372.3L762.2 371.6L763.2 370.9L765.8 361.6L764.7 362.4L763.3 363.2L761.6 363.9L759.7 364.6zM727.2 356.8L726.5 357.7L726.1 358.6L726.0 359.5L726.3 360.4L729.0 350.6L728.8 349.8L728.8 349.0L729.2 348.3L729.8 347.5zM730.8 363.7L732.7 364.4L734.7 364.9L737.0 365.4L739.5 365.8L740.4 355.3L738.3 355.0L736.3 354.5L734.5 354.0L732.9 353.5zM750.1 366.1L752.7 365.9L755.2 365.6L757.5 365.1L759.7 364.6L757.9 354.2L756.0 354.7L754.0 355.1L751.8 355.4L749.6 355.5zM765.8 361.6L766.5 360.7L766.9 359.8L767.0 358.9L766.7 358.0L764.0 348.5L764.2 349.3L764.2 350.1L763.8 350.9L763.2 351.6zM729.0 350.6L729.6 351.4L730.4 352.1L731.5 352.8L732.9 353.5L738.6 344.8L737.9 344.4L737.2 344.0L736.7 343.6L736.4 343.1zM740.4 355.3L742.7 355.5L745.0 355.6L747.3 355.6L749.6 355.5L748.3 346.0L746.9 346.0L745.6 346.0L744.3 345.9L743.0 345.8zM757.9 354.2L759.6 353.7L761.0 353.1L762.2 352.4L763.2 351.6L756.1 343.7L755.6 344.1L754.9 344.5L754.1 344.9L753.1 345.2zM744.7 339.1L743.4 339.2L742.2 339.3L741.0 339.6L739.9 339.8L746.5 339.9L746.5 339.9L746.5 339.9L746.5 339.9L746.5 339.9zM736.9 341.3L736.5 341.8L736.3 342.2L736.3 342.7L736.4 343.1L746.5 339.9L746.5 339.9L746.5 339.9L746.5 339.9L746.5 339.9zM738.6 344.8L739.6 345.1L740.6 345.4L741.8 345.6L743.0 345.8L746.5 339.9L746.5 339.9L746.5 339.9L746.5 339.9L746.5 339.9zM748.3 346.0L749.6 345.9L750.8 345.7L752.0 345.5L753.1 345.2L746.5 339.9L746.5 339.9L746.5 339.9L746.5 339.9L746.5 339.9zM756.1 343.7L756.5 343.3L756.7 342.8L756.7 342.4L756.6 341.9L746.5 339.9L746.5 339.9L746.5 339.9L746.5 339.9L746.5 339.9zM754.4 340.3L753.4 339.9L752.4 339.6L751.2 339.4L750.0 339.2L746.5 339.9L746.5 339.9L746.5 339.9L746.5 339.9L746.5 339.9z"/><circle cx="746.5" cy="359.2" r="20.5" fill="url(#sph)"/><circle cx="830" cy="588" r="52" fill="#a8a8a8"/><path fill="#5e5e5e" d="M816.7 638.2L818.1 638.6L819.7 639.0L821.3 639.3L823.0 639.5L817.1 634.7L813.9 634.2L810.9 633.6L808.0 633.0L805.4 632.2zM830.3 640.0L832.2 639.9L834.1 639.8L835.9 639.7L837.6 639.4L844.1 634.5L840.9 634.9L837.5 635.2L834.1 635.4L830.6 635.5zM797.3 628.4L798.9 629.4L800.8 630.4L802.9 631.3L805.4 632.2L797.6 619.8L794.4 618.6L791.6 617.4L789.1 616.1L786.9 614.7zM817.1 634.7L820.3 635.1L823.7 635.3L827.2 635.5L830.6 635.5L830.8 624.1L826.3 624.1L821.8 623.9L817.3 623.5L813.0 623.0zM844.1 634.5L847.2 634.0L850.2 633.4L853.0 632.7L855.5 631.9L863.6 619.4L860.2 620.4L856.6 621.3L852.7 622.2L848.6 622.8zM782.6 608.7L783.0 610.3L783.9 611.8L785.2 613.3L786.9 614.7L782.9 597.2L781.0 595.6L779.6 594.0L778.6 592.3L778.1 590.6zM797.6 619.8L801.1 620.8L804.8 621.7L808.8 622.4L813.0 623.0L811.4 606.3L806.8 605.6L802.5 604.8L798.4 603.8L794.6 602.7zM830.8 624.1L835.4 624.0L839.9 623.8L844.3 623.4L848.6 622.8L850.3 606.1L845.6 606.7L840.8 607.1L835.9 607.4L830.9 607.5zM863.6 619.4L866.7 618.2L869.4 617.0L871.7 615.6L873.7 614.2L877.8 596.7L875.7 598.2L873.1 599.6L870.1 601.0L866.7 602.3zM782.9 597.2L785.2 598.7L788.0 600.2L791.1 601.5L794.6 602.7L796.7 583.5L793.4 582.4L790.5 581.1L787.9 579.8L785.7 578.4zM811.4 606.3L816.1 606.8L821.0 607.2L825.9 607.4L830.9 607.5L830.9 588.0L826.2 587.9L821.5 587.7L816.9 587.4L812.5 586.9zM850.3 606.1L854.8 605.3L859.1 604.4L863.1 603.4L866.7 602.3L864.6 583.1L861.1 584.2L857.3 585.1L853.3 586.0L849.1 586.7zM877.8 596.7L879.6 595.1L880.8 593.4L881.6 591.7L882.0 590.0L878.9 571.6L878.5 573.2L877.8 574.8L876.6 576.3L875.0 577.8zM781.2 572.2L781.7 573.8L782.6 575.3L783.9 576.9L785.7 578.4L795.0 560.9L793.6 559.7L792.5 558.5L791.8 557.3L791.4 556.0zM796.7 583.5L800.3 584.5L804.1 585.5L808.2 586.2L812.5 586.9L816.2 567.6L812.8 567.1L809.5 566.5L806.5 565.8L803.6 565.0zM830.9 588.0L835.5 587.9L840.2 587.6L844.7 587.2L849.1 586.7L845.1 567.5L841.6 567.9L838.0 568.2L834.4 568.4L830.7 568.5zM864.6 583.1L867.7 581.9L870.5 580.6L872.9 579.3L875.0 577.8L865.6 560.5L864.0 561.6L862.0 562.7L859.8 563.7L857.3 564.6zM878.9 571.6L878.7 570.0L878.1 568.4L877.1 566.8L875.6 565.3L866.1 550.6L867.2 551.8L868.1 553.0L868.5 554.3L868.6 555.5zM793.5 551.0L792.4 552.2L791.7 553.5L791.4 554.7L791.4 556.0L807.2 544.5L807.2 543.7L807.4 543.0L807.8 542.3L808.4 541.5zM795.0 560.9L796.7 562.0L798.7 563.1L801.1 564.1L803.6 565.0L814.5 549.8L812.9 549.2L811.6 548.7L810.4 548.0L809.3 547.4zM816.2 567.6L819.7 568.0L823.3 568.3L827.0 568.5L830.7 568.5L830.4 551.9L828.2 551.9L826.0 551.8L823.9 551.6L821.8 551.4zM845.1 567.5L848.4 566.9L851.6 566.3L854.6 565.5L857.3 564.6L846.1 549.6L844.5 550.1L842.7 550.5L840.9 550.9L838.9 551.3zM865.6 560.5L866.9 559.3L867.8 558.1L868.4 556.8L868.6 555.5L852.8 544.2L852.6 545.0L852.3 545.7L851.7 546.4L851.0 547.1zM828.0 536.3L825.8 536.4L823.7 536.6L821.6 536.8L819.7 537.1L828.4 538.1L828.7 538.1L829.0 538.1L829.3 538.0L829.7 538.0zM812.8 539.0L811.4 539.6L810.3 540.2L809.3 540.8L808.4 541.5L826.6 538.9L826.7 538.7L826.9 538.6L827.0 538.5L827.3 538.4zM807.2 544.5L807.5 545.2L807.9 546.0L808.5 546.7L809.3 547.4L826.7 539.8L826.6 539.7L826.5 539.6L826.4 539.4L826.4 539.3zM814.5 549.8L816.1 550.3L817.9 550.7L819.8 551.1L821.8 551.4L828.7 540.4L828.4 540.4L828.1 540.3L827.8 540.2L827.5 540.2zM830.4 551.9L832.6 551.8L834.7 551.7L836.9 551.5L838.9 551.3L831.4 540.4L831.1 540.4L830.8 540.5L830.4 540.5L830.1 540.5zM846.1 549.6L847.6 549.0L848.9 548.4L850.0 547.8L851.0 547.1L833.3 539.7L833.2 539.8L833.0 539.9L832.8 540.0L832.6 540.1zM852.8 544.2L852.7 543.5L852.4 542.7L852.0 542.0L851.3 541.3L833.4 538.8L833.5 538.9L833.6 539.0L833.6 539.2L833.6 539.3zM846.7 538.8L845.1 538.2L843.4 537.8L841.6 537.4L839.6 537.0L831.5 538.1L831.8 538.2L832.1 538.3L832.4 538.3L832.7 538.4zM831.2 536.3L829.0 536.3L826.8 536.4L824.7 536.5L822.6 536.7L828.8 538.1L829.2 538.0L829.5 538.0L829.8 538.0L830.2 538.0zM828.4 538.1L828.1 538.2L827.8 538.3L827.5 538.4L827.3 538.4L842.1 545.1L841.1 545.5L839.9 545.9L838.6 546.2L837.3 546.4zM826.6 538.9L826.5 539.0L826.4 539.1L826.4 539.2L826.4 539.3L846.0 541.2L846.1 541.8L845.9 542.3L845.6 542.8L845.2 543.3zM826.7 539.8L826.9 539.9L827.1 540.0L827.3 540.1L827.5 540.2L841.0 537.5L842.0 537.9L843.0 538.3L843.8 538.7L844.6 539.2zM828.7 540.4L829.0 540.5L829.4 540.5L829.7 540.5L830.1 540.5L829.7 536.0L831.3 536.0L832.8 536.1L834.3 536.2L835.8 536.4zM831.4 540.4L831.7 540.3L832.0 540.3L832.3 540.2L832.6 540.1L818.6 537.6L819.8 537.3L821.0 537.0L822.3 536.7L823.7 536.5zM833.3 539.7L833.5 539.6L833.5 539.5L833.6 539.4L833.6 539.3L813.9 541.4L814.0 540.9L814.3 540.4L814.7 539.9L815.2 539.4zM833.4 538.8L833.2 538.7L833.1 538.6L832.9 538.5L832.7 538.4L818.2 545.3L817.3 544.9L816.4 544.4L815.6 544.0L815.0 543.5zM831.5 538.1L831.2 538.1L830.9 538.1L830.5 538.0L830.2 538.0L829.2 547.0L827.6 547.0L826.1 546.9L824.6 546.7L823.2 546.5z"/><circle cx="830" cy="588" r="52" fill="url(#sph)"/><g filter="url(#soft)"><circle cx="559.5" cy="256" r="8.2" fill="#81e43c"/><circle cx="613" cy="251.8" r="7.6" fill="#7ade38"/><circle cx="660.8" cy="246.7" r="7" fill="#7ade38"/><circle cx="698.7" cy="244.5" r="6.2" fill="#76da36"/><circle cx="742.3" cy="245.3" r="6.7" fill="#76da36"/><circle cx="751.3" cy="250.4" r="7.3" fill="#7ade38"/><circle cx="719" cy="253.2" r="7.6" fill="#7ade38"/><circle cx="799.1" cy="262.2" r="9.3" fill="#7ade38"/><circle cx="394.4" cy="254.7" r="8.3" fill="#84e63e"/><circle cx="319.5" cy="258.8" r="8.9" fill="#8cf042"/><circle cx="437.3" cy="258.3" r="8.6" fill="#8cf042"/><circle cx="660.8" cy="262.2" r="9" fill="#86e840"/><circle cx="709.1" cy="264.2" r="9.6" fill="#8ef044"/><circle cx="610.1" cy="267.2" r="10.4" fill="#96f648"/><circle cx="649.2" cy="270" r="10.7" fill="#96f648"/><circle cx="749.9" cy="267.2" r="10.4" fill="#8ef044"/><circle cx="777.5" cy="266.4" r="10" fill="#8ef044"/><circle cx="393.8" cy="267.7" r="10.3" fill="#98f749"/><circle cx="313.9" cy="272.1" r="11" fill="#98f749"/><circle cx="771" cy="278.5" r="12" fill="#9efa4c"/><circle cx="800.8" cy="281.3" r="12.7" fill="#a2fc4e"/><circle cx="702.4" cy="286.9" r="13.5" fill="#a2fc4e"/><circle cx="748.8" cy="290.3" r="14" fill="#a2fc4e"/><circle cx="577.8" cy="290.9" r="14" fill="#a4fc4e"/><circle cx="312.6" cy="294.3" r="14.4" fill="#a4fc4e"/><circle cx="669.2" cy="297.3" r="15.5" fill="#a6fd50"/><circle cx="384.7" cy="301.3" r="15.8" fill="#a8fd51"/><circle cx="467" cy="303.2" r="16" fill="#a8fd51"/><circle cx="600.3" cy="317" r="18.3" fill="#aafe52" stroke="#d4ffae" stroke-width="1.1" stroke-opacity="0.5"/><circle cx="632.6" cy="329.7" r="19.7" fill="#aefe56" stroke="#d4ffae" stroke-width="1.1" stroke-opacity="0.5"/><circle cx="726.9" cy="329.7" r="20.5" fill="#aefe56" stroke="#d4ffae" stroke-width="1.1" stroke-opacity="0.5"/><circle cx="668.6" cy="333" r="20.5" fill="#aefe56" stroke="#d4ffae" stroke-width="1.1" stroke-opacity="0.5"/><circle cx="252" cy="339" r="22" fill="#aefe56" stroke="#d4ffae" stroke-width="1.1" stroke-opacity="0.5"/><circle cx="266" cy="340" r="23" fill="#aefe56" stroke="#d4ffae" stroke-width="1.1" stroke-opacity="0.5"/><circle cx="779.7" cy="345.1" r="23.3" fill="#b2ff5a" stroke="#d4ffae" stroke-width="1.1" stroke-opacity="0.5"/><ellipse cx="708.5" cy="400.5" rx="22.5" ry="41.5" fill="#b0fd58" stroke="#d4ffae" stroke-width="1.2" stroke-opacity="0.6"/><ellipse cx="384" cy="475.7" rx="45" ry="23" fill="#b0fd58" stroke="#d4ffae" stroke-width="1.2" stroke-opacity="0.6"/><circle cx="554.3" cy="456.8" r="42" fill="#b0fd58" stroke="#d4ffae" stroke-width="1.2" stroke-opacity="0.6"/></g><circle cx="459" cy="275.5" r="9" fill="#f4f4f4" fill-opacity="0.55"/><circle cx="459" cy="275.5" r="2.6" fill="#777"/><path d="M459 269v3M459 279v3M452.5 275.5h3M462.5 275.5h3M454.5 271l2 2M461.5 278l2 2M463.5 271l-2 2M456.5 278l-2 2" stroke="#888" stroke-width="1"/><g><circle cx="739.8" cy="122.9" r="11" fill="#ececec"/><circle cx="769.8" cy="122.9" r="11" fill="#ececec"/><circle cx="799.6" cy="122.9" r="11" fill="#ececec"/><rect x="733.5" y="117.5" width="13" height="9.5" fill="none" stroke="#8c8c8c" stroke-width="1.6" rx="0.8"/><path d="M739.8 127v2M736 129.6h7.6" stroke="#8c8c8c" stroke-width="1.6"/><circle cx="769.8" cy="122.9" r="3" fill="#8c8c8c"/><path d="M769.8 114.5v3.5M769.8 127.8v3.5M761.5 122.9h3.5M774.6 122.9h3.5M764 117l2.3 2.3M773.3 126.5l2.3 2.3M775.6 117l-2.3 2.3M766.3 126.5l-2.3 2.3" stroke="#8c8c8c" stroke-width="1.3"/><rect x="793" y="117.5" width="10" height="11" rx="1.3" fill="#8c8c8c"/><path d="M802.5 121l4.5-3.5v11l-4.5-3.5z" fill="#8c8c8c"/></g><text x="253" y="690" style="font-family:'Liberation Sans';font-size:15px;fill:#1638e8" text-anchor="start" dominant-baseline="auto">www.historian.by</text></svg><div class="a" style="left:825px;top:59px;width:195px;height:211px;border:1px solid #474747;background:#2f2f2f"></div><div class="a" style="left:826px;top:60px;width:193px;height:20px;background:#0a0a0a;"></div><div class="t" style="left:831px;top:63px;font-size:12px;color:#9c9890;">Объекты</div><svg style="left:973px;top:64px" width="44" height="14" viewBox="0 0 44 14"><path d="M2 5.5h7l-3.5 4z" fill="#9a9a9a"/><path d="M17 1.5h5M17.5 1.5v6M21.5 1.5v6M15.5 7.5h8M19.5 7.5v5" stroke="#a8a8a8" stroke-width="1.2" fill="none"/><path d="M31 1.5l9 9M40 1.5l-9 9" stroke="#aaaaaa" stroke-width="1.8"/></svg><div class="a" style="left:826px;top:103px;width:193px;height:1px;background:#444;"></div><svg style="left:833px;top:84px" width="16" height="16" viewBox="0 0 16 16"><path d="M1.5 1.5L8 8" stroke="#c8c8c8" stroke-width="1.3"/><path d="M9 9L14 14" stroke="#2f86e0" stroke-width="2.8" stroke-linecap="round"/><path d="M2.5 13.5L9 7" stroke="#f4f4f4" stroke-width="2.4" stroke-linecap="round"/><circle cx="11.3" cy="4.7" r="3.4" fill="#f4f4f4"/><path d="M11.3 4.7L15.5 0.5" stroke="#2f2f2f" stroke-width="2.4"/></svg><svg style="left:849px;top:83px" width="17" height="17" viewBox="0 0 17 17"><path d="M1 5l5-4 4 4-5 4z" fill="#d4b63a"/><path d="M7 9h3v3" stroke="#999" fill="none"/><path d="M11 8l3 3-3 3-3-3z" fill="#3ab4e8"/><path d="M11 13l3 3-3 1-2-2z" fill="#e85aa8"/></svg><div class="a" style="left:870px;top:83px;width:1px;height:18px;background:#222;"></div><svg style="left:874px;top:84px" width="16" height="16" viewBox="0 0 16 16"><path d="M2 1h7l4 4v10h-11z" fill="#eee"/><path d="M6 13l7-7 2 2-7 7h-2z" fill="#f0a030"/></svg><svg style="left:895px;top:85px" width="17" height="15" viewBox="0 0 17 15"><rect x="4" y="0.5" width="12" height="9" fill="#4a90d8" stroke="#9cc8f0"/><rect x="1" y="4.5" width="12" height="9" fill="#3a7ac8" stroke="#9cc8f0"/></svg><div class="a" style="left:917px;top:83px;width:1px;height:18px;background:#222;"></div><svg style="left:921px;top:84px" width="16" height="16" viewBox="0 0 16 16"><path d="M2 1h7l4 4v10h-11z" fill="#eee"/><path d="M11 8l1.4 2.8 3 .4-2.2 2.1.6 3-2.8-1.5-2.8 1.5.6-3-2.2-2.1 3-.4z" fill="#f2b52b"/></svg><svg style="left:943px;top:87px" width="12" height="12" viewBox="0 0 12 12"><path d="M1.5 1.5l9 9M10.5 1.5l-9 9" stroke="#6a6a6a" stroke-width="2.6"/></svg><svg style="left:961px;top:85px" width="17" height="13" viewBox="0 0 17 13"><rect x="0.75" y="0.75" width="15.5" height="11.5" fill="none" stroke="#cfcfcf" stroke-width="1.5"/><path d="M5 3.5h2M6 3.5v6M5 9.5h2" stroke="#cfcfcf"/></svg><svg style="left:981px;top:84px" width="16" height="16" viewBox="0 0 16 16"><path d="M1 1h8l2 2v9h-10z" fill="#7a7a7a"/><path d="M5 4h7l3 3v9h-10z" fill="#8e8e8e"/><path d="M7 9h6M7 11h6M7 13h6" stroke="#6a6a6a"/></svg><div class="a" style="left:826px;top:104px;width:176px;height:148px;background:#262626;"></div><div class="a" style="left:826px;top:104px;width:176px;height:18px;background:#333333;"></div><div class="a" style="left:1002px;top:104px;width:17px;height:148px;background:#2b2b2b;"></div><div class="a" style="left:1002px;top:104px;width:16px;height:16px;background:#2e2e2e;"></div><div class="a" style="left:1002px;top:120px;width:16px;height:16px;background:#3a3a3a;"></div><svg style="left:1002px;top:104px" width="16" height="17" viewBox="0 0 16 17"><path d="M4 10.5l4-4 4 4" stroke="#8a8a8a" stroke-width="1.2" fill="none"/></svg><svg style="left:1002px;top:236px" width="16" height="17" viewBox="0 0 16 17"><path d="M4 6.5l4 4 4-4" stroke="#8a8a8a" stroke-width="1.2" fill="none"/></svg><svg style="left:834px;top:108px" width="8" height="8" viewBox="0 0 8 8"><rect x="0.5" y="0.5" width="7" height="7" fill="#2c2c2c" stroke="#3c3c3c"/><path d="M2 4.5h5" stroke="#c8c8c8"/></svg><svg style="left:846px;top:103px" width="15" height="19" viewBox="0 0 15 19"><rect x="0.5" y="1" width="14" height="17" fill="#5ac8f0"/><path d="M1 7h13M1 13h13M5 1v17M10 1v17" stroke="#8ad8f8" stroke-width="0.8"/><rect x="0.5" y="12" width="4" height="6" fill="#f0d060"/><path d="M7 10l2 6h-4z" fill="#111"/><rect x="10" y="4" width="3" height="3" fill="#e02020"/></svg><div class="a" style="left:0;top:0;width:1024px;height:726px;clip-path:inset(103px 22px 474px 826px)"><div class="t" style="left:867px;top:106px;font-size:11px;color:#eeeeee;">'Корень' - Scene</div><svg style="left:865px;top:124px" width="16" height="13" viewBox="0 0 16 13"><rect x="1" y="3" width="11" height="8" fill="#7a8a9a"/><circle cx="4" cy="2.5" r="2" fill="#aaa"/><circle cx="8.5" cy="2.5" r="2" fill="#aaa"/><path d="M12 5l3.5-2v8l-3.5-2z" fill="#999"/><rect x="3" y="5" width="5" height="4" fill="#3ac0e8"/></svg><div class="t" style="left:886px;top:124px;font-size:11px;color:#eeeeee;">Camera Editor - Camera</div><svg style="left:866px;top:140px" width="14" height="17" viewBox="0 0 14 17"><circle cx="7" cy="6.5" r="5.5" fill="#f8d060"/><circle cx="6" cy="5.5" r="2.5" fill="#fff0b0"/><rect x="4.5" y="11" width="5" height="4" fill="#a0a0a0"/><rect x="5" y="15" width="4" height="1.5" fill="#707070"/></svg><div class="t" style="left:886px;top:142px;font-size:11px;color:#eeeeee;">Ambient Light - Light</div><svg style="left:866px;top:158px" width="14" height="17" viewBox="0 0 14 17"><circle cx="7" cy="6.5" r="5.5" fill="#f8d060"/><circle cx="6" cy="5.5" r="2.5" fill="#fff0b0"/><rect x="4.5" y="11" width="5" height="4" fill="#a0a0a0"/><rect x="5" y="15" width="4" height="1.5" fill="#707070"/></svg><div class="t" style="left:886px;top:160px;font-size:11px;color:#eeeeee;">Light 1 - Light</div><svg style="left:865px;top:177px" width="16" height="15" viewBox="0 0 16 15"><rect x="0.5" y="0.5" width="15" height="14" fill="#3a8ad8"/><defs><linearGradient id="rg" x1="0" x2="1"><stop offset="0" stop-color="#f04040"/><stop offset="0.33" stop-color="#f0e040"/><stop offset="0.66" stop-color="#40e060"/><stop offset="1" stop-color="#4060f0"/></linearGradient></defs><rect x="2" y="3" width="12" height="10" fill="url(#rg)"/></svg><div class="t" style="left:886px;top:178px;font-size:11px;color:#eeeeee;">Rendering Pipeline - Rendering</div><svg style="left:865px;top:196px" width="17" height="12" viewBox="0 0 17 12"><path d="M3 1h11a3 3 0 0 1 3 4l-1 5a2 2 0 0 1-3 1l-2-2h-5l-2 2a2 2 0 0 1-3-1l-1-5a3 3 0 0 1 3-4z" fill="#e8e8e8"/><path d="M3.5 5h3M5 3.5v3" stroke="#555"/><circle cx="12" cy="4" r="1" fill="#e04040"/><circle cx="13.5" cy="6" r="1" fill="#40a040"/></svg><div class="t" style="left:886px;top:196px;font-size:11px;color:#eeeeee;">Game Mode - GameMode</div><svg style="left:866px;top:212px" width="14" height="17" viewBox="0 0 14 17"><circle cx="7" cy="6.5" r="5.5" fill="#f8d060"/><circle cx="6" cy="5.5" r="2.5" fill="#fff0b0"/><rect x="4.5" y="11" width="5" height="4" fill="#a0a0a0"/><rect x="5" y="15" width="4" height="1.5" fill="#707070"/></svg><div class="t" style="left:886px;top:214px;font-size:11px;color:#eeeeee;">Light 2 - Light</div><svg style="left:865px;top:231px" width="16" height="16" viewBox="0 0 16 16"><path d="M8 1l7 3.5v8l-7 3.5-7-3.5v-8z" fill="#4aa8e8"/><path d="M1 4.5l7 3.5 7-3.5M8 8v8" stroke="#9ad4f8" stroke-width="0.8" fill="none"/><circle cx="5" cy="4" r="1.2" fill="#9ad4f8"/><circle cx="11" cy="4" r="1.2" fill="#9ad4f8"/></svg><div class="t" style="left:886px;top:232px;font-size:11px;color:#eeeeee;">Ground - MeshInSpace</div></div><svg style="left:852px;top:180px" width="8" height="8" viewBox="0 0 8 8"><rect x="0.5" y="0.5" width="7" height="7" fill="#2c2c2c" stroke="#3c3c3c"/><path d="M2 4.5h5M4.5 2v5" stroke="#c8c8c8"/></svg><svg style="left:852px;top:234px" width="8" height="8" viewBox="0 0 8 8"><rect x="0.5" y="0.5" width="7" height="7" fill="#2c2c2c" stroke="#3c3c3c"/><path d="M2 4.5h5M4.5 2v5" stroke="#c8c8c8"/></svg><svg style="left:866px;top:250px" width="14" height="4" viewBox="0 0 14 4"><path d="M2 4a5 4 0 0 1 10 0z" fill="#4aa8e8"/></svg><div class="a" style="left:826px;top:252px;width:176px;height:17px;background:#2b2b2b;"></div><div class="a" style="left:841px;top:252px;width:74px;height:17px;background:#3a3a3a;"></div><div class="a" style="left:1002px;top:252px;width:17px;height:17px;background:#2b2b2b;"></div><svg style="left:826px;top:252px" width="16" height="17" viewBox="0 0 16 17"><path d="M10 4.5l-4 4 4 4" stroke="#8a8a8a" stroke-width="1.2" fill="none"/></svg><svg style="left:985px;top:252px" width="16" height="17" viewBox="0 0 16 17"><path d="M6 4.5l4 4-4 4" stroke="#8a8a8a" stroke-width="1.2" fill="none"/></svg><div class="a" style="left:825px;top:274px;width:195px;height:427px;border:1px solid #474747;background:#333333"></div><div class="a" style="left:826px;top:275px;width:193px;height:20px;background:#0a0a0a;"></div><div class="t" style="left:831px;top:278px;font-size:12px;color:#9c9890;">Настройки</div><svg style="left:973px;top:279px" width="44" height="14" viewBox="0 0 44 14"><path d="M2 5.5h7l-3.5 4z" fill="#9a9a9a"/><path d="M17 1.5h5M17.5 1.5v6M21.5 1.5v6M15.5 7.5h8M19.5 7.5v5" stroke="#a8a8a8" stroke-width="1.2" fill="none"/><path d="M31 1.5l9 9M40 1.5l-9 9" stroke="#aaaaaa" stroke-width="1.8"/></svg><div class="t" style="left:832px;top:301px;font-size:12px;color:#f2f2f2;font-weight:bold">Scene</div><svg style="left:997px;top:300px" width="17" height="15" viewBox="0 0 17 15"><path d="M1 5l5-4 4 4-5 4z" fill="#d4b63a"/><path d="M7 9h3v3" stroke="#999" fill="none"/><path d="M11 7l3 3-3 3-3-3z" fill="#3ab4e8"/><path d="M11 12l3 3-3 0-2-2z" fill="#e85aa8"/></svg><div class="t" style="left:832px;top:321px;font-size:12px;color:#eeeeee;">Scene</div><div class="a" style="left:829px;top:341px;width:19px;height:21px;background:#4a4a4a;"></div><svg style="left:831px;top:344px" width="16" height="15" viewBox="0 0 16 15"><rect x="0.5" y="1.5" width="15" height="12" fill="#e8e8e8" stroke="#3a8ad8"/><rect x="0.5" y="1.5" width="15" height="3" fill="#3a8ad8"/><path d="M3 7h3M3 9.5h3M3 12h3" stroke="#888"/><path d="M8 6l6 1-1 5h-4z" fill="#e09050"/></svg><svg style="left:852px;top:343px" width="14" height="17" viewBox="0 0 14 17"><path d="M9 1l-7 9h5l-3 7 8-10h-5z" fill="#f0c020"/></svg><div class="a" style="left:828px;top:365px;width:174px;height:17px;background:#262626;"></div><div class="t" style="left:831px;top:367px;font-size:11px;color:#a8a8a8;">Компонент</div><div class="a" style="left:1003px;top:365px;width:16px;height:286px;background:#2f2f2f;"></div><div class="a" style="left:1003px;top:381px;width:15px;height:43px;background:#3a3a3a;"></div><svg style="left:1003px;top:365px" width="16" height="17" viewBox="0 0 16 17"><path d="M4 10.5l4-4 4 4" stroke="#8a8a8a" stroke-width="1.2" fill="none"/></svg><svg style="left:1003px;top:637px" width="16" height="17" viewBox="0 0 16 17"><path d="M4 6.5l4 4 4-4" stroke="#8a8a8a" stroke-width="1.2" fill="none"/></svg><div class="a" style="left:906px;top:381px;width:6px;height:96px;background:#3c3c3c;"></div><div class="a" style="left:906px;top:494px;width:6px;height:157px;background:#3c3c3c;"></div><div class="t" style="left:847px;top:388px;font-size:11px;color:#eeeeee;">Включено</div><svg style="left:951px;top:388px" width="15" height="14" viewBox="0 0 15 14"><rect x="0.5" y="0.5" width="13" height="13" fill="#262626" stroke="#bbb"/><path d="M3 7l3 3 5-6" stroke="#fff" stroke-width="2" fill="none"/></svg><div class="t" style="left:847px;top:411px;font-size:11px;color:#eeeeee;">Name</div><div class="a" style="left:951px;top:409px;width:49px;height:18px;border:1px solid #555;background:#262626"></div><div class="t" style="left:847px;top:434px;font-size:11px;color:#eeeeee;">Screen L...</div><div class="a" style="left:926px;top:433px;width:21px;height:17px;border:1px solid #4a4a4a;background:#333"></div><div class="a" style="left:951px;top:433px;width:49px;height:17px;border:1px solid #555;background:#2e2e2e"></div><div class="t" style="left:956px;top:435px;font-size:12px;color:#eeeeee;">Auto</div><svg style="left:987px;top:438px" width="9" height="6" viewBox="0 0 9 6"><path d="M0.5 0.5h8l-4 4.5z" fill="#aaa"/></svg><div class="t" style="left:847px;top:457px;font-size:11px;color:#eeeeee;">Network ...</div><div class="a" style="left:926px;top:456px;width:21px;height:17px;border:1px solid #4a4a4a;background:#333"></div><div class="a" style="left:951px;top:456px;width:49px;height:17px;border:1px solid #555;background:#2e2e2e"></div><div class="t" style="left:956px;top:458px;font-size:12px;color:#eeeeee;">True</div><svg style="left:987px;top:461px" width="9" height="6" viewBox="0 0 9 6"><path d="M0.5 0.5h8l-4 4.5z" fill="#aaa"/></svg><div class="a" style="left:828px;top:477px;width:174px;height:17px;background:#262626;"></div><div class="t" style="left:831px;top:480px;font-size:11px;color:#a8a8a8;">Сцена</div><div class="t" style="left:847px;top:500px;font-size:11px;color:#eeeeee;">Renderin...</div><svg style="left:915px;top:503px" width="6" height="6" viewBox="0 0 6 6"><circle cx="3" cy="3" r="2.3" fill="#777"/></svg><div class="a" style="left:926px;top:499px;width:21px;height:17px;border:1px solid #4a4a4a;background:#333"></div><svg style="left:933px;top:503px" width="7" height="9" viewBox="0 0 7 9"><path d="M1 0.5l5 4-5 4z" fill="#bbb"/></svg><div class="a" style="left:0;top:0;width:1024px;height:726px;clip-path:inset(490px 24px 200px 950px)"><div class="t" style="left:955px;top:502px;font-size:12px;color:#eeeeee;">Renderir</div></div><svg style="left:830px;top:524px" width="12" height="12" viewBox="0 0 12 12"><rect x="0.5" y="0.5" width="11" height="11" fill="#333" stroke="#555"/><path d="M3 6h6M6 3v6" stroke="#ccc"/></svg><div class="t" style="left:847px;top:523px;font-size:11px;color:#eeeeee;">Backgro...</div><div class="a" style="left:926px;top:522px;width:21px;height:17px;border:1px solid #4a4a4a;background:#333"></div><div class="a" style="left:951px;top:522px;width:27px;height:17px;border:1px solid #555;background:#262626"></div><div class="t" style="left:955px;top:524px;font-size:12px;color:#eeeeee;">1 1</div><div class="a" style="left:981px;top:522px;width:18px;height:17px;background:#ffffff;"></div><div class="t" style="left:847px;top:546px;font-size:11px;color:#eeeeee;">Backgro...</div><div class="a" style="left:926px;top:545px;width:21px;height:17px;border:1px solid #4a4a4a;background:#333"></div><div class="a" style="left:951px;top:545px;width:48px;height:17px;border:1px solid #555;background:#262626"></div><div class="t" style="left:955px;top:547px;font-size:12px;color:#eeeeee;">1</div><div class="t" style="left:847px;top:569px;font-size:11px;color:#eeeeee;">UI Screen</div><div class="a" style="left:926px;top:568px;width:21px;height:17px;border:1px solid #4a4a4a;background:#333"></div><div class="t" style="left:955px;top:571px;font-size:12px;color:#eeeeee;">(Null)</div><div class="t" style="left:847px;top:592px;font-size:11px;color:#eeeeee;">Mode</div><div class="a" style="left:926px;top:591px;width:21px;height:17px;border:1px solid #4a4a4a;background:#333"></div><div class="a" style="left:951px;top:591px;width:49px;height:17px;border:1px solid #555;background:#2e2e2e"></div><div class="t" style="left:956px;top:593px;font-size:12px;color:#eeeeee;">3D</div><svg style="left:987px;top:596px" width="9" height="6" viewBox="0 0 9 6"><path d="M0.5 0.5h8l-4 4.5z" fill="#aaa"/></svg><div class="t" style="left:847px;top:615px;font-size:11px;color:#eeeeee;">Screen ...</div><div class="a" style="left:926px;top:614px;width:21px;height:17px;border:1px solid #4a4a4a;background:#333"></div><div class="a" style="left:951px;top:614px;width:49px;height:17px;border:1px solid #555;background:#2e2e2e"></div><div class="t" style="left:956px;top:616px;font-size:12px;color:#eeeeee;">Un...</div><svg style="left:987px;top:619px" width="9" height="6" viewBox="0 0 9 6"><path d="M0.5 0.5h8l-4 4.5z" fill="#aaa"/></svg><div class="t" style="left:847px;top:638px;font-size:11px;color:#eeeeee;">Camera ...</div><svg style="left:915px;top:641px" width="6" height="6" viewBox="0 0 6 6"><circle cx="3" cy="3" r="2.3" fill="#777"/></svg><div class="a" style="left:926px;top:637px;width:21px;height:17px;border:1px solid #4a4a4a;background:#333"></div><svg style="left:933px;top:641px" width="7" height="9" viewBox="0 0 7 9"><path d="M1 0.5l5 4-5 4z" fill="#bbb"/></svg><div class="a" style="left:0;top:0;width:1024px;height:726px;clip-path:inset(630px 30px 70px 950px)"><div class="t" style="left:955px;top:640px;font-size:11.5px;color:#eeeeee;">Camera</div></div><div class="a" style="left:993px;top:640px;width:1px;height:11px;background:#3a7ad8;"></div><div class="a" style="left:826px;top:651px;width:193px;height:49px;background:#333333;"></div><div class="a" style="left:833px;top:659px;width:93px;height:26px;border:1px solid #555;background:#393939"></div><div class="t" style="left:868px;top:665px;font-size:12px;color:#eeeeee;">Info</div></body></html>
